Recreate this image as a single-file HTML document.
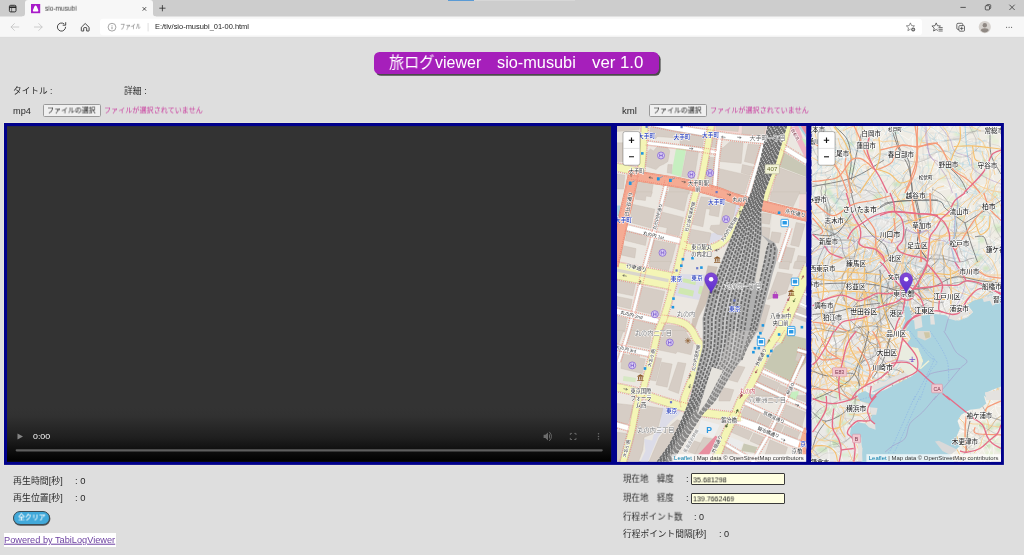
<!DOCTYPE html>
<html lang="ja"><head><meta charset="utf-8"><title>sio-musubi</title>
<style>
html,body{margin:0;padding:0;background:#dedede;}
#root{position:relative;width:1024px;height:555px;overflow:hidden;background:#dedede;font-family:"Liberation Sans","Noto Sans CJK JP",sans-serif;}
#bg{position:absolute;left:0;top:0;will-change:transform;}
.t{will-change:transform;position:absolute;white-space:nowrap;transform-origin:0 50%;line-height:1;margin:0;padding:0;font-weight:normal;text-decoration:none;}
.banner{position:absolute;left:374px;top:52.1px;width:285px;height:22.4px;margin:0;border-radius:5.5px;background:#a61fbb;box-shadow:1.6px 1.8px 0.6px #4a4a4a;}
.fbtn{position:absolute;box-sizing:border-box;background:#f0f0f0;border:0.6px solid #9a9a9a;border-radius:1.6px;}
.clr{position:absolute;box-sizing:border-box;background:#41a9da;border:0.9px solid #3c4a52;border-radius:7px;padding:0;margin:0;box-shadow:0.4px 0.8px 0.5px #555;}
.lnkbg{position:absolute;background:#fff;}
.inp{position:absolute;box-sizing:border-box;background:#ffffe0;border:1.05px solid #3a3a3a;border-radius:1px;}
</style></head>
<body><div id="root">
<svg id="bg" width="1024" height="555" viewBox="0 0 1024 555" font-family="Liberation Sans, Noto Sans CJK JP, sans-serif">
<rect x="0" y="0" width="1024" height="16.6" fill="#cdcdcd"/>
<rect x="448" y="0" width="26" height="1" fill="#5b9bd5"/>
<rect x="474" y="0" width="101" height="0.9" fill="#d9d9d9"/>
<rect x="0" y="16.6" width="1024" height="20.6" fill="#f7f7f7"/>
<rect x="0" y="36.9" width="1024" height="0.6" fill="#d4d4d4"/>
<path d="M22 16.6 Q25 16.6 25 13.6 L25 3 Q25 0 28 0 L150 0 Q153 0 153 3 L153 13.6 Q153 16.6 156 16.6 L156 18 L22 18 Z" fill="#f7f7f7"/>
<g fill="none" stroke="#1f1f1f" stroke-width="0.9"><rect x="9.4" y="5.3" width="6.6" height="6.6" rx="1.3"/><path d="M9.4 7.2 H16" stroke-width="1.5"/><path d="M11.6 7.4 V11.9" stroke-width="0.5"/></g>
<rect x="31" y="4" width="9.2" height="9.2" fill="#a81cc9"/><path d="M35.6 5.6 Q36.6 5.6 37.2 7.4 L38.3 10.3 Q38.6 11.6 37.5 11.6 L33.7 11.6 Q32.6 11.6 32.9 10.3 L34 7.4 Q34.6 5.6 35.6 5.6Z" fill="#fff"/>
<path d="M142.6 7.1 L146.2 10.7 M146.2 7.1 L142.6 10.7" stroke="#222" stroke-width="0.75" fill="none"/>
<path d="M159.3 8.2 H165.5 M162.4 5.1 V11.3" stroke="#222" stroke-width="0.75" fill="none"/>
<path d="M960.4 7.4 H965.8" stroke="#222" stroke-width="0.7"/>
<g fill="none" stroke="#222" stroke-width="0.65"><rect x="985.3" y="5.7" width="4.2" height="4.2" rx="0.8"/><path d="M986.6 5.7 V5.4 Q986.6 4.6 987.4 4.6 H989.8 Q990.7 4.6 990.7 5.5 V7.8 Q990.7 8.7 989.8 8.7 H989.5"/></g>
<path d="M1009.4 4.7 L1014.7 10 M1014.7 4.7 L1009.4 10" stroke="#222" stroke-width="0.7" fill="none"/>
<g fill="none" stroke="#c2c2c2" stroke-width="0.8" stroke-linecap="round" stroke-linejoin="round"><path d="M18.8 27 H11.2 M14.4 23.6 L11 27 L14.4 30.4"/><path d="M34.4 27 H42 M38.8 23.6 L42.2 27 L38.8 30.4"/></g>
<g fill="none" stroke="#2b2b2b" stroke-width="0.85" stroke-linecap="round" stroke-linejoin="round"><path d="M65.6 27.2 A4.1 4.1 0 1 1 63.9 23.7"/><path d="M65.7 22.6 V25.2 H63.1"/></g>
<path d="M81.3 27.3 L85.2 23.5 L89.1 27.3 V30.6 Q89.1 31 88.7 31 H86.7 V28.2 Q86.7 27.6 86.1 27.6 H84.3 Q83.7 27.6 83.7 28.2 V31 H81.7 Q81.3 31 81.3 30.6 Z" fill="none" stroke="#2b2b2b" stroke-width="0.85" stroke-linejoin="round"/>
<rect x="100" y="18.8" width="822" height="16.4" rx="3" fill="#fff"/>
<g><circle cx="112" cy="27.2" r="3.9" fill="none" stroke="#808080" stroke-width="0.7"/><path d="M112 26.6 V29.2" stroke="#6a6a6a" stroke-width="0.7"/><circle cx="112" cy="25.4" r="0.45" fill="#6a6a6a"/></g>
<path d="M148.1 23 V31.4" stroke="#c8c8c8" stroke-width="0.6"/>
<path d="M910.40 22.90 L911.58 25.58 L914.49 25.87 L912.30 27.82 L912.93 30.68 L910.40 29.20 L907.87 30.68 L908.50 27.82 L906.31 25.87 L909.22 25.58Z" fill="none" stroke="#5a5a5a" stroke-width="0.65" stroke-linejoin="round"/>
<circle cx="913.2" cy="29.5" r="2.6" fill="#fff"/><circle cx="913.2" cy="29.5" r="1.95" fill="#5a5a5a"/><path d="M912.1 29.5 H914.3 M913.2 28.4 V30.6" stroke="#fff" stroke-width="0.5"/>
<path d="M936.20 22.90 L937.43 25.70 L940.48 26.01 L938.20 28.05 L938.85 31.04 L936.20 29.50 L933.55 31.04 L934.20 28.05 L931.92 26.01 L934.97 25.70Z" fill="none" stroke="#333" stroke-width="0.7" stroke-linejoin="round"/>
<rect x="937.9" y="26.9" width="5" height="5" fill="#f7f7f7"/><path d="M938.9 27.6 H942.3 M938.9 29.3 H942.3 M938.9 31 H942.3" stroke="#333" stroke-width="0.7" stroke-linecap="round"/>
<g fill="none" stroke="#333" stroke-width="0.7" stroke-linejoin="round"><rect x="958.9" y="25.6" width="5.6" height="5.6" rx="1"/><path d="M958.9 29.4 H958 Q956.8 29.4 956.8 28.2 V24.6 Q956.8 23.3 958 23.3 H961.6 Q962.8 23.3 962.8 24.6 V25.6"/><path d="M960 28.4 H963.4 M961.7 26.7 V30.1"/></g>
<circle cx="984.8" cy="27.1" r="6.1" fill="#d6d2ce"/><circle cx="984.8" cy="25.3" r="2.2" fill="#8f8883"/><path d="M980.9 30.6 Q980.9 28.3 984.8 28.3 Q988.7 28.3 988.7 30.6 Q987 32.6 984.8 32.6 Q982.6 32.6 980.9 30.6Z" fill="#8f8883"/>
<g fill="#333"><circle cx="1006.6" cy="27.3" r="0.55"/><circle cx="1009.1" cy="27.3" r="0.55"/><circle cx="1011.6" cy="27.3" r="0.55"/></g>
<rect x="3.3" y="122.2" width="1001.2" height="343.4" fill="#e6e5dd"/>
<rect x="4" y="123" width="999.9" height="341.9" fill="#00008b"/>
<defs><linearGradient id="vg" x1="0" y1="0" x2="0" y2="1"><stop offset="0" stop-color="#333"/><stop offset="0.15" stop-color="#313131"/><stop offset="0.55" stop-color="#1f1f1f"/><stop offset="1" stop-color="#000"/></linearGradient></defs>
<rect x="7" y="126.1" width="604.1" height="335.7" fill="#333"/>
<rect x="7" y="408" width="604.1" height="53.8" fill="url(#vg)"/>
<path d="M17.5 433.4 L23 436.5 L17.5 439.6Z" fill="#858585"/>
<rect x="15.6" y="449.2" width="587.2" height="2.2" rx="1.1" fill="#5e5e5e"/>
<g fill="#6c6c6c"><path d="M543.6 434.7 H545.4 L548 432.4 V440.4 L545.4 438.1 H543.6Z"/><path d="M549 433.6 Q551.2 436.4 549 439.2 L549 433.6Z"/><path d="M549.2 431.8 Q553.8 436.4 549.2 441" fill="none" stroke="#6c6c6c" stroke-width="0.9"/></g>
<path d="M570.3 435 V433.4 H572 M574.3 433.4 H576 V435 M576 437.9 V439.5 H574.3 M572 439.5 H570.3 V437.9" fill="none" stroke="#6c6c6c" stroke-width="0.9"/>
<g fill="#6c6c6c"><circle cx="598.5" cy="433.7" r="0.75"/><circle cx="598.5" cy="436.4" r="0.75"/><circle cx="598.5" cy="439.1" r="0.75"/></g>
<svg x="617.0" y="126.1" width="189.2" height="335.7" viewBox="617.0 126.1 189.2 335.7" overflow="hidden">
<rect x="610" y="120" width="210" height="350" fill="#ebe7e1"/>
<path d="M713.8 125.2 L767.5 125.2 L766.2 136.5 L713.8 130.9Z" fill="#f1dad6"/>
<path d="M800.0 191.8 L807.5 191.8 L807.5 210.5 L798.8 208.0Z" fill="#f1dad6"/>
<path d="M676.0 148.4 L686.2 149.0 L681.0 177.1 L671.4 174.0Z" fill="#c6efc0"/>
<path d="M781.9 150.9 L806.2 165.9 L806.2 177.1 L777.5 165.9Z" fill="#c9c8b6"/>
<path d="M786.2 334.1 L806.2 338.5 L806.2 362.2 L790.0 381.6 L763.8 367.2 L775.0 347.2 L780.0 343.5Z" fill="#c7c8b2"/>
<path d="M616.6 205.5 L620.4 205.5 L620.4 216.8 L616.6 216.8Z" fill="#aad3df"/>
<path d="M735.0 203.6 L740.6 204.9 L731.2 230.5 L721.9 238.6 L710.0 243.6 L709.0 234.2 L717.5 231.8 L727.5 228.0Z" fill="#dcdce8"/>
<path d="M674.8 273.9 L705.4 274.5 L699.1 300.1 L671.0 294.8Z" fill="#dcdce8"/>
<path d="M683.5 278.2 L696.0 280.8 L695.4 285.1 L682.2 282.0Z" fill="#cfe8b0"/>
<path d="M679.8 287.6 L694.1 290.8 L692.9 296.4 L677.9 293.2Z" fill="#cfe8b0"/>
<path d="M699.8 285.8 L703.8 286.4 L701.2 294.8 L697.9 293.2Z" fill="#cfe8b0"/>
<path d="M661.6 407.5 L681.6 410.0 L678.5 414.8 L671.0 421.0 L664.1 428.8 L657.9 437.2 L647.9 461.6 L640.4 461.6 L645.4 451.0 L644.1 439.1 L652.2 440.4 L653.5 435.0 L659.8 427.2Z" fill="#dcdce8"/>
<path d="M623.5 376.0 L636.0 377.9 L635.4 382.2 L622.9 381.0Z" fill="#d6e8c4"/>
<path d="M788.8 392.2 L798.8 391.0 L797.5 399.1 L787.5 399.5Z" fill="#c6efc0"/>
<path d="M788.8 395.4 L797.5 395.4 L796.2 399.8 L788.1 399.8Z" fill="#c6efc0"/>
<path d="M701.0 419.8 L719.8 424.8 L713.5 437.9 L697.2 432.5Z" fill="#eeeeee"/>
<path d="M760.0 210.5 L772.5 211.8 L767.5 263.0 L757.5 263.0Z" fill="#e6e2dc"/>
<path d="M617.0 125.2 L639.8 125.2 L639.1 129.6 L617.0 131.5Z" fill="#d6cdc5" stroke="#c5b9ae" stroke-width="0.35"/>
<path d="M617.0 142.8 L622.9 142.8 L622.9 161.5 L617.0 161.5Z" fill="#d6cdc5" stroke="#c5b9ae" stroke-width="0.35"/>
<path d="M650.4 127.5 L657.2 126.8 L703.5 133.4 L702.2 144.0 L692.2 142.8 L691.0 139.0 L657.2 136.5 L656.0 138.4 L649.5 137.8Z" fill="#d6cdc5" stroke="#c5b9ae" stroke-width="0.35"/>
<path d="M644.1 155.2 L650.4 149.0 L653.5 150.9 L657.2 146.5 L667.2 147.1 L669.8 150.9 L667.9 161.5 L664.1 164.0 L659.8 165.9 L656.0 169.6 L642.9 165.2 L642.2 160.2Z" fill="#d6cdc5" stroke="#c5b9ae" stroke-width="0.35"/>
<path d="M667.9 164.6 L672.2 164.6 L671.6 173.4 L667.2 172.8Z" fill="#d6cdc5" stroke="#c5b9ae" stroke-width="0.35"/>
<path d="M686.6 150.2 L698.5 151.8 L694.1 179.0 L681.6 176.5Z" fill="#d6cdc5" stroke="#c5b9ae" stroke-width="0.35"/>
<path d="M707.9 157.1 L715.4 157.8 L712.2 185.2 L703.5 183.4Z" fill="#d6cdc5" stroke="#c5b9ae" stroke-width="0.35"/>
<path d="M712.9 138.4 L717.2 138.8 L716.6 147.8 L711.6 147.1Z" fill="#d6cdc5" stroke="#c5b9ae" stroke-width="0.35"/>
<path d="M716.2 125.2 L738.8 125.2 L738.1 131.5 L716.2 129.6Z" fill="#d6cdc5" stroke="#c5b9ae" stroke-width="0.35"/>
<path d="M742.5 125.2 L766.2 125.2 L763.8 135.9 L741.9 134.0Z" fill="#d6cdc5" stroke="#c5b9ae" stroke-width="0.35"/>
<path d="M723.1 147.8 L730.0 141.5 L743.1 142.8 L741.2 163.4 L720.0 161.5 L721.2 147.8Z" fill="#d6cdc5" stroke="#c5b9ae" stroke-width="0.35"/>
<path d="M748.1 144.0 L761.2 145.2 L755.0 164.0 L744.4 161.5Z" fill="#d6cdc5" stroke="#c5b9ae" stroke-width="0.35"/>
<path d="M742.5 164.6 L753.8 167.1 L750.0 175.2 L741.2 172.8Z" fill="#d6cdc5" stroke="#c5b9ae" stroke-width="0.35"/>
<path d="M718.1 168.4 L740.0 173.4 L750.0 175.9 L744.4 194.0 L715.6 194.0Z" fill="#d6cdc5" stroke="#c5b9ae" stroke-width="0.35"/>
<path d="M680.0 132.8 L703.8 136.5 L702.5 147.8 L680.0 144.6Z" fill="#d6cdc5" stroke="#c5b9ae" stroke-width="0.35"/>
<path d="M777.5 167.1 L806.2 177.8 L806.2 194.0 L771.9 194.0Z" fill="#d6cdc5" stroke="#c5b9ae" stroke-width="0.35"/>
<path d="M637.9 179.0 L653.5 182.8 L651.6 194.0 L634.8 194.0Z" fill="#d6cdc5" stroke="#c5b9ae" stroke-width="0.35"/>
<path d="M617.2 174.0 L624.8 175.2 L623.5 189.0 L617.2 189.0Z" fill="#d6cdc5" stroke="#c5b9ae" stroke-width="0.35"/>
<path d="M669.8 186.5 L689.8 190.2 L689.1 194.0 L668.5 194.0Z" fill="#d6cdc5" stroke="#c5b9ae" stroke-width="0.35"/>
<path d="M636.0 191.8 L652.2 191.8 L651.0 196.8 L646.0 196.1 L645.4 200.5 L635.4 199.2Z" fill="#d6cdc5" stroke="#c5b9ae" stroke-width="0.35"/>
<path d="M666.6 191.8 L688.5 191.8 L684.1 211.1 L664.1 205.5Z" fill="#d6cdc5" stroke="#c5b9ae" stroke-width="0.35"/>
<path d="M632.2 204.2 L654.8 209.2 L651.0 228.0 L630.4 222.4Z" fill="#d6cdc5" stroke="#c5b9ae" stroke-width="0.35"/>
<path d="M661.0 211.8 L683.5 217.4 L679.1 236.1 L666.0 233.0 L667.2 228.0 L657.9 226.1Z" fill="#d6cdc5" stroke="#c5b9ae" stroke-width="0.35"/>
<path d="M626.6 231.1 L647.2 236.1 L645.4 245.5 L625.4 240.5Z" fill="#d6cdc5" stroke="#c5b9ae" stroke-width="0.35"/>
<path d="M622.2 245.5 L636.0 248.6 L634.8 258.0 L621.0 254.9Z" fill="#d6cdc5" stroke="#c5b9ae" stroke-width="0.35"/>
<path d="M653.5 239.9 L676.0 244.2 L671.0 263.0 L649.1 263.0Z" fill="#d6cdc5" stroke="#c5b9ae" stroke-width="0.35"/>
<path d="M701.0 196.8 L712.2 198.0 L709.8 209.2 L706.0 208.6 L702.9 226.8 L692.2 224.2Z" fill="#d6cdc5" stroke="#c5b9ae" stroke-width="0.35"/>
<path d="M711.0 203.6 L720.4 204.9 L718.5 216.8 L709.1 214.9Z" fill="#d6cdc5" stroke="#c5b9ae" stroke-width="0.35"/>
<path d="M724.8 202.4 L736.0 204.2 L731.0 228.0 L723.5 235.5 L717.2 234.2 L709.8 229.2 L711.0 225.5 L719.8 224.9Z" fill="#d6cdc5" stroke="#c5b9ae" stroke-width="0.35"/>
<path d="M691.0 229.2 L711.0 233.0 L708.5 244.2 L689.8 243.0 L688.5 240.5Z" fill="#d6cdc5" stroke="#c5b9ae" stroke-width="0.35"/>
<path d="M771.2 191.8 L800.0 191.8 L793.1 206.8 L770.0 200.5Z" fill="#d6cdc5" stroke="#c5b9ae" stroke-width="0.35"/>
<path d="M762.5 213.0 L771.2 214.2 L769.4 224.2 L761.2 223.0Z" fill="#d6cdc5" stroke="#c5b9ae" stroke-width="0.35"/>
<path d="M761.2 226.8 L770.0 228.0 L767.5 253.0 L760.0 253.0Z" fill="#d6cdc5" stroke="#c5b9ae" stroke-width="0.35"/>
<path d="M771.9 231.8 L781.2 233.0 L778.8 243.0 L770.0 241.8Z" fill="#d6cdc5" stroke="#c5b9ae" stroke-width="0.35"/>
<path d="M796.2 222.4 L805.0 224.2 L798.8 246.8 L790.6 244.9Z" fill="#d6cdc5" stroke="#c5b9ae" stroke-width="0.35"/>
<path d="M783.8 246.8 L795.0 248.6 L791.2 263.0 L780.6 263.0Z" fill="#d6cdc5" stroke="#c5b9ae" stroke-width="0.35"/>
<path d="M798.1 255.5 L806.2 256.8 L806.2 263.0 L796.2 263.0Z" fill="#d6cdc5" stroke="#c5b9ae" stroke-width="0.35"/>
<path d="M649.8 261.4 L671.0 261.4 L668.5 270.8 L649.1 266.4Z" fill="#d6cdc5" stroke="#c5b9ae" stroke-width="0.35"/>
<path d="M617.0 280.1 L635.4 283.9 L632.9 295.8 L617.0 292.6Z" fill="#d6cdc5" stroke="#c5b9ae" stroke-width="0.35"/>
<path d="M617.0 296.4 L632.2 299.5 L630.4 308.9 L617.0 305.8Z" fill="#d6cdc5" stroke="#c5b9ae" stroke-width="0.35"/>
<path d="M642.2 286.4 L664.8 291.4 L659.1 315.8 L637.2 310.8Z" fill="#d6cdc5" stroke="#c5b9ae" stroke-width="0.35"/>
<path d="M617.0 315.8 L627.2 318.2 L624.8 332.0 L617.0 332.0Z" fill="#d6cdc5" stroke="#c5b9ae" stroke-width="0.35"/>
<path d="M632.2 319.5 L656.0 324.5 L654.8 332.0 L630.4 332.0Z" fill="#d6cdc5" stroke="#c5b9ae" stroke-width="0.35"/>
<path d="M663.5 324.5 L686.0 327.0 L691.6 332.0 L662.2 332.0Z" fill="#d6cdc5" stroke="#c5b9ae" stroke-width="0.35"/>
<path d="M707.9 265.8 L717.5 267.0 L706.2 303.2 L698.8 317.0 L694.1 332.0 L691.0 332.0 L692.5 319.5 L698.5 303.2 L703.5 287.0 L706.0 274.5Z" fill="#cfc3b8" stroke="#c5b9ae" stroke-width="0.35"/>
<path d="M777.5 272.0 L792.5 274.5 L786.2 293.2 L767.5 299.5Z" fill="#d6cdc5" stroke="#c5b9ae" stroke-width="0.35"/>
<path d="M780.0 261.4 L790.0 261.4 L788.8 269.5 L778.8 268.2Z" fill="#d6cdc5" stroke="#c5b9ae" stroke-width="0.35"/>
<path d="M795.0 261.4 L805.0 261.4 L803.1 269.5 L793.1 268.2Z" fill="#d6cdc5" stroke="#c5b9ae" stroke-width="0.35"/>
<path d="M760.0 303.2 L770.0 305.8 L762.5 332.0 L755.0 332.0Z" fill="#d6cdc5" stroke="#c5b9ae" stroke-width="0.35"/>
<path d="M797.5 305.8 L806.2 309.5 L806.2 322.0 L792.5 317.0Z" fill="#d6cdc5" stroke="#c5b9ae" stroke-width="0.35"/>
<path d="M628.5 330.4 L652.2 330.4 L649.1 348.5 L624.8 343.5Z" fill="#d6cdc5" stroke="#c5b9ae" stroke-width="0.35"/>
<path d="M660.4 330.4 L684.8 330.4 L693.5 343.5 L691.0 354.8 L677.2 351.6 L676.0 353.5 L657.9 349.8Z" fill="#d6cdc5" stroke="#c5b9ae" stroke-width="0.35"/>
<path d="M622.2 353.5 L629.8 355.4 L630.4 354.1 L639.8 356.0 L639.1 357.9 L645.4 359.1 L642.2 373.5 L621.0 368.5Z" fill="#d6cdc5" stroke="#c5b9ae" stroke-width="0.35"/>
<path d="M654.8 357.2 L661.6 358.5 L656.0 381.0 L649.1 379.8Z" fill="#d6cdc5" stroke="#c5b9ae" stroke-width="0.35"/>
<path d="M661.6 362.2 L672.2 364.1 L667.2 387.2 L656.0 384.8Z" fill="#d6cdc5" stroke="#c5b9ae" stroke-width="0.35"/>
<path d="M677.9 362.2 L686.0 363.5 L678.5 393.5 L668.5 389.8Z" fill="#d6cdc5" stroke="#c5b9ae" stroke-width="0.35"/>
<path d="M617.0 330.4 L623.5 330.4 L618.5 344.8 L617.0 344.8Z" fill="#d6cdc5" stroke="#c5b9ae" stroke-width="0.35"/>
<path d="M760.0 374.8 L780.0 383.5 L776.2 391.0 L756.2 382.2Z" fill="#d6cdc5" stroke="#c5b9ae" stroke-width="0.35"/>
<path d="M732.5 364.8 L745.0 367.2 L737.5 382.2 L728.8 379.8Z" fill="#d6cdc5" stroke="#c5b9ae" stroke-width="0.35"/>
<path d="M721.2 387.2 L733.8 389.8 L730.0 401.0 L718.8 401.0Z" fill="#d6cdc5" stroke="#c5b9ae" stroke-width="0.35"/>
<path d="M797.5 352.2 L805.0 354.1 L802.5 362.2 L795.0 360.4Z" fill="#d6cdc5" stroke="#c5b9ae" stroke-width="0.35"/>
<path d="M753.8 386.0 L775.0 394.8 L772.5 401.0 L750.0 393.5Z" fill="#d6cdc5" stroke="#c5b9ae" stroke-width="0.35"/>
<path d="M780.0 384.8 L792.5 389.8 L787.5 401.0 L776.2 396.0Z" fill="#d6cdc5" stroke="#c5b9ae" stroke-width="0.35"/>
<path d="M796.2 383.5 L806.2 387.2 L806.2 391.0 L795.0 389.8Z" fill="#d6cdc5" stroke="#c5b9ae" stroke-width="0.35"/>
<path d="M617.0 403.5 L634.8 405.4 L627.9 424.1 L617.0 422.9Z" fill="#d6cdc5" stroke="#c5b9ae" stroke-width="0.35"/>
<path d="M639.8 404.8 L662.9 408.5 L658.5 426.0 L653.5 433.5 L644.1 437.2 L642.9 449.8 L638.5 461.6 L624.8 461.6 L632.2 432.2Z" fill="#d6cdc5" stroke="#c5b9ae" stroke-width="0.35"/>
<path d="M617.0 432.2 L627.2 433.5 L621.0 461.6 L617.0 461.6Z" fill="#d6cdc5" stroke="#c5b9ae" stroke-width="0.35"/>
<path d="M665.4 429.8 L677.2 419.8 L681.0 421.0 L671.0 446.0 L657.2 461.6 L649.1 461.6 L659.1 437.9Z" fill="#d6cdc5" stroke="#c5b9ae" stroke-width="0.35"/>
<path d="M691.0 439.8 L702.2 443.5 L697.2 454.8 L686.0 451.0Z" fill="#d6cdc5" stroke="#c5b9ae" stroke-width="0.35"/>
<path d="M703.5 437.2 L713.5 439.1 L698.5 461.6 L691.0 461.6Z" fill="#d6cdc5" stroke="#c5b9ae" stroke-width="0.35"/>
<path d="M745.0 406.0 L760.0 412.2 L755.0 422.9 L740.0 416.0Z" fill="#d6cdc5" stroke="#c5b9ae" stroke-width="0.35"/>
<path d="M761.2 413.5 L772.5 418.5 L767.5 428.5 L756.2 423.5Z" fill="#d6cdc5" stroke="#c5b9ae" stroke-width="0.35"/>
<path d="M786.2 404.8 L805.6 412.2 L801.2 429.8 L780.0 419.8Z" fill="#d6cdc5" stroke="#c5b9ae" stroke-width="0.35"/>
<path d="M773.8 421.0 L783.8 425.4 L780.0 433.5 L770.0 429.8Z" fill="#d6cdc5" stroke="#c5b9ae" stroke-width="0.35"/>
<path d="M785.0 426.0 L800.0 432.2 L796.2 441.0 L781.2 434.8Z" fill="#d6cdc5" stroke="#c5b9ae" stroke-width="0.35"/>
<path d="M735.0 424.8 L752.5 432.2 L748.8 439.8 L731.2 432.2Z" fill="#d6cdc5" stroke="#c5b9ae" stroke-width="0.35"/>
<path d="M753.8 432.9 L763.8 437.2 L760.0 445.4 L750.0 441.0Z" fill="#d6cdc5" stroke="#c5b9ae" stroke-width="0.35"/>
<path d="M770.0 439.8 L787.5 447.2 L785.0 454.8 L765.0 454.8Z" fill="#d6cdc5" stroke="#c5b9ae" stroke-width="0.35"/>
<path d="M721.2 446.0 L740.0 452.2 L738.8 461.6 L717.5 461.6Z" fill="#d6cdc5" stroke="#c5b9ae" stroke-width="0.35"/>
<path d="M797.5 395.4 L806.2 395.4 L806.2 402.2 L796.2 398.5Z" fill="#d6cdc5" stroke="#c5b9ae" stroke-width="0.35"/>
<path d="M750.0 395.4 L782.5 395.4 L780.0 401.0 L761.2 403.5 L747.5 399.8Z" fill="#d6cdc5" stroke="#c5b9ae" stroke-width="0.35"/>
<path d="M727.5 436.0 L743.8 442.2 L740.0 449.8 L725.0 443.5Z" fill="#ebebeb"/>
<path d="M743.8 443.5 L757.5 447.2 L755.0 452.9 L741.2 451.0Z" fill="#c8c8b4"/>
<path d="M790.0 127.8 L798.1 125.2 L806.2 147.8 L806.2 160.2Z" fill="#efb6c3"/>
<path d="M797.5 125.2 L800.0 125.2 L806.2 134.6 L806.2 137.8Z" fill="#aad3df"/>
<path d="M800.2 125.2 L806.2 125.2 L806.2 135.0Z" fill="#e88ea0"/>
<path d="M801.2 137.8 L806.2 140.2 L806.2 147.1Z" fill="#c6efc0"/>
<path d="M652.0 123.0 C656.7 123.9 667.0 126.3 680.0 128.6 C693.0 130.9 715.5 134.8 730.0 136.8 C744.5 138.7 760.8 139.9 767.0 140.5" fill="none" stroke="#cfc9c2" stroke-width="6.3" stroke-linecap="butt" stroke-linejoin="round"/>
<path d="M646.0 142.8 C653.5 143.7 679.1 146.8 691.0 148.4 C702.9 150.0 712.9 151.8 717.2 152.5" fill="none" stroke="#cfc9c2" stroke-width="3.4000000000000004" stroke-linecap="butt" stroke-linejoin="round"/>
<path d="M719.8 137.8 C719.3 141.5 717.9 151.3 717.0 160.0 C716.1 168.7 714.9 185.0 714.5 190.0" fill="none" stroke="#cfc9c2" stroke-width="4.0" stroke-linecap="butt" stroke-linejoin="round"/>
<path d="M763.1 144.0 C760.7 152.2 751.6 183.5 748.8 193.0 C745.9 202.5 746.5 199.7 746.0 201.0" fill="none" stroke="#cfc9c2" stroke-width="3.45" stroke-linecap="butt" stroke-linejoin="round"/>
<path d="M783.0 147.0 L807.0 162.0" fill="none" stroke="#cfc9c2" stroke-width="5.1000000000000005" stroke-linecap="butt" stroke-linejoin="round"/>
<path d="M626.0 227.4 C630.6 228.5 644.3 232.0 653.5 234.2 C662.7 236.5 676.4 240.0 681.0 241.1" fill="none" stroke="#cfc9c2" stroke-width="5.7" stroke-linecap="butt" stroke-linejoin="round"/>
<path d="M667.0 181.0 C666.5 183.0 666.4 184.1 664.1 193.0 C661.9 201.9 656.5 222.8 653.5 234.2 C650.5 245.8 648.3 253.2 646.0 262.0 C643.7 270.8 642.7 275.5 639.8 287.0 C636.8 298.5 632.0 318.5 628.5 331.0 C625.0 343.5 620.2 357.0 618.5 362.2" fill="none" stroke="#cfc9c2" stroke-width="3.2" stroke-linecap="butt" stroke-linejoin="round"/>
<path d="M616.0 311.2 L658.5 321.4" fill="none" stroke="#cfc9c2" stroke-width="5.7" stroke-linecap="butt" stroke-linejoin="round"/>
<path d="M616.0 347.0 L649.8 354.1" fill="none" stroke="#cfc9c2" stroke-width="5.2" stroke-linecap="butt" stroke-linejoin="round"/>
<path d="M616.0 424.5 L629.8 428.5" fill="none" stroke="#cfc9c2" stroke-width="5.2" stroke-linecap="butt" stroke-linejoin="round"/>
<path d="M762.5 371.0 L807.0 391.5" fill="none" stroke="#cfc9c2" stroke-width="3.7" stroke-linecap="butt" stroke-linejoin="round"/>
<path d="M755.0 383.5 L807.0 408.0" fill="none" stroke="#cfc9c2" stroke-width="3.7" stroke-linecap="butt" stroke-linejoin="round"/>
<path d="M745.0 402.9 C748.8 404.7 757.2 408.6 767.5 413.5 C777.8 418.4 800.4 428.9 807.0 432.0" fill="none" stroke="#cfc9c2" stroke-width="3.5" stroke-linecap="butt" stroke-linejoin="round"/>
<path d="M736.2 419.8 C739.4 420.9 747.7 423.5 755.0 426.4 C762.3 429.3 771.3 433.5 780.0 437.0 C788.7 440.5 802.5 445.8 807.0 447.6" fill="none" stroke="#cfc9c2" stroke-width="7.7" stroke-linecap="butt" stroke-linejoin="round"/>
<path d="M723.8 443.5 L760.0 465.0" fill="none" stroke="#cfc9c2" stroke-width="3.3" stroke-linecap="butt" stroke-linejoin="round"/>
<path d="M803.8 356.0 C801.9 360.2 795.6 373.7 792.5 381.0 C789.4 388.3 788.3 392.3 785.0 400.0 C781.7 407.7 777.1 418.3 772.5 427.2 C767.9 436.2 760.9 447.5 757.5 453.5 C754.1 459.5 752.9 461.4 752.0 463.0" fill="none" stroke="#cfc9c2" stroke-width="3.2" stroke-linecap="butt" stroke-linejoin="round"/>
<path d="M797.5 349.8 L807.0 352.5" fill="none" stroke="#cfc9c2" stroke-width="3.2" stroke-linecap="butt" stroke-linejoin="round"/>
<path d="M790.0 228.0 L778.8 262.0" fill="none" stroke="#cfc9c2" stroke-width="3.2" stroke-linecap="butt" stroke-linejoin="round"/>
<path d="M797.5 292.0 L807.0 294.7" fill="none" stroke="#cfc9c2" stroke-width="2.7" stroke-linecap="butt" stroke-linejoin="round"/>
<path d="M796.9 302.0 L807.0 306.6" fill="none" stroke="#cfc9c2" stroke-width="2.7" stroke-linecap="butt" stroke-linejoin="round"/>
<path d="M795.0 313.2 L807.0 317.3" fill="none" stroke="#cfc9c2" stroke-width="2.7" stroke-linecap="butt" stroke-linejoin="round"/>
<path d="M652.0 123.0 C656.7 123.9 667.0 126.3 680.0 128.6 C693.0 130.9 715.5 134.8 730.0 136.8 C744.5 138.7 760.8 139.9 767.0 140.5" fill="none" stroke="#ffffff" stroke-width="5.6" stroke-linecap="butt" stroke-linejoin="round"/>
<path d="M646.0 142.8 C653.5 143.7 679.1 146.8 691.0 148.4 C702.9 150.0 712.9 151.8 717.2 152.5" fill="none" stroke="#ffffff" stroke-width="2.7" stroke-linecap="butt" stroke-linejoin="round"/>
<path d="M719.8 137.8 C719.3 141.5 717.9 151.3 717.0 160.0 C716.1 168.7 714.9 185.0 714.5 190.0" fill="none" stroke="#ffffff" stroke-width="3.3" stroke-linecap="butt" stroke-linejoin="round"/>
<path d="M763.1 144.0 C760.7 152.2 751.6 183.5 748.8 193.0 C745.9 202.5 746.5 199.7 746.0 201.0" fill="none" stroke="#ffffff" stroke-width="2.75" stroke-linecap="butt" stroke-linejoin="round"/>
<path d="M783.0 147.0 L807.0 162.0" fill="none" stroke="#ffffff" stroke-width="4.4" stroke-linecap="butt" stroke-linejoin="round"/>
<path d="M626.0 227.4 C630.6 228.5 644.3 232.0 653.5 234.2 C662.7 236.5 676.4 240.0 681.0 241.1" fill="none" stroke="#ffffff" stroke-width="5" stroke-linecap="butt" stroke-linejoin="round"/>
<path d="M667.0 181.0 C666.5 183.0 666.4 184.1 664.1 193.0 C661.9 201.9 656.5 222.8 653.5 234.2 C650.5 245.8 648.3 253.2 646.0 262.0 C643.7 270.8 642.7 275.5 639.8 287.0 C636.8 298.5 632.0 318.5 628.5 331.0 C625.0 343.5 620.2 357.0 618.5 362.2" fill="none" stroke="#ffffff" stroke-width="2.5" stroke-linecap="butt" stroke-linejoin="round"/>
<path d="M616.0 311.2 L658.5 321.4" fill="none" stroke="#ffffff" stroke-width="5" stroke-linecap="butt" stroke-linejoin="round"/>
<path d="M616.0 347.0 L649.8 354.1" fill="none" stroke="#ffffff" stroke-width="4.5" stroke-linecap="butt" stroke-linejoin="round"/>
<path d="M616.0 424.5 L629.8 428.5" fill="none" stroke="#ffffff" stroke-width="4.5" stroke-linecap="butt" stroke-linejoin="round"/>
<path d="M762.5 371.0 L807.0 391.5" fill="none" stroke="#ffffff" stroke-width="3" stroke-linecap="butt" stroke-linejoin="round"/>
<path d="M755.0 383.5 L807.0 408.0" fill="none" stroke="#ffffff" stroke-width="3" stroke-linecap="butt" stroke-linejoin="round"/>
<path d="M745.0 402.9 C748.8 404.7 757.2 408.6 767.5 413.5 C777.8 418.4 800.4 428.9 807.0 432.0" fill="none" stroke="#ffffff" stroke-width="2.8" stroke-linecap="butt" stroke-linejoin="round"/>
<path d="M736.2 419.8 C739.4 420.9 747.7 423.5 755.0 426.4 C762.3 429.3 771.3 433.5 780.0 437.0 C788.7 440.5 802.5 445.8 807.0 447.6" fill="none" stroke="#ffffff" stroke-width="7" stroke-linecap="butt" stroke-linejoin="round"/>
<path d="M723.8 443.5 L760.0 465.0" fill="none" stroke="#ffffff" stroke-width="2.6" stroke-linecap="butt" stroke-linejoin="round"/>
<path d="M803.8 356.0 C801.9 360.2 795.6 373.7 792.5 381.0 C789.4 388.3 788.3 392.3 785.0 400.0 C781.7 407.7 777.1 418.3 772.5 427.2 C767.9 436.2 760.9 447.5 757.5 453.5 C754.1 459.5 752.9 461.4 752.0 463.0" fill="none" stroke="#ffffff" stroke-width="2.5" stroke-linecap="butt" stroke-linejoin="round"/>
<path d="M797.5 349.8 L807.0 352.5" fill="none" stroke="#ffffff" stroke-width="2.5" stroke-linecap="butt" stroke-linejoin="round"/>
<path d="M790.0 228.0 L778.8 262.0" fill="none" stroke="#ffffff" stroke-width="2.5" stroke-linecap="butt" stroke-linejoin="round"/>
<path d="M797.5 292.0 L807.0 294.7" fill="none" stroke="#ffffff" stroke-width="2" stroke-linecap="butt" stroke-linejoin="round"/>
<path d="M796.9 302.0 L807.0 306.6" fill="none" stroke="#ffffff" stroke-width="2" stroke-linecap="butt" stroke-linejoin="round"/>
<path d="M795.0 313.2 L807.0 317.3" fill="none" stroke="#ffffff" stroke-width="2" stroke-linecap="butt" stroke-linejoin="round"/>
<path d="M645.0 124.0 C644.7 128.3 643.7 142.0 643.0 150.0 C642.3 158.0 641.3 168.3 641.0 172.0" fill="none" stroke="#c9cb8a" stroke-width="6.6" stroke-linecap="butt" stroke-linejoin="round"/>
<path d="M615.0 166.8 C617.2 167.3 624.3 168.7 628.5 169.6 C632.7 170.5 638.1 171.9 640.0 172.3" fill="none" stroke="#c9cb8a" stroke-width="7.6" stroke-linecap="butt" stroke-linejoin="round"/>
<path d="M711.5 124.0 C710.6 129.2 707.8 145.6 706.0 155.0 C704.2 164.4 702.7 173.9 701.0 180.2 C699.3 186.6 697.4 187.8 695.8 193.0 C694.1 198.2 692.7 204.9 691.0 211.8 C689.3 218.6 687.4 225.9 685.4 234.2 C683.4 242.6 681.2 252.2 678.8 262.0 C676.4 271.8 673.5 283.9 671.0 293.2 C668.5 302.6 665.6 312.0 663.5 318.2 C661.4 324.5 660.1 324.7 658.2 331.0 C656.3 337.3 654.3 348.1 652.2 356.0 C650.2 363.9 647.6 372.9 646.0 378.5 C644.4 384.1 644.4 385.6 642.9 389.8 C641.4 393.9 639.2 396.2 637.2 403.5 C635.3 410.8 633.4 423.6 631.0 433.5 C628.6 443.4 624.3 458.1 623.0 463.0" fill="none" stroke="#c9cb8a" stroke-width="6.1" stroke-linecap="butt" stroke-linejoin="round"/>
<path d="M745.0 204.2 C744.0 206.5 741.2 213.0 738.8 218.0 C736.2 223.0 733.5 229.7 730.0 234.2 C726.5 238.8 722.7 243.0 717.5 245.5 C712.3 248.0 704.5 249.3 698.8 249.2 C693.0 249.2 685.6 245.7 683.0 245.0" fill="none" stroke="#c9cb8a" stroke-width="6.3" stroke-linecap="butt" stroke-linejoin="round"/>
<path d="M662.0 319.0 C664.3 319.3 672.0 319.8 676.0 320.8 C680.0 321.7 683.3 322.8 686.0 324.5 C688.7 326.2 690.6 328.7 692.2 331.0 C693.9 333.3 694.5 336.0 696.0 338.5 C697.5 341.0 700.3 343.2 701.0 346.0 C701.7 348.8 700.8 351.2 700.0 355.0 C699.2 358.8 697.9 363.1 696.0 368.5 C694.1 373.9 690.5 382.0 688.5 387.2 C686.5 392.5 684.6 396.7 684.0 400.0 C683.4 403.3 684.8 405.8 685.0 407.0" fill="none" stroke="#c9cb8a" stroke-width="6.6" stroke-linecap="butt" stroke-linejoin="round"/>
<path d="M615.0 270.3 L672.9 281.4" fill="none" stroke="#c9cb8a" stroke-width="16.6" stroke-linecap="butt" stroke-linejoin="round"/>
<path d="M615.0 387.2 C616.7 387.5 621.2 388.1 625.4 389.1 C629.6 390.1 635.3 391.5 640.0 393.0 C644.7 394.5 649.2 396.5 653.5 398.0 C657.8 399.5 660.6 400.4 666.0 402.0 C671.4 403.6 679.8 406.1 686.0 407.9 C692.2 409.6 695.2 411.1 703.5 412.5 C711.8 413.9 729.8 415.9 736.0 416.6 C742.2 417.4 740.2 416.9 741.0 417.0" fill="none" stroke="#c9cb8a" stroke-width="7.6" stroke-linecap="butt" stroke-linejoin="round"/>
<path d="M809.0 268.0 C807.5 271.2 803.4 280.1 800.2 287.0 C797.1 293.9 793.5 302.2 790.2 309.5 C787.0 316.8 783.4 325.8 781.0 331.0 C778.6 336.2 776.8 339.3 776.0 341.0" fill="none" stroke="#c9cb8a" stroke-width="11.1" stroke-linecap="butt" stroke-linejoin="round"/>
<path d="M781.0 328.0 C778.8 331.6 771.4 342.6 767.5 349.8 C763.6 356.9 760.8 364.1 757.5 371.0 C754.2 377.9 750.2 386.2 747.5 391.0 C744.8 395.8 743.1 396.0 741.0 400.0 C738.9 404.0 737.2 409.2 734.8 414.8 C732.2 420.3 729.5 425.5 726.0 433.5 C722.5 441.5 716.0 458.1 714.0 463.0" fill="none" stroke="#c9cb8a" stroke-width="7.1" stroke-linecap="butt" stroke-linejoin="round"/>
<path d="M789.0 125.0 C788.1 128.4 785.4 138.8 783.5 145.2 C781.6 151.8 779.3 158.8 777.5 164.0 C775.7 169.2 774.2 171.7 772.5 176.5 C770.8 181.3 768.6 188.8 767.3 193.0 C766.0 197.2 765.0 200.5 764.5 202.0" fill="none" stroke="#c9cb8a" stroke-width="4.5" stroke-linecap="butt" stroke-linejoin="round"/>
<path d="M645.0 124.0 C644.7 128.3 643.7 142.0 643.0 150.0 C642.3 158.0 641.3 168.3 641.0 172.0" fill="none" stroke="#f4f5b6" stroke-width="6" stroke-linecap="butt" stroke-linejoin="round"/>
<path d="M615.0 166.8 C617.2 167.3 624.3 168.7 628.5 169.6 C632.7 170.5 638.1 171.9 640.0 172.3" fill="none" stroke="#f4f5b6" stroke-width="7" stroke-linecap="butt" stroke-linejoin="round"/>
<path d="M711.5 124.0 C710.6 129.2 707.8 145.6 706.0 155.0 C704.2 164.4 702.7 173.9 701.0 180.2 C699.3 186.6 697.4 187.8 695.8 193.0 C694.1 198.2 692.7 204.9 691.0 211.8 C689.3 218.6 687.4 225.9 685.4 234.2 C683.4 242.6 681.2 252.2 678.8 262.0 C676.4 271.8 673.5 283.9 671.0 293.2 C668.5 302.6 665.6 312.0 663.5 318.2 C661.4 324.5 660.1 324.7 658.2 331.0 C656.3 337.3 654.3 348.1 652.2 356.0 C650.2 363.9 647.6 372.9 646.0 378.5 C644.4 384.1 644.4 385.6 642.9 389.8 C641.4 393.9 639.2 396.2 637.2 403.5 C635.3 410.8 633.4 423.6 631.0 433.5 C628.6 443.4 624.3 458.1 623.0 463.0" fill="none" stroke="#f4f5b6" stroke-width="5.5" stroke-linecap="butt" stroke-linejoin="round"/>
<path d="M745.0 204.2 C744.0 206.5 741.2 213.0 738.8 218.0 C736.2 223.0 733.5 229.7 730.0 234.2 C726.5 238.8 722.7 243.0 717.5 245.5 C712.3 248.0 704.5 249.3 698.8 249.2 C693.0 249.2 685.6 245.7 683.0 245.0" fill="none" stroke="#f4f5b6" stroke-width="5.7" stroke-linecap="butt" stroke-linejoin="round"/>
<path d="M662.0 319.0 C664.3 319.3 672.0 319.8 676.0 320.8 C680.0 321.7 683.3 322.8 686.0 324.5 C688.7 326.2 690.6 328.7 692.2 331.0 C693.9 333.3 694.5 336.0 696.0 338.5 C697.5 341.0 700.3 343.2 701.0 346.0 C701.7 348.8 700.8 351.2 700.0 355.0 C699.2 358.8 697.9 363.1 696.0 368.5 C694.1 373.9 690.5 382.0 688.5 387.2 C686.5 392.5 684.6 396.7 684.0 400.0 C683.4 403.3 684.8 405.8 685.0 407.0" fill="none" stroke="#f4f5b6" stroke-width="6" stroke-linecap="butt" stroke-linejoin="round"/>
<path d="M615.0 270.3 L672.9 281.4" fill="none" stroke="#f4f5b6" stroke-width="16" stroke-linecap="butt" stroke-linejoin="round"/>
<path d="M615.0 387.2 C616.7 387.5 621.2 388.1 625.4 389.1 C629.6 390.1 635.3 391.5 640.0 393.0 C644.7 394.5 649.2 396.5 653.5 398.0 C657.8 399.5 660.6 400.4 666.0 402.0 C671.4 403.6 679.8 406.1 686.0 407.9 C692.2 409.6 695.2 411.1 703.5 412.5 C711.8 413.9 729.8 415.9 736.0 416.6 C742.2 417.4 740.2 416.9 741.0 417.0" fill="none" stroke="#f4f5b6" stroke-width="7" stroke-linecap="butt" stroke-linejoin="round"/>
<path d="M809.0 268.0 C807.5 271.2 803.4 280.1 800.2 287.0 C797.1 293.9 793.5 302.2 790.2 309.5 C787.0 316.8 783.4 325.8 781.0 331.0 C778.6 336.2 776.8 339.3 776.0 341.0" fill="none" stroke="#f4f5b6" stroke-width="10.5" stroke-linecap="butt" stroke-linejoin="round"/>
<path d="M781.0 328.0 C778.8 331.6 771.4 342.6 767.5 349.8 C763.6 356.9 760.8 364.1 757.5 371.0 C754.2 377.9 750.2 386.2 747.5 391.0 C744.8 395.8 743.1 396.0 741.0 400.0 C738.9 404.0 737.2 409.2 734.8 414.8 C732.2 420.3 729.5 425.5 726.0 433.5 C722.5 441.5 716.0 458.1 714.0 463.0" fill="none" stroke="#f4f5b6" stroke-width="6.5" stroke-linecap="butt" stroke-linejoin="round"/>
<path d="M789.0 125.0 C788.1 128.4 785.4 138.8 783.5 145.2 C781.6 151.8 779.3 158.8 777.5 164.0 C775.7 169.2 774.2 171.7 772.5 176.5 C770.8 181.3 768.6 188.8 767.3 193.0 C766.0 197.2 765.0 200.5 764.5 202.0" fill="none" stroke="#f4f5b6" stroke-width="3.9" stroke-linecap="butt" stroke-linejoin="round"/>
<path d="M615.0 269.6 L668.5 280.6" fill="none" stroke="#dad6cc" stroke-width="3.2" stroke-linecap="butt" stroke-linejoin="round"/>
<path d="M630.0 175.0 C635.0 175.8 650.7 178.3 660.0 179.8 C669.3 181.3 676.7 182.1 686.0 184.1 C695.3 186.1 707.5 189.1 716.0 191.6 C724.5 194.1 729.0 196.8 737.0 199.2 C745.0 201.7 752.2 203.1 764.0 206.0 C775.8 208.9 800.7 214.8 808.0 216.6" fill="none" stroke="#d98a70" stroke-width="10.6" stroke-linecap="butt" stroke-linejoin="round"/>
<path d="M634.0 172.0 C633.2 175.5 631.5 184.3 629.5 193.0 C627.5 201.7 625.0 212.1 622.2 224.2 C619.5 236.4 614.5 259.0 613.0 266.0" fill="none" stroke="#d98a70" stroke-width="11.2" stroke-linecap="butt" stroke-linejoin="round"/>
<path d="M630.0 175.0 C635.0 175.8 650.7 178.3 660.0 179.8 C669.3 181.3 676.7 182.1 686.0 184.1 C695.3 186.1 707.5 189.1 716.0 191.6 C724.5 194.1 729.0 196.8 737.0 199.2 C745.0 201.7 752.2 203.1 764.0 206.0 C775.8 208.9 800.7 214.8 808.0 216.6" fill="none" stroke="#f5ab93" stroke-width="10" stroke-linecap="butt" stroke-linejoin="round"/>
<path d="M634.0 172.0 C633.2 175.5 631.5 184.3 629.5 193.0 C627.5 201.7 625.0 212.1 622.2 224.2 C619.5 236.4 614.5 259.0 613.0 266.0" fill="none" stroke="#f5ab93" stroke-width="10.6" stroke-linecap="butt" stroke-linejoin="round"/>
<path d="M806.2 427.2 L806.2 454.8 L795.6 454.8 L803.8 428.5Z" fill="#f6b193"/>
<path d="M652.7 119.3 C657.4 120.2 667.7 122.6 680.7 124.9 C693.6 127.1 716.1 131.0 730.5 133.0 C745.0 135.0 761.2 136.1 767.4 136.7" fill="none" stroke="#ee7f70" stroke-width="0.8" stroke-linecap="butt" stroke-linejoin="round" stroke-dasharray="0.9 1.1"/>
<path d="M651.3 126.7 C655.9 127.7 666.3 130.0 679.3 132.3 C692.4 134.6 714.9 138.5 729.5 140.5 C744.0 142.5 760.4 143.7 766.6 144.3" fill="none" stroke="#ee7f70" stroke-width="0.8" stroke-linecap="butt" stroke-linejoin="round" stroke-dasharray="0.9 1.1"/>
<path d="M646.3 140.4 C653.8 141.4 679.4 144.4 691.3 146.1 C703.2 147.7 713.2 149.5 717.6 150.2" fill="none" stroke="#ee7f70" stroke-width="0.8" stroke-linecap="butt" stroke-linejoin="round" stroke-dasharray="0.9 1.1"/>
<path d="M645.7 145.1 C653.2 146.0 678.8 149.1 690.7 150.7 C702.5 152.4 712.5 154.1 716.9 154.8" fill="none" stroke="#ee7f70" stroke-width="0.8" stroke-linecap="butt" stroke-linejoin="round" stroke-dasharray="0.9 1.1"/>
<path d="M722.4 138.1 C721.9 141.8 720.5 151.6 719.6 160.3 C718.8 169.0 717.6 185.2 717.1 190.2" fill="none" stroke="#ee7f70" stroke-width="0.8" stroke-linecap="butt" stroke-linejoin="round" stroke-dasharray="0.9 1.1"/>
<path d="M717.1 137.4 C716.7 141.1 715.2 151.0 714.4 159.7 C713.5 168.5 712.3 184.8 711.9 189.8" fill="none" stroke="#ee7f70" stroke-width="0.8" stroke-linecap="butt" stroke-linejoin="round" stroke-dasharray="0.9 1.1"/>
<path d="M765.4 144.7 C763.0 152.8 753.9 184.2 751.0 193.7 C748.2 203.2 748.7 200.4 748.2 201.8" fill="none" stroke="#ee7f70" stroke-width="0.8" stroke-linecap="butt" stroke-linejoin="round" stroke-dasharray="0.9 1.1"/>
<path d="M760.8 143.3 C758.4 151.5 749.3 182.8 746.5 192.3 C743.6 201.8 744.2 198.9 743.8 200.2" fill="none" stroke="#ee7f70" stroke-width="0.8" stroke-linecap="butt" stroke-linejoin="round" stroke-dasharray="0.9 1.1"/>
<path d="M784.7 144.3 L808.7 159.3" fill="none" stroke="#ee7f70" stroke-width="0.8" stroke-linecap="butt" stroke-linejoin="round" stroke-dasharray="0.9 1.1"/>
<path d="M781.3 149.7 L805.3 164.7" fill="none" stroke="#ee7f70" stroke-width="0.8" stroke-linecap="butt" stroke-linejoin="round" stroke-dasharray="0.9 1.1"/>
<path d="M626.8 224.0 C631.4 225.1 645.2 228.6 654.3 230.9 C663.5 233.1 677.3 236.6 681.8 237.7" fill="none" stroke="#ee7f70" stroke-width="0.8" stroke-linecap="butt" stroke-linejoin="round" stroke-dasharray="0.9 1.1"/>
<path d="M625.2 230.8 C629.7 231.9 643.5 235.4 652.7 237.6 C661.8 239.9 675.6 243.4 680.2 244.5" fill="none" stroke="#ee7f70" stroke-width="0.8" stroke-linecap="butt" stroke-linejoin="round" stroke-dasharray="0.9 1.1"/>
<path d="M669.2 181.5 C668.7 183.5 668.5 184.7 666.3 193.6 C664.0 202.4 658.7 223.3 655.7 234.8 C652.7 246.3 650.5 253.8 648.2 262.6 C645.9 271.4 644.8 276.0 641.9 287.6 C639.0 299.1 634.2 319.0 630.7 331.6 C627.1 344.2 622.3 357.7 620.6 362.9" fill="none" stroke="#ee7f70" stroke-width="0.8" stroke-linecap="butt" stroke-linejoin="round" stroke-dasharray="0.9 1.1"/>
<path d="M664.8 180.5 C664.3 182.5 664.2 183.6 661.9 192.4 C659.7 201.3 654.3 222.2 651.3 233.7 C648.3 245.2 646.1 252.6 643.8 261.4 C641.5 270.2 640.5 275.0 637.6 286.4 C634.7 297.9 629.9 317.9 626.3 330.4 C622.8 342.9 618.0 356.4 616.4 361.6" fill="none" stroke="#ee7f70" stroke-width="0.8" stroke-linecap="butt" stroke-linejoin="round" stroke-dasharray="0.9 1.1"/>
<path d="M616.8 307.8 L659.3 318.0" fill="none" stroke="#ee7f70" stroke-width="0.8" stroke-linecap="butt" stroke-linejoin="round" stroke-dasharray="0.9 1.1"/>
<path d="M615.2 314.6 L657.7 324.8" fill="none" stroke="#ee7f70" stroke-width="0.8" stroke-linecap="butt" stroke-linejoin="round" stroke-dasharray="0.9 1.1"/>
<path d="M616.7 343.8 L650.4 350.9" fill="none" stroke="#ee7f70" stroke-width="0.8" stroke-linecap="butt" stroke-linejoin="round" stroke-dasharray="0.9 1.1"/>
<path d="M615.3 350.2 L649.1 357.3" fill="none" stroke="#ee7f70" stroke-width="0.8" stroke-linecap="butt" stroke-linejoin="round" stroke-dasharray="0.9 1.1"/>
<path d="M616.9 421.4 L630.7 425.4" fill="none" stroke="#ee7f70" stroke-width="0.8" stroke-linecap="butt" stroke-linejoin="round" stroke-dasharray="0.9 1.1"/>
<path d="M615.1 427.6 L628.8 431.6" fill="none" stroke="#ee7f70" stroke-width="0.8" stroke-linecap="butt" stroke-linejoin="round" stroke-dasharray="0.9 1.1"/>
<path d="M763.5 368.7 L808.0 389.2" fill="none" stroke="#ee7f70" stroke-width="0.8" stroke-linecap="butt" stroke-linejoin="round" stroke-dasharray="0.9 1.1"/>
<path d="M761.5 373.3 L806.0 393.8" fill="none" stroke="#ee7f70" stroke-width="0.8" stroke-linecap="butt" stroke-linejoin="round" stroke-dasharray="0.9 1.1"/>
<path d="M756.1 381.2 L808.1 405.7" fill="none" stroke="#ee7f70" stroke-width="0.8" stroke-linecap="butt" stroke-linejoin="round" stroke-dasharray="0.9 1.1"/>
<path d="M753.9 385.8 L805.9 410.3" fill="none" stroke="#ee7f70" stroke-width="0.8" stroke-linecap="butt" stroke-linejoin="round" stroke-dasharray="0.9 1.1"/>
<path d="M746.0 400.7 C749.8 402.5 758.2 406.5 768.5 411.3 C778.9 416.2 801.4 426.7 808.0 429.8" fill="none" stroke="#ee7f70" stroke-width="0.8" stroke-linecap="butt" stroke-linejoin="round" stroke-dasharray="0.9 1.1"/>
<path d="M744.0 405.1 C747.7 406.8 756.1 410.8 766.5 415.7 C776.8 420.5 799.4 431.1 806.0 434.2" fill="none" stroke="#ee7f70" stroke-width="0.8" stroke-linecap="butt" stroke-linejoin="round" stroke-dasharray="0.9 1.1"/>
<path d="M737.8 415.5 C740.9 416.6 749.3 419.3 756.7 422.2 C764.0 425.1 773.0 429.3 781.7 432.8 C790.4 436.4 804.2 441.6 808.6 443.4" fill="none" stroke="#ee7f70" stroke-width="0.8" stroke-linecap="butt" stroke-linejoin="round" stroke-dasharray="0.9 1.1"/>
<path d="M734.7 424.0 C737.8 425.1 746.1 427.7 753.3 430.6 C760.6 433.4 769.6 437.6 778.3 441.2 C787.0 444.7 800.8 450.0 805.4 451.8" fill="none" stroke="#ee7f70" stroke-width="0.8" stroke-linecap="butt" stroke-linejoin="round" stroke-dasharray="0.9 1.1"/>
<path d="M724.9 441.5 L761.2 463.0" fill="none" stroke="#ee7f70" stroke-width="0.8" stroke-linecap="butt" stroke-linejoin="round" stroke-dasharray="0.9 1.1"/>
<path d="M722.6 445.5 L758.8 467.0" fill="none" stroke="#ee7f70" stroke-width="0.8" stroke-linecap="butt" stroke-linejoin="round" stroke-dasharray="0.9 1.1"/>
<path d="M805.8 356.9 C803.9 361.1 797.7 374.6 794.6 381.9 C791.4 389.2 790.4 393.2 787.1 400.9 C783.7 408.6 779.1 419.3 774.5 428.3 C769.9 437.2 762.9 448.6 759.5 454.6 C756.0 460.6 754.9 462.5 753.9 464.1" fill="none" stroke="#ee7f70" stroke-width="0.8" stroke-linecap="butt" stroke-linejoin="round" stroke-dasharray="0.9 1.1"/>
<path d="M801.7 355.1 C799.8 359.3 793.6 372.8 790.4 380.1 C787.3 387.5 786.3 391.4 782.9 399.1 C779.6 406.8 775.1 417.3 770.5 426.2 C765.9 435.1 759.0 446.4 755.5 452.4 C752.1 458.3 751.0 460.3 750.1 461.9" fill="none" stroke="#ee7f70" stroke-width="0.8" stroke-linecap="butt" stroke-linejoin="round" stroke-dasharray="0.9 1.1"/>
<path d="M798.1 347.6 L807.6 350.3" fill="none" stroke="#ee7f70" stroke-width="0.8" stroke-linecap="butt" stroke-linejoin="round" stroke-dasharray="0.9 1.1"/>
<path d="M796.9 351.9 L806.4 354.7" fill="none" stroke="#ee7f70" stroke-width="0.8" stroke-linecap="butt" stroke-linejoin="round" stroke-dasharray="0.9 1.1"/>
<path d="M792.1 228.7 L780.9 262.7" fill="none" stroke="#ee7f70" stroke-width="0.8" stroke-linecap="butt" stroke-linejoin="round" stroke-dasharray="0.9 1.1"/>
<path d="M787.9 227.3 L776.6 261.3" fill="none" stroke="#ee7f70" stroke-width="0.8" stroke-linecap="butt" stroke-linejoin="round" stroke-dasharray="0.9 1.1"/>
<path d="M649.0 124.3 C648.7 128.6 647.7 142.3 647.0 150.3 C646.3 158.3 645.3 168.7 645.0 172.4" fill="none" stroke="#ee7f70" stroke-width="0.8" stroke-linecap="butt" stroke-linejoin="round" stroke-dasharray="0.9 1.1"/>
<path d="M641.0 123.7 C640.7 128.0 639.7 141.7 639.0 149.7 C638.3 157.7 637.3 168.0 637.0 171.6" fill="none" stroke="#ee7f70" stroke-width="0.8" stroke-linecap="butt" stroke-linejoin="round" stroke-dasharray="0.9 1.1"/>
<path d="M615.9 162.4 C618.2 162.9 625.3 164.3 629.5 165.2 C633.7 166.1 639.1 167.5 641.0 167.9" fill="none" stroke="#ee7f70" stroke-width="0.8" stroke-linecap="butt" stroke-linejoin="round" stroke-dasharray="0.9 1.1"/>
<path d="M614.1 171.2 C616.3 171.7 623.4 173.1 627.5 174.0 C631.7 174.9 637.1 176.2 639.0 176.7" fill="none" stroke="#ee7f70" stroke-width="0.8" stroke-linecap="butt" stroke-linejoin="round" stroke-dasharray="0.9 1.1"/>
<path d="M715.2 124.7 C714.3 129.8 711.4 146.3 709.7 155.7 C707.9 165.1 706.3 174.8 704.6 181.2 C702.9 187.6 701.0 188.9 699.3 194.1 C697.7 199.4 696.4 205.8 694.6 212.7 C692.9 219.5 691.1 226.8 689.0 235.1 C687.0 243.5 684.8 253.0 682.4 262.9 C680.0 272.7 677.2 284.8 674.6 294.2 C672.1 303.7 669.2 313.1 667.1 319.5 C664.9 325.8 663.7 325.8 661.8 332.1 C659.9 338.3 657.9 349.0 655.9 356.9 C653.9 364.8 651.2 373.8 649.6 379.5 C648.0 385.2 647.9 386.8 646.4 391.0 C645.0 395.2 642.8 397.3 640.9 404.5 C638.9 411.7 637.0 424.5 634.6 434.4 C632.3 444.3 628.0 459.0 626.6 464.0" fill="none" stroke="#ee7f70" stroke-width="0.8" stroke-linecap="butt" stroke-linejoin="round" stroke-dasharray="0.9 1.1"/>
<path d="M707.8 123.3 C706.9 128.5 704.1 145.0 702.3 154.3 C700.6 163.6 699.1 173.0 697.4 179.3 C695.7 185.5 693.8 186.6 692.2 191.9 C690.5 197.1 689.1 203.9 687.4 210.8 C685.6 217.8 683.8 225.0 681.8 233.4 C679.7 241.7 677.6 251.3 675.2 261.1 C672.8 270.9 669.9 282.9 667.4 292.3 C664.8 301.6 662.1 310.8 659.9 317.0 C657.8 323.3 656.5 323.6 654.6 329.9 C652.7 336.3 650.7 347.1 648.6 355.1 C646.6 363.0 643.9 371.9 642.4 377.5 C640.8 383.1 640.8 384.3 639.4 388.5 C637.9 392.7 635.6 395.2 633.6 402.5 C631.6 409.9 629.7 422.7 627.4 432.6 C625.0 442.5 620.7 457.1 619.4 462.0" fill="none" stroke="#ee7f70" stroke-width="0.8" stroke-linecap="butt" stroke-linejoin="round" stroke-dasharray="0.9 1.1"/>
<path d="M748.5 205.8 C747.5 208.2 744.8 214.6 742.2 219.7 C739.6 224.8 736.9 231.7 733.0 236.6 C729.2 241.5 724.9 246.2 719.2 249.0 C713.4 251.7 704.9 253.1 698.7 253.1 C692.5 253.1 684.8 249.4 682.0 248.7" fill="none" stroke="#ee7f70" stroke-width="0.8" stroke-linecap="butt" stroke-linejoin="round" stroke-dasharray="0.9 1.1"/>
<path d="M741.5 202.7 C740.5 204.9 737.7 211.4 735.3 216.3 C732.9 221.2 730.2 227.6 727.0 231.9 C723.7 236.2 720.5 239.8 715.8 242.0 C711.1 244.3 704.1 245.5 698.8 245.4 C693.5 245.3 686.5 242.0 684.0 241.3" fill="none" stroke="#ee7f70" stroke-width="0.8" stroke-linecap="butt" stroke-linejoin="round" stroke-dasharray="0.9 1.1"/>
<path d="M662.5 315.0 C664.9 315.3 672.6 315.8 676.9 316.9 C681.2 317.9 685.0 319.1 688.1 321.1 C691.2 323.1 693.6 326.1 695.5 328.7 C697.4 331.2 697.9 333.8 699.5 336.5 C701.0 339.2 704.1 341.8 704.9 345.1 C705.6 348.3 704.8 351.7 703.9 355.9 C703.1 360.0 701.7 364.4 699.8 369.8 C697.8 375.3 694.2 383.5 692.2 388.7 C690.3 393.8 688.5 397.7 687.9 400.7 C687.4 403.7 688.8 405.5 689.0 406.4" fill="none" stroke="#ee7f70" stroke-width="0.8" stroke-linecap="butt" stroke-linejoin="round" stroke-dasharray="0.9 1.1"/>
<path d="M661.5 323.0 C663.8 323.2 671.4 323.8 675.1 324.6 C678.8 325.5 681.6 326.4 683.9 327.9 C686.2 329.3 687.5 331.2 689.0 333.3 C690.4 335.4 691.2 338.2 692.5 340.5 C693.9 342.8 696.5 344.7 697.1 346.9 C697.7 349.2 696.9 350.8 696.1 354.1 C695.3 357.5 694.1 361.9 692.2 367.2 C690.3 372.4 686.8 380.5 684.8 385.8 C682.7 391.2 680.7 395.7 680.1 399.3 C679.4 402.9 680.9 406.2 681.0 407.6" fill="none" stroke="#ee7f70" stroke-width="0.8" stroke-linecap="butt" stroke-linejoin="round" stroke-dasharray="0.9 1.1"/>
<path d="M616.7 261.5 L674.6 272.6" fill="none" stroke="#ee7f70" stroke-width="0.8" stroke-linecap="butt" stroke-linejoin="round" stroke-dasharray="0.9 1.1"/>
<path d="M613.3 279.1 L671.2 290.2" fill="none" stroke="#ee7f70" stroke-width="0.8" stroke-linecap="butt" stroke-linejoin="round" stroke-dasharray="0.9 1.1"/>
<path d="M615.8 382.8 C617.6 383.1 622.2 383.7 626.4 384.7 C630.7 385.7 636.6 387.2 641.4 388.7 C646.1 390.2 650.6 392.3 655.0 393.7 C659.3 395.2 661.9 396.1 667.3 397.7 C672.7 399.3 681.1 401.8 687.2 403.6 C693.4 405.3 696.1 406.6 704.3 408.1 C712.5 409.5 730.4 411.4 736.5 412.1 C742.7 412.9 740.6 412.5 741.4 412.5" fill="none" stroke="#ee7f70" stroke-width="0.8" stroke-linecap="butt" stroke-linejoin="round" stroke-dasharray="0.9 1.1"/>
<path d="M614.2 391.6 C615.9 391.9 620.3 392.5 624.4 393.5 C628.5 394.4 634.0 395.8 638.6 397.3 C643.2 398.8 647.7 400.7 652.0 402.3 C656.4 403.8 659.2 404.6 664.7 406.3 C670.1 408.0 678.4 410.5 684.8 412.2 C691.1 414.0 694.3 415.5 702.7 416.9 C711.2 418.4 729.1 420.3 735.5 421.1 C741.8 421.8 739.8 421.4 740.6 421.5" fill="none" stroke="#ee7f70" stroke-width="0.8" stroke-linecap="butt" stroke-linejoin="round" stroke-dasharray="0.9 1.1"/>
<path d="M814.7 270.6 C813.2 273.8 809.1 282.7 805.9 289.6 C802.8 296.5 799.2 304.7 796.0 312.0 C792.8 319.3 789.1 328.3 786.7 333.6 C784.3 338.9 782.4 342.1 781.6 343.8" fill="none" stroke="#ee7f70" stroke-width="0.8" stroke-linecap="butt" stroke-linejoin="round" stroke-dasharray="0.9 1.1"/>
<path d="M803.3 265.4 C801.9 268.6 797.7 277.5 794.6 284.4 C791.4 291.4 787.7 299.7 784.5 307.0 C781.3 314.3 777.7 323.2 775.3 328.4 C773.0 333.6 771.2 336.6 770.4 338.2" fill="none" stroke="#ee7f70" stroke-width="0.8" stroke-linecap="butt" stroke-linejoin="round" stroke-dasharray="0.9 1.1"/>
<path d="M784.6 330.2 C782.4 333.8 775.1 344.7 771.2 351.8 C767.3 358.9 764.7 366.0 761.3 372.9 C758.0 379.7 754.0 388.2 751.2 393.1 C748.4 398.0 746.8 398.1 744.7 402.0 C742.7 405.9 741.1 411.0 738.6 416.5 C736.2 422.0 733.4 427.2 729.9 435.2 C726.5 443.2 719.9 459.7 717.9 464.6" fill="none" stroke="#ee7f70" stroke-width="0.8" stroke-linecap="butt" stroke-linejoin="round" stroke-dasharray="0.9 1.1"/>
<path d="M777.4 325.8 C775.1 329.4 767.7 340.5 763.8 347.7 C759.8 354.9 757.0 362.3 753.7 369.1 C750.3 376.0 746.5 384.1 743.8 388.9 C741.1 393.7 739.4 394.0 737.3 398.0 C735.1 402.0 733.4 407.4 730.9 413.0 C728.3 418.7 725.6 423.8 722.1 431.8 C718.6 439.9 712.1 456.5 710.1 461.4" fill="none" stroke="#ee7f70" stroke-width="0.8" stroke-linecap="butt" stroke-linejoin="round" stroke-dasharray="0.9 1.1"/>
<path d="M791.8 125.8 C790.9 129.2 788.3 139.5 786.3 146.1 C784.4 152.6 782.1 159.7 780.3 165.0 C778.4 170.2 777.0 172.7 775.3 177.5 C773.6 182.3 771.4 189.7 770.1 193.9 C768.8 198.1 767.8 201.4 767.3 202.9" fill="none" stroke="#ee7f70" stroke-width="0.8" stroke-linecap="butt" stroke-linejoin="round" stroke-dasharray="0.9 1.1"/>
<path d="M786.2 124.2 C785.2 127.6 782.6 138.0 780.7 144.4 C778.8 150.9 776.5 157.8 774.7 163.0 C772.9 168.2 771.4 170.7 769.7 175.5 C768.0 180.4 765.8 187.8 764.5 192.1 C763.1 196.4 762.2 199.6 761.7 201.1" fill="none" stroke="#ee7f70" stroke-width="0.8" stroke-linecap="butt" stroke-linejoin="round" stroke-dasharray="0.9 1.1"/>
<path d="M630.6 171.0 C635.6 171.8 651.3 174.2 660.7 175.8 C670.0 177.3 677.4 178.1 686.8 180.1 C696.3 182.1 708.6 185.1 717.2 187.7 C725.7 190.2 730.2 192.9 738.2 195.3 C746.1 197.7 753.2 199.1 765.0 202.0 C776.8 204.9 801.6 210.8 809.0 212.6" fill="none" stroke="#ee7f70" stroke-width="0.8" stroke-linecap="butt" stroke-linejoin="round" stroke-dasharray="0.9 1.1"/>
<path d="M629.4 179.0 C634.4 179.8 650.0 182.3 659.3 183.8 C668.6 185.4 675.9 186.2 685.2 188.1 C694.4 190.1 706.4 193.0 714.8 195.5 C723.3 198.0 727.8 200.8 735.8 203.2 C743.9 205.6 751.2 207.1 763.0 210.0 C774.9 212.9 799.7 218.8 807.0 220.6" fill="none" stroke="#ee7f70" stroke-width="0.8" stroke-linecap="butt" stroke-linejoin="round" stroke-dasharray="0.9 1.1"/>
<path d="M638.3 172.9 C637.6 176.4 635.8 185.2 633.8 194.0 C631.8 202.7 629.3 213.1 626.5 225.2 C623.8 237.4 618.8 260.0 617.3 267.0" fill="none" stroke="#ee7f70" stroke-width="0.8" stroke-linecap="butt" stroke-linejoin="round" stroke-dasharray="0.9 1.1"/>
<path d="M629.7 171.1 C628.9 174.6 627.2 183.3 625.2 192.0 C623.3 200.7 620.7 211.1 618.0 223.3 C615.2 235.4 610.2 258.1 608.7 265.0" fill="none" stroke="#ee7f70" stroke-width="0.8" stroke-linecap="butt" stroke-linejoin="round" stroke-dasharray="0.9 1.1"/>
<filter id="bl1" x="-5%" y="-5%" width="110%" height="110%"><feGaussianBlur stdDeviation="0.5"/></filter><g filter="url(#bl1)">
<path d="M767.5 126.0 L760.0 161.5 L751.2 193.0 L742.5 209.2 L733.8 230.5 L721.2 262.0 L708.8 293.2 L702.5 318.2 L702.8 331.0 L702.5 347.2 L696.2 372.2 L690.0 398.0 L681.0 421.0 L668.5 446.0 L656.0 463.0 L671.0 463.0 L686.0 439.8 L702.2 414.8 L716.2 400.0 L735.0 368.5 L740.0 362.2 L750.0 343.5 L757.5 331.0 L766.2 299.5 L772.5 274.5 L776.2 262.0 L778.0 250.0 L775.0 243.0 L762.0 235.0 L761.2 211.8 L764.5 193.0 L776.2 161.5 L787.0 126.0Z" fill="#b0b0b0"/>
<path d="M761.8 235.0 L768.5 242.5 L766.0 250.0 L763.5 262.0 L759.5 280.0 L757.8 288.0 L755.0 280.0 L758.5 262.0 L760.0 250.0 L761.5 237.0Z" fill="#ddd9d3"/>
<path d="M768.3 126.0 C768.1 127.0 767.5 130.0 767.0 132.0 C766.6 134.0 766.2 136.0 765.7 138.0 C765.3 140.0 764.9 142.0 764.4 144.0 C764.0 146.0 763.6 148.0 763.2 150.0 C762.7 152.0 762.3 154.0 761.9 156.0 C761.4 158.0 761.0 160.0 760.5 162.0 C760.0 164.0 759.4 166.0 758.8 168.0 C758.3 170.0 757.7 172.0 757.2 174.0 C756.6 176.0 756.0 178.0 755.5 180.0 C754.9 182.0 754.3 184.0 753.8 186.0 C753.2 188.0 752.8 190.0 752.1 192.0 C751.3 194.0 750.2 196.0 749.2 198.0 C748.2 200.0 747.1 202.0 746.0 204.0 C745.0 206.0 743.9 208.0 743.0 210.0 C742.1 212.0 741.4 214.0 740.6 216.0 C739.8 218.0 739.0 220.0 738.3 222.0 C737.5 224.0 736.7 226.0 735.9 228.0 C735.1 230.0 734.3 232.0 733.6 234.0 C732.8 236.0 732.0 238.0 731.3 240.0 C730.5 242.0 729.7 244.0 729.0 246.0 C728.2 248.0 727.4 250.0 726.7 252.0 C725.9 254.0 725.1 256.0 724.3 258.0 C723.6 260.0 722.8 262.0 722.0 264.0 C721.2 266.0 720.5 268.0 719.7 270.0 C718.9 272.0 718.1 274.0 717.3 276.0 C716.5 278.0 715.8 280.0 715.0 282.0 C714.2 284.0 713.4 286.0 712.6 288.0 C711.9 290.0 711.0 292.0 710.4 294.0 C709.8 296.0 709.4 298.0 708.9 300.0 C708.4 302.0 707.9 304.0 707.4 306.0 C706.9 308.0 706.4 310.0 705.9 312.0 C705.4 314.0 704.7 316.0 704.5 318.0 C704.2 320.0 704.5 322.0 704.5 324.0 C704.5 326.0 704.6 328.0 704.6 330.0 C704.6 332.0 704.5 334.0 704.5 336.0 C704.4 338.0 704.4 340.0 704.3 342.0 C704.2 344.0 704.3 346.0 704.0 348.0 C703.7 350.0 703.0 352.0 702.5 354.0 C702.0 356.0 701.5 358.0 701.0 360.0 C700.5 362.0 700.0 364.0 699.4 366.0 C698.9 368.0 698.4 370.0 697.8 372.0 C697.3 374.0 696.8 376.0 696.3 378.0 C695.8 380.0 695.3 382.0 694.7 384.0 C694.2 386.0 693.7 388.0 693.2 390.0 C692.7 392.0 692.3 394.0 691.7 396.0 C691.0 398.0 690.3 400.0 689.5 402.0 C688.7 404.0 687.9 406.0 687.0 408.0 C686.2 410.0 685.4 412.0 684.5 414.0 C683.7 416.0 683.0 418.0 682.1 420.0 C681.2 422.0 680.2 424.0 679.2 426.0 C678.2 428.0 677.2 430.0 676.1 432.0 C675.1 434.0 674.1 436.0 673.1 438.0 C672.1 440.0 671.2 442.0 670.1 444.0 C668.9 446.0 667.5 448.0 666.1 450.0 C664.7 452.0 663.2 454.0 661.7 456.0 C660.3 458.0 658.1 461.0 657.4 462.0" fill="none" stroke="#c6c6c6" stroke-width="1.1" stroke-linecap="butt" stroke-linejoin="round"/>
<path d="M768.3 126.0 C768.1 127.0 767.5 130.0 767.0 132.0 C766.6 134.0 766.2 136.0 765.7 138.0 C765.3 140.0 764.9 142.0 764.4 144.0 C764.0 146.0 763.6 148.0 763.2 150.0 C762.7 152.0 762.3 154.0 761.9 156.0 C761.4 158.0 761.0 160.0 760.5 162.0 C760.0 164.0 759.4 166.0 758.8 168.0 C758.3 170.0 757.7 172.0 757.2 174.0 C756.6 176.0 756.0 178.0 755.5 180.0 C754.9 182.0 754.3 184.0 753.8 186.0 C753.2 188.0 752.8 190.0 752.1 192.0 C751.3 194.0 750.2 196.0 749.2 198.0 C748.2 200.0 747.1 202.0 746.0 204.0 C745.0 206.0 743.9 208.0 743.0 210.0 C742.1 212.0 741.4 214.0 740.6 216.0 C739.8 218.0 739.0 220.0 738.3 222.0 C737.5 224.0 736.7 226.0 735.9 228.0 C735.1 230.0 734.3 232.0 733.6 234.0 C732.8 236.0 732.0 238.0 731.3 240.0 C730.5 242.0 729.7 244.0 729.0 246.0 C728.2 248.0 727.4 250.0 726.7 252.0 C725.9 254.0 725.1 256.0 724.3 258.0 C723.6 260.0 722.8 262.0 722.0 264.0 C721.2 266.0 720.5 268.0 719.7 270.0 C718.9 272.0 718.1 274.0 717.3 276.0 C716.5 278.0 715.8 280.0 715.0 282.0 C714.2 284.0 713.4 286.0 712.6 288.0 C711.9 290.0 711.0 292.0 710.4 294.0 C709.8 296.0 709.4 298.0 708.9 300.0 C708.4 302.0 707.9 304.0 707.4 306.0 C706.9 308.0 706.4 310.0 705.9 312.0 C705.4 314.0 704.7 316.0 704.5 318.0 C704.2 320.0 704.5 322.0 704.5 324.0 C704.5 326.0 704.6 328.0 704.6 330.0 C704.6 332.0 704.5 334.0 704.5 336.0 C704.4 338.0 704.4 340.0 704.3 342.0 C704.2 344.0 704.3 346.0 704.0 348.0 C703.7 350.0 703.0 352.0 702.5 354.0 C702.0 356.0 701.5 358.0 701.0 360.0 C700.5 362.0 700.0 364.0 699.4 366.0 C698.9 368.0 698.4 370.0 697.8 372.0 C697.3 374.0 696.8 376.0 696.3 378.0 C695.8 380.0 695.3 382.0 694.7 384.0 C694.2 386.0 693.7 388.0 693.2 390.0 C692.7 392.0 692.3 394.0 691.7 396.0 C691.0 398.0 690.3 400.0 689.5 402.0 C688.7 404.0 687.9 406.0 687.0 408.0 C686.2 410.0 685.4 412.0 684.5 414.0 C683.7 416.0 683.0 418.0 682.1 420.0 C681.2 422.0 680.2 424.0 679.2 426.0 C678.2 428.0 677.2 430.0 676.1 432.0 C675.1 434.0 674.1 436.0 673.1 438.0 C672.1 440.0 671.2 442.0 670.1 444.0 C668.9 446.0 667.5 448.0 666.1 450.0 C664.7 452.0 663.2 454.0 661.7 456.0 C660.3 458.0 658.1 461.0 657.4 462.0" fill="none" stroke="#686868" stroke-width="1.7" stroke-linecap="butt" stroke-linejoin="round" stroke-dasharray="3.3 1.3" stroke-dashoffset="0.0"/>
<path d="M769.9 126.0 C769.7 127.0 769.0 130.0 768.6 132.0 C768.2 134.0 767.7 136.0 767.3 138.0 C766.8 140.0 766.4 142.0 765.9 144.0 C765.5 146.0 765.0 148.0 764.6 150.0 C764.1 152.0 763.7 154.0 763.3 156.0 C762.8 158.0 762.4 160.0 761.9 162.0 C761.4 164.0 760.7 166.0 760.1 168.0 C759.6 170.0 759.0 172.0 758.4 174.0 C757.8 176.0 757.3 178.0 756.7 180.0 C756.1 182.0 755.5 184.0 754.9 186.0 C754.4 188.0 753.9 190.0 753.2 192.0 C752.4 194.0 751.4 196.0 750.4 198.0 C749.5 200.0 748.5 202.0 747.5 204.0 C746.5 206.0 745.5 208.0 744.6 210.0 C743.8 212.0 743.1 214.0 742.4 216.0 C741.7 218.0 741.0 220.0 740.3 222.0 C739.5 224.0 738.8 226.0 738.1 228.0 C737.4 230.0 736.7 232.0 736.0 234.0 C735.3 236.0 734.6 238.0 733.9 240.0 C733.1 242.0 732.4 244.0 731.7 246.0 C731.0 248.0 730.3 250.0 729.5 252.0 C728.8 254.0 728.1 256.0 727.4 258.0 C726.6 260.0 725.9 262.0 725.2 264.0 C724.4 266.0 723.7 268.0 722.9 270.0 C722.2 272.0 721.4 274.0 720.7 276.0 C719.9 278.0 719.2 280.0 718.4 282.0 C717.7 284.0 716.9 286.0 716.2 288.0 C715.4 290.0 714.6 292.0 714.0 294.0 C713.4 296.0 713.0 298.0 712.5 300.0 C712.1 302.0 711.6 304.0 711.1 306.0 C710.6 308.0 710.2 310.0 709.7 312.0 C709.2 314.0 708.5 316.0 708.3 318.0 C708.0 320.0 708.2 322.0 708.2 324.0 C708.2 326.0 708.2 328.0 708.2 330.0 C708.2 332.0 708.1 334.0 708.0 336.0 C707.9 338.0 707.9 340.0 707.7 342.0 C707.6 344.0 707.7 346.0 707.4 348.0 C707.0 350.0 706.4 352.0 705.9 354.0 C705.4 356.0 705.0 358.0 704.5 360.0 C703.9 362.0 703.3 364.0 702.7 366.0 C702.1 368.0 701.5 370.0 700.9 372.0 C700.3 374.0 699.7 376.0 699.2 378.0 C698.6 380.0 698.0 382.0 697.4 384.0 C696.9 386.0 696.3 388.0 695.7 390.0 C695.2 392.0 694.7 394.0 694.0 396.0 C693.3 398.0 692.5 400.0 691.7 402.0 C690.8 404.0 689.8 406.0 688.9 408.0 C688.0 410.0 687.0 412.0 686.1 414.0 C685.3 416.0 684.5 418.0 683.6 420.0 C682.6 422.0 681.6 424.0 680.6 426.0 C679.5 428.0 678.5 430.0 677.4 432.0 C676.4 434.0 675.4 436.0 674.3 438.0 C673.3 440.0 672.4 442.0 671.2 444.0 C670.0 446.0 668.7 448.0 667.3 450.0 C665.9 452.0 664.4 454.0 662.9 456.0 C661.5 458.0 659.3 461.0 658.6 462.0" fill="none" stroke="#c6c6c6" stroke-width="1.1" stroke-linecap="butt" stroke-linejoin="round"/>
<path d="M769.9 126.0 C769.7 127.0 769.0 130.0 768.6 132.0 C768.2 134.0 767.7 136.0 767.3 138.0 C766.8 140.0 766.4 142.0 765.9 144.0 C765.5 146.0 765.0 148.0 764.6 150.0 C764.1 152.0 763.7 154.0 763.3 156.0 C762.8 158.0 762.4 160.0 761.9 162.0 C761.4 164.0 760.7 166.0 760.1 168.0 C759.6 170.0 759.0 172.0 758.4 174.0 C757.8 176.0 757.3 178.0 756.7 180.0 C756.1 182.0 755.5 184.0 754.9 186.0 C754.4 188.0 753.9 190.0 753.2 192.0 C752.4 194.0 751.4 196.0 750.4 198.0 C749.5 200.0 748.5 202.0 747.5 204.0 C746.5 206.0 745.5 208.0 744.6 210.0 C743.8 212.0 743.1 214.0 742.4 216.0 C741.7 218.0 741.0 220.0 740.3 222.0 C739.5 224.0 738.8 226.0 738.1 228.0 C737.4 230.0 736.7 232.0 736.0 234.0 C735.3 236.0 734.6 238.0 733.9 240.0 C733.1 242.0 732.4 244.0 731.7 246.0 C731.0 248.0 730.3 250.0 729.5 252.0 C728.8 254.0 728.1 256.0 727.4 258.0 C726.6 260.0 725.9 262.0 725.2 264.0 C724.4 266.0 723.7 268.0 722.9 270.0 C722.2 272.0 721.4 274.0 720.7 276.0 C719.9 278.0 719.2 280.0 718.4 282.0 C717.7 284.0 716.9 286.0 716.2 288.0 C715.4 290.0 714.6 292.0 714.0 294.0 C713.4 296.0 713.0 298.0 712.5 300.0 C712.1 302.0 711.6 304.0 711.1 306.0 C710.6 308.0 710.2 310.0 709.7 312.0 C709.2 314.0 708.5 316.0 708.3 318.0 C708.0 320.0 708.2 322.0 708.2 324.0 C708.2 326.0 708.2 328.0 708.2 330.0 C708.2 332.0 708.1 334.0 708.0 336.0 C707.9 338.0 707.9 340.0 707.7 342.0 C707.6 344.0 707.7 346.0 707.4 348.0 C707.0 350.0 706.4 352.0 705.9 354.0 C705.4 356.0 705.0 358.0 704.5 360.0 C703.9 362.0 703.3 364.0 702.7 366.0 C702.1 368.0 701.5 370.0 700.9 372.0 C700.3 374.0 699.7 376.0 699.2 378.0 C698.6 380.0 698.0 382.0 697.4 384.0 C696.9 386.0 696.3 388.0 695.7 390.0 C695.2 392.0 694.7 394.0 694.0 396.0 C693.3 398.0 692.5 400.0 691.7 402.0 C690.8 404.0 689.8 406.0 688.9 408.0 C688.0 410.0 687.0 412.0 686.1 414.0 C685.3 416.0 684.5 418.0 683.6 420.0 C682.6 422.0 681.6 424.0 680.6 426.0 C679.5 428.0 678.5 430.0 677.4 432.0 C676.4 434.0 675.4 436.0 674.3 438.0 C673.3 440.0 672.4 442.0 671.2 444.0 C670.0 446.0 668.7 448.0 667.3 450.0 C665.9 452.0 664.4 454.0 662.9 456.0 C661.5 458.0 659.3 461.0 658.6 462.0" fill="none" stroke="#686868" stroke-width="1.7" stroke-linecap="butt" stroke-linejoin="round" stroke-dasharray="3.3 1.3" stroke-dashoffset="2.3"/>
<path d="M772.4 126.0 C772.1 127.0 771.4 130.0 771.0 132.0 C770.5 134.0 770.0 136.0 769.6 138.0 C769.1 140.0 768.6 142.0 768.2 144.0 C767.7 146.0 767.2 148.0 766.8 150.0 C766.3 152.0 765.8 154.0 765.4 156.0 C764.9 158.0 764.5 160.0 763.9 162.0 C763.4 164.0 762.7 166.0 762.1 168.0 C761.5 170.0 760.9 172.0 760.3 174.0 C759.7 176.0 759.1 178.0 758.5 180.0 C757.9 182.0 757.3 184.0 756.7 186.0 C756.1 188.0 755.6 190.0 754.9 192.0 C754.1 194.0 753.2 196.0 752.3 198.0 C751.5 200.0 750.5 202.0 749.6 204.0 C748.8 206.0 747.8 208.0 747.0 210.0 C746.3 212.0 745.7 214.0 745.1 216.0 C744.5 218.0 743.9 220.0 743.3 222.0 C742.7 224.0 742.0 226.0 741.4 228.0 C740.8 230.0 740.3 232.0 739.6 234.0 C739.0 236.0 738.4 238.0 737.7 240.0 C737.1 242.0 736.4 244.0 735.8 246.0 C735.2 248.0 734.5 250.0 733.9 252.0 C733.2 254.0 732.5 256.0 731.9 258.0 C731.2 260.0 730.5 262.0 729.9 264.0 C729.2 266.0 728.5 268.0 727.8 270.0 C727.1 272.0 726.4 274.0 725.7 276.0 C725.0 278.0 724.3 280.0 723.6 282.0 C722.9 284.0 722.2 286.0 721.5 288.0 C720.8 290.0 720.0 292.0 719.5 294.0 C718.9 296.0 718.5 298.0 718.0 300.0 C717.6 302.0 717.1 304.0 716.7 306.0 C716.2 308.0 715.8 310.0 715.3 312.0 C714.8 314.0 714.2 316.0 713.9 318.0 C713.7 320.0 713.8 322.0 713.8 324.0 C713.7 326.0 713.7 328.0 713.6 330.0 C713.5 332.0 713.4 334.0 713.3 336.0 C713.2 338.0 713.0 340.0 712.9 342.0 C712.8 344.0 712.7 346.0 712.4 348.0 C712.1 350.0 711.5 352.0 711.0 354.0 C710.5 356.0 710.2 358.0 709.6 360.0 C709.0 362.0 708.3 364.0 707.6 366.0 C706.9 368.0 706.2 370.0 705.5 372.0 C704.8 374.0 704.1 376.0 703.5 378.0 C702.8 380.0 702.2 382.0 701.5 384.0 C700.8 386.0 700.2 388.0 699.5 390.0 C698.8 392.0 698.3 394.0 697.5 396.0 C696.8 398.0 695.9 400.0 694.9 402.0 C693.9 404.0 692.8 406.0 691.7 408.0 C690.7 410.0 689.5 412.0 688.5 414.0 C687.5 416.0 686.7 418.0 685.8 420.0 C684.8 422.0 683.7 424.0 682.6 426.0 C681.5 428.0 680.5 430.0 679.4 432.0 C678.3 434.0 677.2 436.0 676.2 438.0 C675.1 440.0 674.1 442.0 672.9 444.0 C671.7 446.0 670.4 448.0 669.0 450.0 C667.6 452.0 666.2 454.0 664.7 456.0 C663.3 458.0 661.2 461.0 660.5 462.0" fill="none" stroke="#c9c9c9" stroke-width="1.7" stroke-linecap="butt" stroke-linejoin="round"/>
<path d="M771.6 126.0 C771.3 127.0 770.6 130.0 770.2 132.0 C769.7 134.0 769.3 136.0 768.8 138.0 C768.3 140.0 767.9 142.0 767.4 144.0 C767.0 146.0 766.5 148.0 766.0 150.0 C765.6 152.0 765.1 154.0 764.7 156.0 C764.2 158.0 763.8 160.0 763.2 162.0 C762.7 164.0 762.0 166.0 761.5 168.0 C760.9 170.0 760.3 172.0 759.7 174.0 C759.1 176.0 758.5 178.0 757.9 180.0 C757.3 182.0 756.7 184.0 756.1 186.0 C755.5 188.0 755.0 190.0 754.3 192.0 C753.6 194.0 752.6 196.0 751.7 198.0 C750.8 200.0 749.8 202.0 748.9 204.0 C748.0 206.0 747.0 208.0 746.2 210.0 C745.4 212.0 744.9 214.0 744.2 216.0 C743.6 218.0 742.9 220.0 742.3 222.0 C741.6 224.0 741.0 226.0 740.3 228.0 C739.7 230.0 739.1 232.0 738.4 234.0 C737.8 236.0 737.1 238.0 736.4 240.0 C735.8 242.0 735.1 244.0 734.4 246.0 C733.8 248.0 733.1 250.0 732.4 252.0 C731.7 254.0 731.1 256.0 730.4 258.0 C729.7 260.0 729.0 262.0 728.3 264.0 C727.6 266.0 726.9 268.0 726.2 270.0 C725.4 272.0 724.7 274.0 724.0 276.0 C723.3 278.0 722.6 280.0 721.9 282.0 C721.1 284.0 720.4 286.0 719.7 288.0 C719.0 290.0 718.2 292.0 717.6 294.0 C717.1 296.0 716.7 298.0 716.2 300.0 C715.7 302.0 715.3 304.0 714.8 306.0 C714.4 308.0 713.9 310.0 713.4 312.0 C713.0 314.0 712.3 316.0 712.0 318.0 C711.8 320.0 711.9 322.0 711.9 324.0 C711.9 326.0 711.9 328.0 711.8 330.0 C711.8 332.0 711.6 334.0 711.5 336.0 C711.4 338.0 711.3 340.0 711.2 342.0 C711.0 344.0 711.0 346.0 710.7 348.0 C710.4 350.0 709.8 352.0 709.3 354.0 C708.8 356.0 708.4 358.0 707.9 360.0 C707.3 362.0 706.6 364.0 706.0 366.0 C705.3 368.0 704.6 370.0 703.9 372.0 C703.3 374.0 702.7 376.0 702.0 378.0 C701.4 380.0 700.8 382.0 700.1 384.0 C699.5 386.0 698.9 388.0 698.2 390.0 C697.6 392.0 697.1 394.0 696.3 396.0 C695.6 398.0 694.8 400.0 693.8 402.0 C692.9 404.0 691.8 406.0 690.8 408.0 C689.8 410.0 688.7 412.0 687.7 414.0 C686.8 416.0 686.0 418.0 685.0 420.0 C684.1 422.0 683.0 424.0 681.9 426.0 C680.9 428.0 679.8 430.0 678.7 432.0 C677.7 434.0 676.6 436.0 675.5 438.0 C674.5 440.0 673.6 442.0 672.4 444.0 C671.2 446.0 669.8 448.0 668.4 450.0 C667.1 452.0 665.6 454.0 664.1 456.0 C662.7 458.0 660.6 461.0 659.8 462.0" fill="none" stroke="#c6c6c6" stroke-width="1.1" stroke-linecap="butt" stroke-linejoin="round"/>
<path d="M771.6 126.0 C771.3 127.0 770.6 130.0 770.2 132.0 C769.7 134.0 769.3 136.0 768.8 138.0 C768.3 140.0 767.9 142.0 767.4 144.0 C767.0 146.0 766.5 148.0 766.0 150.0 C765.6 152.0 765.1 154.0 764.7 156.0 C764.2 158.0 763.8 160.0 763.2 162.0 C762.7 164.0 762.0 166.0 761.5 168.0 C760.9 170.0 760.3 172.0 759.7 174.0 C759.1 176.0 758.5 178.0 757.9 180.0 C757.3 182.0 756.7 184.0 756.1 186.0 C755.5 188.0 755.0 190.0 754.3 192.0 C753.6 194.0 752.6 196.0 751.7 198.0 C750.8 200.0 749.8 202.0 748.9 204.0 C748.0 206.0 747.0 208.0 746.2 210.0 C745.4 212.0 744.9 214.0 744.2 216.0 C743.6 218.0 742.9 220.0 742.3 222.0 C741.6 224.0 741.0 226.0 740.3 228.0 C739.7 230.0 739.1 232.0 738.4 234.0 C737.8 236.0 737.1 238.0 736.4 240.0 C735.8 242.0 735.1 244.0 734.4 246.0 C733.8 248.0 733.1 250.0 732.4 252.0 C731.7 254.0 731.1 256.0 730.4 258.0 C729.7 260.0 729.0 262.0 728.3 264.0 C727.6 266.0 726.9 268.0 726.2 270.0 C725.4 272.0 724.7 274.0 724.0 276.0 C723.3 278.0 722.6 280.0 721.9 282.0 C721.1 284.0 720.4 286.0 719.7 288.0 C719.0 290.0 718.2 292.0 717.6 294.0 C717.1 296.0 716.7 298.0 716.2 300.0 C715.7 302.0 715.3 304.0 714.8 306.0 C714.4 308.0 713.9 310.0 713.4 312.0 C713.0 314.0 712.3 316.0 712.0 318.0 C711.8 320.0 711.9 322.0 711.9 324.0 C711.9 326.0 711.9 328.0 711.8 330.0 C711.8 332.0 711.6 334.0 711.5 336.0 C711.4 338.0 711.3 340.0 711.2 342.0 C711.0 344.0 711.0 346.0 710.7 348.0 C710.4 350.0 709.8 352.0 709.3 354.0 C708.8 356.0 708.4 358.0 707.9 360.0 C707.3 362.0 706.6 364.0 706.0 366.0 C705.3 368.0 704.6 370.0 703.9 372.0 C703.3 374.0 702.7 376.0 702.0 378.0 C701.4 380.0 700.8 382.0 700.1 384.0 C699.5 386.0 698.9 388.0 698.2 390.0 C697.6 392.0 697.1 394.0 696.3 396.0 C695.6 398.0 694.8 400.0 693.8 402.0 C692.9 404.0 691.8 406.0 690.8 408.0 C689.8 410.0 688.7 412.0 687.7 414.0 C686.8 416.0 686.0 418.0 685.0 420.0 C684.1 422.0 683.0 424.0 681.9 426.0 C680.9 428.0 679.8 430.0 678.7 432.0 C677.7 434.0 676.6 436.0 675.5 438.0 C674.5 440.0 673.6 442.0 672.4 444.0 C671.2 446.0 669.8 448.0 668.4 450.0 C667.1 452.0 665.6 454.0 664.1 456.0 C662.7 458.0 660.6 461.0 659.8 462.0" fill="none" stroke="#686868" stroke-width="1.7" stroke-linecap="butt" stroke-linejoin="round" stroke-dasharray="3.3 1.3" stroke-dashoffset="0.9"/>
<path d="M773.2 126.0 C772.9 127.0 772.2 130.0 771.8 132.0 C771.3 134.0 770.8 136.0 770.3 138.0 C769.9 140.0 769.4 142.0 768.9 144.0 C768.4 146.0 768.0 148.0 767.5 150.0 C767.0 152.0 766.5 154.0 766.0 156.0 C765.6 158.0 765.1 160.0 764.6 162.0 C764.0 164.0 763.4 166.0 762.8 168.0 C762.1 170.0 761.5 172.0 760.9 174.0 C760.3 176.0 759.7 178.0 759.1 180.0 C758.5 182.0 757.9 184.0 757.3 186.0 C756.6 188.0 756.1 190.0 755.4 192.0 C754.7 194.0 753.8 196.0 753.0 198.0 C752.1 200.0 751.2 202.0 750.4 204.0 C749.5 206.0 748.6 208.0 747.8 210.0 C747.1 212.0 746.6 214.0 746.0 216.0 C745.4 218.0 744.9 220.0 744.3 222.0 C743.7 224.0 743.1 226.0 742.6 228.0 C742.0 230.0 741.4 232.0 740.9 234.0 C740.3 236.0 739.6 238.0 739.0 240.0 C738.4 242.0 737.8 244.0 737.2 246.0 C736.5 248.0 735.9 250.0 735.3 252.0 C734.7 254.0 734.0 256.0 733.4 258.0 C732.7 260.0 732.1 262.0 731.4 264.0 C730.8 266.0 730.1 268.0 729.4 270.0 C728.7 272.0 728.0 274.0 727.4 276.0 C726.7 278.0 726.0 280.0 725.3 282.0 C724.6 284.0 723.9 286.0 723.2 288.0 C722.6 290.0 721.8 292.0 721.3 294.0 C720.7 296.0 720.3 298.0 719.9 300.0 C719.4 302.0 719.0 304.0 718.5 306.0 C718.1 308.0 717.6 310.0 717.2 312.0 C716.7 314.0 716.1 316.0 715.8 318.0 C715.6 320.0 715.7 322.0 715.6 324.0 C715.5 326.0 715.5 328.0 715.4 330.0 C715.3 332.0 715.2 334.0 715.0 336.0 C714.9 338.0 714.8 340.0 714.6 342.0 C714.5 344.0 714.4 346.0 714.1 348.0 C713.8 350.0 713.2 352.0 712.7 354.0 C712.2 356.0 711.9 358.0 711.3 360.0 C710.7 362.0 710.0 364.0 709.2 366.0 C708.5 368.0 707.7 370.0 707.0 372.0 C706.3 374.0 705.6 376.0 704.9 378.0 C704.2 380.0 703.5 382.0 702.8 384.0 C702.1 386.0 701.5 388.0 700.8 390.0 C700.1 392.0 699.5 394.0 698.7 396.0 C697.9 398.0 697.0 400.0 696.0 402.0 C695.0 404.0 693.8 406.0 692.7 408.0 C691.6 410.0 690.4 412.0 689.3 414.0 C688.3 416.0 687.5 418.0 686.5 420.0 C685.5 422.0 684.4 424.0 683.3 426.0 C682.2 428.0 681.1 430.0 680.0 432.0 C678.9 434.0 677.9 436.0 676.8 438.0 C675.7 440.0 674.7 442.0 673.5 444.0 C672.3 446.0 671.0 448.0 669.6 450.0 C668.2 452.0 666.8 454.0 665.3 456.0 C663.9 458.0 661.8 461.0 661.1 462.0" fill="none" stroke="#c6c6c6" stroke-width="1.1" stroke-linecap="butt" stroke-linejoin="round"/>
<path d="M773.2 126.0 C772.9 127.0 772.2 130.0 771.8 132.0 C771.3 134.0 770.8 136.0 770.3 138.0 C769.9 140.0 769.4 142.0 768.9 144.0 C768.4 146.0 768.0 148.0 767.5 150.0 C767.0 152.0 766.5 154.0 766.0 156.0 C765.6 158.0 765.1 160.0 764.6 162.0 C764.0 164.0 763.4 166.0 762.8 168.0 C762.1 170.0 761.5 172.0 760.9 174.0 C760.3 176.0 759.7 178.0 759.1 180.0 C758.5 182.0 757.9 184.0 757.3 186.0 C756.6 188.0 756.1 190.0 755.4 192.0 C754.7 194.0 753.8 196.0 753.0 198.0 C752.1 200.0 751.2 202.0 750.4 204.0 C749.5 206.0 748.6 208.0 747.8 210.0 C747.1 212.0 746.6 214.0 746.0 216.0 C745.4 218.0 744.9 220.0 744.3 222.0 C743.7 224.0 743.1 226.0 742.6 228.0 C742.0 230.0 741.4 232.0 740.9 234.0 C740.3 236.0 739.6 238.0 739.0 240.0 C738.4 242.0 737.8 244.0 737.2 246.0 C736.5 248.0 735.9 250.0 735.3 252.0 C734.7 254.0 734.0 256.0 733.4 258.0 C732.7 260.0 732.1 262.0 731.4 264.0 C730.8 266.0 730.1 268.0 729.4 270.0 C728.7 272.0 728.0 274.0 727.4 276.0 C726.7 278.0 726.0 280.0 725.3 282.0 C724.6 284.0 723.9 286.0 723.2 288.0 C722.6 290.0 721.8 292.0 721.3 294.0 C720.7 296.0 720.3 298.0 719.9 300.0 C719.4 302.0 719.0 304.0 718.5 306.0 C718.1 308.0 717.6 310.0 717.2 312.0 C716.7 314.0 716.1 316.0 715.8 318.0 C715.6 320.0 715.7 322.0 715.6 324.0 C715.5 326.0 715.5 328.0 715.4 330.0 C715.3 332.0 715.2 334.0 715.0 336.0 C714.9 338.0 714.8 340.0 714.6 342.0 C714.5 344.0 714.4 346.0 714.1 348.0 C713.8 350.0 713.2 352.0 712.7 354.0 C712.2 356.0 711.9 358.0 711.3 360.0 C710.7 362.0 710.0 364.0 709.2 366.0 C708.5 368.0 707.7 370.0 707.0 372.0 C706.3 374.0 705.6 376.0 704.9 378.0 C704.2 380.0 703.5 382.0 702.8 384.0 C702.1 386.0 701.5 388.0 700.8 390.0 C700.1 392.0 699.5 394.0 698.7 396.0 C697.9 398.0 697.0 400.0 696.0 402.0 C695.0 404.0 693.8 406.0 692.7 408.0 C691.6 410.0 690.4 412.0 689.3 414.0 C688.3 416.0 687.5 418.0 686.5 420.0 C685.5 422.0 684.4 424.0 683.3 426.0 C682.2 428.0 681.1 430.0 680.0 432.0 C678.9 434.0 677.9 436.0 676.8 438.0 C675.7 440.0 674.7 442.0 673.5 444.0 C672.3 446.0 671.0 448.0 669.6 450.0 C668.2 452.0 666.8 454.0 665.3 456.0 C663.9 458.0 661.8 461.0 661.1 462.0" fill="none" stroke="#686868" stroke-width="1.7" stroke-linecap="butt" stroke-linejoin="round" stroke-dasharray="3.3 1.3" stroke-dashoffset="3.4"/>
<path d="M774.8 126.0 C774.6 127.0 773.8 130.0 773.3 132.0 C772.8 134.0 772.4 136.0 771.9 138.0 C771.4 140.0 770.9 142.0 770.4 144.0 C769.9 146.0 769.4 148.0 768.9 150.0 C768.4 152.0 767.9 154.0 767.4 156.0 C766.9 158.0 766.5 160.0 765.9 162.0 C765.4 164.0 764.7 166.0 764.1 168.0 C763.4 170.0 762.8 172.0 762.2 174.0 C761.5 176.0 760.9 178.0 760.3 180.0 C759.7 182.0 759.0 184.0 758.4 186.0 C757.8 188.0 757.2 190.0 756.5 192.0 C755.8 194.0 755.0 196.0 754.2 198.0 C753.4 200.0 752.6 202.0 751.8 204.0 C751.0 206.0 750.1 208.0 749.5 210.0 C748.8 212.0 748.3 214.0 747.8 216.0 C747.3 218.0 746.8 220.0 746.3 222.0 C745.8 224.0 745.3 226.0 744.8 228.0 C744.3 230.0 743.8 232.0 743.3 234.0 C742.8 236.0 742.2 238.0 741.6 240.0 C741.0 242.0 740.5 244.0 739.9 246.0 C739.3 248.0 738.8 250.0 738.2 252.0 C737.6 254.0 737.0 256.0 736.4 258.0 C735.8 260.0 735.2 262.0 734.6 264.0 C733.9 266.0 733.3 268.0 732.6 270.0 C732.0 272.0 731.3 274.0 730.7 276.0 C730.1 278.0 729.4 280.0 728.8 282.0 C728.1 284.0 727.4 286.0 726.8 288.0 C726.1 290.0 725.4 292.0 724.9 294.0 C724.4 296.0 724.0 298.0 723.5 300.0 C723.1 302.0 722.6 304.0 722.2 306.0 C721.8 308.0 721.4 310.0 720.9 312.0 C720.5 314.0 719.9 316.0 719.6 318.0 C719.4 320.0 719.4 322.0 719.3 324.0 C719.2 326.0 719.2 328.0 719.0 330.0 C718.9 332.0 718.7 334.0 718.6 336.0 C718.4 338.0 718.2 340.0 718.0 342.0 C717.9 344.0 717.8 346.0 717.4 348.0 C717.1 350.0 716.5 352.0 716.1 354.0 C715.6 356.0 715.3 358.0 714.7 360.0 C714.1 362.0 713.3 364.0 712.5 366.0 C711.7 368.0 710.8 370.0 710.0 372.0 C709.3 374.0 708.5 376.0 707.8 378.0 C707.0 380.0 706.3 382.0 705.5 384.0 C704.8 386.0 704.0 388.0 703.3 390.0 C702.5 392.0 701.9 394.0 701.0 396.0 C700.2 398.0 699.2 400.0 698.2 402.0 C697.1 404.0 695.8 406.0 694.6 408.0 C693.3 410.0 692.1 412.0 690.9 414.0 C689.8 416.0 689.0 418.0 687.9 420.0 C686.9 422.0 685.8 424.0 684.7 426.0 C683.6 428.0 682.4 430.0 681.3 432.0 C680.2 434.0 679.1 436.0 678.0 438.0 C676.9 440.0 675.9 442.0 674.7 444.0 C673.5 446.0 672.1 448.0 670.7 450.0 C669.4 452.0 667.9 454.0 666.5 456.0 C665.1 458.0 663.0 461.0 662.3 462.0" fill="none" stroke="#c6c6c6" stroke-width="1.1" stroke-linecap="butt" stroke-linejoin="round"/>
<path d="M774.8 126.0 C774.6 127.0 773.8 130.0 773.3 132.0 C772.8 134.0 772.4 136.0 771.9 138.0 C771.4 140.0 770.9 142.0 770.4 144.0 C769.9 146.0 769.4 148.0 768.9 150.0 C768.4 152.0 767.9 154.0 767.4 156.0 C766.9 158.0 766.5 160.0 765.9 162.0 C765.4 164.0 764.7 166.0 764.1 168.0 C763.4 170.0 762.8 172.0 762.2 174.0 C761.5 176.0 760.9 178.0 760.3 180.0 C759.7 182.0 759.0 184.0 758.4 186.0 C757.8 188.0 757.2 190.0 756.5 192.0 C755.8 194.0 755.0 196.0 754.2 198.0 C753.4 200.0 752.6 202.0 751.8 204.0 C751.0 206.0 750.1 208.0 749.5 210.0 C748.8 212.0 748.3 214.0 747.8 216.0 C747.3 218.0 746.8 220.0 746.3 222.0 C745.8 224.0 745.3 226.0 744.8 228.0 C744.3 230.0 743.8 232.0 743.3 234.0 C742.8 236.0 742.2 238.0 741.6 240.0 C741.0 242.0 740.5 244.0 739.9 246.0 C739.3 248.0 738.8 250.0 738.2 252.0 C737.6 254.0 737.0 256.0 736.4 258.0 C735.8 260.0 735.2 262.0 734.6 264.0 C733.9 266.0 733.3 268.0 732.6 270.0 C732.0 272.0 731.3 274.0 730.7 276.0 C730.1 278.0 729.4 280.0 728.8 282.0 C728.1 284.0 727.4 286.0 726.8 288.0 C726.1 290.0 725.4 292.0 724.9 294.0 C724.4 296.0 724.0 298.0 723.5 300.0 C723.1 302.0 722.6 304.0 722.2 306.0 C721.8 308.0 721.4 310.0 720.9 312.0 C720.5 314.0 719.9 316.0 719.6 318.0 C719.4 320.0 719.4 322.0 719.3 324.0 C719.2 326.0 719.2 328.0 719.0 330.0 C718.9 332.0 718.7 334.0 718.6 336.0 C718.4 338.0 718.2 340.0 718.0 342.0 C717.9 344.0 717.8 346.0 717.4 348.0 C717.1 350.0 716.5 352.0 716.1 354.0 C715.6 356.0 715.3 358.0 714.7 360.0 C714.1 362.0 713.3 364.0 712.5 366.0 C711.7 368.0 710.8 370.0 710.0 372.0 C709.3 374.0 708.5 376.0 707.8 378.0 C707.0 380.0 706.3 382.0 705.5 384.0 C704.8 386.0 704.0 388.0 703.3 390.0 C702.5 392.0 701.9 394.0 701.0 396.0 C700.2 398.0 699.2 400.0 698.2 402.0 C697.1 404.0 695.8 406.0 694.6 408.0 C693.3 410.0 692.1 412.0 690.9 414.0 C689.8 416.0 689.0 418.0 687.9 420.0 C686.9 422.0 685.8 424.0 684.7 426.0 C683.6 428.0 682.4 430.0 681.3 432.0 C680.2 434.0 679.1 436.0 678.0 438.0 C676.9 440.0 675.9 442.0 674.7 444.0 C673.5 446.0 672.1 448.0 670.7 450.0 C669.4 452.0 667.9 454.0 666.5 456.0 C665.1 458.0 663.0 461.0 662.3 462.0" fill="none" stroke="#686868" stroke-width="1.7" stroke-linecap="butt" stroke-linejoin="round" stroke-dasharray="3.3 1.3" stroke-dashoffset="1.6"/>
<path d="M777.2 126.0 C777.0 127.0 776.2 130.0 775.7 132.0 C775.2 134.0 774.7 136.0 774.2 138.0 C773.7 140.0 773.1 142.0 772.6 144.0 C772.1 146.0 771.6 148.0 771.1 150.0 C770.6 152.0 770.1 154.0 769.5 156.0 C769.0 158.0 768.6 160.0 768.0 162.0 C767.4 164.0 766.7 166.0 766.0 168.0 C765.4 170.0 764.7 172.0 764.1 174.0 C763.4 176.0 762.8 178.0 762.1 180.0 C761.5 182.0 760.8 184.0 760.2 186.0 C759.5 188.0 758.9 190.0 758.2 192.0 C757.5 194.0 756.8 196.0 756.1 198.0 C755.4 200.0 754.7 202.0 754.0 204.0 C753.3 206.0 752.4 208.0 751.9 210.0 C751.3 212.0 750.9 214.0 750.5 216.0 C750.1 218.0 749.7 220.0 749.3 222.0 C748.9 224.0 748.5 226.0 748.1 228.0 C747.7 230.0 747.4 232.0 746.9 234.0 C746.5 236.0 746.0 238.0 745.5 240.0 C745.0 242.0 744.5 244.0 744.0 246.0 C743.5 248.0 743.0 250.0 742.5 252.0 C742.0 254.0 741.5 256.0 740.9 258.0 C740.4 260.0 739.9 262.0 739.3 264.0 C738.7 266.0 738.1 268.0 737.5 270.0 C736.9 272.0 736.3 274.0 735.7 276.0 C735.1 278.0 734.5 280.0 733.9 282.0 C733.3 284.0 732.7 286.0 732.1 288.0 C731.5 290.0 730.9 292.0 730.3 294.0 C729.8 296.0 729.4 298.0 729.0 300.0 C728.6 302.0 728.2 304.0 727.8 306.0 C727.4 308.0 726.9 310.0 726.5 312.0 C726.1 314.0 725.6 316.0 725.3 318.0 C725.0 320.0 725.0 322.0 724.9 324.0 C724.7 326.0 724.6 328.0 724.5 330.0 C724.3 332.0 724.1 334.0 723.9 336.0 C723.6 338.0 723.4 340.0 723.2 342.0 C723.0 344.0 722.8 346.0 722.5 348.0 C722.1 350.0 721.6 352.0 721.2 354.0 C720.7 356.0 720.5 358.0 719.9 360.0 C719.2 362.0 718.3 364.0 717.4 366.0 C716.5 368.0 715.5 370.0 714.6 372.0 C713.7 374.0 712.9 376.0 712.1 378.0 C711.3 380.0 710.4 382.0 709.6 384.0 C708.7 386.0 707.9 388.0 707.1 390.0 C706.2 392.0 705.5 394.0 704.6 396.0 C703.6 398.0 702.6 400.0 701.4 402.0 C700.2 404.0 698.7 406.0 697.4 408.0 C696.0 410.0 694.6 412.0 693.4 414.0 C692.1 416.0 691.2 418.0 690.1 420.0 C689.0 422.0 687.9 424.0 686.7 426.0 C685.6 428.0 684.4 430.0 683.3 432.0 C682.1 434.0 681.0 436.0 679.8 438.0 C678.7 440.0 677.6 442.0 676.4 444.0 C675.2 446.0 673.8 448.0 672.5 450.0 C671.1 452.0 669.7 454.0 668.3 456.0 C667.0 458.0 664.9 461.0 664.2 462.0" fill="none" stroke="#c9c9c9" stroke-width="1.7" stroke-linecap="butt" stroke-linejoin="round"/>
<path d="M776.4 126.0 C776.2 127.0 775.4 130.0 774.9 132.0 C774.4 134.0 773.9 136.0 773.4 138.0 C772.9 140.0 772.4 142.0 771.9 144.0 C771.4 146.0 770.9 148.0 770.4 150.0 C769.9 152.0 769.4 154.0 768.8 156.0 C768.3 158.0 767.9 160.0 767.3 162.0 C766.7 164.0 766.0 166.0 765.4 168.0 C764.7 170.0 764.1 172.0 763.4 174.0 C762.8 176.0 762.1 178.0 761.5 180.0 C760.9 182.0 760.2 184.0 759.6 186.0 C758.9 188.0 758.3 190.0 757.6 192.0 C757.0 194.0 756.2 196.0 755.5 198.0 C754.7 200.0 754.0 202.0 753.2 204.0 C752.5 206.0 751.7 208.0 751.1 210.0 C750.5 212.0 750.1 214.0 749.6 216.0 C749.1 218.0 748.7 220.0 748.3 222.0 C747.9 224.0 747.4 226.0 747.0 228.0 C746.6 230.0 746.2 232.0 745.7 234.0 C745.2 236.0 744.7 238.0 744.2 240.0 C743.7 242.0 743.2 244.0 742.6 246.0 C742.1 248.0 741.6 250.0 741.0 252.0 C740.5 254.0 740.0 256.0 739.4 258.0 C738.9 260.0 738.3 262.0 737.7 264.0 C737.1 266.0 736.5 268.0 735.9 270.0 C735.3 272.0 734.7 274.0 734.0 276.0 C733.4 278.0 732.8 280.0 732.2 282.0 C731.6 284.0 730.9 286.0 730.3 288.0 C729.7 290.0 729.1 292.0 728.5 294.0 C728.0 296.0 727.6 298.0 727.2 300.0 C726.7 302.0 726.3 304.0 725.9 306.0 C725.5 308.0 725.1 310.0 724.7 312.0 C724.2 314.0 723.7 316.0 723.4 318.0 C723.1 320.0 723.1 322.0 723.0 324.0 C722.9 326.0 722.8 328.0 722.7 330.0 C722.5 332.0 722.3 334.0 722.1 336.0 C721.9 338.0 721.7 340.0 721.5 342.0 C721.3 344.0 721.1 346.0 720.8 348.0 C720.5 350.0 719.9 352.0 719.5 354.0 C719.0 356.0 718.8 358.0 718.2 360.0 C717.5 362.0 716.6 364.0 715.8 366.0 C714.9 368.0 713.9 370.0 713.1 372.0 C712.2 374.0 711.5 376.0 710.7 378.0 C709.9 380.0 709.0 382.0 708.2 384.0 C707.4 386.0 706.6 388.0 705.8 390.0 C705.0 392.0 704.3 394.0 703.4 396.0 C702.5 398.0 701.5 400.0 700.3 402.0 C699.2 404.0 697.7 406.0 696.4 408.0 C695.1 410.0 693.7 412.0 692.5 414.0 C691.4 416.0 690.5 418.0 689.4 420.0 C688.3 422.0 687.2 424.0 686.0 426.0 C684.9 428.0 683.8 430.0 682.6 432.0 C681.5 434.0 680.3 436.0 679.2 438.0 C678.1 440.0 677.0 442.0 675.8 444.0 C674.6 446.0 673.2 448.0 671.9 450.0 C670.6 452.0 669.1 454.0 667.7 456.0 C666.3 458.0 664.3 461.0 663.6 462.0" fill="none" stroke="#c6c6c6" stroke-width="1.1" stroke-linecap="butt" stroke-linejoin="round"/>
<path d="M776.4 126.0 C776.2 127.0 775.4 130.0 774.9 132.0 C774.4 134.0 773.9 136.0 773.4 138.0 C772.9 140.0 772.4 142.0 771.9 144.0 C771.4 146.0 770.9 148.0 770.4 150.0 C769.9 152.0 769.4 154.0 768.8 156.0 C768.3 158.0 767.9 160.0 767.3 162.0 C766.7 164.0 766.0 166.0 765.4 168.0 C764.7 170.0 764.1 172.0 763.4 174.0 C762.8 176.0 762.1 178.0 761.5 180.0 C760.9 182.0 760.2 184.0 759.6 186.0 C758.9 188.0 758.3 190.0 757.6 192.0 C757.0 194.0 756.2 196.0 755.5 198.0 C754.7 200.0 754.0 202.0 753.2 204.0 C752.5 206.0 751.7 208.0 751.1 210.0 C750.5 212.0 750.1 214.0 749.6 216.0 C749.1 218.0 748.7 220.0 748.3 222.0 C747.9 224.0 747.4 226.0 747.0 228.0 C746.6 230.0 746.2 232.0 745.7 234.0 C745.2 236.0 744.7 238.0 744.2 240.0 C743.7 242.0 743.2 244.0 742.6 246.0 C742.1 248.0 741.6 250.0 741.0 252.0 C740.5 254.0 740.0 256.0 739.4 258.0 C738.9 260.0 738.3 262.0 737.7 264.0 C737.1 266.0 736.5 268.0 735.9 270.0 C735.3 272.0 734.7 274.0 734.0 276.0 C733.4 278.0 732.8 280.0 732.2 282.0 C731.6 284.0 730.9 286.0 730.3 288.0 C729.7 290.0 729.1 292.0 728.5 294.0 C728.0 296.0 727.6 298.0 727.2 300.0 C726.7 302.0 726.3 304.0 725.9 306.0 C725.5 308.0 725.1 310.0 724.7 312.0 C724.2 314.0 723.7 316.0 723.4 318.0 C723.1 320.0 723.1 322.0 723.0 324.0 C722.9 326.0 722.8 328.0 722.7 330.0 C722.5 332.0 722.3 334.0 722.1 336.0 C721.9 338.0 721.7 340.0 721.5 342.0 C721.3 344.0 721.1 346.0 720.8 348.0 C720.5 350.0 719.9 352.0 719.5 354.0 C719.0 356.0 718.8 358.0 718.2 360.0 C717.5 362.0 716.6 364.0 715.8 366.0 C714.9 368.0 713.9 370.0 713.1 372.0 C712.2 374.0 711.5 376.0 710.7 378.0 C709.9 380.0 709.0 382.0 708.2 384.0 C707.4 386.0 706.6 388.0 705.8 390.0 C705.0 392.0 704.3 394.0 703.4 396.0 C702.5 398.0 701.5 400.0 700.3 402.0 C699.2 404.0 697.7 406.0 696.4 408.0 C695.1 410.0 693.7 412.0 692.5 414.0 C691.4 416.0 690.5 418.0 689.4 420.0 C688.3 422.0 687.2 424.0 686.0 426.0 C684.9 428.0 683.8 430.0 682.6 432.0 C681.5 434.0 680.3 436.0 679.2 438.0 C678.1 440.0 677.0 442.0 675.8 444.0 C674.6 446.0 673.2 448.0 671.9 450.0 C670.6 452.0 669.1 454.0 667.7 456.0 C666.3 458.0 664.3 461.0 663.6 462.0" fill="none" stroke="#686868" stroke-width="1.7" stroke-linecap="butt" stroke-linejoin="round" stroke-dasharray="3.3 1.3" stroke-dashoffset="4.0"/>
<path d="M778.1 126.0 C777.8 127.0 777.0 130.0 776.5 132.0 C776.0 134.0 775.5 136.0 774.9 138.0 C774.4 140.0 773.9 142.0 773.4 144.0 C772.8 146.0 772.3 148.0 771.8 150.0 C771.3 152.0 770.8 154.0 770.2 156.0 C769.7 158.0 769.2 160.0 768.6 162.0 C768.0 164.0 767.3 166.0 766.7 168.0 C766.0 170.0 765.3 172.0 764.7 174.0 C764.0 176.0 763.4 178.0 762.7 180.0 C762.1 182.0 761.4 184.0 760.7 186.0 C760.1 188.0 759.4 190.0 758.8 192.0 C758.1 194.0 757.4 196.0 756.7 198.0 C756.0 200.0 755.4 202.0 754.7 204.0 C754.0 206.0 753.2 208.0 752.7 210.0 C752.1 212.0 751.8 214.0 751.4 216.0 C751.0 218.0 750.7 220.0 750.3 222.0 C749.9 224.0 749.6 226.0 749.2 228.0 C748.9 230.0 748.5 232.0 748.1 234.0 C747.7 236.0 747.2 238.0 746.8 240.0 C746.3 242.0 745.8 244.0 745.4 246.0 C744.9 248.0 744.4 250.0 743.9 252.0 C743.4 254.0 742.9 256.0 742.4 258.0 C741.9 260.0 741.4 262.0 740.8 264.0 C740.3 266.0 739.7 268.0 739.1 270.0 C738.5 272.0 738.0 274.0 737.4 276.0 C736.8 278.0 736.2 280.0 735.6 282.0 C735.1 284.0 734.5 286.0 733.9 288.0 C733.3 290.0 732.7 292.0 732.2 294.0 C731.7 296.0 731.2 298.0 730.8 300.0 C730.4 302.0 730.0 304.0 729.6 306.0 C729.2 308.0 728.8 310.0 728.4 312.0 C728.0 314.0 727.5 316.0 727.2 318.0 C726.9 320.0 726.9 322.0 726.7 324.0 C726.6 326.0 726.5 328.0 726.3 330.0 C726.1 332.0 725.8 334.0 725.6 336.0 C725.4 338.0 725.2 340.0 724.9 342.0 C724.7 344.0 724.5 346.0 724.2 348.0 C723.8 350.0 723.3 352.0 722.9 354.0 C722.4 356.0 722.2 358.0 721.6 360.0 C720.9 362.0 719.9 364.0 719.0 366.0 C718.1 368.0 717.1 370.0 716.1 372.0 C715.2 374.0 714.4 376.0 713.5 378.0 C712.7 380.0 711.8 382.0 710.9 384.0 C710.1 386.0 709.2 388.0 708.3 390.0 C707.5 392.0 706.7 394.0 705.7 396.0 C704.8 398.0 703.7 400.0 702.5 402.0 C701.2 404.0 699.7 406.0 698.3 408.0 C696.9 410.0 695.4 412.0 694.2 414.0 C692.9 416.0 692.0 418.0 690.8 420.0 C689.7 422.0 688.6 424.0 687.4 426.0 C686.2 428.0 685.1 430.0 683.9 432.0 C682.8 434.0 681.6 436.0 680.4 438.0 C679.3 440.0 678.2 442.0 677.0 444.0 C675.7 446.0 674.4 448.0 673.0 450.0 C671.7 452.0 670.3 454.0 668.9 456.0 C667.6 458.0 665.5 461.0 664.8 462.0" fill="none" stroke="#c6c6c6" stroke-width="1.1" stroke-linecap="butt" stroke-linejoin="round"/>
<path d="M778.1 126.0 C777.8 127.0 777.0 130.0 776.5 132.0 C776.0 134.0 775.5 136.0 774.9 138.0 C774.4 140.0 773.9 142.0 773.4 144.0 C772.8 146.0 772.3 148.0 771.8 150.0 C771.3 152.0 770.8 154.0 770.2 156.0 C769.7 158.0 769.2 160.0 768.6 162.0 C768.0 164.0 767.3 166.0 766.7 168.0 C766.0 170.0 765.3 172.0 764.7 174.0 C764.0 176.0 763.4 178.0 762.7 180.0 C762.1 182.0 761.4 184.0 760.7 186.0 C760.1 188.0 759.4 190.0 758.8 192.0 C758.1 194.0 757.4 196.0 756.7 198.0 C756.0 200.0 755.4 202.0 754.7 204.0 C754.0 206.0 753.2 208.0 752.7 210.0 C752.1 212.0 751.8 214.0 751.4 216.0 C751.0 218.0 750.7 220.0 750.3 222.0 C749.9 224.0 749.6 226.0 749.2 228.0 C748.9 230.0 748.5 232.0 748.1 234.0 C747.7 236.0 747.2 238.0 746.8 240.0 C746.3 242.0 745.8 244.0 745.4 246.0 C744.9 248.0 744.4 250.0 743.9 252.0 C743.4 254.0 742.9 256.0 742.4 258.0 C741.9 260.0 741.4 262.0 740.8 264.0 C740.3 266.0 739.7 268.0 739.1 270.0 C738.5 272.0 738.0 274.0 737.4 276.0 C736.8 278.0 736.2 280.0 735.6 282.0 C735.1 284.0 734.5 286.0 733.9 288.0 C733.3 290.0 732.7 292.0 732.2 294.0 C731.7 296.0 731.2 298.0 730.8 300.0 C730.4 302.0 730.0 304.0 729.6 306.0 C729.2 308.0 728.8 310.0 728.4 312.0 C728.0 314.0 727.5 316.0 727.2 318.0 C726.9 320.0 726.9 322.0 726.7 324.0 C726.6 326.0 726.5 328.0 726.3 330.0 C726.1 332.0 725.8 334.0 725.6 336.0 C725.4 338.0 725.2 340.0 724.9 342.0 C724.7 344.0 724.5 346.0 724.2 348.0 C723.8 350.0 723.3 352.0 722.9 354.0 C722.4 356.0 722.2 358.0 721.6 360.0 C720.9 362.0 719.9 364.0 719.0 366.0 C718.1 368.0 717.1 370.0 716.1 372.0 C715.2 374.0 714.4 376.0 713.5 378.0 C712.7 380.0 711.8 382.0 710.9 384.0 C710.1 386.0 709.2 388.0 708.3 390.0 C707.5 392.0 706.7 394.0 705.7 396.0 C704.8 398.0 703.7 400.0 702.5 402.0 C701.2 404.0 699.7 406.0 698.3 408.0 C696.9 410.0 695.4 412.0 694.2 414.0 C692.9 416.0 692.0 418.0 690.8 420.0 C689.7 422.0 688.6 424.0 687.4 426.0 C686.2 428.0 685.1 430.0 683.9 432.0 C682.8 434.0 681.6 436.0 680.4 438.0 C679.3 440.0 678.2 442.0 677.0 444.0 C675.7 446.0 674.4 448.0 673.0 450.0 C671.7 452.0 670.3 454.0 668.9 456.0 C667.6 458.0 665.5 461.0 664.8 462.0" fill="none" stroke="#686868" stroke-width="1.7" stroke-linecap="butt" stroke-linejoin="round" stroke-dasharray="3.3 1.3" stroke-dashoffset="0.4"/>
<path d="M779.7 126.0 C779.4 127.0 778.6 130.0 778.1 132.0 C777.5 134.0 777.0 136.0 776.5 138.0 C775.9 140.0 775.4 142.0 774.9 144.0 C774.3 146.0 773.8 148.0 773.2 150.0 C772.7 152.0 772.2 154.0 771.6 156.0 C771.1 158.0 770.6 160.0 770.0 162.0 C769.4 164.0 768.6 166.0 768.0 168.0 C767.3 170.0 766.6 172.0 765.9 174.0 C765.3 176.0 764.6 178.0 763.9 180.0 C763.2 182.0 762.6 184.0 761.9 186.0 C761.2 188.0 760.5 190.0 759.9 192.0 C759.2 194.0 758.6 196.0 758.0 198.0 C757.4 200.0 756.7 202.0 756.1 204.0 C755.5 206.0 754.8 208.0 754.3 210.0 C753.8 212.0 753.5 214.0 753.2 216.0 C752.9 218.0 752.6 220.0 752.3 222.0 C752.0 224.0 751.7 226.0 751.4 228.0 C751.1 230.0 750.9 232.0 750.6 234.0 C750.2 236.0 749.8 238.0 749.4 240.0 C749.0 242.0 748.5 244.0 748.1 246.0 C747.7 248.0 747.2 250.0 746.8 252.0 C746.4 254.0 745.9 256.0 745.4 258.0 C745.0 260.0 744.5 262.0 744.0 264.0 C743.5 266.0 742.9 268.0 742.4 270.0 C741.8 272.0 741.3 274.0 740.7 276.0 C740.2 278.0 739.6 280.0 739.1 282.0 C738.5 284.0 738.0 286.0 737.4 288.0 C736.9 290.0 736.3 292.0 735.8 294.0 C735.3 296.0 734.9 298.0 734.5 300.0 C734.1 302.0 733.7 304.0 733.3 306.0 C732.9 308.0 732.5 310.0 732.2 312.0 C731.8 314.0 731.3 316.0 731.0 318.0 C730.7 320.0 730.6 322.0 730.4 324.0 C730.2 326.0 730.1 328.0 729.9 330.0 C729.7 332.0 729.4 334.0 729.1 336.0 C728.9 338.0 728.6 340.0 728.3 342.0 C728.1 344.0 727.9 346.0 727.5 348.0 C727.2 350.0 726.7 352.0 726.3 354.0 C725.8 356.0 725.7 358.0 725.0 360.0 C724.3 362.0 723.3 364.0 722.3 366.0 C721.3 368.0 720.2 370.0 719.2 372.0 C718.2 374.0 717.3 376.0 716.4 378.0 C715.5 380.0 714.6 382.0 713.6 384.0 C712.7 386.0 711.8 388.0 710.9 390.0 C709.9 392.0 709.1 394.0 708.1 396.0 C707.0 398.0 705.9 400.0 704.6 402.0 C703.3 404.0 701.7 406.0 700.2 408.0 C698.7 410.0 697.1 412.0 695.8 414.0 C694.4 416.0 693.5 418.0 692.3 420.0 C691.1 422.0 690.0 424.0 688.8 426.0 C687.6 428.0 686.4 430.0 685.2 432.0 C684.0 434.0 682.8 436.0 681.6 438.0 C680.5 440.0 679.3 442.0 678.1 444.0 C676.9 446.0 675.5 448.0 674.2 450.0 C672.9 452.0 671.5 454.0 670.1 456.0 C668.8 458.0 666.7 461.0 666.1 462.0" fill="none" stroke="#c6c6c6" stroke-width="1.1" stroke-linecap="butt" stroke-linejoin="round"/>
<path d="M779.7 126.0 C779.4 127.0 778.6 130.0 778.1 132.0 C777.5 134.0 777.0 136.0 776.5 138.0 C775.9 140.0 775.4 142.0 774.9 144.0 C774.3 146.0 773.8 148.0 773.2 150.0 C772.7 152.0 772.2 154.0 771.6 156.0 C771.1 158.0 770.6 160.0 770.0 162.0 C769.4 164.0 768.6 166.0 768.0 168.0 C767.3 170.0 766.6 172.0 765.9 174.0 C765.3 176.0 764.6 178.0 763.9 180.0 C763.2 182.0 762.6 184.0 761.9 186.0 C761.2 188.0 760.5 190.0 759.9 192.0 C759.2 194.0 758.6 196.0 758.0 198.0 C757.4 200.0 756.7 202.0 756.1 204.0 C755.5 206.0 754.8 208.0 754.3 210.0 C753.8 212.0 753.5 214.0 753.2 216.0 C752.9 218.0 752.6 220.0 752.3 222.0 C752.0 224.0 751.7 226.0 751.4 228.0 C751.1 230.0 750.9 232.0 750.6 234.0 C750.2 236.0 749.8 238.0 749.4 240.0 C749.0 242.0 748.5 244.0 748.1 246.0 C747.7 248.0 747.2 250.0 746.8 252.0 C746.4 254.0 745.9 256.0 745.4 258.0 C745.0 260.0 744.5 262.0 744.0 264.0 C743.5 266.0 742.9 268.0 742.4 270.0 C741.8 272.0 741.3 274.0 740.7 276.0 C740.2 278.0 739.6 280.0 739.1 282.0 C738.5 284.0 738.0 286.0 737.4 288.0 C736.9 290.0 736.3 292.0 735.8 294.0 C735.3 296.0 734.9 298.0 734.5 300.0 C734.1 302.0 733.7 304.0 733.3 306.0 C732.9 308.0 732.5 310.0 732.2 312.0 C731.8 314.0 731.3 316.0 731.0 318.0 C730.7 320.0 730.6 322.0 730.4 324.0 C730.2 326.0 730.1 328.0 729.9 330.0 C729.7 332.0 729.4 334.0 729.1 336.0 C728.9 338.0 728.6 340.0 728.3 342.0 C728.1 344.0 727.9 346.0 727.5 348.0 C727.2 350.0 726.7 352.0 726.3 354.0 C725.8 356.0 725.7 358.0 725.0 360.0 C724.3 362.0 723.3 364.0 722.3 366.0 C721.3 368.0 720.2 370.0 719.2 372.0 C718.2 374.0 717.3 376.0 716.4 378.0 C715.5 380.0 714.6 382.0 713.6 384.0 C712.7 386.0 711.8 388.0 710.9 390.0 C709.9 392.0 709.1 394.0 708.1 396.0 C707.0 398.0 705.9 400.0 704.6 402.0 C703.3 404.0 701.7 406.0 700.2 408.0 C698.7 410.0 697.1 412.0 695.8 414.0 C694.4 416.0 693.5 418.0 692.3 420.0 C691.1 422.0 690.0 424.0 688.8 426.0 C687.6 428.0 686.4 430.0 685.2 432.0 C684.0 434.0 682.8 436.0 681.6 438.0 C680.5 440.0 679.3 442.0 678.1 444.0 C676.9 446.0 675.5 448.0 674.2 450.0 C672.9 452.0 671.5 454.0 670.1 456.0 C668.8 458.0 666.7 461.0 666.1 462.0" fill="none" stroke="#686868" stroke-width="1.7" stroke-linecap="butt" stroke-linejoin="round" stroke-dasharray="3.3 1.3" stroke-dashoffset="2.9"/>
<path d="M782.1 126.0 C781.8 127.0 781.0 130.0 780.4 132.0 C779.9 134.0 779.3 136.0 778.8 138.0 C778.2 140.0 777.6 142.0 777.1 144.0 C776.5 146.0 776.0 148.0 775.4 150.0 C774.8 152.0 774.3 154.0 773.7 156.0 C773.2 158.0 772.6 160.0 772.0 162.0 C771.4 164.0 770.6 166.0 769.9 168.0 C769.2 170.0 768.5 172.0 767.8 174.0 C767.1 176.0 766.4 178.0 765.7 180.0 C765.0 182.0 764.3 184.0 763.6 186.0 C762.9 188.0 762.2 190.0 761.5 192.0 C760.9 194.0 760.4 196.0 759.9 198.0 C759.3 200.0 758.8 202.0 758.3 204.0 C757.8 206.0 757.1 208.0 756.7 210.0 C756.3 212.0 756.1 214.0 755.9 216.0 C755.7 218.0 755.5 220.0 755.3 222.0 C755.1 224.0 755.0 226.0 754.8 228.0 C754.6 230.0 754.5 232.0 754.2 234.0 C754.0 236.0 753.6 238.0 753.2 240.0 C752.9 242.0 752.6 244.0 752.2 246.0 C751.8 248.0 751.5 250.0 751.1 252.0 C750.7 254.0 750.4 256.0 750.0 258.0 C749.6 260.0 749.2 262.0 748.7 264.0 C748.2 266.0 747.7 268.0 747.2 270.0 C746.7 272.0 746.2 274.0 745.7 276.0 C745.3 278.0 744.8 280.0 744.3 282.0 C743.8 284.0 743.2 286.0 742.7 288.0 C742.2 290.0 741.7 292.0 741.2 294.0 C740.8 296.0 740.4 298.0 740.0 300.0 C739.6 302.0 739.2 304.0 738.9 306.0 C738.5 308.0 738.1 310.0 737.8 312.0 C737.4 314.0 737.0 316.0 736.7 318.0 C736.4 320.0 736.2 322.0 736.0 324.0 C735.8 326.0 735.6 328.0 735.3 330.0 C735.1 332.0 734.7 334.0 734.4 336.0 C734.1 338.0 733.8 340.0 733.5 342.0 C733.2 344.0 732.9 346.0 732.6 348.0 C732.2 350.0 731.8 352.0 731.4 354.0 C731.0 356.0 730.8 358.0 730.1 360.0 C729.5 362.0 728.3 364.0 727.2 366.0 C726.1 368.0 724.8 370.0 723.8 372.0 C722.7 374.0 721.7 376.0 720.7 378.0 C719.7 380.0 718.7 382.0 717.7 384.0 C716.7 386.0 715.7 388.0 714.6 390.0 C713.6 392.0 712.7 394.0 711.6 396.0 C710.5 398.0 709.3 400.0 707.9 402.0 C706.4 404.0 704.6 406.0 703.0 408.0 C701.4 410.0 699.6 412.0 698.2 414.0 C696.7 416.0 695.7 418.0 694.5 420.0 C693.3 422.0 692.0 424.0 690.8 426.0 C689.6 428.0 688.4 430.0 687.2 432.0 C685.9 434.0 684.7 436.0 683.5 438.0 C682.3 440.0 681.1 442.0 679.8 444.0 C678.6 446.0 677.2 448.0 675.9 450.0 C674.6 452.0 673.3 454.0 671.9 456.0 C670.6 458.0 668.6 461.0 667.9 462.0" fill="none" stroke="#c9c9c9" stroke-width="1.7" stroke-linecap="butt" stroke-linejoin="round"/>
<path d="M781.3 126.0 C781.0 127.0 780.2 130.0 779.7 132.0 C779.1 134.0 778.6 136.0 778.0 138.0 C777.4 140.0 776.9 142.0 776.3 144.0 C775.8 146.0 775.2 148.0 774.7 150.0 C774.1 152.0 773.6 154.0 773.0 156.0 C772.5 158.0 772.0 160.0 771.3 162.0 C770.7 164.0 770.0 166.0 769.3 168.0 C768.6 170.0 767.9 172.0 767.2 174.0 C766.5 176.0 765.8 178.0 765.1 180.0 C764.4 182.0 763.7 184.0 763.1 186.0 C762.4 188.0 761.6 190.0 761.0 192.0 C760.3 194.0 759.8 196.0 759.2 198.0 C758.7 200.0 758.1 202.0 757.6 204.0 C757.0 206.0 756.3 208.0 755.9 210.0 C755.5 212.0 755.3 214.0 755.0 216.0 C754.7 218.0 754.6 220.0 754.3 222.0 C754.1 224.0 753.9 226.0 753.7 228.0 C753.4 230.0 753.3 232.0 753.0 234.0 C752.7 236.0 752.3 238.0 752.0 240.0 C751.6 242.0 751.2 244.0 750.8 246.0 C750.5 248.0 750.1 250.0 749.7 252.0 C749.3 254.0 748.9 256.0 748.5 258.0 C748.0 260.0 747.6 262.0 747.1 264.0 C746.7 266.0 746.1 268.0 745.6 270.0 C745.1 272.0 744.6 274.0 744.1 276.0 C743.6 278.0 743.1 280.0 742.5 282.0 C742.0 284.0 741.5 286.0 741.0 288.0 C740.4 290.0 739.9 292.0 739.4 294.0 C738.9 296.0 738.5 298.0 738.1 300.0 C737.7 302.0 737.4 304.0 737.0 306.0 C736.6 308.0 736.3 310.0 735.9 312.0 C735.5 314.0 735.1 316.0 734.8 318.0 C734.5 320.0 734.4 322.0 734.1 324.0 C733.9 326.0 733.8 328.0 733.5 330.0 C733.3 332.0 733.0 334.0 732.7 336.0 C732.4 338.0 732.1 340.0 731.8 342.0 C731.5 344.0 731.2 346.0 730.9 348.0 C730.5 350.0 730.1 352.0 729.7 354.0 C729.3 356.0 729.1 358.0 728.4 360.0 C727.7 362.0 726.6 364.0 725.6 366.0 C724.5 368.0 723.3 370.0 722.2 372.0 C721.2 374.0 720.3 376.0 719.3 378.0 C718.3 380.0 717.3 382.0 716.3 384.0 C715.3 386.0 714.4 388.0 713.4 390.0 C712.4 392.0 711.5 394.0 710.4 396.0 C709.3 398.0 708.2 400.0 706.8 402.0 C705.4 404.0 703.6 406.0 702.1 408.0 C700.5 410.0 698.7 412.0 697.4 414.0 C696.0 416.0 695.0 418.0 693.7 420.0 C692.5 422.0 691.4 424.0 690.1 426.0 C688.9 428.0 687.7 430.0 686.5 432.0 C685.3 434.0 684.1 436.0 682.9 438.0 C681.7 440.0 680.5 442.0 679.2 444.0 C678.0 446.0 676.7 448.0 675.4 450.0 C674.0 452.0 672.7 454.0 671.3 456.0 C670.0 458.0 668.0 461.0 667.3 462.0" fill="none" stroke="#c6c6c6" stroke-width="1.1" stroke-linecap="butt" stroke-linejoin="round"/>
<path d="M781.3 126.0 C781.0 127.0 780.2 130.0 779.7 132.0 C779.1 134.0 778.6 136.0 778.0 138.0 C777.4 140.0 776.9 142.0 776.3 144.0 C775.8 146.0 775.2 148.0 774.7 150.0 C774.1 152.0 773.6 154.0 773.0 156.0 C772.5 158.0 772.0 160.0 771.3 162.0 C770.7 164.0 770.0 166.0 769.3 168.0 C768.6 170.0 767.9 172.0 767.2 174.0 C766.5 176.0 765.8 178.0 765.1 180.0 C764.4 182.0 763.7 184.0 763.1 186.0 C762.4 188.0 761.6 190.0 761.0 192.0 C760.3 194.0 759.8 196.0 759.2 198.0 C758.7 200.0 758.1 202.0 757.6 204.0 C757.0 206.0 756.3 208.0 755.9 210.0 C755.5 212.0 755.3 214.0 755.0 216.0 C754.7 218.0 754.6 220.0 754.3 222.0 C754.1 224.0 753.9 226.0 753.7 228.0 C753.4 230.0 753.3 232.0 753.0 234.0 C752.7 236.0 752.3 238.0 752.0 240.0 C751.6 242.0 751.2 244.0 750.8 246.0 C750.5 248.0 750.1 250.0 749.7 252.0 C749.3 254.0 748.9 256.0 748.5 258.0 C748.0 260.0 747.6 262.0 747.1 264.0 C746.7 266.0 746.1 268.0 745.6 270.0 C745.1 272.0 744.6 274.0 744.1 276.0 C743.6 278.0 743.1 280.0 742.5 282.0 C742.0 284.0 741.5 286.0 741.0 288.0 C740.4 290.0 739.9 292.0 739.4 294.0 C738.9 296.0 738.5 298.0 738.1 300.0 C737.7 302.0 737.4 304.0 737.0 306.0 C736.6 308.0 736.3 310.0 735.9 312.0 C735.5 314.0 735.1 316.0 734.8 318.0 C734.5 320.0 734.4 322.0 734.1 324.0 C733.9 326.0 733.8 328.0 733.5 330.0 C733.3 332.0 733.0 334.0 732.7 336.0 C732.4 338.0 732.1 340.0 731.8 342.0 C731.5 344.0 731.2 346.0 730.9 348.0 C730.5 350.0 730.1 352.0 729.7 354.0 C729.3 356.0 729.1 358.0 728.4 360.0 C727.7 362.0 726.6 364.0 725.6 366.0 C724.5 368.0 723.3 370.0 722.2 372.0 C721.2 374.0 720.3 376.0 719.3 378.0 C718.3 380.0 717.3 382.0 716.3 384.0 C715.3 386.0 714.4 388.0 713.4 390.0 C712.4 392.0 711.5 394.0 710.4 396.0 C709.3 398.0 708.2 400.0 706.8 402.0 C705.4 404.0 703.6 406.0 702.1 408.0 C700.5 410.0 698.7 412.0 697.4 414.0 C696.0 416.0 695.0 418.0 693.7 420.0 C692.5 422.0 691.4 424.0 690.1 426.0 C688.9 428.0 687.7 430.0 686.5 432.0 C685.3 434.0 684.1 436.0 682.9 438.0 C681.7 440.0 680.5 442.0 679.2 444.0 C678.0 446.0 676.7 448.0 675.4 450.0 C674.0 452.0 672.7 454.0 671.3 456.0 C670.0 458.0 668.0 461.0 667.3 462.0" fill="none" stroke="#686868" stroke-width="1.7" stroke-linecap="butt" stroke-linejoin="round" stroke-dasharray="3.3 1.3" stroke-dashoffset="1.2"/>
<path d="M782.9 126.0 C782.7 127.0 781.8 130.0 781.2 132.0 C780.7 134.0 780.1 136.0 779.5 138.0 C779.0 140.0 778.4 142.0 777.8 144.0 C777.3 146.0 776.7 148.0 776.1 150.0 C775.6 152.0 775.0 154.0 774.4 156.0 C773.9 158.0 773.3 160.0 772.7 162.0 C772.0 164.0 771.3 166.0 770.6 168.0 C769.9 170.0 769.2 172.0 768.4 174.0 C767.7 176.0 767.0 178.0 766.3 180.0 C765.6 182.0 764.9 184.0 764.2 186.0 C763.5 188.0 762.7 190.0 762.1 192.0 C761.5 194.0 761.0 196.0 760.5 198.0 C760.0 200.0 759.5 202.0 759.0 204.0 C758.5 206.0 757.9 208.0 757.5 210.0 C757.2 212.0 757.0 214.0 756.8 216.0 C756.6 218.0 756.5 220.0 756.3 222.0 C756.2 224.0 756.0 226.0 755.9 228.0 C755.7 230.0 755.6 232.0 755.4 234.0 C755.2 236.0 754.8 238.0 754.5 240.0 C754.2 242.0 753.9 244.0 753.6 246.0 C753.2 248.0 752.9 250.0 752.6 252.0 C752.2 254.0 751.8 256.0 751.5 258.0 C751.1 260.0 750.7 262.0 750.3 264.0 C749.8 266.0 749.3 268.0 748.8 270.0 C748.4 272.0 747.9 274.0 747.4 276.0 C746.9 278.0 746.5 280.0 746.0 282.0 C745.5 284.0 745.0 286.0 744.5 288.0 C744.0 290.0 743.5 292.0 743.1 294.0 C742.6 296.0 742.2 298.0 741.8 300.0 C741.4 302.0 741.1 304.0 740.7 306.0 C740.4 308.0 740.0 310.0 739.7 312.0 C739.3 314.0 738.9 316.0 738.6 318.0 C738.3 320.0 738.1 322.0 737.8 324.0 C737.6 326.0 737.4 328.0 737.1 330.0 C736.8 332.0 736.5 334.0 736.2 336.0 C735.9 338.0 735.5 340.0 735.2 342.0 C734.9 344.0 734.6 346.0 734.3 348.0 C733.9 350.0 733.5 352.0 733.1 354.0 C732.7 356.0 732.6 358.0 731.9 360.0 C731.2 362.0 729.9 364.0 728.8 366.0 C727.7 368.0 726.4 370.0 725.3 372.0 C724.2 374.0 723.2 376.0 722.2 378.0 C721.1 380.0 720.1 382.0 719.0 384.0 C718.0 386.0 716.9 388.0 715.9 390.0 C714.9 392.0 713.9 394.0 712.8 396.0 C711.6 398.0 710.4 400.0 709.0 402.0 C707.5 404.0 705.6 406.0 704.0 408.0 C702.3 410.0 700.4 412.0 699.0 414.0 C697.5 416.0 696.4 418.0 695.2 420.0 C694.0 422.0 692.7 424.0 691.5 426.0 C690.3 428.0 689.0 430.0 687.8 432.0 C686.6 434.0 685.3 436.0 684.1 438.0 C682.9 440.0 681.7 442.0 680.4 444.0 C679.1 446.0 677.8 448.0 676.5 450.0 C675.2 452.0 673.9 454.0 672.5 456.0 C671.2 458.0 669.2 461.0 668.5 462.0" fill="none" stroke="#c6c6c6" stroke-width="1.1" stroke-linecap="butt" stroke-linejoin="round"/>
<path d="M782.9 126.0 C782.7 127.0 781.8 130.0 781.2 132.0 C780.7 134.0 780.1 136.0 779.5 138.0 C779.0 140.0 778.4 142.0 777.8 144.0 C777.3 146.0 776.7 148.0 776.1 150.0 C775.6 152.0 775.0 154.0 774.4 156.0 C773.9 158.0 773.3 160.0 772.7 162.0 C772.0 164.0 771.3 166.0 770.6 168.0 C769.9 170.0 769.2 172.0 768.4 174.0 C767.7 176.0 767.0 178.0 766.3 180.0 C765.6 182.0 764.9 184.0 764.2 186.0 C763.5 188.0 762.7 190.0 762.1 192.0 C761.5 194.0 761.0 196.0 760.5 198.0 C760.0 200.0 759.5 202.0 759.0 204.0 C758.5 206.0 757.9 208.0 757.5 210.0 C757.2 212.0 757.0 214.0 756.8 216.0 C756.6 218.0 756.5 220.0 756.3 222.0 C756.2 224.0 756.0 226.0 755.9 228.0 C755.7 230.0 755.6 232.0 755.4 234.0 C755.2 236.0 754.8 238.0 754.5 240.0 C754.2 242.0 753.9 244.0 753.6 246.0 C753.2 248.0 752.9 250.0 752.6 252.0 C752.2 254.0 751.8 256.0 751.5 258.0 C751.1 260.0 750.7 262.0 750.3 264.0 C749.8 266.0 749.3 268.0 748.8 270.0 C748.4 272.0 747.9 274.0 747.4 276.0 C746.9 278.0 746.5 280.0 746.0 282.0 C745.5 284.0 745.0 286.0 744.5 288.0 C744.0 290.0 743.5 292.0 743.1 294.0 C742.6 296.0 742.2 298.0 741.8 300.0 C741.4 302.0 741.1 304.0 740.7 306.0 C740.4 308.0 740.0 310.0 739.7 312.0 C739.3 314.0 738.9 316.0 738.6 318.0 C738.3 320.0 738.1 322.0 737.8 324.0 C737.6 326.0 737.4 328.0 737.1 330.0 C736.8 332.0 736.5 334.0 736.2 336.0 C735.9 338.0 735.5 340.0 735.2 342.0 C734.9 344.0 734.6 346.0 734.3 348.0 C733.9 350.0 733.5 352.0 733.1 354.0 C732.7 356.0 732.6 358.0 731.9 360.0 C731.2 362.0 729.9 364.0 728.8 366.0 C727.7 368.0 726.4 370.0 725.3 372.0 C724.2 374.0 723.2 376.0 722.2 378.0 C721.1 380.0 720.1 382.0 719.0 384.0 C718.0 386.0 716.9 388.0 715.9 390.0 C714.9 392.0 713.9 394.0 712.8 396.0 C711.6 398.0 710.4 400.0 709.0 402.0 C707.5 404.0 705.6 406.0 704.0 408.0 C702.3 410.0 700.4 412.0 699.0 414.0 C697.5 416.0 696.4 418.0 695.2 420.0 C694.0 422.0 692.7 424.0 691.5 426.0 C690.3 428.0 689.0 430.0 687.8 432.0 C686.6 434.0 685.3 436.0 684.1 438.0 C682.9 440.0 681.7 442.0 680.4 444.0 C679.1 446.0 677.8 448.0 676.5 450.0 C675.2 452.0 673.9 454.0 672.5 456.0 C671.2 458.0 669.2 461.0 668.5 462.0" fill="none" stroke="#686868" stroke-width="1.7" stroke-linecap="butt" stroke-linejoin="round" stroke-dasharray="3.3 1.3" stroke-dashoffset="3.7"/>
<path d="M784.6 126.0 C784.3 127.0 783.4 130.0 782.8 132.0 C782.2 134.0 781.6 136.0 781.1 138.0 C780.5 140.0 779.9 142.0 779.3 144.0 C778.7 146.0 778.2 148.0 777.6 150.0 C777.0 152.0 776.4 154.0 775.8 156.0 C775.2 158.0 774.7 160.0 774.0 162.0 C773.4 164.0 772.6 166.0 771.9 168.0 C771.1 170.0 770.4 172.0 769.7 174.0 C769.0 176.0 768.3 178.0 767.5 180.0 C766.8 182.0 766.1 184.0 765.4 186.0 C764.6 188.0 763.8 190.0 763.2 192.0 C762.6 194.0 762.2 196.0 761.7 198.0 C761.3 200.0 760.9 202.0 760.4 204.0 C760.0 206.0 759.4 208.0 759.1 210.0 C758.8 212.0 758.7 214.0 758.6 216.0 C758.5 218.0 758.4 220.0 758.3 222.0 C758.3 224.0 758.2 226.0 758.1 228.0 C758.0 230.0 758.0 232.0 757.8 234.0 C757.7 236.0 757.4 238.0 757.1 240.0 C756.9 242.0 756.6 244.0 756.3 246.0 C756.0 248.0 755.7 250.0 755.4 252.0 C755.1 254.0 754.8 256.0 754.5 258.0 C754.1 260.0 753.8 262.0 753.4 264.0 C753.0 266.0 752.5 268.0 752.1 270.0 C751.6 272.0 751.2 274.0 750.8 276.0 C750.3 278.0 749.9 280.0 749.4 282.0 C749.0 284.0 748.5 286.0 748.0 288.0 C747.6 290.0 747.1 292.0 746.7 294.0 C746.2 296.0 745.8 298.0 745.4 300.0 C745.1 302.0 744.8 304.0 744.4 306.0 C744.1 308.0 743.7 310.0 743.4 312.0 C743.1 314.0 742.7 316.0 742.4 318.0 C742.1 320.0 741.8 322.0 741.6 324.0 C741.3 326.0 741.0 328.0 740.7 330.0 C740.4 332.0 740.1 334.0 739.7 336.0 C739.4 338.0 739.0 340.0 738.6 342.0 C738.3 344.0 738.0 346.0 737.6 348.0 C737.2 350.0 736.8 352.0 736.4 354.0 C736.1 356.0 736.0 358.0 735.3 360.0 C734.6 362.0 733.3 364.0 732.1 366.0 C730.9 368.0 729.5 370.0 728.3 372.0 C727.2 374.0 726.1 376.0 725.0 378.0 C723.9 380.0 722.8 382.0 721.7 384.0 C720.6 386.0 719.5 388.0 718.4 390.0 C717.3 392.0 716.3 394.0 715.1 396.0 C713.9 398.0 712.7 400.0 711.1 402.0 C709.6 404.0 707.6 406.0 705.8 408.0 C704.1 410.0 702.1 412.0 700.6 414.0 C699.0 416.0 697.9 418.0 696.7 420.0 C695.4 422.0 694.1 424.0 692.9 426.0 C691.6 428.0 690.4 430.0 689.1 432.0 C687.8 434.0 686.6 436.0 685.3 438.0 C684.0 440.0 682.8 442.0 681.5 444.0 C680.3 446.0 679.0 448.0 677.7 450.0 C676.4 452.0 675.0 454.0 673.7 456.0 C672.4 458.0 670.4 461.0 669.8 462.0" fill="none" stroke="#c6c6c6" stroke-width="1.1" stroke-linecap="butt" stroke-linejoin="round"/>
<path d="M784.6 126.0 C784.3 127.0 783.4 130.0 782.8 132.0 C782.2 134.0 781.6 136.0 781.1 138.0 C780.5 140.0 779.9 142.0 779.3 144.0 C778.7 146.0 778.2 148.0 777.6 150.0 C777.0 152.0 776.4 154.0 775.8 156.0 C775.2 158.0 774.7 160.0 774.0 162.0 C773.4 164.0 772.6 166.0 771.9 168.0 C771.1 170.0 770.4 172.0 769.7 174.0 C769.0 176.0 768.3 178.0 767.5 180.0 C766.8 182.0 766.1 184.0 765.4 186.0 C764.6 188.0 763.8 190.0 763.2 192.0 C762.6 194.0 762.2 196.0 761.7 198.0 C761.3 200.0 760.9 202.0 760.4 204.0 C760.0 206.0 759.4 208.0 759.1 210.0 C758.8 212.0 758.7 214.0 758.6 216.0 C758.5 218.0 758.4 220.0 758.3 222.0 C758.3 224.0 758.2 226.0 758.1 228.0 C758.0 230.0 758.0 232.0 757.8 234.0 C757.7 236.0 757.4 238.0 757.1 240.0 C756.9 242.0 756.6 244.0 756.3 246.0 C756.0 248.0 755.7 250.0 755.4 252.0 C755.1 254.0 754.8 256.0 754.5 258.0 C754.1 260.0 753.8 262.0 753.4 264.0 C753.0 266.0 752.5 268.0 752.1 270.0 C751.6 272.0 751.2 274.0 750.8 276.0 C750.3 278.0 749.9 280.0 749.4 282.0 C749.0 284.0 748.5 286.0 748.0 288.0 C747.6 290.0 747.1 292.0 746.7 294.0 C746.2 296.0 745.8 298.0 745.4 300.0 C745.1 302.0 744.8 304.0 744.4 306.0 C744.1 308.0 743.7 310.0 743.4 312.0 C743.1 314.0 742.7 316.0 742.4 318.0 C742.1 320.0 741.8 322.0 741.6 324.0 C741.3 326.0 741.0 328.0 740.7 330.0 C740.4 332.0 740.1 334.0 739.7 336.0 C739.4 338.0 739.0 340.0 738.6 342.0 C738.3 344.0 738.0 346.0 737.6 348.0 C737.2 350.0 736.8 352.0 736.4 354.0 C736.1 356.0 736.0 358.0 735.3 360.0 C734.6 362.0 733.3 364.0 732.1 366.0 C730.9 368.0 729.5 370.0 728.3 372.0 C727.2 374.0 726.1 376.0 725.0 378.0 C723.9 380.0 722.8 382.0 721.7 384.0 C720.6 386.0 719.5 388.0 718.4 390.0 C717.3 392.0 716.3 394.0 715.1 396.0 C713.9 398.0 712.7 400.0 711.1 402.0 C709.6 404.0 707.6 406.0 705.8 408.0 C704.1 410.0 702.1 412.0 700.6 414.0 C699.0 416.0 697.9 418.0 696.7 420.0 C695.4 422.0 694.1 424.0 692.9 426.0 C691.6 428.0 690.4 430.0 689.1 432.0 C687.8 434.0 686.6 436.0 685.3 438.0 C684.0 440.0 682.8 442.0 681.5 444.0 C680.3 446.0 679.0 448.0 677.7 450.0 C676.4 452.0 675.0 454.0 673.7 456.0 C672.4 458.0 670.4 461.0 669.8 462.0" fill="none" stroke="#686868" stroke-width="1.7" stroke-linecap="butt" stroke-linejoin="round" stroke-dasharray="3.3 1.3" stroke-dashoffset="2.0"/>
<path d="M786.2 126.0 C785.9 127.0 785.0 130.0 784.4 132.0 C783.8 134.0 783.2 136.0 782.6 138.0 C782.0 140.0 781.4 142.0 780.8 144.0 C780.2 146.0 779.6 148.0 779.0 150.0 C778.4 152.0 777.8 154.0 777.2 156.0 C776.6 158.0 776.1 160.0 775.4 162.0 C774.7 164.0 773.9 166.0 773.2 168.0 C772.4 170.0 771.7 172.0 771.0 174.0 C770.2 176.0 769.5 178.0 768.7 180.0 C768.0 182.0 767.3 184.0 766.5 186.0 C765.8 188.0 764.9 190.0 764.3 192.0 C763.7 194.0 763.4 196.0 763.0 198.0 C762.6 200.0 762.3 202.0 761.9 204.0 C761.5 206.0 761.0 208.0 760.7 210.0 C760.5 212.0 760.5 214.0 760.4 216.0 C760.3 218.0 760.4 220.0 760.4 222.0 C760.3 224.0 760.3 226.0 760.3 228.0 C760.3 230.0 760.4 232.0 760.3 234.0 C760.2 236.0 759.9 238.0 759.7 240.0 C759.5 242.0 759.3 244.0 759.0 246.0 C758.8 248.0 758.6 250.0 758.3 252.0 C758.1 254.0 757.8 256.0 757.5 258.0 C757.2 260.0 756.9 262.0 756.5 264.0 C756.2 266.0 755.7 268.0 755.3 270.0 C754.9 272.0 754.5 274.0 754.1 276.0 C753.7 278.0 753.3 280.0 752.9 282.0 C752.4 284.0 752.0 286.0 751.6 288.0 C751.2 290.0 750.7 292.0 750.3 294.0 C749.9 296.0 749.5 298.0 749.1 300.0 C748.7 302.0 748.4 304.0 748.1 306.0 C747.8 308.0 747.5 310.0 747.1 312.0 C746.8 314.0 746.5 316.0 746.2 318.0 C745.9 320.0 745.6 322.0 745.3 324.0 C745.0 326.0 744.7 328.0 744.4 330.0 C744.0 332.0 743.6 334.0 743.2 336.0 C742.9 338.0 742.5 340.0 742.1 342.0 C741.7 344.0 741.4 346.0 741.0 348.0 C740.6 350.0 740.2 352.0 739.8 354.0 C739.5 356.0 739.5 358.0 738.7 360.0 C738.0 362.0 736.6 364.0 735.4 366.0 C734.1 368.0 732.6 370.0 731.4 372.0 C730.1 374.0 729.1 376.0 727.9 378.0 C726.7 380.0 725.6 382.0 724.4 384.0 C723.3 386.0 722.1 388.0 720.9 390.0 C719.8 392.0 718.7 394.0 717.5 396.0 C716.2 398.0 714.9 400.0 713.3 402.0 C711.6 404.0 709.6 406.0 707.7 408.0 C705.9 410.0 703.8 412.0 702.2 414.0 C700.6 416.0 699.4 418.0 698.1 420.0 C696.8 422.0 695.5 424.0 694.3 426.0 C693.0 428.0 691.7 430.0 690.4 432.0 C689.1 434.0 687.8 436.0 686.5 438.0 C685.2 440.0 684.0 442.0 682.7 444.0 C681.4 446.0 680.1 448.0 678.8 450.0 C677.5 452.0 676.2 454.0 674.9 456.0 C673.6 458.0 671.7 461.0 671.0 462.0" fill="none" stroke="#c6c6c6" stroke-width="1.1" stroke-linecap="butt" stroke-linejoin="round"/>
<path d="M786.2 126.0 C785.9 127.0 785.0 130.0 784.4 132.0 C783.8 134.0 783.2 136.0 782.6 138.0 C782.0 140.0 781.4 142.0 780.8 144.0 C780.2 146.0 779.6 148.0 779.0 150.0 C778.4 152.0 777.8 154.0 777.2 156.0 C776.6 158.0 776.1 160.0 775.4 162.0 C774.7 164.0 773.9 166.0 773.2 168.0 C772.4 170.0 771.7 172.0 771.0 174.0 C770.2 176.0 769.5 178.0 768.7 180.0 C768.0 182.0 767.3 184.0 766.5 186.0 C765.8 188.0 764.9 190.0 764.3 192.0 C763.7 194.0 763.4 196.0 763.0 198.0 C762.6 200.0 762.3 202.0 761.9 204.0 C761.5 206.0 761.0 208.0 760.7 210.0 C760.5 212.0 760.5 214.0 760.4 216.0 C760.3 218.0 760.4 220.0 760.4 222.0 C760.3 224.0 760.3 226.0 760.3 228.0 C760.3 230.0 760.4 232.0 760.3 234.0 C760.2 236.0 759.9 238.0 759.7 240.0 C759.5 242.0 759.3 244.0 759.0 246.0 C758.8 248.0 758.6 250.0 758.3 252.0 C758.1 254.0 757.8 256.0 757.5 258.0 C757.2 260.0 756.9 262.0 756.5 264.0 C756.2 266.0 755.7 268.0 755.3 270.0 C754.9 272.0 754.5 274.0 754.1 276.0 C753.7 278.0 753.3 280.0 752.9 282.0 C752.4 284.0 752.0 286.0 751.6 288.0 C751.2 290.0 750.7 292.0 750.3 294.0 C749.9 296.0 749.5 298.0 749.1 300.0 C748.7 302.0 748.4 304.0 748.1 306.0 C747.8 308.0 747.5 310.0 747.1 312.0 C746.8 314.0 746.5 316.0 746.2 318.0 C745.9 320.0 745.6 322.0 745.3 324.0 C745.0 326.0 744.7 328.0 744.4 330.0 C744.0 332.0 743.6 334.0 743.2 336.0 C742.9 338.0 742.5 340.0 742.1 342.0 C741.7 344.0 741.4 346.0 741.0 348.0 C740.6 350.0 740.2 352.0 739.8 354.0 C739.5 356.0 739.5 358.0 738.7 360.0 C738.0 362.0 736.6 364.0 735.4 366.0 C734.1 368.0 732.6 370.0 731.4 372.0 C730.1 374.0 729.1 376.0 727.9 378.0 C726.7 380.0 725.6 382.0 724.4 384.0 C723.3 386.0 722.1 388.0 720.9 390.0 C719.8 392.0 718.7 394.0 717.5 396.0 C716.2 398.0 714.9 400.0 713.3 402.0 C711.6 404.0 709.6 406.0 707.7 408.0 C705.9 410.0 703.8 412.0 702.2 414.0 C700.6 416.0 699.4 418.0 698.1 420.0 C696.8 422.0 695.5 424.0 694.3 426.0 C693.0 428.0 691.7 430.0 690.4 432.0 C689.1 434.0 687.8 436.0 686.5 438.0 C685.2 440.0 684.0 442.0 682.7 444.0 C681.4 446.0 680.1 448.0 678.8 450.0 C677.5 452.0 676.2 454.0 674.9 456.0 C673.6 458.0 671.7 461.0 671.0 462.0" fill="none" stroke="#686868" stroke-width="1.7" stroke-linecap="butt" stroke-linejoin="round" stroke-dasharray="3.3 1.3" stroke-dashoffset="0.7"/>
<path d="M769.0 243.0 C768.7 244.1 767.7 247.3 767.1 249.5 C766.6 251.7 766.3 253.8 765.8 256.0 C765.4 258.2 765.0 260.3 764.5 262.5 C764.0 264.7 763.5 266.8 763.0 269.0 C762.5 271.2 762.0 273.3 761.5 275.5 C761.0 277.7 760.5 279.8 760.0 282.0 C759.5 284.2 759.1 286.3 758.6 288.5 C758.2 290.7 757.7 292.8 757.2 295.0 C756.8 297.2 756.3 299.3 755.9 301.5 C755.5 303.7 755.1 305.8 754.7 308.0 C754.2 310.2 753.8 312.3 753.4 314.5 C753.0 316.7 752.6 318.8 752.2 321.0 C751.8 323.2 751.4 325.3 750.9 327.5 C750.4 329.7 749.9 331.8 749.2 334.0 C748.6 336.2 747.8 338.3 747.1 340.5 C746.4 342.7 745.7 344.8 745.0 347.0 C744.4 349.2 743.7 351.3 743.1 353.5 C742.4 355.7 741.4 358.9 741.1 360.0" fill="none" stroke="#c6c6c6" stroke-width="1.1" stroke-linecap="butt" stroke-linejoin="round"/>
<path d="M769.0 243.0 C768.7 244.1 767.7 247.3 767.1 249.5 C766.6 251.7 766.3 253.8 765.8 256.0 C765.4 258.2 765.0 260.3 764.5 262.5 C764.0 264.7 763.5 266.8 763.0 269.0 C762.5 271.2 762.0 273.3 761.5 275.5 C761.0 277.7 760.5 279.8 760.0 282.0 C759.5 284.2 759.1 286.3 758.6 288.5 C758.2 290.7 757.7 292.8 757.2 295.0 C756.8 297.2 756.3 299.3 755.9 301.5 C755.5 303.7 755.1 305.8 754.7 308.0 C754.2 310.2 753.8 312.3 753.4 314.5 C753.0 316.7 752.6 318.8 752.2 321.0 C751.8 323.2 751.4 325.3 750.9 327.5 C750.4 329.7 749.9 331.8 749.2 334.0 C748.6 336.2 747.8 338.3 747.1 340.5 C746.4 342.7 745.7 344.8 745.0 347.0 C744.4 349.2 743.7 351.3 743.1 353.5 C742.4 355.7 741.4 358.9 741.1 360.0" fill="none" stroke="#686868" stroke-width="1.7" stroke-linecap="butt" stroke-linejoin="round" stroke-dasharray="3.3 1.3" stroke-dashoffset="1.1"/>
<path d="M771.0 243.0 C771.0 244.1 771.2 247.3 771.0 249.5 C770.8 251.7 770.3 253.8 769.9 256.0 C769.6 258.2 769.2 260.3 768.7 262.5 C768.3 264.7 767.6 266.8 767.0 269.0 C766.5 271.2 765.9 273.3 765.4 275.5 C764.8 277.7 764.4 279.8 763.9 282.0 C763.4 284.2 762.9 286.3 762.4 288.5 C761.9 290.7 761.4 292.8 760.9 295.0 C760.4 297.2 759.9 299.3 759.4 301.5 C758.9 303.7 758.4 305.8 758.0 308.0 C757.5 310.2 757.0 312.3 756.5 314.5 C756.0 316.7 755.5 318.8 755.0 321.0 C754.5 323.2 754.1 325.3 753.5 327.5 C752.9 329.7 752.3 331.8 751.4 334.0 C750.6 336.2 749.5 338.3 748.6 340.5 C747.7 342.7 746.8 344.8 746.0 347.0 C745.2 349.2 744.4 351.3 743.6 353.5 C742.8 355.7 741.6 358.9 741.2 360.0" fill="none" stroke="#c6c6c6" stroke-width="1.1" stroke-linecap="butt" stroke-linejoin="round"/>
<path d="M771.0 243.0 C771.0 244.1 771.2 247.3 771.0 249.5 C770.8 251.7 770.3 253.8 769.9 256.0 C769.6 258.2 769.2 260.3 768.7 262.5 C768.3 264.7 767.6 266.8 767.0 269.0 C766.5 271.2 765.9 273.3 765.4 275.5 C764.8 277.7 764.4 279.8 763.9 282.0 C763.4 284.2 762.9 286.3 762.4 288.5 C761.9 290.7 761.4 292.8 760.9 295.0 C760.4 297.2 759.9 299.3 759.4 301.5 C758.9 303.7 758.4 305.8 758.0 308.0 C757.5 310.2 757.0 312.3 756.5 314.5 C756.0 316.7 755.5 318.8 755.0 321.0 C754.5 323.2 754.1 325.3 753.5 327.5 C752.9 329.7 752.3 331.8 751.4 334.0 C750.6 336.2 749.5 338.3 748.6 340.5 C747.7 342.7 746.8 344.8 746.0 347.0 C745.2 349.2 744.4 351.3 743.6 353.5 C742.8 355.7 741.6 358.9 741.2 360.0" fill="none" stroke="#686868" stroke-width="1.7" stroke-linecap="butt" stroke-linejoin="round" stroke-dasharray="3.3 1.3" stroke-dashoffset="3.0"/>
<path d="M773.0 243.0 C773.3 244.1 774.7 247.3 774.9 249.5 C775.0 251.7 774.4 253.8 774.1 256.0 C773.7 258.2 773.5 260.3 773.0 262.5 C772.5 264.7 771.7 266.8 771.1 269.0 C770.5 271.2 769.9 273.3 769.3 275.5 C768.7 277.7 768.2 279.8 767.7 282.0 C767.2 284.2 766.7 286.3 766.1 288.5 C765.6 290.7 765.1 292.8 764.5 295.0 C764.0 297.2 763.5 299.3 762.9 301.5 C762.4 303.7 761.8 305.8 761.2 308.0 C760.7 310.2 760.1 312.3 759.5 314.5 C759.0 316.7 758.4 318.8 757.9 321.0 C757.3 323.2 756.9 325.3 756.2 327.5 C755.5 329.7 754.6 331.8 753.6 334.0 C752.6 336.2 751.2 338.3 750.1 340.5 C748.9 342.7 747.9 344.8 746.9 347.0 C746.0 349.2 745.1 351.3 744.2 353.5 C743.3 355.7 741.9 358.9 741.4 360.0" fill="none" stroke="#c6c6c6" stroke-width="1.1" stroke-linecap="butt" stroke-linejoin="round"/>
<path d="M773.0 243.0 C773.3 244.1 774.7 247.3 774.9 249.5 C775.0 251.7 774.4 253.8 774.1 256.0 C773.7 258.2 773.5 260.3 773.0 262.5 C772.5 264.7 771.7 266.8 771.1 269.0 C770.5 271.2 769.9 273.3 769.3 275.5 C768.7 277.7 768.2 279.8 767.7 282.0 C767.2 284.2 766.7 286.3 766.1 288.5 C765.6 290.7 765.1 292.8 764.5 295.0 C764.0 297.2 763.5 299.3 762.9 301.5 C762.4 303.7 761.8 305.8 761.2 308.0 C760.7 310.2 760.1 312.3 759.5 314.5 C759.0 316.7 758.4 318.8 757.9 321.0 C757.3 323.2 756.9 325.3 756.2 327.5 C755.5 329.7 754.6 331.8 753.6 334.0 C752.6 336.2 751.2 338.3 750.1 340.5 C748.9 342.7 747.9 344.8 746.9 347.0 C746.0 349.2 745.1 351.3 744.2 353.5 C743.3 355.7 741.9 358.9 741.4 360.0" fill="none" stroke="#686868" stroke-width="1.7" stroke-linecap="butt" stroke-linejoin="round" stroke-dasharray="3.3 1.3" stroke-dashoffset="0.2"/>
<path d="M731.0 331.0 L758.0 331.0 L752.0 343.5 L740.0 362.2 L716.2 400.0 L702.2 414.8 L686.0 439.8 L671.0 463.0 L664.0 463.0 L688.0 420.0 L704.0 395.0 L717.0 368.0Z" fill="#e4e1dc" opacity="0.25"/>
<path d="M712.0 367.0 L723.0 370.5 L706.0 403.0 L697.0 415.0Z" fill="#e6e3dd"/>
</g>
<path d="M715.4 435.8 L717.6 436.8 L709.1 454.8 L697.9 454.8Z" fill="#e88fa0"/>
<circle cx="661.0" cy="155.5" r="3.5" fill="#d9cdf3" stroke="#8666d6" stroke-width="0.8"/><path d="M659.7 153.6 v3.8 M662.3 153.6 v3.8 M659.7 155.5 h2.6" stroke="#7a58cf" stroke-width="0.75" fill="none"/>
<circle cx="691.4" cy="174.6" r="3.5" fill="#d9cdf3" stroke="#8666d6" stroke-width="0.8"/><path d="M690.1 172.7 v3.8 M692.7 172.7 v3.8 M690.1 174.6 h2.6" stroke="#7a58cf" stroke-width="0.75" fill="none"/>
<circle cx="710.0" cy="173.0" r="3.5" fill="#d9cdf3" stroke="#8666d6" stroke-width="0.8"/><path d="M708.7 171.1 v3.8 M711.3 171.1 v3.8 M708.7 173.0 h2.6" stroke="#7a58cf" stroke-width="0.75" fill="none"/>
<circle cx="662.5" cy="252.8" r="3.5" fill="#d9cdf3" stroke="#8666d6" stroke-width="0.8"/><path d="M661.2 250.8 v3.8 M663.8 250.8 v3.8 M661.2 252.8 h2.6" stroke="#7a58cf" stroke-width="0.75" fill="none"/>
<circle cx="726.0" cy="219.2" r="3.5" fill="#d9cdf3" stroke="#8666d6" stroke-width="0.8"/><path d="M724.7 217.3 v3.8 M727.3 217.3 v3.8 M724.7 219.2 h2.6" stroke="#7a58cf" stroke-width="0.75" fill="none"/>
<circle cx="654.8" cy="314.2" r="3.5" fill="#d9cdf3" stroke="#8666d6" stroke-width="0.8"/><path d="M653.5 312.4 v3.8 M656.0 312.4 v3.8 M653.5 314.2 h2.6" stroke="#7a58cf" stroke-width="0.75" fill="none"/>
<circle cx="669.8" cy="342.5" r="3.5" fill="#d9cdf3" stroke="#8666d6" stroke-width="0.8"/><path d="M668.5 340.6 v3.8 M671.0 340.6 v3.8 M668.5 342.5 h2.6" stroke="#7a58cf" stroke-width="0.75" fill="none"/>
<circle cx="632.2" cy="365.4" r="3.5" fill="#d9cdf3" stroke="#8666d6" stroke-width="0.8"/><path d="M631.0 363.5 v3.8 M633.5 363.5 v3.8 M631.0 365.4 h2.6" stroke="#7a58cf" stroke-width="0.75" fill="none"/>
<rect x="641.0" y="152.1" width="2.6" height="2.6" fill="#1e96e0"/>
<rect x="681.6" y="257.9" width="2.6" height="2.6" fill="#1e96e0"/>
<rect x="691.2" y="256.9" width="2.6" height="2.6" fill="#1e96e0"/>
<rect x="680.0" y="264.4" width="2.6" height="2.6" fill="#1e96e0"/>
<rect x="700.1" y="266.3" width="2.6" height="2.6" fill="#1e96e0"/>
<rect x="672.2" y="297.3" width="2.6" height="2.6" fill="#1e96e0"/>
<rect x="671.6" y="305.9" width="2.6" height="2.6" fill="#1e96e0"/>
<rect x="643.7" y="367.2" width="2.6" height="2.6" fill="#1e96e0"/>
<rect x="777.8" y="211.4" width="2.6" height="2.6" fill="#1e96e0"/>
<rect x="761.6" y="324.1" width="2.6" height="2.6" fill="#1e96e0"/>
<rect x="800.6" y="325.9" width="2.6" height="2.6" fill="#1e96e0"/>
<rect x="759.1" y="331.9" width="2.6" height="2.6" fill="#1e96e0"/>
<rect x="757.2" y="335.7" width="2.6" height="2.6" fill="#1e96e0"/>
<rect x="777.8" y="333.2" width="2.6" height="2.6" fill="#1e96e0"/>
<rect x="753.7" y="346.9" width="2.6" height="2.6" fill="#1e96e0"/>
<rect x="757.5" y="346.9" width="2.6" height="2.6" fill="#1e96e0"/>
<rect x="752.1" y="350.9" width="2.6" height="2.6" fill="#1e96e0"/>
<rect x="770.0" y="349.7" width="2.6" height="2.6" fill="#1e96e0"/>
<rect x="766.6" y="354.7" width="2.6" height="2.6" fill="#1e96e0"/>
<rect x="675.5" y="269.4" width="2.2" height="2.2" fill="#6a78c8"/>
<rect x="696.1" y="267.1" width="2.2" height="2.2" fill="#6a78c8"/>
<rect x="680.5" y="126.0" width="2.2" height="2.2" fill="#6a78c8"/>
<rect x="715.5" y="191.0" width="2.2" height="2.2" fill="#6a78c8"/>
<rect x="669.9" y="401.1" width="2.2" height="2.2" fill="#6a78c8"/>
<rect x="733.3" y="299.4" width="2.2" height="2.2" fill="#6a78c8"/>
<rect x="645.5" y="125.7" width="2.2" height="2.2" fill="#6a78c8"/>
<rect x="781.0" y="219.3" width="7.4" height="7.4" rx="0.8" fill="#fff" stroke="#2a9ae6" stroke-width="0.9"/><rect x="782.5" y="221.0" width="4.4" height="3.6" rx="0.6" fill="#2a9ae6"/>
<rect x="791.3" y="278.1" width="7.4" height="7.4" rx="0.8" fill="#fff" stroke="#2a9ae6" stroke-width="0.9"/><rect x="792.8" y="279.8" width="4.4" height="3.6" rx="0.6" fill="#2a9ae6"/>
<rect x="787.5" y="326.4" width="7.4" height="7.4" rx="0.8" fill="#fff" stroke="#2a9ae6" stroke-width="0.9"/><rect x="789.0" y="328.1" width="4.4" height="3.6" rx="0.6" fill="#2a9ae6"/>
<rect x="757.3" y="338.3" width="7.4" height="7.4" rx="0.8" fill="#fff" stroke="#2a9ae6" stroke-width="0.9"/><rect x="758.8" y="340.0" width="4.4" height="3.6" rx="0.6" fill="#2a9ae6"/>
<rect x="787.5" y="328.3" width="7.4" height="7.4" rx="0.8" fill="#fff" stroke="#2a9ae6" stroke-width="0.9"/><rect x="789.0" y="330.0" width="4.4" height="3.6" rx="0.6" fill="#2a9ae6"/>
<rect x="656.9" y="177.2" width="2.8" height="3.4" rx="0.4" fill="#1e96e0"/><path d="M659.7 178.0 l3 -1.6" stroke="#1e96e0" stroke-width="0.5"/>
<rect x="669.0" y="178.7" width="2.8" height="3.4" rx="0.4" fill="#1e96e0"/><path d="M671.8 179.5 l3 -1.6" stroke="#1e96e0" stroke-width="0.5"/>
<rect x="628.8" y="181.6" width="2.8" height="3.4" rx="0.4" fill="#1e96e0"/><path d="M631.6 182.4 l3 -1.6" stroke="#1e96e0" stroke-width="0.5"/>
<path d="M-2 0 H2 M0.6 -1.1 L2 0 L0.6 1.1" transform="translate(651.0 177.8) rotate(193)" stroke="#444" stroke-width="0.5" fill="none"/>
<path d="M-2 0 H2 M0.6 -1.1 L2 0 L0.6 1.1" transform="translate(683.5 181.8) rotate(13)" stroke="#444" stroke-width="0.5" fill="none"/>
<path d="M-2 0 H2 M0.6 -1.1 L2 0 L0.6 1.1" transform="translate(691.0 148.5) rotate(8)" stroke="#444" stroke-width="0.5" fill="none"/>
<path d="M-2 0 H2 M0.6 -1.1 L2 0 L0.6 1.1" transform="translate(723.5 137.1) rotate(188)" stroke="#444" stroke-width="0.5" fill="none"/>
<path d="M-2 0 H2 M0.6 -1.1 L2 0 L0.6 1.1" transform="translate(739.1 137.4) rotate(8)" stroke="#444" stroke-width="0.5" fill="none"/>
<path d="M-2 0 H2 M0.6 -1.1 L2 0 L0.6 1.1" transform="translate(631.0 175.2) rotate(-95)" stroke="#444" stroke-width="0.5" fill="none"/>
<path d="M-2 0 H2 M0.6 -1.1 L2 0 L0.6 1.1" transform="translate(728.8 194.5) rotate(15)" stroke="#444" stroke-width="0.5" fill="none"/>
<path d="M-2 0 H2 M0.6 -1.1 L2 0 L0.6 1.1" transform="translate(717.5 249.9) rotate(160)" stroke="#444" stroke-width="0.5" fill="none"/>
<path d="M-2 0 H2 M0.6 -1.1 L2 0 L0.6 1.1" transform="translate(739.8 212.8) rotate(-75)" stroke="#444" stroke-width="0.5" fill="none"/>
<path d="M-2 0 H2 M0.6 -1.1 L2 0 L0.6 1.1" transform="translate(624.8 275.8) rotate(193)" stroke="#444" stroke-width="0.5" fill="none"/>
<path d="M-2 0 H2 M0.6 -1.1 L2 0 L0.6 1.1" transform="translate(640.0 282.6) rotate(-80)" stroke="#444" stroke-width="0.5" fill="none"/>
<path d="M-2 0 H2 M0.6 -1.1 L2 0 L0.6 1.1" transform="translate(689.8 376.6) rotate(-75)" stroke="#444" stroke-width="0.5" fill="none"/>
<path d="M-2 0 H2 M0.6 -1.1 L2 0 L0.6 1.1" transform="translate(689.8 386.0) rotate(105)" stroke="#444" stroke-width="0.5" fill="none"/>
<path d="M-2 0 H2 M0.6 -1.1 L2 0 L0.6 1.1" transform="translate(625.4 389.1) rotate(12)" stroke="#444" stroke-width="0.5" fill="none"/>
<path d="M-2 0 H2 M0.6 -1.1 L2 0 L0.6 1.1" transform="translate(783.1 439.8) rotate(22)" stroke="#444" stroke-width="0.5" fill="none"/>
<path d="M-2 0 H2 M0.6 -1.1 L2 0 L0.6 1.1" transform="translate(796.9 404.8) rotate(25)" stroke="#444" stroke-width="0.5" fill="none"/>
<path d="M-2 0 H2 M0.6 -1.1 L2 0 L0.6 1.1" transform="translate(736.9 411.6) rotate(-65)" stroke="#444" stroke-width="0.5" fill="none"/>
<path d="M-2 0 H2 M0.6 -1.1 L2 0 L0.6 1.1" transform="translate(726.9 425.4) rotate(115)" stroke="#444" stroke-width="0.5" fill="none"/>
<path d="M-2 0 H2 M0.6 -1.1 L2 0 L0.6 1.1" transform="translate(802.5 277.6) rotate(-62)" stroke="#8a2040" stroke-width="0.5" fill="none"/>
<path d="M-2 0 H2 M0.6 -1.1 L2 0 L0.6 1.1" transform="translate(788.8 298.9) rotate(118)" stroke="#8a2040" stroke-width="0.5" fill="none"/>
<path d="M-2 0 H2 M0.6 -1.1 L2 0 L0.6 1.1" transform="translate(788.8 308.9) rotate(118)" stroke="#8a2040" stroke-width="0.5" fill="none"/>
<path d="M-2 0 H2 M0.6 -1.1 L2 0 L0.6 1.1" transform="translate(756.5 371.2) rotate(118)" stroke="#8a2040" stroke-width="0.5" fill="none"/>
<path d="M-2 0 H2 M0.6 -1.1 L2 0 L0.6 1.1" transform="translate(741.2 396.0) rotate(-62)" stroke="#8a2040" stroke-width="0.5" fill="none"/>
<path d="M-2 0 H2 M0.6 -1.1 L2 0 L0.6 1.1" transform="translate(740.6 397.0) rotate(-62)" stroke="#8a2040" stroke-width="0.5" fill="none"/>
<path d="M-2 0 H2 M0.6 -1.1 L2 0 L0.6 1.1" transform="translate(794.4 300.1) rotate(118)" stroke="#3a5a20" stroke-width="0.5" fill="none"/>
<path d="M-2 0 H2 M0.6 -1.1 L2 0 L0.6 1.1" transform="translate(768.5 341.6) rotate(-62)" stroke="#3a5a20" stroke-width="0.5" fill="none"/>
<path d="M-2 0 H2 M0.6 -1.1 L2 0 L0.6 1.1" transform="translate(736.9 411.6) rotate(-62)" stroke="#3a5a20" stroke-width="0.5" fill="none"/>
<path d="M-2 0 H2 M0.6 -1.1 L2 0 L0.6 1.1" transform="translate(726.9 425.0) rotate(118)" stroke="#3a5a20" stroke-width="0.5" fill="none"/>
<path d="M714.2 258.1 l3 -1.8 l3 1.8 v0.7 h-6z M714.9 259.1 h1 v2.6 h-1z m1.8 0 h1 v2.6 h-1z m1.8 0 h1 v2.6 h-1z M714.0 261.9 h6.4 v0.9 h-6.4z" fill="#8b5a2b"/>
<path d="M637.4 376.1 l3 -1.8 l3 1.8 v0.7 h-6z M638.0 377.1 h1 v2.6 h-1z m1.8 0 h1 v2.6 h-1z m1.8 0 h1 v2.6 h-1z M637.2 379.9 h6.4 v0.9 h-6.4z" fill="#8b5a2b"/>
<path d="M788.2 291.4 l3 -1.8 l3 1.8 v0.7 h-6z M788.9 292.4 h1 v2.6 h-1z m1.8 0 h1 v2.6 h-1z m1.8 0 h1 v2.6 h-1z M788.0 295.2 h6.4 v0.9 h-6.4z" fill="#8b5a2b"/>
<g stroke="#8b5a2b" stroke-width="0.7"><path d="M687.9 337.8 v6 M684.9 340.8 h6 M685.8 338.6 l4.2 4.2 M690.0 338.6 l-4.2 4.2"/></g>
<rect x="772.7" y="293.9" width="5.4" height="4.6" rx="0.6" fill="#b040c0"/><path d="M774.3 293.9 v-1 a1.1 1.1 0 0 1 2.2 0 v1" fill="none" stroke="#b040c0" stroke-width="0.6"/>
<rect x="765" y="164.6" width="14.4" height="9.2" rx="1" fill="#f2f3d8" stroke="#a9a98f" stroke-width="0.5"/>
<text x="772.2" y="169.4" font-size="6.0" fill="#666d2c" text-anchor="middle" dominant-baseline="central" textLength="10.2" lengthAdjust="spacingAndGlyphs">407</text>
<text x="709.2" y="430.2" font-size="8.6" fill="#2a98e0" text-anchor="middle" dominant-baseline="central" font-weight="bold">P</text>
<text x="646.6" y="136.1" font-size="5.7" fill="#2a40bd" text-anchor="middle" dominant-baseline="central" stroke="#fff" stroke-width="1.0" paint-order="stroke" stroke-linejoin="round" font-weight="500">大手町</text>
<text x="682.0" y="136.5" font-size="5.7" fill="#2a40bd" text-anchor="middle" dominant-baseline="central" stroke="#fff" stroke-width="1.0" paint-order="stroke" stroke-linejoin="round" font-weight="500">大手町</text>
<text x="710.6" y="134.9" font-size="5.7" fill="#2a40bd" text-anchor="middle" dominant-baseline="central" stroke="#fff" stroke-width="1.0" paint-order="stroke" stroke-linejoin="round" font-weight="500">大手町</text>
<text x="636.6" y="170.9" font-size="5.2" fill="#333" text-anchor="middle" dominant-baseline="central" stroke="#fff" stroke-width="1.0" paint-order="stroke" stroke-linejoin="round">大手町</text>
<text x="698.5" y="182.8" font-size="5.2" fill="#333" text-anchor="middle" dominant-baseline="central" stroke="#fff" stroke-width="1.0" paint-order="stroke" stroke-linejoin="round">大手町駅</text>
<text x="697.9" y="189.2" font-size="5.2" fill="#333" text-anchor="middle" dominant-baseline="central" stroke="#fff" stroke-width="1.0" paint-order="stroke" stroke-linejoin="round">前</text>
<text x="767.5" y="138.4" font-size="6.0" fill="#6a6a6a" text-anchor="middle" dominant-baseline="central" stroke="#fff" stroke-width="1.0" paint-order="stroke" stroke-linejoin="round">大手町一丁目</text>
<text x="623.5" y="219.9" font-size="5.7" fill="#2a40bd" text-anchor="middle" dominant-baseline="central" stroke="#fff" stroke-width="1.0" paint-order="stroke" stroke-linejoin="round" font-weight="500">大手町</text>
<text x="716.6" y="201.8" font-size="5.7" fill="#2a40bd" text-anchor="middle" dominant-baseline="central" stroke="#fff" stroke-width="1.0" paint-order="stroke" stroke-linejoin="round" font-weight="500">大手町</text>
<text x="653.5" y="235.5" font-size="4.6" fill="#333" text-anchor="middle" dominant-baseline="central" transform="rotate(14.0 653.5 235.5)" stroke="#fff" stroke-width="1.0" paint-order="stroke" stroke-linejoin="round">丸の内 1st</text>
<text x="701.6" y="247.0" font-size="5.2" fill="#333" text-anchor="middle" dominant-baseline="central" stroke="#fff" stroke-width="1.0" paint-order="stroke" stroke-linejoin="round">東京駅丸</text>
<text x="701.6" y="254.2" font-size="5.2" fill="#333" text-anchor="middle" dominant-baseline="central" stroke="#fff" stroke-width="1.0" paint-order="stroke" stroke-linejoin="round">の内北口</text>
<text x="628.5" y="204.2" font-size="5.0" fill="#333" text-anchor="middle" dominant-baseline="central" transform="rotate(-80.0 628.5 204.2)" stroke="#fff" stroke-width="1.0" paint-order="stroke" stroke-linejoin="round">日比谷通り</text>
<text x="657.9" y="216.8" font-size="4.5" fill="#444" text-anchor="middle" dominant-baseline="central" transform="rotate(-76.0 657.9 216.8)" stroke="#fff" stroke-width="1.0" paint-order="stroke" stroke-linejoin="round">丸の内仲通り</text>
<text x="690.1" y="216.8" font-size="4.4" fill="#444" text-anchor="middle" dominant-baseline="central" transform="rotate(-76.0 690.1 216.8)" stroke="#fff" stroke-width="1.0" paint-order="stroke" stroke-linejoin="round">日比谷有楽町線</text>
<text x="729.4" y="229.2" font-size="4.6" fill="#444" text-anchor="middle" dominant-baseline="central" transform="rotate(-58.0 729.4 229.2)" stroke="#fff" stroke-width="1.0" paint-order="stroke" stroke-linejoin="round">丸の内室町線</text>
<text x="740.0" y="199.2" font-size="5.0" fill="#333" text-anchor="middle" dominant-baseline="central" stroke="#fff" stroke-width="1.0" paint-order="stroke" stroke-linejoin="round">丸の内</text>
<text x="795.6" y="213.0" font-size="5.2" fill="#333" text-anchor="middle" dominant-baseline="central" transform="rotate(14.0 795.6 213.0)" stroke="#fff" stroke-width="1.0" paint-order="stroke" stroke-linejoin="round">永代通り</text>
<text x="636.6" y="267.6" font-size="5.2" fill="#333" text-anchor="middle" dominant-baseline="central" transform="rotate(13.0 636.6 267.6)" stroke="#fff" stroke-width="1.0" paint-order="stroke" stroke-linejoin="round">行幸通り</text>
<text x="676.4" y="279.2" font-size="5.7" fill="#2a40bd" text-anchor="middle" dominant-baseline="central" stroke="#fff" stroke-width="1.0" paint-order="stroke" stroke-linejoin="round" font-weight="500">東京</text>
<text x="697.0" y="278.0" font-size="5.7" fill="#2a40bd" text-anchor="middle" dominant-baseline="central" stroke="#fff" stroke-width="1.0" paint-order="stroke" stroke-linejoin="round" font-weight="500">東京</text>
<text x="734.8" y="309.2" font-size="5.7" fill="#2a40bd" text-anchor="middle" dominant-baseline="central" stroke="#fff" stroke-width="1.0" paint-order="stroke" stroke-linejoin="round" font-weight="500">東京</text>
<text x="686.0" y="313.9" font-size="6.2" fill="#777" text-anchor="middle" dominant-baseline="central" stroke="#fff" stroke-width="1.0" paint-order="stroke" stroke-linejoin="round">丸の内</text>
<text x="743.1" y="285.1" font-size="6.2" fill="#777" text-anchor="middle" dominant-baseline="central" stroke="#fff" stroke-width="1.0" paint-order="stroke" stroke-linejoin="round">丸の内一丁目</text>
<text x="631.6" y="315.1" font-size="4.6" fill="#333" text-anchor="middle" dominant-baseline="central" transform="rotate(14.0 631.6 315.1)" stroke="#fff" stroke-width="1.0" paint-order="stroke" stroke-linejoin="round">丸の内 2nd</text>
<text x="780.6" y="316.0" font-size="5.2" fill="#333" text-anchor="middle" dominant-baseline="central" stroke="#fff" stroke-width="1.0" paint-order="stroke" stroke-linejoin="round">八重洲中</text>
<text x="780.6" y="322.9" font-size="5.2" fill="#333" text-anchor="middle" dominant-baseline="central" stroke="#fff" stroke-width="1.0" paint-order="stroke" stroke-linejoin="round">央口前</text>
<text x="653.5" y="332.2" font-size="6.2" fill="#777" text-anchor="middle" dominant-baseline="central" stroke="#fff" stroke-width="1.0" paint-order="stroke" stroke-linejoin="round">丸の内二丁目</text>
<text x="626.0" y="349.1" font-size="4.4" fill="#333" text-anchor="middle" dominant-baseline="central" transform="rotate(12.0 626.0 349.1)" stroke="#fff" stroke-width="1.0" paint-order="stroke" stroke-linejoin="round">丸の内 3rd</text>
<text x="651.6" y="357.9" font-size="4.6" fill="#444" text-anchor="middle" dominant-baseline="central" transform="rotate(-76.0 651.6 357.9)" stroke="#fff" stroke-width="1.0" paint-order="stroke" stroke-linejoin="round">大名小路</text>
<text x="696.0" y="357.9" font-size="4.5" fill="#444" text-anchor="middle" dominant-baseline="central" transform="rotate(-78.0 696.0 357.9)" stroke="#fff" stroke-width="1.0" paint-order="stroke" stroke-linejoin="round">丸の内室町線</text>
<text x="641.0" y="390.8" font-size="5.2" fill="#333" text-anchor="middle" dominant-baseline="central" stroke="#fff" stroke-width="1.0" paint-order="stroke" stroke-linejoin="round">東京国際</text>
<text x="641.0" y="397.9" font-size="5.2" fill="#333" text-anchor="middle" dominant-baseline="central" stroke="#fff" stroke-width="1.0" paint-order="stroke" stroke-linejoin="round">フォーラ</text>
<text x="641.0" y="404.5" font-size="5.2" fill="#333" text-anchor="middle" dominant-baseline="central" stroke="#fff" stroke-width="1.0" paint-order="stroke" stroke-linejoin="round">ム西</text>
<text x="671.6" y="411.2" font-size="5.7" fill="#2a40bd" text-anchor="middle" dominant-baseline="central" stroke="#fff" stroke-width="1.0" paint-order="stroke" stroke-linejoin="round" font-weight="500">東京</text>
<text x="656.0" y="429.8" font-size="6.2" fill="#777" text-anchor="middle" dominant-baseline="central" stroke="#fff" stroke-width="1.0" paint-order="stroke" stroke-linejoin="round">丸の内三丁目</text>
<text x="626.6" y="448.5" font-size="4.6" fill="#444" text-anchor="middle" dominant-baseline="central" transform="rotate(-76.0 626.6 448.5)" stroke="#fff" stroke-width="1.0" paint-order="stroke" stroke-linejoin="round">大名小路</text>
<text x="729.1" y="420.4" font-size="5.2" fill="#333" text-anchor="middle" dominant-baseline="central" stroke="#fff" stroke-width="1.0" paint-order="stroke" stroke-linejoin="round">鍛冶橋</text>
<text x="717.2" y="444.1" font-size="4.8" fill="#333" text-anchor="middle" dominant-baseline="central" transform="rotate(-66.0 717.2 444.1)" stroke="#fff" stroke-width="1.0" paint-order="stroke" stroke-linejoin="round">外堀通り</text>
<text x="691.0" y="441.0" font-size="4.4" fill="#888" text-anchor="middle" dominant-baseline="central" transform="rotate(-60.0 691.0 441.0)" stroke="#fff" stroke-width="1.0" paint-order="stroke" stroke-linejoin="round">東海道新幹線</text>
<text x="761.2" y="357.2" font-size="4.8" fill="#333" text-anchor="middle" dominant-baseline="central" transform="rotate(-64.0 761.2 357.2)" stroke="#fff" stroke-width="1.0" paint-order="stroke" stroke-linejoin="round">外堀通り</text>
<text x="747.5" y="390.8" font-size="5.2" fill="#c0394b" text-anchor="middle" dominant-baseline="central" stroke="#fff" stroke-width="1.0" paint-order="stroke" stroke-linejoin="round">丸の内</text>
<text x="790.6" y="388.5" font-size="4.4" fill="#444" text-anchor="middle" dominant-baseline="central" transform="rotate(-62.0 790.6 388.5)" stroke="#fff" stroke-width="1.0" paint-order="stroke" stroke-linejoin="round">柳通り</text>
<text x="767.5" y="399.5" font-size="6.2" fill="#777" text-anchor="middle" dominant-baseline="central" stroke="#fff" stroke-width="1.0" paint-order="stroke" stroke-linejoin="round">八重洲二丁目</text>
<text x="773.8" y="417.5" font-size="4.6" fill="#333" text-anchor="middle" dominant-baseline="central" transform="rotate(25.0 773.8 417.5)" stroke="#fff" stroke-width="1.0" paint-order="stroke" stroke-linejoin="round">京橋宝通り</text>
<text x="771.2" y="433.5" font-size="4.6" fill="#333" text-anchor="middle" dominant-baseline="central" transform="rotate(22.0 771.2 433.5)" stroke="#fff" stroke-width="1.0" paint-order="stroke" stroke-linejoin="round">鍛冶橋通り →</text>
<text x="796.9" y="451.0" font-size="5.2" fill="#333" text-anchor="middle" dominant-baseline="central" stroke="#fff" stroke-width="1.0" paint-order="stroke" stroke-linejoin="round">京橋</text>
<text x="803.1" y="444.1" font-size="5.7" fill="#2a40bd" text-anchor="middle" dominant-baseline="central" stroke="#fff" stroke-width="1.0" paint-order="stroke" stroke-linejoin="round" font-weight="500">京</text>
<text x="795.0" y="134.6" font-size="4.2" fill="#7a3040" text-anchor="middle" dominant-baseline="central" transform="rotate(62.0 795.0 134.6)" stroke="#fff" stroke-width="1.0" paint-order="stroke" stroke-linejoin="round">首都高</text>
<defs><linearGradient id="mk1" x1="0" y1="0" x2="0" y2="1"><stop offset="0" stop-color="#8349d6"/><stop offset="1" stop-color="#5a2dcf"/></linearGradient></defs><g transform="translate(711.1 293.2)"><ellipse cx="3.5" cy="-1.2" rx="5.5" ry="1.8" fill="#000" opacity="0.18"/><path d="M0 0 C-1.2 -4.5 -6.4 -8.6 -6.4 -14 A6.4 6.4 0 1 1 6.4 -14 C6.4 -8.6 1.2 -4.5 0 0Z" fill="url(#mk1)" stroke="#5631b6" stroke-width="0.5"/><circle cx="0" cy="-14" r="2.3" fill="#fff"/></g>
<g><rect x="623.0" y="131.6" width="17" height="33.6" rx="2.2" fill="#fff" stroke="rgba(0,0,0,0.28)" stroke-width="1"/><path d="M623.0 148.4 h17" stroke="#ccc" stroke-width="0.55"/><path d="M628.8 140.2 h5.4 M631.5 137.5 v5.4" stroke="#111" stroke-width="1.15"/><path d="M629.0 156.8 h5" stroke="#111" stroke-width="1.1"/></g>
<rect x="671.7" y="454.2" width="134.6" height="7.6" fill="#fff" opacity="0.72"/><text x="674.1" y="458.2" font-size="5.9" dominant-baseline="central" textLength="129.6" lengthAdjust="spacingAndGlyphs"><tspan fill="#0078a8">Leaflet</tspan><tspan fill="#333"> | Map data © OpenStreetMap contributors</tspan></text>
</svg>
<svg x="811.6" y="126.1" width="189.4" height="335.7" viewBox="811.6 126.1 189.4 335.7" overflow="hidden">
<rect x="805" y="120" width="205" height="350" fill="#f0ede5"/>
<filter id="bl2" x="-10%" y="-10%" width="120%" height="120%"><feGaussianBlur stdDeviation="3"/></filter>
<filter id="bl3" x="-10%" y="-10%" width="120%" height="120%"><feGaussianBlur stdDeviation="0.8"/></filter>
<g filter="url(#bl2)" fill="#dcdad7">
<path d="M811.0 235.0 L850.0 215.0 L905.0 205.0 L960.0 225.0 L985.0 262.0 L1001.0 280.0 L1001.0 300.0 L940.0 310.0 L900.0 330.0 L880.0 370.0 L860.0 420.0 L852.0 462.0 L811.0 462.0Z" fill="#eae9e6"/>
<path d="M850.0 250.0 L930.0 240.0 L950.0 290.0 L900.0 320.0 L860.0 330.0 L840.0 300.0Z" fill="#e5e4e1"/>
<path d="M835.0 190.0 L870.0 170.0 L890.0 200.0 L870.0 230.0 L840.0 225.0Z" fill="#ebeae7"/>
</g>
<g filter="url(#bl3)">
<ellipse cx="897.0" cy="184.2" rx="4.7" ry="2.2" fill="#c5e2b4" opacity="0.75"/>
<ellipse cx="907.5" cy="187.1" rx="2.1" ry="2.3" fill="#e3efd0" opacity="0.75"/>
<ellipse cx="930.4" cy="208.5" rx="1.8" ry="1.8" fill="#e3efd0" opacity="0.75"/>
<ellipse cx="829.0" cy="210.2" rx="3.9" ry="1.1" fill="#cfe8bf" opacity="0.75"/>
<ellipse cx="996.7" cy="226.3" rx="3.8" ry="2.5" fill="#d4ecc8" opacity="0.75"/>
<ellipse cx="841.6" cy="127.6" rx="3.3" ry="1.1" fill="#e3efd0" opacity="0.75"/>
<ellipse cx="847.8" cy="151.2" rx="1.6" ry="2.2" fill="#cfe8bf" opacity="0.75"/>
<ellipse cx="894.8" cy="213.6" rx="3.3" ry="2.6" fill="#cfe8bf" opacity="0.75"/>
<ellipse cx="906.0" cy="194.9" rx="3.1" ry="1.7" fill="#c5e2b4" opacity="0.75"/>
<ellipse cx="999.6" cy="229.6" rx="4.4" ry="2.8" fill="#c5e2b4" opacity="0.75"/>
<ellipse cx="871.3" cy="149.9" rx="2.5" ry="1.2" fill="#c5e2b4" opacity="0.75"/>
<ellipse cx="956.1" cy="167.6" rx="4.5" ry="2.0" fill="#c5e2b4" opacity="0.75"/>
<ellipse cx="992.1" cy="214.1" rx="1.5" ry="1.5" fill="#e3efd0" opacity="0.75"/>
<ellipse cx="983.1" cy="174.9" rx="4.9" ry="2.0" fill="#cfe8bf" opacity="0.75"/>
<ellipse cx="825.7" cy="191.5" rx="4.2" ry="1.7" fill="#e3efd0" opacity="0.75"/>
<ellipse cx="828.4" cy="160.6" rx="4.9" ry="2.9" fill="#cfe8bf" opacity="0.75"/>
<ellipse cx="834.2" cy="151.6" rx="1.9" ry="1.1" fill="#cfe8bf" opacity="0.75"/>
<ellipse cx="961.8" cy="144.5" rx="3.5" ry="2.1" fill="#e3efd0" opacity="0.75"/>
<ellipse cx="847.8" cy="202.1" rx="2.0" ry="2.6" fill="#d4ecc8" opacity="0.75"/>
<ellipse cx="833.9" cy="169.8" rx="2.2" ry="1.7" fill="#e3efd0" opacity="0.75"/>
<ellipse cx="994.5" cy="209.6" rx="2.6" ry="3.2" fill="#e3efd0" opacity="0.75"/>
<ellipse cx="851.6" cy="167.0" rx="4.5" ry="2.6" fill="#d4ecc8" opacity="0.75"/>
<ellipse cx="830.9" cy="228.9" rx="2.2" ry="1.6" fill="#e3efd0" opacity="0.75"/>
<ellipse cx="957.3" cy="160.2" rx="2.5" ry="1.2" fill="#cfe8bf" opacity="0.75"/>
<ellipse cx="828.9" cy="186.6" rx="2.4" ry="2.5" fill="#e3efd0" opacity="0.75"/>
<ellipse cx="881.9" cy="173.1" rx="4.9" ry="2.2" fill="#e3efd0" opacity="0.75"/>
<ellipse cx="920.0" cy="216.1" rx="2.1" ry="1.4" fill="#e3efd0" opacity="0.75"/>
<ellipse cx="982.8" cy="211.1" rx="2.4" ry="1.5" fill="#c5e2b4" opacity="0.75"/>
<ellipse cx="951.0" cy="223.8" rx="2.2" ry="3.4" fill="#e3efd0" opacity="0.75"/>
<ellipse cx="977.9" cy="188.8" rx="3.0" ry="1.3" fill="#c5e2b4" opacity="0.75"/>
<ellipse cx="819.3" cy="226.1" rx="2.3" ry="2.8" fill="#c5e2b4" opacity="0.75"/>
<ellipse cx="860.3" cy="211.7" rx="3.6" ry="1.7" fill="#c5e2b4" opacity="0.75"/>
<ellipse cx="845.0" cy="200.9" rx="1.7" ry="1.6" fill="#e3efd0" opacity="0.75"/>
<ellipse cx="917.2" cy="214.6" rx="3.7" ry="1.7" fill="#c5e2b4" opacity="0.75"/>
<ellipse cx="984.5" cy="147.2" rx="1.6" ry="1.7" fill="#c5e2b4" opacity="0.75"/>
<ellipse cx="895.8" cy="132.3" rx="2.1" ry="1.9" fill="#c5e2b4" opacity="0.75"/>
<ellipse cx="919.6" cy="139.7" rx="2.8" ry="3.2" fill="#cfe8bf" opacity="0.75"/>
<ellipse cx="996.3" cy="194.3" rx="3.9" ry="2.5" fill="#cfe8bf" opacity="0.75"/>
<ellipse cx="838.4" cy="129.6" rx="1.6" ry="3.3" fill="#d4ecc8" opacity="0.75"/>
<ellipse cx="943.8" cy="226.1" rx="1.6" ry="2.6" fill="#cfe8bf" opacity="0.75"/>
<ellipse cx="902.7" cy="202.0" rx="2.6" ry="3.5" fill="#d4ecc8" opacity="0.75"/>
<ellipse cx="826.1" cy="182.8" rx="4.1" ry="3.3" fill="#e3efd0" opacity="0.75"/>
<ellipse cx="950.6" cy="199.2" rx="4.3" ry="3.3" fill="#e3efd0" opacity="0.75"/>
<ellipse cx="878.1" cy="197.3" rx="4.7" ry="3.2" fill="#cfe8bf" opacity="0.75"/>
<ellipse cx="890.4" cy="208.2" rx="4.5" ry="2.4" fill="#c5e2b4" opacity="0.75"/>
<ellipse cx="929.5" cy="165.8" rx="3.5" ry="2.5" fill="#e3efd0" opacity="0.75"/>
<ellipse cx="827.1" cy="192.5" rx="5.0" ry="3.2" fill="#cfe8bf" opacity="0.75"/>
<ellipse cx="948.9" cy="166.4" rx="4.1" ry="2.5" fill="#c5e2b4" opacity="0.75"/>
<ellipse cx="894.8" cy="213.2" rx="1.8" ry="2.9" fill="#cfe8bf" opacity="0.75"/>
<ellipse cx="817.6" cy="188.5" rx="3.2" ry="1.6" fill="#d4ecc8" opacity="0.75"/>
<ellipse cx="943.3" cy="177.7" rx="3.7" ry="3.3" fill="#e3efd0" opacity="0.75"/>
<ellipse cx="860.1" cy="127.2" rx="2.6" ry="2.7" fill="#e3efd0" opacity="0.75"/>
<ellipse cx="850.1" cy="143.6" rx="4.7" ry="2.6" fill="#c5e2b4" opacity="0.75"/>
<ellipse cx="895.1" cy="218.7" rx="2.6" ry="2.7" fill="#d4ecc8" opacity="0.75"/>
<ellipse cx="849.3" cy="170.8" rx="4.3" ry="3.3" fill="#cfe8bf" opacity="0.75"/>
<ellipse cx="977.5" cy="166.0" rx="3.5" ry="1.8" fill="#cfe8bf" opacity="0.75"/>
<ellipse cx="837.6" cy="177.6" rx="4.4" ry="3.1" fill="#e3efd0" opacity="0.75"/>
<ellipse cx="945.7" cy="224.8" rx="2.5" ry="1.4" fill="#d4ecc8" opacity="0.75"/>
<ellipse cx="896.7" cy="154.6" rx="2.2" ry="2.0" fill="#d4ecc8" opacity="0.75"/>
<ellipse cx="929.6" cy="177.4" rx="2.6" ry="3.1" fill="#cfe8bf" opacity="0.75"/>
<ellipse cx="999.1" cy="204.7" rx="1.7" ry="1.1" fill="#cfe8bf" opacity="0.75"/>
<ellipse cx="993.6" cy="133.2" rx="3.3" ry="2.1" fill="#e3efd0" opacity="0.75"/>
<ellipse cx="965.5" cy="263.7" rx="1.5" ry="1.3" fill="#e3efd0" opacity="0.75"/>
<ellipse cx="972.7" cy="130.3" rx="3.6" ry="1.5" fill="#cfe8bf" opacity="0.75"/>
<ellipse cx="957.0" cy="134.2" rx="3.1" ry="1.9" fill="#d4ecc8" opacity="0.75"/>
<ellipse cx="981.5" cy="240.0" rx="3.5" ry="2.9" fill="#cfe8bf" opacity="0.75"/>
<ellipse cx="984.2" cy="160.7" rx="2.7" ry="1.4" fill="#c5e2b4" opacity="0.75"/>
<ellipse cx="950.5" cy="208.2" rx="3.3" ry="1.4" fill="#d4ecc8" opacity="0.75"/>
<ellipse cx="963.6" cy="186.2" rx="3.2" ry="2.0" fill="#cfe8bf" opacity="0.75"/>
<ellipse cx="980.7" cy="257.6" rx="2.5" ry="2.6" fill="#c5e2b4" opacity="0.75"/>
<ellipse cx="995.3" cy="141.2" rx="3.8" ry="2.4" fill="#e3efd0" opacity="0.75"/>
<ellipse cx="956.5" cy="204.9" rx="3.1" ry="2.8" fill="#d4ecc8" opacity="0.75"/>
<ellipse cx="968.8" cy="225.0" rx="3.7" ry="2.6" fill="#e3efd0" opacity="0.75"/>
<ellipse cx="997.2" cy="206.7" rx="3.1" ry="1.4" fill="#e3efd0" opacity="0.75"/>
<ellipse cx="986.1" cy="268.4" rx="3.1" ry="2.4" fill="#c5e2b4" opacity="0.75"/>
<ellipse cx="960.7" cy="282.6" rx="4.0" ry="3.0" fill="#e3efd0" opacity="0.75"/>
<ellipse cx="976.8" cy="263.6" rx="2.3" ry="2.8" fill="#c5e2b4" opacity="0.75"/>
<ellipse cx="992.8" cy="186.6" rx="1.7" ry="1.9" fill="#d4ecc8" opacity="0.75"/>
<ellipse cx="977.5" cy="259.7" rx="2.7" ry="1.1" fill="#c5e2b4" opacity="0.75"/>
<ellipse cx="990.5" cy="137.1" rx="3.5" ry="1.3" fill="#d4ecc8" opacity="0.75"/>
<ellipse cx="966.8" cy="263.1" rx="1.9" ry="1.3" fill="#d4ecc8" opacity="0.75"/>
<ellipse cx="975.8" cy="251.9" rx="3.6" ry="2.4" fill="#e3efd0" opacity="0.75"/>
<ellipse cx="997.3" cy="211.7" rx="3.9" ry="1.2" fill="#cfe8bf" opacity="0.75"/>
<ellipse cx="961.1" cy="217.6" rx="2.2" ry="2.5" fill="#c5e2b4" opacity="0.75"/>
<ellipse cx="981.9" cy="217.0" rx="3.6" ry="2.1" fill="#c5e2b4" opacity="0.75"/>
<ellipse cx="827.0" cy="411.3" rx="5.4" ry="3.8" fill="#c5e2b4" opacity="0.75"/>
<ellipse cx="822.0" cy="449.8" rx="5.9" ry="2.8" fill="#c5e2b4" opacity="0.75"/>
<ellipse cx="839.5" cy="396.5" rx="4.1" ry="2.8" fill="#d4ecc8" opacity="0.75"/>
<ellipse cx="841.1" cy="382.3" rx="5.9" ry="2.8" fill="#c5e2b4" opacity="0.75"/>
<ellipse cx="831.2" cy="445.7" rx="4.3" ry="2.7" fill="#d4ecc8" opacity="0.75"/>
<ellipse cx="845.2" cy="385.4" rx="4.2" ry="2.5" fill="#d4ecc8" opacity="0.75"/>
<ellipse cx="857.9" cy="455.7" rx="3.1" ry="2.7" fill="#d4ecc8" opacity="0.75"/>
<ellipse cx="818.1" cy="415.6" rx="5.3" ry="3.8" fill="#d4ecc8" opacity="0.75"/>
<ellipse cx="834.9" cy="406.0" rx="2.8" ry="3.0" fill="#cfe8bf" opacity="0.75"/>
<ellipse cx="856.4" cy="390.6" rx="5.1" ry="1.6" fill="#cfe8bf" opacity="0.75"/>
<ellipse cx="821.3" cy="398.6" rx="4.7" ry="2.3" fill="#cfe8bf" opacity="0.75"/>
<ellipse cx="829.1" cy="430.8" rx="2.4" ry="3.3" fill="#c5e2b4" opacity="0.75"/>
<ellipse cx="817.9" cy="421.9" rx="3.0" ry="2.0" fill="#c5e2b4" opacity="0.75"/>
<ellipse cx="837.5" cy="415.8" rx="3.5" ry="2.5" fill="#e3efd0" opacity="0.75"/>
<ellipse cx="837.4" cy="393.1" rx="2.8" ry="3.1" fill="#cfe8bf" opacity="0.75"/>
<ellipse cx="842.6" cy="423.4" rx="5.4" ry="3.0" fill="#cfe8bf" opacity="0.75"/>
<ellipse cx="853.1" cy="399.1" rx="5.0" ry="3.5" fill="#cfe8bf" opacity="0.75"/>
<ellipse cx="855.3" cy="405.9" rx="3.3" ry="3.8" fill="#d4ecc8" opacity="0.75"/>
<ellipse cx="822.5" cy="461.9" rx="5.6" ry="1.8" fill="#c5e2b4" opacity="0.75"/>
<ellipse cx="823.5" cy="439.6" rx="3.0" ry="1.7" fill="#cfe8bf" opacity="0.75"/>
<ellipse cx="851.9" cy="414.6" rx="5.2" ry="1.8" fill="#cfe8bf" opacity="0.75"/>
<ellipse cx="831.3" cy="436.2" rx="2.1" ry="2.0" fill="#d4ecc8" opacity="0.75"/>
<ellipse cx="844.8" cy="454.7" rx="5.9" ry="1.8" fill="#d4ecc8" opacity="0.75"/>
<ellipse cx="836.3" cy="442.2" rx="4.0" ry="3.2" fill="#c5e2b4" opacity="0.75"/>
<ellipse cx="821.1" cy="385.8" rx="2.4" ry="1.6" fill="#e3efd0" opacity="0.75"/>
<ellipse cx="838.5" cy="422.2" rx="4.3" ry="1.9" fill="#e3efd0" opacity="0.75"/>
<ellipse cx="820.9" cy="396.7" rx="5.4" ry="4.0" fill="#c5e2b4" opacity="0.75"/>
<ellipse cx="856.5" cy="387.8" rx="2.2" ry="3.9" fill="#d4ecc8" opacity="0.75"/>
<ellipse cx="834.2" cy="442.7" rx="3.3" ry="2.7" fill="#c5e2b4" opacity="0.75"/>
<ellipse cx="836.7" cy="415.3" rx="4.4" ry="1.5" fill="#c5e2b4" opacity="0.75"/>
<ellipse cx="989.5" cy="456.2" rx="2.7" ry="2.6" fill="#e3efd0" opacity="0.75"/>
<ellipse cx="990.9" cy="440.0" rx="2.8" ry="1.9" fill="#d4ecc8" opacity="0.75"/>
<ellipse cx="982.9" cy="425.6" rx="5.6" ry="3.5" fill="#cfe8bf" opacity="0.75"/>
<ellipse cx="989.7" cy="456.8" rx="4.5" ry="2.5" fill="#cfe8bf" opacity="0.75"/>
<ellipse cx="986.0" cy="443.7" rx="5.9" ry="3.5" fill="#e3efd0" opacity="0.75"/>
<ellipse cx="974.0" cy="458.7" rx="5.0" ry="3.4" fill="#d4ecc8" opacity="0.75"/>
<ellipse cx="993.5" cy="440.0" rx="5.6" ry="3.7" fill="#e3efd0" opacity="0.75"/>
<ellipse cx="989.3" cy="453.4" rx="5.1" ry="2.5" fill="#e3efd0" opacity="0.75"/>
<ellipse cx="990.3" cy="427.6" rx="3.4" ry="2.7" fill="#c5e2b4" opacity="0.75"/>
<ellipse cx="965.4" cy="438.2" rx="4.6" ry="3.1" fill="#e3efd0" opacity="0.75"/>
<ellipse cx="973.1" cy="460.0" rx="4.7" ry="2.3" fill="#d4ecc8" opacity="0.75"/>
<ellipse cx="988.1" cy="446.1" rx="4.1" ry="2.5" fill="#c5e2b4" opacity="0.75"/>
<ellipse cx="1000.0" cy="448.8" rx="4.8" ry="3.4" fill="#d4ecc8" opacity="0.75"/>
<ellipse cx="999.3" cy="425.8" rx="4.5" ry="3.3" fill="#c5e2b4" opacity="0.75"/>
<path d="M828.8 191.8 C829.8 193.2 832.3 196.8 835.0 200.5 C837.7 204.2 842.3 210.1 845.0 214.2 C847.7 218.4 849.4 222.0 851.2 225.5 C853.1 229.0 855.4 233.8 856.2 235.5" fill="none" stroke="#cfe9c6" stroke-width="3.2" stroke-linecap="butt" stroke-linejoin="round"/>
<path d="M830.0 193.0 C831.0 194.5 833.6 198.1 836.2 201.8 C838.9 205.4 843.0 210.8 845.6 214.9 C848.2 218.9 850.8 224.2 851.9 226.1" fill="none" stroke="#b9dfe6" stroke-width="1.0" stroke-linecap="butt" stroke-linejoin="round"/>
<ellipse cx="866.7" cy="258.1" rx="2.2" ry="0.6" fill="#b8dde8" opacity="0.7"/>
<ellipse cx="934.9" cy="227.0" rx="1.6" ry="0.7" fill="#b8dde8" opacity="0.7"/>
<ellipse cx="914.2" cy="201.2" rx="1.8" ry="1.1" fill="#b8dde8" opacity="0.7"/>
<ellipse cx="899.1" cy="269.3" rx="0.8" ry="0.7" fill="#b8dde8" opacity="0.7"/>
<ellipse cx="983.2" cy="231.0" rx="2.0" ry="0.8" fill="#b8dde8" opacity="0.7"/>
<ellipse cx="955.7" cy="183.1" rx="2.3" ry="0.7" fill="#b8dde8" opacity="0.7"/>
<ellipse cx="935.6" cy="182.9" rx="2.3" ry="0.7" fill="#b8dde8" opacity="0.7"/>
<ellipse cx="894.9" cy="229.5" rx="2.3" ry="1.0" fill="#b8dde8" opacity="0.7"/>
<ellipse cx="864.5" cy="218.3" rx="2.5" ry="0.8" fill="#b8dde8" opacity="0.7"/>
<ellipse cx="853.6" cy="294.4" rx="2.0" ry="0.9" fill="#b8dde8" opacity="0.7"/>
<ellipse cx="827.8" cy="270.2" rx="0.8" ry="1.0" fill="#b8dde8" opacity="0.7"/>
<ellipse cx="921.9" cy="264.5" rx="2.1" ry="0.8" fill="#b8dde8" opacity="0.7"/>
<ellipse cx="885.4" cy="152.9" rx="1.8" ry="0.6" fill="#b8dde8" opacity="0.7"/>
<ellipse cx="828.9" cy="205.1" rx="2.3" ry="1.1" fill="#b8dde8" opacity="0.7"/>
<ellipse cx="853.6" cy="136.0" rx="1.1" ry="0.7" fill="#b8dde8" opacity="0.7"/>
<ellipse cx="816.2" cy="272.5" rx="1.5" ry="0.9" fill="#b8dde8" opacity="0.7"/>
<ellipse cx="869.4" cy="220.9" rx="1.4" ry="0.7" fill="#b8dde8" opacity="0.7"/>
<ellipse cx="831.8" cy="180.6" rx="0.8" ry="1.0" fill="#b8dde8" opacity="0.7"/>
<ellipse cx="830.3" cy="268.0" rx="1.5" ry="1.0" fill="#b8dde8" opacity="0.7"/>
<ellipse cx="903.9" cy="283.9" rx="1.4" ry="0.8" fill="#b8dde8" opacity="0.7"/>
<ellipse cx="877.9" cy="266.5" rx="1.4" ry="0.6" fill="#b8dde8" opacity="0.7"/>
<ellipse cx="903.8" cy="266.0" rx="0.9" ry="0.9" fill="#b8dde8" opacity="0.7"/>
<ellipse cx="820.7" cy="257.7" rx="2.5" ry="0.7" fill="#b8dde8" opacity="0.7"/>
<ellipse cx="812.7" cy="191.8" rx="1.0" ry="0.8" fill="#b8dde8" opacity="0.7"/>
<ellipse cx="913.8" cy="130.2" rx="1.4" ry="0.5" fill="#b8dde8" opacity="0.7"/>
<ellipse cx="832.7" cy="286.7" rx="2.4" ry="0.7" fill="#b8dde8" opacity="0.7"/>
<ellipse cx="842.5" cy="236.5" rx="2.0" ry="0.7" fill="#b8dde8" opacity="0.7"/>
<ellipse cx="885.2" cy="218.1" rx="1.3" ry="1.1" fill="#b8dde8" opacity="0.7"/>
<ellipse cx="900.6" cy="253.2" rx="1.3" ry="0.6" fill="#b8dde8" opacity="0.7"/>
<ellipse cx="984.9" cy="284.7" rx="2.1" ry="0.5" fill="#b8dde8" opacity="0.7"/>
<ellipse cx="902.4" cy="265.3" rx="1.3" ry="0.6" fill="#b8dde8" opacity="0.7"/>
<ellipse cx="879.6" cy="228.4" rx="1.8" ry="0.8" fill="#b8dde8" opacity="0.7"/>
<ellipse cx="907.6" cy="202.9" rx="2.3" ry="0.8" fill="#b8dde8" opacity="0.7"/>
<ellipse cx="983.2" cy="289.1" rx="1.9" ry="1.2" fill="#b8dde8" opacity="0.7"/>
<ellipse cx="915.5" cy="274.5" rx="1.6" ry="0.8" fill="#b8dde8" opacity="0.7"/>
<ellipse cx="991.7" cy="240.9" rx="2.1" ry="0.6" fill="#b8dde8" opacity="0.7"/>
<ellipse cx="974.2" cy="195.5" rx="1.2" ry="0.6" fill="#b8dde8" opacity="0.7"/>
<ellipse cx="962.1" cy="295.8" rx="2.2" ry="1.0" fill="#b8dde8" opacity="0.7"/>
<ellipse cx="960.1" cy="136.1" rx="2.4" ry="1.1" fill="#b8dde8" opacity="0.7"/>
<ellipse cx="976.3" cy="283.5" rx="1.6" ry="0.7" fill="#b8dde8" opacity="0.7"/>
<ellipse cx="891.2" cy="278.2" rx="1.5" ry="1.0" fill="#b8dde8" opacity="0.7"/>
<ellipse cx="839.2" cy="284.0" rx="2.2" ry="0.6" fill="#b8dde8" opacity="0.7"/>
<ellipse cx="951.4" cy="233.8" rx="1.7" ry="0.5" fill="#b8dde8" opacity="0.7"/>
<ellipse cx="919.5" cy="157.0" rx="1.1" ry="1.1" fill="#b8dde8" opacity="0.7"/>
<ellipse cx="840.0" cy="148.3" rx="1.4" ry="0.9" fill="#b8dde8" opacity="0.7"/>
<ellipse cx="911.3" cy="280.8" rx="2.0" ry="0.6" fill="#b8dde8" opacity="0.7"/>
<ellipse cx="952.7" cy="220.6" rx="1.7" ry="0.5" fill="#b8dde8" opacity="0.7"/>
<ellipse cx="847.3" cy="159.6" rx="2.0" ry="1.0" fill="#b8dde8" opacity="0.7"/>
<ellipse cx="894.8" cy="132.5" rx="1.5" ry="0.8" fill="#b8dde8" opacity="0.7"/>
<ellipse cx="990.0" cy="293.7" rx="1.3" ry="0.8" fill="#b8dde8" opacity="0.7"/>
<ellipse cx="916.6" cy="299.5" rx="1.9" ry="0.5" fill="#b8dde8" opacity="0.7"/>
<ellipse cx="826.0" cy="150.5" rx="1.9" ry="1.0" fill="#b8dde8" opacity="0.7"/>
<ellipse cx="952.4" cy="262.5" rx="1.0" ry="0.8" fill="#b8dde8" opacity="0.7"/>
<ellipse cx="974.4" cy="249.8" rx="1.6" ry="0.7" fill="#b8dde8" opacity="0.7"/>
<ellipse cx="833.3" cy="260.3" rx="2.3" ry="1.1" fill="#b8dde8" opacity="0.7"/>
<ellipse cx="947.2" cy="282.9" rx="1.1" ry="0.9" fill="#b8dde8" opacity="0.7"/>
<ellipse cx="988.2" cy="256.5" rx="2.4" ry="1.0" fill="#b8dde8" opacity="0.7"/>
<ellipse cx="916.4" cy="141.1" rx="1.1" ry="0.8" fill="#b8dde8" opacity="0.7"/>
<ellipse cx="832.6" cy="179.9" rx="1.3" ry="0.8" fill="#b8dde8" opacity="0.7"/>
<ellipse cx="932.4" cy="203.8" rx="1.5" ry="0.6" fill="#b8dde8" opacity="0.7"/>
<ellipse cx="928.9" cy="148.9" rx="1.9" ry="0.6" fill="#b8dde8" opacity="0.7"/>
<ellipse cx="848.3" cy="132.3" rx="1.6" ry="1.0" fill="#b8dde8" opacity="0.7"/>
<ellipse cx="830.9" cy="131.6" rx="2.5" ry="0.8" fill="#b8dde8" opacity="0.7"/>
<ellipse cx="957.0" cy="185.4" rx="2.2" ry="1.1" fill="#b8dde8" opacity="0.7"/>
<ellipse cx="838.1" cy="161.7" rx="1.1" ry="1.0" fill="#b8dde8" opacity="0.7"/>
<ellipse cx="902.8" cy="286.3" rx="1.9" ry="1.0" fill="#b8dde8" opacity="0.7"/>
<ellipse cx="927.3" cy="181.3" rx="2.1" ry="0.7" fill="#b8dde8" opacity="0.7"/>
<ellipse cx="997.3" cy="218.2" rx="1.2" ry="0.6" fill="#b8dde8" opacity="0.7"/>
<ellipse cx="869.7" cy="202.8" rx="1.7" ry="0.6" fill="#b8dde8" opacity="0.7"/>
<ellipse cx="874.6" cy="177.1" rx="1.0" ry="1.0" fill="#b8dde8" opacity="0.7"/>
</g>
<path d="M856 306l-1 5l1 6l-1 4l-3 6l-2 7M930 188l5 3l3 1l3 2l2 5l1 3M919 308l6 1l4 2l6 1l6 -3l5 -3l3 -2M925 400l-6 4l-6 1l-5 2l-5 0l-6 1l-3 1l-3 2M882 316l3 3l2 3l0 6l0 4l-1 4l0 6l-2 5l-1 4M983 280l4 -3l5 -4l4 -3l5 -4l2 -2l6 -4l5 -2l4 -1l3 0M830 274l-4 -2l-7 -1l-6 -1l-5 -3l-3 -5l0 -5l-1 -5M838 344l-4 0l-3 0l-7 -2l-3 1M865 232l3 3l5 3l3 0l4 2l6 4l2 4l3 2M990 429l-1 7l3 5l1 5l1 4l-1 7l-2 4l-4 5l-2 4l-3 3l-6 2M888 178l3 -2l2 -3l4 -5l4 -4M982 324l-1 3l0 4l-1 4l2 7l4 5l5 2M912 266l-5 -1l-5 0l-3 0l-7 -3l-5 0M955 253l2 -3l6 -4l3 -3l1 -4l4 -4l5 -3l5 -2M959 159l-5 2l-6 1l-5 3l-4 3l-2 2l-5 4l-5 3l-3 3l-1 5M892 272l1 4l4 4l3 5l2 2l3 5l2 6l-1 6l0 6l0 4l1 5M937 326l-4 1l-6 4l-2 5l-5 5l-1 5l-2 2M853 427l3 4l1 7l0 6l-2 5l-1 3l-3 4l-1 4M867 447l2 -4l3 -3l3 -4l5 -3l4 -1M884 411l-2 4l-1 6l-2 5l-2 5l-2 4l-3 5l-2 4l-1 5l1 4l-2 5M909 376l-5 -3l-5 -1l-6 0l-6 2l-7 0l-4 2l-3 1l-4 1M959 299l5 2l5 1l3 -1l5 -1l5 -1l4 0l5 -1M981 408l-4 -1l-4 -1l-4 -2l-3 0l-5 3l-6 2l-4 0M939 437l1 3l1 5l-1 4l-2 3l-2 4l-3 3l-4 1l-4 0l-4 -1M947 300l2 -5l0 -7l-1 -6l0 -4l4 -5l2 -4l3 -3M949 426l6 2l4 1l3 2l5 3M996 245l-4 -4l-3 -3l-3 -3l-3 -6l-3 -6M813 167l-5 0l-5 2l-3 2l-3 5l-6 3l-3 4M975 384l5 3l2 4l5 5l4 4l4 4l1 6l3 5l3 4l3 4l2 4M852 206l-4 4l-7 2l-6 0l-7 1l-5 1M813 334l-2 4l-4 5l-2 5l-2 6l0 4l-2 6l-3 5M889 364l-3 -2l-5 -1l-6 -1l-4 -2l-5 -4l-2 -4l-2 -3l-2 -4l-1 -3l-5 -6M979 187l-3 1l-3 2l-4 2l-3 3l-6 2l-4 3l-5 2l-5 0M944 308l1 -6l2 -6l3 -4l3 -6l0 -5M860 258l-2 4l-1 3l2 7l1 3M841 287l5 2l4 0l5 0l6 -1l4 1M843 220l0 7l-1 3l2 4l2 2l4 4l4 3l4 0l3 2l5 3l4 4M885 397l4 -4l5 -2l4 0l6 2l3 0l6 -2l4 -1l5 1l4 1l6 -1M924 211l3 5l2 6l3 2l4 2l3 1M906 259l-5 4l-1 4l1 5l0 5l0 6l1 6l-2 6l0 5M989 424l2 -3l4 -3l3 -2l5 -3l6 -1l5 -1l6 -3l4 -2M938 265l-3 4l-2 6l-1 5l-1 3l2 4M912 233l1 6l-1 4l-3 3l-4 2l-5 4l-6 3l-6 1l-7 1M818 420l-1 -4l-2 -3l-2 -4l-1 -4l-2 -4l-2 -6M819 291l7 3l2 2l3 2l5 1l5 2l4 1l6 -1l7 1l6 -2l5 -4M980 371l0 4l-3 6l-5 4l-3 2l-4 5l-2 5l0 4l2 4l1 4M807 144l1 4l2 3l2 4l0 5l1 5l-2 4l-2 3l-2 4l-4 2M976 353l-6 3l-4 1l-4 3l-2 4l-4 2l-6 2l-4 2M831 429l1 3l-1 6l1 6l1 3l0 3l3 5l1 7M968 421l-2 -4l-3 -3l-2 -5l1 -7l2 -4M971 344l-4 -3l-4 -4l-6 -3l-4 -1M834 256l-4 -6l-2 -5l0 -6l3 -4M982 269l1 7l0 3l0 5l0 4l-2 4l-1 3M919 165l4 1l5 1l7 0l4 1l3 -1l6 1l4 1l3 1M929 452l-1 -3l-4 -4l-3 -6l-3 -3M811 158l-3 6l0 4l1 4l5 5l4 3l5 4l2 5l2 6M884 223l-1 -3l0 -4l0 -5l-1 -4l-1 -3l-2 -4M969 353l-2 -5l-4 -4l-2 -3l-5 -4M806 325l6 1l3 2l3 2l3 2l3 3l1 4M923 399l5 0l5 -1l6 -5l4 -1l5 -3l6 -1l5 -3l2 -5l4 -6M933 128l4 -4l4 -1l5 -3l6 -1l3 -2l4 -1l5 0l5 2l5 4l3 5M876 407l-2 -4l-1 -5l1 -3l1 -5l1 -4l4 -3l2 -4l2 -5l3 -4M943 254l1 -6l2 -4l1 -6l0 -5M966 356l-5 0l-5 -1l-3 -2l-3 -3l-5 -3l-3 -3l-6 -1l-6 -1M892 333l-4 -3l-3 -3l-1 -3l-5 -5l-5 -2l-5 -2l-3 -1M995 384l1 -4l3 -5l3 -3l2 -3M839 464l-4 5l-3 3l-6 2l-3 3l-2 4l-1 4M856 165l-6 4l-3 0l-6 2l-4 0l-5 4l-3 5M946 323l-7 -2l-5 -2l-5 0l-6 0l-5 -1l-4 -2M851 448l3 3l6 3l2 3l4 3l6 3l3 2l3 1l4 6l2 6M913 271l-1 -4l-2 -4l-1 -4l-1 -4M902 312l6 -3l3 -3l1 -3l4 -6l1 -4l2 -5l5 -5l5 -4M868 178l2 -2l1 -6l2 -3l1 -6l2 -5M921 381l2 -6l-1 -5l-1 -4l-3 -4M985 203l4 2l4 2l6 2l4 -1l5 -1l4 0M853 346l-1 5l1 4l4 4l2 3l3 2l6 1l5 1l5 -2M833 351l2 4l6 3l2 3l2 4M862 325l3 -6l0 -4l2 -4l0 -3l-1 -5l-2 -4l-3 -2M966 230l5 0l6 1l4 4l2 2l7 2M819 184l-1 4l-1 4l-2 6l-2 6M857 152l-3 -2l-5 -5l-2 -3l-5 -3M864 394l7 -3l2 -1l4 -3l4 -2l5 -2l3 -2l4 -4M997 128l-3 2l-3 3l-2 6l-2 6l-2 6l0 6l1 3M921 331l-4 2l-4 1l-6 -3l-3 -2l-5 -5l-3 -2l-3 -3l-2 -2M994 218l5 1l6 -2l6 0l5 1l5 1l5 2l4 0l3 1l3 -1M913 137l0 7l-1 4l-3 4l-2 4M994 289l-5 2l-7 2l-5 0l-4 1l-4 0l-6 2M860 223l4 -2l5 -4l2 -5l1 -6M927 434l7 0l4 -2l3 -2l4 -4l3 -3l6 -2l5 0l5 -1l6 -2M806 211l-6 2l-5 5l-5 4l-2 5l-1 4l0 5l-1 3M858 386l4 6l4 5l4 6l1 4l3 4l1 3M978 305l-5 0l-4 -1l-4 -1l-7 0l-7 1l-5 -2l-6 1l-7 -2l-4 1M900 263l-4 -5l-1 -4l-1 -7l0 -4l0 -3l-1 -5l-3 -5l-1 -4l1 -6l1 -5M891 157l-3 -1l-4 1l-4 0l-5 2l-5 1l-6 3M941 332l4 2l4 2l6 2l5 2l3 1l7 4l4 5l2 3l6 3M949 319l1 -4l4 -5l2 -3l2 -5l2 -5l1 -4l2 -4l3 -6l2 -4l5 -5M962 258l-3 -2l-3 -5l-1 -4l-2 -4l-1 -3l-1 -6l-1 -4l0 -5l1 -3M881 418l-3 4l-1 3l-2 5l1 7l0 4M878 285l-1 5l-2 3l-3 3l-6 3l-4 3l-4 3l-3 5l-4 3l-5 5M889 170l-4 -3l-3 -2l-4 -1l-3 0l-4 0l-4 1l-3 0M921 297l-4 -1l-6 -2l-3 -2l-3 -1l-7 0l-4 0l-5 -1M811 403l3 -4l4 -5l5 -3l3 -1l6 1M861 294l-2 5l0 7l0 5l1 6l-1 6l0 4l0 4l-3 6M850 246l0 6l-2 6l-3 6l0 4l0 6l0 5l0 7l1 6l0 5M814 173l-2 -4l-2 -4l-2 -3l-3 -3M808 227l-3 -1l-6 1l-5 2l-6 1l-5 -1l-3 -2M968 245l0 5l-3 6l0 3l0 3l-1 6l-1 3l-2 6M942 359l-2 -5l-4 -4l-3 -5l-3 -3l-3 -3l-4 -3l-4 -1M876 450l-3 1l-5 2l-4 3l-4 2M957 324l-5 0l-5 1l-6 -2l-6 -4l-3 -4M807 369l4 -5l4 -6l1 -3l3 -3l5 -3l3 -1l4 -4l2 -4M811 176l-7 -1l-4 -1l-3 0l-6 -1l-6 0l-5 -1M935 263l-4 -2l-2 -6l-3 -2l-4 -2M974 362l6 0l4 2l4 0l4 0l3 -1l5 -2l5 -1l5 1l4 1M807 347l-3 -2l-2 -3l-1 -3l-3 -4l-1 -5l-1 -6l1 -3l1 -3l1 -3M811 423l-3 1l-6 5l-5 2l-3 2M895 271l4 0l4 1l5 -1l5 -1l3 0l4 -1l3 0l5 0M883 307l5 -4l6 -2l5 -4l2 -4l2 -6M825 373l-5 -4l-1 -3l-1 -6l2 -5l3 -6l4 -3l6 -3l6 0l3 2M886 315l2 4l2 3l0 4l2 6l0 3l1 5l1 5l1 4l2 6l3 5M930 341l-3 0l-4 0l-6 -1l-5 -3l-4 -2l-4 -1l-5 -3l-2 -2M962 454l1 5l1 6l1 4l1 4l-1 5l-2 3l-2 3l-2 4M972 445l4 -1l3 -2l3 -4l1 -6l2 -3l1 -6l2 -6l2 -5l4 -4M1000 219l0 -4l0 -6l0 -7l-1 -4l-1 -4l-2 -3l0 -6l-2 -5l-2 -4M997 356l4 -1l3 0l4 -1l3 1l5 -1l6 -1l4 -1l6 -2l3 -2M982 287l6 2l4 4l4 1l7 0l3 0M946 267l6 0l6 -1l4 1l5 -1l4 0l4 0l3 1l5 5M929 231l2 -6l0 -7l0 -5l0 -4l-1 -6l0 -4l-2 -6l0 -6l0 -3l-1 -4M854 265l2 -4l1 -7l1 -3l2 -5l3 -5l4 -5l5 -2M935 249l-3 3l-3 5l-2 5l0 4l0 3l-1 6M999 180l3 -2l2 -5l3 -2l4 -5l2 -6l2 -4l0 -5l-1 -4M951 130l-2 -4l-4 -3l-6 -1l-4 -2l-4 -1l-5 0l-4 0l-6 1l-5 1l-4 2M931 181l-4 -3l-7 -1l-6 -2l-4 -4l-3 -4l-3 -6l-3 -3l-4 -4M948 358l-4 -3l-3 -5l-1 -7l0 -4l-1 -3l-1 -6l0 -3l-2 -5l-1 -4l1 -4M875 344l-2 -5l-1 -3l-2 -4l0 -4l-2 -3l-3 -4l-6 -4l-3 -3l-5 -4l-2 -3M956 402l5 -1l6 -2l2 -2l6 -3l3 -2M974 305l0 7l-3 4l-5 4l-5 1l-5 3l-6 3l-6 3M939 197l-2 4l-1 4l-2 6l-1 3M826 125l-1 -6l1 -4l0 -4l-2 -7l-3 -3M823 155l3 -3l4 -4l2 -5l2 -7l-1 -5l1 -3l2 -4l0 -5l1 -3l1 -6M966 258l3 2l5 3l3 1l3 0l6 0l5 -2l2 -1l5 -1l4 -1l3 -2M864 223l3 4l1 3l4 4l4 2M885 408l-4 -5l-4 -4l-3 -6l-1 -6M897 304l-6 -3l-4 -5l-1 -5l-2 -7l0 -3l-3 -4l-1 -4l0 -6M827 339l0 -4l1 -7l2 -3l0 -6l1 -3l4 -4l1 -5M873 156l2 -4l1 -6l0 -4l-2 -5l-1 -5l1 -7l3 -5M851 204l-6 2l-4 0l-4 0l-6 -3l-4 -5l-1 -3l-3 -2l-3 -5l-2 -4M986 320l3 5l3 4l2 3l2 3l0 4l1 7M995 439l3 -3l5 -4l6 -1l3 -3l5 -4l3 -5l3 -5l2 -4l1 -3l4 -4M881 367l-3 4l-5 3l-4 6l-5 3l-4 6M969 324l6 2l5 3l4 2l3 2l3 1l4 5l4 4l2 7l0 7l0 3M928 340l2 -2l2 -4l4 -3l1 -3l2 -4l4 -3l5 -2l3 0M919 229l5 3l3 2l3 3l5 2M942 319l0 4l-1 4l-1 5l0 5l2 4l4 5M959 362l-4 -2l-4 -1l-6 1l-6 1l-3 -1l-5 -1l-4 0l-3 -2l-6 -2l-2 -2M824 179l-5 2l-7 1l-6 -2l-7 -1l-5 2l-2 2l-3 1M948 302l6 -2l6 -1l5 1l4 1l3 1l7 3l3 0l6 1l3 1l6 3M978 357l-3 4l0 3l-4 5l-5 2M817 176l5 1l3 2l3 1l3 2l4 3l5 4l3 2l5 2M876 334l-4 -1l-5 -3l-3 -3l-7 -2l-4 -5M913 138l-1 4l1 6l1 3l1 4l3 5M937 153l-4 1l-5 -1l-5 2l-4 0M914 250l-2 5l-1 4l0 4l-1 3l-1 5l0 3l-2 6M981 254l4 -2l7 -3l3 -3l4 -5l4 -3M996 125l-1 5l-4 5l-1 5l1 5M811 419l-2 -6l-3 -4l-2 -6l-2 -3l-3 -4l-2 -3l-4 -4l-2 -4l-4 -5l-1 -4M915 461l3 -3l3 -1l2 -2l5 -5l6 -3l4 -2l3 -6l3 -3M834 278l5 2l4 0l3 -1l5 -2M969 436l-3 -4l-4 -1l-6 1l-3 1l-3 3l-4 5l-3 4l-1 4l0 7M885 343l-2 5l-4 4l-3 5l-2 6l-1 6l-2 6M874 449l-2 -2l-3 -5l-2 -4l-3 -2l-4 -5l-2 -3M982 120l-2 -5l1 -5l1 -4l1 -6l-1 -5l1 -6l0 -3l-1 -5l1 -5M909 329l-7 0l-4 0l-4 -1l-6 1l-4 3l-5 1l-5 -1l-5 -2l-3 -2M937 182l0 -6l0 -5l1 -4l1 -5l-1 -6l-1 -7l1 -5l1 -4M880 269l-1 -4l-2 -5l-1 -4l-3 -3l-4 -2l-5 -5l-6 -2l-2 -4l-2 -6M877 412l-1 6l-2 6l-1 4l-1 4l1 7l3 5l3 4l1 3l0 3l-4 6M895 340l-5 0l-6 0l-7 0l-3 -1l-4 -2M843 461l-3 -6l-4 -4l-3 -3l-4 -1l-4 -2l-4 -2M929 283l0 -5l1 -6l0 -5l2 -4l5 -3l4 -2l4 0l4 0l4 2l4 0M844 243l6 2l3 0l5 -1l3 1l3 -1l3 -3l6 -4l5 -3M923 434l-2 -4l-1 -4l-2 -4l-4 -5l-2 -2M817 332l5 2l6 0l6 1l3 3l2 4l2 4M822 343l3 0l6 -1l6 1l5 -1M978 311l0 6l-2 6l0 6l2 3l1 4l1 4l0 4l-3 7l-3 5M903 258l3 4l1 2l2 6l2 4l2 4l-1 5l-1 6l2 4l2 6M913 299l-1 5l-1 4l-2 5l-3 2l-3 2l-2 3l-1 7l-3 3l0 6M938 136l0 -3l0 -7l0 -3l1 -3M909 197l1 -5l1 -6l1 -5l0 -7l1 -6l4 -5M959 358l-3 -1l-5 -1l-5 0l-6 2l-5 4M806 168l-4 1l-6 1l-6 -1l-7 -3l-4 -1l-4 -2l-3 -3l-4 -4M878 124l-1 6l1 6l3 5l2 5l4 6l5 3l4 4M995 431l4 -3l4 -2l3 -1l3 -1l5 -2l5 -1l5 1l7 2l4 0l5 0M996 354l4 1l5 3l3 4l4 3l3 2l3 3M856 161l5 1l4 1l4 1l6 4l4 4l4 2l4 1l4 0M879 205l0 5l2 5l3 5l4 6l2 5M973 435l4 -3l1 -5l1 -4l4 -4l2 -2l3 -1l5 -5M869 357l1 5l1 4l0 4l1 5l-1 7l2 4l1 5l0 6M823 137l4 4l2 4l2 5l0 6l-3 4l-3 5M837 271l-5 -1l-5 2l-6 3l-3 4l-3 2l-2 7l-5 5l-4 4l-4 3M839 341l-3 1l-5 2l-5 2l-3 2l-4 2l-4 1l-5 1l-4 0l-2 -2M966 423l-4 -3l-3 -3l-3 -3l-3 -3l-2 -3l-4 -4l-5 -1l-4 -4l-2 -5l-1 -5M884 380l7 -1l3 0l5 -2l6 -2l4 -5l4 -3l3 -5M868 435l-5 -2l-7 -2l-3 0l-3 -2M847 278l-3 1l-5 1l-6 3l-4 3l-6 1l-6 1l-4 -1l-6 2l-5 1l-5 2M840 395l-4 -6l-1 -5l-1 -4l-3 -5l-2 -4l0 -6l-2 -6l-1 -5l0 -7M1001 410l1 -6l-1 -3l2 -7l4 -4l1 -5l3 -6l3 -4M1000 279l-4 0l-4 -1l-4 0l-6 -2l-5 -1l-5 -3l-2 -4l-5 -5l-4 -6M975 455l4 -2l4 -5l5 -4l3 -1l4 -3l4 -4M846 125l-5 3l-4 3l-5 -1l-4 1M831 312l-5 -2l-4 -2l-3 -2l-3 -3l-3 -5l-2 -4M987 460l-1 -4l-3 -6l-1 -5l1 -6l2 -6l2 -5M1003 204l-2 2l-4 2l-4 1l-4 -1l-5 -1l-7 1M873 354l3 3l5 2l4 3l3 2M819 194l-3 2l-3 3l-3 7l0 6l1 3l0 4l-1 5l0 4l2 6l2 5M969 146l-3 4l-3 4l-1 6l-1 4l0 6l0 5M960 255l5 -1l3 -2l4 -1l3 0l4 -1l6 -1l4 -1M914 341l4 1l4 3l5 0l6 3l5 3M917 295l0 5l1 4l2 5l2 3l3 4M923 266l-3 2l-2 2l-3 5l-2 6l-3 4M965 242l-1 -3l-4 -5l-2 -4l-2 -3l-4 -5l-4 -2l-5 0l-3 0l-6 -1l-7 -2M896 246l-5 1l-5 2l-3 1l-5 2l-5 3M899 158l-4 -3l-3 -5l-3 -4l-2 -6l-1 -6l-1 -6M1005 145l1 5l1 5l-1 3l0 7l-2 5M818 140l2 3l5 5l2 7l4 4M953 450l-2 -6l-4 -5l-1 -4l-4 -3l-3 -2l-2 -3M860 148l-6 -3l-4 -4l-4 -3l-1 -3M821 341l7 -2l3 -3l3 -4l3 -2l3 -5M981 141l1 5l3 2l3 5l0 5l-1 4l-3 6M974 174l-2 -3l-2 -4l-1 -4l-4 -5l-4 -2M909 140l4 -6l2 -3l2 -3l4 -2l5 -4l4 -5l3 -2l3 -2l2 -3M901 341l-4 -3l-4 -2l-2 -2l-4 -3l-4 -2M845 319l4 3l3 3l0 3l3 2l2 4M841 426l4 0l3 0l3 -1l4 1M869 180l1 -4l3 -2l1 -4l2 -3M997 320l-2 -4l-2 -6l0 -6l-1 -7l0 -3l-3 -7l0 -6l0 -3M992 223l1 -4l3 -5l0 -5l-1 -7l0 -5l2 -6l2 -4l3 -2M1000 384l4 -5l3 -4l4 -2l5 -1M979 358l-4 -3l-6 -1l-3 -2l-4 -6l-3 -5l-3 -5l-2 -4l-1 -5l0 -4l2 -5M849 127l3 -5l5 -5l3 -1l4 -3l4 -1l3 -4l2 -3l3 -4l3 -5l3 -6M869 258l5 -2l5 -4l3 -3l1 -5l2 -7l1 -4l0 -3l0 -6l1 -5M887 433l6 2l3 1l3 4l2 4l5 5M940 205l-2 -4l-3 -5l-1 -2l-4 -6l-2 -3l-2 -3l-3 -2l-5 -4M959 323l5 -3l2 -3l3 -4l6 -3l3 -1l7 0l4 0l3 0l3 0l6 -2M935 356l4 -1l6 0l3 1l7 0l4 0M1005 324l-1 -5l-4 -5l-1 -7l-1 -4l0 -5l3 -5l1 -4M958 134l0 -3l-3 -4l-2 -3l-3 -2l-3 -6l-1 -4l-2 -6l-3 -2l-5 -5l-2 -6M869 373l6 1l5 2l5 1l4 3M810 274l3 -4l3 -6l4 -5l5 -2l2 -2l1 -4l1 -3l2 -3l3 -2M943 395l5 -4l6 0l6 0l5 1l6 3l3 2l5 2l3 2M975 381l0 5l-2 4l-3 3l-3 2l-4 3M891 151l-5 -3l-6 -3l-7 0l-5 2l-4 1l-5 -1l-6 3l-6 2l-2 3l-3 5M810 128l-3 2l-4 4l-3 4l-3 4l-1 6l-2 3l-2 4M1000 284l4 0l6 -1l7 -2l5 1l6 0l7 1l6 0M942 337l3 4l4 5l2 3l2 7l2 3l1 4l2 4l2 4M903 130l3 -5l1 -3l2 -5l2 -4l1 -6l1 -3l2 -4M922 280l1 -5l1 -4l2 -3l2 -5l2 -6l1 -7l-1 -5l-2 -4l-1 -6M993 272l-4 4l-6 3l-4 3l-3 1l-4 2l-6 0l-3 -2l-4 -1l-7 0M989 228l-4 -4l-6 -4l-3 -3l-3 -3l-2 -5l-2 -6M983 286l-3 1l-5 2l-3 2l-6 3l-3 3l-4 2l-3 5l-1 4l-2 3M807 333l6 -1l4 -2l4 -1l4 -4l4 -3l5 -3l5 -1l7 -1l5 -1M828 148l-5 4l-4 3l-5 1l-4 2l-6 0l-4 2l-6 1l-3 1l-4 1M947 317l7 1l6 1l4 -2l5 1l3 -1M878 302l-3 6l1 4l3 6l3 3l5 2l3 3M971 434l0 4l0 6l2 4l4 4l4 5l0 4l1 5l2 7l2 6M818 254l-4 -4l-3 -2l-6 -1l-4 -2l-3 -1l-3 -2l-2 -3l-3 -7l1 -4l-2 -6M847 375l-2 5l0 4l-3 7l-1 4l-1 3l-1 3l-2 5M882 462l-2 3l-2 6l0 5l1 4M977 374l0 6l-2 6l-1 3l-2 7l0 4l1 4l0 5l2 6l1 3M809 328l3 -5l2 -6l2 -6l4 -5l3 -6l1 -3l4 -4l3 -2M997 121l-5 0l-4 -1l-3 -3l-4 -4M993 314l-3 -1l-5 -3l-3 -3l-3 -5l-3 -5l-5 -4M934 383l-1 7l2 3l0 6l1 5M877 295l0 4l2 5l3 2l6 2l3 3l6 2l6 2l5 3M890 384l3 1l5 3l5 5l2 3M869 438l3 5l1 6l2 6l3 5l3 4l2 6l1 6l1 3l2 5l2 2M831 447l0 -3l0 -7l-1 -4l0 -4l1 -4l3 -6l2 -5l0 -3l3 -4M927 141l4 -1l5 1l4 0l6 -3l5 -1l5 0l4 0l5 1l4 2l3 2M813 194l2 2l5 4l5 4l4 1l4 -1l6 1l4 2M939 155l-4 2l-4 3l-4 0l-6 2l-6 3l-4 1l-6 0M881 464l5 5l5 2l3 5l5 2l3 3l3 2l4 1l5 -2l6 -1l5 -3M870 320l3 -4l2 -3l3 -6l4 -3l6 -3l3 0l6 -2l3 -4M886 437l-3 -3l-3 -4l-4 -3l-4 -1l-4 -2M814 246l-3 3l-3 6l-6 3l-6 1l-5 4M838 375l-4 3l-2 3l-4 5l-1 7M953 127l2 -2l2 -4l2 -4l2 -2l2 -3l1 -4M897 444l1 -6l-1 -4l0 -4l0 -6l3 -5l4 -4l4 -4M828 314l-4 1l-5 2l-6 1l-4 -1l-5 -2l-3 -1l-5 -4l-4 -4l-3 -2l-3 -1M880 246l-2 3l-3 3l-4 4l-2 2M965 198l-2 6l-3 4l-2 4l-1 5l-3 5l-1 6l2 5l2 3M851 332l-1 -3l-2 -2l-3 -2l-3 -1l-4 -3l-5 -4M841 293l5 4l5 2l5 2l3 2l4 3l3 5l4 5M845 178l-2 2l-2 3l-4 5l-1 7M858 394l-3 4l-2 3l-2 3l-4 3l-5 4l-5 4l-3 1l-5 1M927 329l-3 1l-3 3l-5 2l-3 2l-4 4l-2 3l-2 5M861 350l3 4l2 2l3 3l1 3M841 417l-1 -7l0 -3l1 -3l2 -6M933 128l3 2l5 3l3 1l4 4l6 3l3 3l2 2l4 3l3 2l6 3M823 363l-1 -5l-2 -7l-1 -6l-2 -3l-2 -4l0 -7M934 368l-3 5l-2 3l-2 2l-3 6l1 6l-3 6l0 4l-4 5l-2 3l-2 2M847 420l6 4l3 4l4 3l4 2l6 -1l4 1l7 -2l6 0M854 445l-2 -4l-3 -4l-1 -4l-2 -3l0 -5l2 -4l4 -3l5 -1M851 373l4 1l4 1l5 1l6 1l5 0l4 -1M820 376l-2 6l1 4l-1 5l1 7l2 3l2 7l0 3l2 3l2 7M828 351l-1 -6l0 -5l1 -6l1 -7M946 231l5 1l6 4l3 3l6 2l4 0l7 0l3 -1M809 176l-2 6l-5 5l-5 2l-3 2l-1 3l0 4M898 356l1 -4l4 -5l2 -5l4 -6l1 -3l-1 -6l-2 -6M838 340l-2 6l-1 5l-2 5l-2 4l-3 3l-3 4l-4 4M952 429l3 7l2 4l0 6l3 5l0 4l-1 6l-1 4l-1 4M930 234l-1 -6l-3 -6l0 -5l-3 -6M883 123l-4 3l-5 3l-6 1l-5 4l-4 3l-2 3l-1 4l-2 4l0 4l2 6M893 276l5 2l5 0l4 -1l6 0l3 1l4 0l5 1l3 -2l2 -2M934 453l-3 -4l-4 -3l-5 -3l-5 -3l-5 -3M833 144l1 5l2 4l3 3l5 2l6 2M980 428l-6 0l-3 2l-6 1l-3 1l-3 2l-3 2M826 445l2 4l1 5l0 6l0 4l1 6l0 5l0 6l3 4l1 6l0 4M990 454l-1 -3l-2 -4l-5 -5l-3 -2l-4 -3l-5 -3l-3 -3l-4 -3l-4 -5l0 -3M818 293l-2 -5l-1 -4l-3 -6l-1 -5M849 171l0 5l0 6l2 3l1 4l4 5l1 4M814 121l-5 -1l-6 -1l-5 -5l-6 -2l-3 1M856 165l3 3l4 1l3 1l6 2l4 1M887 363l-2 5l0 5l0 7l2 6l2 6l3 5l3 2l3 4l4 5M917 351l-2 -3l-4 -3l-1 -4l1 -5l-1 -5l1 -5M813 447l-3 0l-5 1l-6 -1l-5 -3l-4 -2l-4 -2l-6 -2M886 420l-1 4l-1 5l1 5l-1 3l-3 6l-5 4l-4 3l-4 3l-4 2l-5 1M892 298l-3 -4l-4 -5l-5 -3l-4 -1l-4 -2l-3 -2l-6 -1l-5 -1l-6 -2l-3 -2M996 160l0 6l-1 7l-4 4l-2 7l-2 2l-6 1M851 284l-2 3l-3 5l-2 3l-4 4l-3 2l-2 2l-4 2l-4 3l-4 5l-2 3M909 418l-6 3l-5 2l-5 4l-2 3l-3 2l-3 4M852 253l4 -1l6 -2l4 -4l3 -1l4 -2l5 -3l1 -4l0 -4l1 -4M849 180l3 -3l3 -5l2 -5l3 -5M991 314l1 -6l2 -5l0 -3l0 -5l1 -6l2 -6l5 -5l2 -6M1003 201l4 1l4 0l3 2l4 1l4 3l4 1l5 3l4 4l2 2l4 6M838 252l7 1l6 0l4 0l5 4l3 6l3 2M966 180l-1 7l0 6l-3 6l0 4l1 4l3 6l3 6l0 7l0 5l1 7M900 422l5 -4l5 -4l4 -1l2 -2l4 -3l4 -1l3 -1l5 -4M851 159l-2 -6l1 -3l-2 -5l-2 -6l-4 -4l-5 -2M823 288l2 -6l3 -4l4 -5l5 -3l3 -1l4 -2l4 -5l5 -3l6 -1l4 -3M988 184l-4 1l-6 1l-6 0l-5 1l-7 1l-7 2l-3 -1l-2 -2l-5 -3l-6 0M943 240l-6 -1l-7 -1l-7 -2l-5 -2l-5 -2l-3 -2l-3 -5M929 352l-3 -1l-5 1l-6 -1l-5 -3l-7 -1l-5 1l-3 1l-5 5M999 239l4 2l4 0l4 2l4 1l5 4l4 2l2 4l0 3l3 6M885 388l6 4l2 4l2 3l0 6l2 6l3 4l4 4l5 2l3 0l6 -1M894 297l-2 -3l-3 -5l-3 -1l-3 -6l-3 -3l-4 -2M951 463l2 -6l1 -5l-1 -5l1 -3l-1 -5l0 -6M942 368l-2 -2l-2 -5l-4 -5l-3 -2l-3 -2M921 345l5 1l5 4l4 4l3 3l1 3l0 4l0 6l1 5l4 5M826 421l4 -4l2 -5l5 -4l1 -5l2 -6l3 -5l6 -4l5 -1l6 1l5 0M810 368l-5 3l-5 1l-5 2l-6 0M932 339l5 1l4 4l3 3l4 3l3 6M851 339l-2 4l-5 3l-6 2l-3 1l-3 1l-6 0M872 209l3 -3l6 -2l3 -1l6 2l5 2l5 1l5 1l4 2l5 1M984 462l3 -4l2 -5l2 -4l0 -5l-1 -5l0 -3M828 407l-1 -5l-2 -5l-3 -5l-2 -7l-1 -5l-2 -4l1 -5l0 -3l1 -4l1 -3M883 196l1 4l-1 5l1 5l-1 4l-2 6l-2 4l-3 4M832 123l0 7l0 4l-2 4l-3 5M975 217l4 1l3 0l5 -1l4 -1l6 -2M831 406l-2 5l-4 2l-6 2l-4 1l-4 3M974 252l0 4l-2 4l-4 5l-1 7l-1 4l0 4l2 3l0 4l-1 5l-1 4M937 310l-3 2l-4 4l-4 2l-4 1l-5 -1l-6 -3l-6 1M923 454l-4 -2l-3 0l-3 -1l-6 -1l-6 -1l-5 -3M964 246l0 6l-1 4l2 6l4 7l2 4M819 174l0 -4l0 -4l1 -7l-2 -5l1 -4M920 121l2 2l6 4l6 3l4 5l2 3l1 6l3 5M823 174l3 -3l3 -5l5 -3l2 -3M831 361l2 2l3 3l3 5l4 3l2 3M817 186l-1 5l-1 7l-3 5l-1 3M958 301l-2 -4l1 -5l1 -3l1 -6l0 -6l-1 -6l0 -4l2 -6M960 230l-2 6l-1 4l-1 5l-3 3l-1 4l-4 5l-2 4l-3 6M1001 136l-1 4l0 4l1 4l1 6l3 6l0 5l2 3l3 4l4 5l3 1M987 244l-2 -3l0 -4l-1 -3l0 -5l-1 -4l1 -6l0 -4l-1 -5M882 451l5 2l4 4l2 5l1 5l4 5l3 1M887 222l3 -4l5 -1l5 0l5 1l5 2l5 4l5 1M964 377l5 5l3 3l5 4l4 3l3 3l4 2l6 2l5 1M918 453l-4 0l-6 1l-3 -1l-5 -3l-3 -3l-4 -3l-4 -1l-3 -1l-4 -1M847 155l-3 3l-2 4l-3 4l-4 5l-2 3l-4 3M909 278l-2 -5l-1 -6l0 -3l3 -6l4 -4M954 412l4 -1l4 -1l3 0l5 0l3 0l3 1l5 0l6 -3l5 -4M942 441l-4 -2l-4 0l-4 0l-3 -1l-3 -2l-4 -5l-2 -5l-1 -4M981 158l1 5l4 5l4 2l3 2M872 275l3 -4l2 -5l2 -2l5 -3l4 -3l2 -2l6 -4l5 -1M823 334l5 1l7 2l4 -1l5 -4M966 173l-4 3l-4 2l-4 4l-4 6l-3 1l-5 1l-5 1l-7 1l-6 1M1002 247l-5 2l-4 3l-3 2l-5 4M875 164l-3 -2l-4 -2l-6 -3l-7 -1l-5 1l-6 1l-6 0l-5 -2M873 310l-3 6l-1 6l-1 2l-1 3l1 7l-1 4l1 3l0 4M919 244l-5 5l-3 4l-4 3l-3 2l-5 4l-6 5l-4 3l-5 3l-2 2M907 399l-3 -4l-1 -5l-1 -4l-3 -5M941 334l5 -4l3 0l3 -1l4 1l3 1l6 2M847 389l-4 -4l-4 -4l-2 -4l-5 -5l-3 -4M917 191l3 4l4 3l6 2l6 0M862 416l0 -3l0 -3l0 -6l-2 -4l0 -3l1 -6M936 230l0 -6l0 -6l3 -5l2 -3l3 -4l3 -4l2 -3l3 -4l3 -2l3 -2M840 240l1 5l4 6l5 3l4 1l6 0l5 -3l4 -1l5 -2l5 -5l6 -2M990 238l3 3l6 2l4 2l5 0l5 0l5 -1l3 -2M884 171l-3 1l-6 4l-2 3l-4 4l-1 3l-1 5l-2 3M818 435l-1 -4l0 -5l-2 -6l-2 -5l-2 -3l-2 -3l-2 -5l0 -4l0 -5M877 458l-6 0l-5 0l-6 2l-5 1M901 259l5 3l3 4l4 4l6 3l2 2l3 4l2 4M921 158l-3 1l-3 1l-6 0l-6 0l-6 -1l-4 -2M933 162l2 -3l2 -5l1 -4l0 -4l0 -5l-1 -5l-3 -4M869 368l-3 -4l-1 -5l-3 -4l-3 -3M985 204l-6 -1l-5 -2l-4 -3l-3 -3l-5 -1l-4 -3l-2 -4l-2 -3l-3 -3l-4 -2M996 389l-6 1l-7 2l-5 -1l-3 1l-3 2M821 210l2 6l1 4l1 3l1 6l0 3l1 3l0 6l2 6M815 170l5 -1l5 1l7 1l5 0l6 -2M850 390l-5 -3l-4 -2l-3 -4l-2 -3l-4 -2M907 265l-5 0l-7 -2l-6 -2l-5 1l-3 1l-5 2l-7 -2l-6 -1l-3 -1l-4 0M916 230l1 4l2 3l2 4l5 4l5 4l3 5l2 4M932 261l-5 4l-4 1l-5 -1l-6 -1l-7 1M880 145l0 -4l1 -3l3 -4l3 -3l3 -6M909 308l4 -2l4 -1l5 -1l3 -1l5 -3l4 -5l5 -3l4 -3l4 -3M909 140l-6 -4l-6 -2l-6 -1l-7 0l-4 -2M808 334l-4 -1l-5 -1l-6 -1l-3 -2l-3 0l-4 0M910 361l-3 6l-1 3l0 4l-3 4l-1 3l0 4l0 4M861 370l2 3l1 3l1 3l1 6l1 6l2 3l1 3l1 7M947 145l-5 3l-5 5l-4 5l0 7M825 219l-3 4l-4 3l-7 2l-4 0l-5 1l-7 0l-5 -3l-5 -2M979 396l3 4l7 3l5 1l3 2l7 1M808 162l5 -4l4 -3l4 -5l5 -5" fill="none" stroke="#ffffff" stroke-width="0.55" stroke-linejoin="round" opacity="0.95"/>
<path d="M883 286l-6 -2l-4 1l-5 -1l-6 -2M857 190l2 2l2 4l5 4l2 3l5 3l1 3l2 5l0 3l1 3l-2 7M947 325l-1 -5l0 -6l2 -3l3 -4l4 -5M950 394l-4 0l-6 -2l-3 -1l-4 0l-5 -2l-6 -1M864 454l-1 -4l-4 -5l-2 -5l-2 -4l-2 -4l-1 -5l-3 -5M850 249l0 -7l1 -5l-1 -5l0 -3l1 -4l-1 -4l0 -4l2 -4l3 -3l3 -2M1002 206l1 -5l2 -4l2 -4l2 -4l3 -3l4 -1M918 177l2 3l1 4l2 4l0 3l2 6l1 4l1 3l1 6l1 3l2 3M975 449l-6 -1l-5 -4l-3 -4l-5 -3l-5 -3l-3 -5l-1 -4l-1 -5M866 366l-4 -4l-5 -4l-5 -4l-6 -2l-3 -2l-3 -3M975 408l2 -3l2 -2l2 -5l2 -3M893 144l4 1l6 1l3 1l6 3l4 5l2 7l2 5l0 7M924 410l3 -6l1 -5l0 -3l0 -6l2 -5M908 159l-5 -1l-5 -1l-5 -2l-5 0l-3 1l-5 3l-5 2l-3 3l-4 4M976 245l-4 2l-3 2l-2 5l-1 4l1 6l0 4l0 5l-2 4l0 3l-2 7M827 132l6 1l5 -1l5 -2l3 -4l2 -7M928 237l2 3l0 4l2 5l3 3l4 5l2 3l5 3l6 2l5 3l3 3M885 244l-4 0l-7 0l-4 -1l-6 1l-4 1M889 383l-2 3l-3 3l-3 2l-6 3l-7 1l-5 -1l-7 2l-6 -1l-4 -3l-5 -1M1001 249l0 4l-1 3l-2 4l-4 4l-3 5l-5 4l-2 4l-1 5M861 303l3 -4l6 -4l4 -3l4 -3l5 -3l2 -3l3 -4l1 -5l2 -6M811 212l4 -2l4 -1l5 1l6 1l5 -1l5 -3l5 -1l3 -3l2 -3M931 370l5 -2l3 -1l3 -3l3 -2l3 -5M813 325l-3 4l-2 5l-1 5l-5 5l-3 3l-1 3M882 397l-3 0l-5 0l-6 1l-5 2l-6 0l-4 2l-4 5l-1 2M903 375l2 6l1 5l2 5l5 4l4 3l4 2l7 0M820 242l3 5l7 3l4 4l6 2l5 0M976 311l-2 2l-5 3l-5 2l-6 3l-3 2l-4 3l-6 1l-5 1M904 378l4 -1l6 2l6 0l5 2l3 2l2 3l4 4l3 6l0 7M895 423l5 -1l5 -2l3 -2l3 -4l3 -5M848 345l4 -4l5 -4l3 -1l4 -1M972 461l-1 -4l-1 -7l-1 -4l0 -7l-1 -3l-2 -4l-2 -7l0 -4M880 193l-3 2l-7 0l-4 2l-4 2l-5 4l-2 6l-4 3l-4 3l-3 4l-1 3M848 428l4 3l3 3l3 3l1 5M899 177l-4 3l-2 3l-3 3l-2 4l-2 4l-1 7M925 309l-4 -2l-5 -4l-5 -1l-6 0l-5 2l-4 4l-4 6M1002 404l-2 -5l-2 -4l-3 -4l-3 -3l-3 -3l-3 -3l-2 -3M908 214l0 -5l1 -5l1 -6l2 -4l3 -3l2 -5l3 -6l2 -3l1 -6M852 347l2 4l2 3l5 2l6 1l4 0l4 -2l5 -1l4 -1l5 -2M1003 303l-2 -4l-2 -6l-1 -6l-2 -3l-1 -4l-1 -4l1 -5l-1 -3l-3 -4l-3 -6M843 187l-6 -1l-3 -2l-4 -4l-4 -4l-1 -4M914 179l3 2l5 3l3 2l4 4l3 2l3 6l4 6l3 2M906 208l-1 3l-3 2l-3 2l-6 0M952 308l-1 -4l-2 -4l-2 -5l-2 -5l-4 -5l-2 -5M847 465l4 -6l2 -4l1 -6l0 -4l0 -3M969 120l2 4l2 6l3 5l2 4l4 2l3 0l6 3l5 1l3 1l4 4M935 263l1 -3l0 -3l-2 -4l-1 -4l-3 -6l-3 -2M814 409l-6 0l-3 2l-4 0l-6 -1l-6 -3l-6 0l-6 0l-7 3M826 366l-2 7l-2 5l-2 4l-5 4l-2 3l-2 3M978 288l-3 0l-4 1l-6 4l-1 2l-1 4l-2 5M920 224l-4 0l-6 -2l-4 0l-4 0l-6 1l-6 -1l-6 -2l-3 -1l-4 0l-4 1M939 376l-5 5l-2 5l0 4l1 4l0 4l-1 4l-4 4l-4 4M909 385l-3 7l-1 3l0 4l1 3M895 214l-2 3l-5 4l-3 5l-5 4l-4 1M932 389l2 -5l2 -3l2 -4l1 -3l-1 -5l2 -5l2 -5l2 -6M982 258l4 5l3 5l1 3l0 6l0 3l2 3l2 3l3 1M825 195l4 1l7 -1l3 0l4 0l6 -2l3 1M969 262l-3 -2l-4 -1l-4 -1l-6 0l-7 1M945 425l-4 2l-3 2l-4 1l-3 0l-4 2l-3 2M907 297l3 4l3 5l3 6l2 6l1 7l3 4M835 225l4 5l3 2l5 3l3 3l3 2l6 2l4 3l3 1l3 2l1 3M909 277l0 -5l0 -6l-1 -4l-3 -4l0 -5l-1 -3l-2 -3l-4 -5l-4 -5M811 433l-2 -1l-5 -2l-3 0l-3 1l-5 1l-6 2l-4 3l-5 1l-4 2M836 426l0 3l2 7l2 3l2 2M879 395l2 6l3 3l4 6l2 3M822 380l-2 5l-1 5l0 4l-3 6l-4 4l-5 4M849 385l3 7l1 5l3 3l4 2M1001 210l4 -5l3 -2l4 -4l3 -2l6 -2l4 -3l3 -3l2 -3l2 -1l7 0M983 326l3 -2l5 -1l6 1l4 0M937 152l-5 4l-3 1l-4 2l-5 0l-4 -2M874 303l4 3l3 4l5 4l3 2l3 3l5 3l6 2M864 311l3 -2l4 0l5 -1l6 0l4 2l6 3l4 2l4 1M927 211l-3 3l-3 4l-3 2l-3 3l-2 4l-4 4l-3 6l-1 4l1 4M968 368l-4 -1l-5 2l-4 2l-5 3M961 194l6 -1l5 2l4 3l7 1l3 0l3 0l5 1l4 -2l5 -3l4 -2M917 256l-3 -5l-3 -2l-3 -4l-2 -3l-2 -5M985 238l5 -2l4 -5l3 -3l3 -1l6 -4M981 270l-5 1l-4 2l-4 1l-7 -1l-6 -4l-3 -5l-5 -3l-3 -3l-5 -3l-4 -1M876 241l-2 2l-1 5l-4 5l-3 3l-3 3M892 411l1 3l2 4l6 4l5 4l5 1l7 -1M984 160l-3 3l-3 4l-3 1l-7 2l-3 3l-3 4l-5 2l-4 6l-2 6l0 3M938 258l2 -3l1 -3l-1 -6l-1 -4M810 314l-1 -4l0 -4l-2 -5l-5 -4M973 270l5 2l5 4l2 6l2 6l4 5l1 6l3 6M892 194l3 -4l0 -7l-1 -4l-1 -6l-3 -2l-3 -2l-2 -2l-2 -4l0 -4l0 -4M947 150l-5 1l-6 -1l-6 -1l-4 -1M988 243l0 4l-1 4l-1 3l-5 4l-4 5l-4 4l-3 2l-2 3l-4 5M845 144l5 -1l2 -1l5 0l3 1M900 312l0 -3l-2 -6l-1 -5l0 -4M841 262l6 -1l4 -2l4 -4l5 -2M977 203l3 -6l2 -3l6 -4l2 -6l0 -5l2 -6l1 -4l3 -4l2 -3M805 160l1 -4l1 -3l3 -2l3 -3l1 -3l0 -3l-1 -4l-1 -7M907 418l-4 3l-3 5l-5 3l-3 1l-4 2l-3 0l-5 2l-2 2l-3 2l-4 1M834 371l-6 4l-2 3l-1 3l-4 5l-4 5l-1 4l0 6l-1 4l-2 4l-4 4M957 314l-6 4l-3 6l-3 4l-3 2l-4 4M808 437l-2 -4l-1 -5l-1 -6l-1 -4l-2 -2M851 288l5 1l4 3l5 4l4 5l4 5M809 160l-4 -2l-3 -1l-6 -4l-4 -1M855 368l-3 -1l-3 0l-4 -1l-5 0M810 326l-4 6l-4 2l-5 4l-3 3l-3 2l-6 1l-7 1l-3 -1l-4 0l-4 -1M935 285l5 2l3 1l4 -1l5 1l3 -1l6 1M962 375l5 -1l4 0l4 2l4 4l3 6l4 4M878 452l1 4l4 4l4 2l5 3M973 157l-4 3l-4 1l-6 3l-4 3l-3 1M874 240l-1 4l-1 5l-1 4l-1 4M930 270l5 3l4 5l2 2l2 6l1 3M971 429l5 3l3 3l4 5l5 2l6 1l6 1l6 -1l7 1M962 360l-1 -2l-1 -3l2 -4l1 -7M900 282l4 -4l1 -6l1 -6l2 -5l3 -4l1 -2l3 -6l-1 -4l2 -4M997 366l4 6l3 5l3 3l2 3l1 5l0 5M978 266l4 -5l3 -3l2 -3l2 -5l1 -3l1 -4l-1 -5l1 -7l1 -4M987 323l2 -3l2 -6l2 -3l2 -3l0 -6M848 398l6 1l3 1l3 0l5 0l6 -1M973 127l-4 1l-5 -1l-6 -3l-6 -2l-4 -3M911 213l-1 3l-3 4l-3 4l-4 3l-3 3l-3 2l-6 3l-3 1M921 404l2 4l0 4l1 4l2 3l3 3M926 244l-5 -2l-3 -6l-2 -4l-4 -4l-5 -3M808 237l6 2l5 1l3 1l5 0l5 -1l4 -3l4 -5M944 393l-5 -4l-3 -2l-5 -3l-5 -2l-3 -1l-4 -1l-5 -2l-4 -1M842 259l-5 2l-6 -1l-3 -1l-7 0l-4 0l-5 0l-5 -2M892 379l3 -3l4 -6l4 -3l2 -2l2 -2l5 -5M821 320l-3 -3l-1 -3l-4 -5l-3 -5l-6 -4l-5 -4l-3 -1l-6 0M816 442l3 -2l3 -3l5 -2l5 -1l6 0l6 -1M988 151l-1 3l0 4l-3 4l-2 2l-4 5l-5 5l-4 5l-2 5l-1 5M988 446l-4 -2l-3 -3l-1 -3l-2 -5l0 -3l-1 -3M841 299l1 5l1 3l2 3l3 4M928 421l-1 -5l0 -6l0 -6l3 -5M1001 377l0 5l-2 6l-1 3l1 6l0 4M872 265l-6 2l-3 1l-5 2l-5 0l-7 1l-4 0M946 293l-3 -2l-4 -1l-3 1l-7 2l-4 -1l-4 1l-6 2l-5 2l-3 2l-2 3M883 287l4 3l2 4l2 5l4 3l6 3l4 2l5 4M814 245l-4 5l-4 5l-2 5l-2 6l-3 4l-2 3M995 156l1 5l2 3l3 2l1 3l5 6l3 4l6 3l3 3M922 193l1 -6l0 -3l-1 -4l1 -3l0 -4l0 -5l-1 -5l0 -4M857 189l-4 1l-6 0l-4 1l-4 2l-4 4l-5 1l-6 -2M856 226l1 -5l2 -4l4 -6l3 -5l2 -4M833 288l-2 -4l-1 -5l-3 -6l-3 -2l-2 -3l-2 -5l0 -3M900 374l-7 3l-5 1l-6 3l-5 2M848 435l5 2l4 3l3 1l4 1l6 0l4 -3l4 -2M882 403l-2 -3l-1 -5l-2 -3l-4 -4l-2 -2l-2 -3M995 415l2 4l3 2l3 1l3 0l4 0l6 -2l6 2l4 0l3 1M830 451l0 -5l1 -6l2 -5l0 -7l0 -6l-1 -4l-3 -7l0 -6M867 264l0 6l-1 5l-2 4l-3 3l-4 3l-5 2l-5 0l-4 1l-4 2l-2 5M861 424l-5 -3l-6 -2l-6 -1l-5 -4l-3 -3l-2 -4l-3 -3l-1 -4l0 -5l2 -6M974 133l-5 1l-3 1l-5 1l-6 1l-6 0l-4 -1l-5 -3l-6 0l-4 0M982 442l-5 2l-4 5l-5 2l-2 2l-6 4l-3 3l-3 5l-5 5l-5 2M918 303l-5 1l-3 0l-3 0l-7 0l-5 2l-4 0l-7 -1l-5 -3l-3 0l-7 -2M865 236l-5 3l-4 1l-6 0l-3 1l-4 -1l-3 1l-5 0l-5 0l-6 -3M805 215l-2 5l-3 2l-3 2l-4 2l-4 6l-3 2l-6 1M854 417l-4 2l-2 3l-3 3l-3 2l-3 3l-5 4l-4 1l-6 4l-5 0M953 344l5 -2l2 -3l3 -4l1 -6l-1 -4l0 -7l-2 -5l-2 -5l-4 -5M855 382l6 2l3 2l7 1l5 0l6 0l6 -1l6 -1l5 -2l3 -1M860 260l1 4l-3 6l-1 6l-1 4l1 3l0 6l0 6M920 194l-1 3l-3 3l-3 3l-4 3l-5 2l-6 5M968 185l-4 -3l-6 -2l-4 -4l-3 -3l-5 -2M848 446l-4 4l-6 2l-5 1l-6 0l-3 1l-6 4l-4 4l-2 4l-1 3l-3 4M852 260l-3 -4l-4 -3l-4 -5l-3 -2M846 440l-1 -4l-1 -5l-1 -7l-1 -4l0 -5M890 373l0 7l3 5l3 3l2 3l0 3l0 7l2 4l2 4l1 5l0 4M965 143l3 -3l3 -1l5 0l5 1M986 458l3 5l3 6l3 2l3 3l5 4l3 3l3 3l2 6l2 2l6 3M817 230l-4 -3l-6 -2l-6 -4l-3 -1M967 352l2 6l2 6l0 5l-1 6l-1 4l-3 5l-2 6l-2 7l-3 4M870 293l4 -1l3 -2l3 -2l4 -1l5 0l4 0l4 -1l4 -2l7 1M952 351l5 4l5 4l3 4l3 4l3 4l4 3l4 4l4 2M897 443l1 -4l1 -5l0 -7l0 -4l1 -6l-2 -6l-4 -6l-1 -4M875 176l1 -4l1 -4l1 -3l1 -5l0 -3l2 -7l3 -5l2 -3l1 -3l4 -5M988 318l0 -4l1 -3l4 -2l4 -5l2 -2M886 231l-2 5l0 7l3 4l3 5l3 4l2 4M863 455l3 4l3 5l1 3l0 7l-1 6M847 442l-4 -5l-4 -5l-3 -2l-2 -6l-2 -4l-2 -3l-5 -5l-6 -3M989 244l-5 4l-6 2l-6 1l-7 0l-6 1M960 184l1 4l1 5l-1 5l-3 5l0 6l-1 3l0 7l0 3l1 4M827 209l4 2l6 0l4 0l5 2l5 2l3 5l2 4M950 243l2 -3l3 -2l5 -4l4 -4M910 326l4 4l2 4l3 3l3 2l4 3l2 3l3 3l5 4l5 3l6 1M899 459l0 -5l0 -4l2 -6l3 -3l4 -3l3 -2l3 -6l1 -2l0 -4M826 326l0 4l0 6l-1 6l1 6l-1 4l1 5l1 7M925 231l-5 3l-4 2l-6 1l-5 1M959 238l-1 -5l-4 -5l-1 -4l-1 -6l0 -3l1 -4l3 -3l2 -3l2 -2l5 -2M902 322l-2 -5l-3 -5l0 -3l1 -7l2 -3l5 -4l1 -4l4 -4l5 -2l5 -2M994 237l5 3l6 2l3 2l4 3l7 1l4 0l4 0l6 2l3 3l1 2M875 382l-1 -3l-2 -3l-2 -6l-1 -4l-1 -3M952 310l3 4l3 5l3 4l5 5l4 2l4 5l5 1l2 2l3 3l3 6M910 337l-3 -6l0 -4l0 -4l2 -4l2 -2l4 -4l3 -2l6 -1l5 -2M893 282l2 -6l5 -3l1 -3l1 -5l3 -5l1 -5l-1 -4l-1 -3l-2 -4M948 127l-4 2l-5 4l-4 5l-3 2l-7 1l-4 -1M1001 349l6 -2l3 -1l3 -2l6 -2l3 0l6 0l5 1l4 0l4 1l3 1M973 239l-2 -6l-3 -4l-4 -5l-1 -7M945 176l-3 -6l0 -3l-1 -6l1 -4l3 -6M996 387l5 3l4 1l6 -1l5 -1M897 368l-3 -1l-3 -2l-4 -4l-5 -2l-5 -2l-6 -1l-3 1M893 401l2 -5l1 -3l1 -4l-1 -5l1 -4l1 -5l2 -4M880 271l4 0l6 -1l5 0l4 0l4 1M875 431l7 0l5 -2l3 0l4 1M960 264l-6 2l-7 0l-6 1l-5 1l-4 3l-4 6l0 7l-1 5l0 3M953 138l6 1l5 3l5 0l4 -1M932 138l5 4l4 0l6 -1l3 -2l6 -1l6 -1l5 2M980 180l-3 -6l-3 -4l-5 -5l-2 -3M971 415l2 -5l0 -5l-3 -5l-2 -2l-3 -3l-3 -2l-1 -3l-3 -4l-2 -6M825 303l2 -4l1 -3l2 -6l3 -4l2 -4l0 -3l2 -4l0 -4M939 333l-5 2l-6 3l-4 2l-5 -1l-4 -2M868 271l-3 -2l-3 -3l-4 -3l-6 -1l-6 1l-6 0M987 364l-3 -6l-5 -3l-4 -1l-6 -1l-4 -2M834 207l-6 1l-6 4l-4 1l-6 0M896 429l-5 -1l-6 -1l-3 0l-5 -1l-6 0l-5 2l-3 3l-4 3M960 134l-2 -2l-3 -6l-3 -3l-2 -5l-3 -5l-2 -3l-1 -4l0 -5M925 191l0 5l1 6l0 6l-3 5l-3 4M940 332l0 4l-2 6l-1 4l-2 4l-2 5l-4 6M1005 420l0 -6l-1 -6l0 -3l-3 -5l-1 -6l-1 -3l-3 -4l-1 -4l0 -4l-2 -4M887 225l0 -3l0 -5l0 -3l-2 -6l-5 -4M996 393l1 -4l2 -4l2 -5l0 -5l1 -6l2 -3l3 -2M897 274l-4 2l-2 2l-4 4l-4 2l-4 5l-3 3l-3 2l-6 1M845 312l5 -3l3 -1l5 0l4 -2l4 -1l4 0l5 1l4 -1M822 414l-2 -1l-4 -3l-3 -2l-5 -3l-7 -2l-4 -2l-3 -3l-3 -3l-4 -1M978 210l-4 1l-2 3l-3 2l-3 3l-4 5l-5 3l-4 0M932 399l6 0l6 2l4 1l4 0l5 -2l3 -2l6 -4l3 -3l3 -2M830 423l4 -4l4 -5l5 -3l6 -1l6 -2l6 0l3 2l4 4M842 378l3 -7l0 -5l0 -4l2 -4l1 -4l2 -5l3 -2l4 -3M890 292l5 -4l4 -5l5 -1l4 -1M995 134l-4 -4l-2 -4l0 -3l-2 -5l-3 -5l-2 -5l0 -4l0 -4l-1 -5l-2 -3M933 248l5 -4l6 0l3 0l6 2l5 1l4 -1l7 1M901 441l-4 -6l-3 -5l-4 -4l-2 -5l-2 -4M835 300l-4 1l-4 4l-6 3l-4 1l-7 1l-5 3M911 292l-4 -2l-6 -1l-6 -1l-6 -3l-6 0l-4 1l-5 0M913 408l3 4l5 4l3 1l4 0l4 -1M990 185l-2 4l0 7l-1 4l-2 4l-1 4l0 6l-1 5M947 387l-5 -4l-5 -1l-5 0l-3 0l-5 0M1002 302l4 -2l3 -3l2 -3l2 -5l3 -5l1 -4M811 293l-1 4l-3 6l-1 3l-3 3l-3 4l-2 5l-2 3l-3 4l-2 5M879 401l-1 4l-1 3l-1 3l-4 5l-2 3l-1 4l0 4l1 5l2 5M882 127l4 6l1 5l1 5l2 2M948 157l-4 5l-4 5l-3 6l-5 4l-1 4l-3 3l-4 3M1000 283l-3 -2l-4 -2l-4 -1l-5 1l-3 2l-6 1M880 352l3 1l3 3l4 1l5 0l5 1l6 4l2 3M886 244l6 3l3 1l4 3l2 5l1 4M818 162l-3 2l-3 3l-3 5l-1 5l-5 6M845 149l6 1l7 0l3 -1l3 -2l5 -3l2 -2l6 -4M979 210l-4 5l-1 7l-3 5l-3 3l-6 3l-4 1l-4 -1M820 389l4 -3l6 -1l4 -2l3 -2l3 -3M813 316l-5 3l-4 3l-3 2l-4 1l-6 3l-5 2l-6 1l-4 3M933 237l-5 -4l-4 0l-6 0l-6 1l-3 0l-4 1l-3 -1l-4 -1l-2 -2l-6 -1M837 165l2 -5l-1 -5l1 -6l1 -3l3 -4l5 -4l5 -4l4 -3l3 -4l0 -5M958 206l3 -2l3 -2l6 -3l6 -4l2 -2l4 0l6 -3l5 -3l5 0l6 0M946 354l-3 4l-1 2l-5 4l-3 3l-4 5M989 293l-4 4l-3 5l-1 5l-2 5l-1 4l-3 5l-3 7l-1 2l0 6l0 6M861 434l-6 -3l-3 -4l-5 -5l-2 -5l0 -6l1 -5l2 -6l3 -6l3 -2l3 -2M986 271l-3 -1l-5 -2l-3 -4l-4 -4M991 385l-7 -2l-7 -1l-3 0l-5 -2l-3 -3M891 447l-3 4l-5 3l-4 4l-5 1l-3 -1M888 133l5 3l3 3l4 5l3 2l5 2M953 330l3 3l7 1l5 -2l7 0l5 -2l5 -5M956 424l2 3l3 2l4 1l4 1l4 3l5 1l5 1l4 1l5 2l4 3M923 147l0 3l0 3l1 7l2 4M833 319l6 -4l5 -1l4 -2l4 -6l2 -4l3 -5l6 -3l6 0M963 289l2 3l5 2l4 3l2 4l3 3l5 1l6 0l6 2l5 4l2 5M822 225l3 2l4 1l4 1l7 0l5 2l6 3l4 4l2 3M853 426l-5 -4l-3 -3l-4 -5l-2 -4l-2 -4l-2 -4M845 355l6 3l6 0l5 3l3 0l3 1l4 2l4 1l5 -2l4 0M861 121l-6 2l-3 4l-3 5l0 3l3 7l1 3l2 4l1 3l2 6l2 4M882 332l5 0l4 1l3 -1l5 -2l3 -2l4 -4l1 -4l1 -4l0 -3M952 230l4 1l3 1l4 -1l6 -3l4 -3l3 -5l2 -5l0 -6l0 -4M978 397l-5 -1l-6 -2l-6 -2l-2 -2l-5 -5l-4 -4l-2 -4l-3 -4l-2 -3l-1 -7M866 148l-2 3l0 4l0 6l2 5l1 4l1 5l2 6M874 233l0 5l2 6l1 5l-3 5l-2 5l-5 4l-3 4l-5 4l-3 4M887 422l4 6l3 5l3 3l2 3M809 178l-6 -1l-5 0l-5 -2l-6 -1l-4 0l-6 0l-4 -1l-3 -2M844 196l7 0l6 -2l3 1l5 0l5 -4l5 -5l4 -1l5 -3l4 -3M978 297l7 -1l4 -1l5 -1l5 -2l4 -3M939 255l-3 4l-5 2l-5 0l-4 1l-6 1l-6 -1l-6 1l-4 1l-4 5M954 390l-3 -2l-5 0l-6 2l-5 3l-6 3l-4 5l-4 2l-3 1l-3 0l-3 0M836 152l0 -7l-1 -4l0 -5l-3 -5l-3 -5l-5 -3l-5 -4M835 256l5 -1l4 -4l5 -4l1 -3l1 -7l4 -6M848 456l3 1l4 2l2 3l5 5l4 2l3 5l4 4l6 4l2 3M843 294l7 -1l7 1l4 0l6 0l5 -1l6 2l3 -1l6 1l4 2M977 428l-5 3l-4 4l-3 5l-2 6l0 3M937 339l3 -6l4 -3l2 -5l2 -4l2 -5l0 -4l1 -6l1 -4l0 -5M839 253l-3 -7l0 -4l2 -5l2 -3M869 465l6 -1l4 0l7 -1l3 -2M891 437l5 -1l5 1l5 0l5 0l6 0l3 2l3 1l3 2M939 341l-6 0l-4 2l-3 0l-6 0l-4 0M1001 275l2 -5l2 -4l4 -4l3 -3M996 188l0 7l-2 5l-1 3l-1 4l1 6l3 6l3 5M966 315l5 -2l4 -4l5 -2l3 -3l4 -5l2 -4M805 210l6 2l4 1l3 0l3 -1l5 0M861 369l-3 -2l-5 -3l-4 -1l-6 -3l-4 0l-5 0l-5 -1l-4 0l-3 2l-5 4M948 360l1 -6l-1 -5l0 -6l-1 -6M895 411l-2 -3l-5 -3l-2 -3l-6 -3l-5 0l-6 0l-3 -1l-3 0l-3 1l-5 2M809 374l2 -4l4 -6l5 -2l5 -4M884 342l3 5l1 3l4 6l1 4l0 5l-2 2l0 4l-1 4M908 307l3 6l3 3l3 4l4 3M887 410l-6 0l-3 -1l-6 -2l-3 -2l-5 -3l-6 -2M813 450l3 4l4 6l0 5l2 3l2 3l0 6M881 268l-2 2l-4 3l-5 5l-6 3M934 383l-2 3l-6 4l-3 2l-3 3l-3 3l-4 6l-1 5M811 405l0 -4l0 -4l0 -6l1 -7l1 -5l1 -4M952 445l5 -3l6 -2l5 0l4 -2l4 -3M829 213l1 -3l3 -6l4 -2l3 -5l4 -4M853 247l-5 -1l-4 -2l-4 -3l-5 -4l-4 -4l-3 -2l-7 1M817 270l6 2l5 4l5 0l6 1l5 3l7 0l6 -1l4 0l5 -1l4 -1M835 350l5 -3l3 -3l3 -3l3 -2l3 -1l4 -2l1 -4l2 -5l3 -4M866 190l3 -5l3 -5l2 -4l3 -6l3 -3M955 177l-6 2l-6 -1l-4 1l-4 0l-4 -1l-6 2M838 196l0 -6l2 -7l1 -6l-2 -6l1 -4l1 -3l1 -4l1 -6l0 -5l-4 -5M987 302l5 3l5 4l6 1l6 3l6 2l3 4M947 454l-3 1l-3 1l-5 1l-4 4l-3 6l-4 5l-2 4l0 6l-1 3l-3 6M917 233l4 -4l4 -6l1 -5l2 -5l0 -4l3 -5l1 -5l1 -4M949 134l3 -6l2 -2l3 -2l3 -3l3 -5l3 -3l3 -3l3 -6l2 -5M860 309l-3 4l-2 3l-5 2l-6 1l-5 2l-7 -1M991 191l5 0l4 2l3 0l4 2l5 2l4 1l5 0l4 0l3 -1l6 -1M976 203l4 2l4 5l4 3l6 1l4 2l4 3l2 5M820 245l4 2l4 2l6 3l5 2l5 2l6 0l3 1M927 414l5 3l2 4l3 5l3 5M947 355l5 5l4 1l3 1l4 3l4 2l4 1M953 225l5 -2l6 -1l6 0l3 -1M818 465l1 5l-1 5l-2 5l-1 5M814 273l4 1l5 3l4 1l4 2l2 2l1 4l3 5M870 419l2 -5l-1 -4l0 -6l1 -5l1 -3M810 389l-6 -1l-3 0l-3 1l-4 2l-3 2M918 180l4 3l3 2l4 -1l4 -1M983 325l1 5l1 4l-1 4l-1 5l1 4l-1 5l0 6l0 3l-3 6l-5 4M947 336l2 4l0 6l-1 7l-1 4l-1 5M851 294l-3 -1l-6 -4l-3 -3l-4 -5l-2 -2l-4 -4M993 247l7 -2l3 -1l5 -3l3 -1l6 -1l3 -3l7 -1l5 -4l4 -4l5 -3M971 365l5 -3l4 -4l2 -6l4 -5l2 -2l2 -3l3 -5l5 -2l3 0M859 143l4 -2l4 -4l3 -3l3 -1l3 -3l3 -6l2 -5l3 -2l2 -6M987 246l6 -4l3 -3l3 -2l3 -1l5 -2l4 -5l3 -5l3 -5M952 229l-2 2l-1 5l-2 3l-6 4l-4 3M975 342l-3 -3l-4 -5l-4 -5l-1 -6l-2 -3l-1 -4M874 235l-6 1l-7 3l-4 4l-4 3l-2 4l-6 3l-6 3" fill="none" stroke="#c4c2bf" stroke-width="0.45" stroke-linejoin="round" opacity="0.8"/>
<path d="M852 130l0 3l-1 7l1 4l4 6l3 2l5 3M977 208l3 4l2 2l6 1l3 2M868 276l3 -5l4 -3l4 -2l4 -3l3 -5l0 -6l3 -6l0 -6l2 -6M857 274l1 -5l0 -4l0 -6l0 -3l0 -5l-2 -4M979 182l-3 1l-4 3l-2 3l-4 5M834 274l-5 0l-5 -3l-6 -1l-4 -2l-3 -1M881 298l-6 3l-6 1l-4 -1l-6 -4l-2 -3l-4 -1l-7 -1l-6 0M987 140l-5 2l-3 1l-3 1l-4 1l-6 0l-6 2M962 285l-1 -6l-1 -5l1 -4l1 -6l3 -4l3 -6M953 264l0 -5l0 -6l-1 -4l-3 -4l-3 -6M927 291l3 2l3 2l3 0l4 -2l5 0M838 161l-5 -4l-1 -3l-2 -6l0 -3M949 162l7 0l4 2l7 1l4 0l4 -2l7 0l5 -2l5 -4l4 -5M838 158l3 1l5 0l6 3l5 4l2 5l4 3M985 140l-6 2l-6 1l-6 2l-5 4l-3 1l-5 2M994 197l-3 2l-5 3l-4 2l-4 2l-2 2l-1 4l1 5M837 196l0 4l0 5l-1 5l-3 3l-5 3M941 201l-3 5l-1 3l-1 4l-2 6M865 227l4 -5l4 -4l3 -2l5 0l6 2l4 0l6 -3M874 165l4 3l5 3l2 3l3 2l3 2M849 131l-3 5l0 5l0 7l0 4l-4 6l-1 2l-6 3l-4 3l-4 0l-2 2M955 154l6 -1l3 0l5 -2l7 -1l4 1l5 1M888 152l-4 3l-5 2l-5 2l-5 2M847 125l-1 5l1 3l0 3l1 7l3 4l3 6l2 3l3 6l0 4M994 271l-2 -2l-4 -5l-3 -2l-2 -3l-5 -4l-4 -2l-4 -3l-5 -5l-3 -3l-4 -4M832 299l5 5l5 3l6 3l4 4l5 3M867 174l-5 1l-6 1l-3 1l-5 3l-2 2l-4 4l-7 2l-3 0l-4 1l-4 3M884 285l4 -2l5 -3l1 -3l2 -4l0 -6l2 -3l-1 -6l0 -6l-1 -4M936 133l-2 6l0 7l2 4l2 3l2 6l0 6l-1 6l1 4M940 257l-2 6l-3 3l-5 3l-5 1M880 150l1 -5l3 -5l5 -3l5 -2l4 -2l5 -4l3 -1l4 -2l3 0l6 3M1005 250l2 -3l3 -3l1 -5l2 -6M901 128l3 3l4 1l4 1l4 2l4 5l4 2l3 1l4 2l4 1l6 2M892 124l2 4l3 4l3 3l2 3l3 5l3 2l4 4l5 5l2 3l1 4M942 149l-2 -3l-2 -2l-4 -6l-2 -2l-4 -4l-4 -4l-4 -2l-6 -3M879 130l0 -5l2 -6l2 -3l3 -5M837 148l-4 -1l-3 0l-4 0l-5 0l-5 2l-4 2l-3 1l-5 2l-5 2M862 183l-3 -3l-4 -4l-5 -3l-5 -1l-4 -1l-4 1l-3 2l-4 1l-6 0l-4 1M998 159l5 -2l7 -1l6 -2l6 -1l5 -3l5 -3l3 -2l4 -5l4 -6l2 -5M943 166l2 3l3 3l3 2l4 3l2 3l1 6M904 215l-4 1l-5 5l-2 3l-6 4l-2 1l-5 5l-3 3M902 288l-1 4l-1 4l-1 5l-1 4l-2 3l-5 4l-4 1l-3 0M973 162l2 6l1 4l0 5l0 3M833 146l-3 -5l-1 -3l-1 -4l-2 -2l-1 -3l-3 -3M889 219l-4 -6l-3 -5l-1 -3l-1 -4l0 -5l-2 -6l0 -3l-1 -6l-3 -4l-2 -4M821 175l1 -6l-1 -3l-1 -7l-1 -4l1 -4l2 -4l4 -5M875 223l2 4l2 5l2 6l0 5M985 163l-1 -4l-4 -6l0 -3l0 -5l-1 -7l-2 -7l1 -4M922 190l1 -5l0 -4l1 -4l4 -5l1 -3l-1 -4l0 -6l-1 -5M967 284l1 3l5 3l2 2l6 3l3 1l5 0l6 -1M860 152l3 -6l5 -5l4 -2l3 -3l4 -3l4 -4M958 298l1 -6l-2 -6l-4 -5l-2 -4l-3 -3l-2 -3l-4 -5l-2 -2M889 199l4 -1l4 -1l3 -2l7 -1M898 287l4 -5l3 -4l1 -5l3 -5l3 -6l2 -3M963 164l-3 -1l-3 -3l-4 -5l-2 -6l-2 -5l-4 -4l-3 -5l-4 -3l-5 -4l-2 -1M892 293l-2 3l-3 5l-3 3l-5 3l-5 3M852 213l0 -5l-1 -5l-1 -3l-3 -3M841 153l-6 -3l-3 -1l-7 -2l-5 -4l-4 -2l-4 -2l-6 -2l-6 -1M868 122l4 -2l1 -3l2 -4l2 -3l3 -3M990 228l-5 2l-6 2l-6 0l-6 3l-3 2l-4 4M948 214l3 3l4 5l5 3l4 3l4 3l2 2M875 267l-2 -5l0 -4l-1 -6l-2 -7M958 263l-2 4l0 4l-1 6l0 5l0 7M822 166l-3 3l-2 2l-3 3l-3 5M981 124l7 -3l5 0l3 0l7 -3l6 -1l5 -1l6 -1l5 1l6 2M912 228l5 -2l6 -4l4 0l5 -2l3 -2l2 -2l4 -6l3 -3l5 -2M970 218l3 -4l3 -4l0 -6l1 -3M987 297l3 -2l3 -1l5 -5l3 -2l5 -1l3 -4l2 -3l2 -3l3 -4M820 286l-1 -3l-4 -4l-2 -3l-5 -3l-3 -4M889 250l3 3l5 4l4 2l6 0l3 2l4 2M836 145l-2 -2l-5 -2l-7 -1l-4 0M919 192l-3 -6l-1 -5l-2 -3l-2 -2l-4 -2l-4 -4M845 165l2 4l4 4l4 3l4 4l5 1l3 2l3 2l5 5l4 2l4 1M868 238l-1 5l0 4l-3 4l-4 3l-2 4M917 242l-4 3l-5 3l-4 5l-4 2l-2 2l-5 3M945 132l1 3l0 7l1 3l3 4l1 7l-1 4l-2 3l0 6M884 298l-3 6l0 6l-3 6l-3 5l-1 6l-1 4M933 231l-7 0l-4 2l-6 0l-5 3l-2 3M963 162l0 3l-4 5l-4 4l-1 7l-2 3M994 191l-4 0l-6 0l-4 1l-5 0l-6 -3l-3 -4M854 145l-5 -3l-3 -1l-6 -2l-4 0l-5 -1l-4 -1l-3 -2M946 168l3 0l7 2l6 -1l4 -2l6 -2l5 -1l5 -2M885 135l3 -6l2 -6l1 -5l1 -4l-1 -4l0 -4l2 -4l3 -6M966 217l1 -3l1 -4l2 -7l1 -3l2 -5l2 -4l2 -5M955 149l-3 5l-2 7l-2 2l-1 6M944 160l4 3l6 4l3 6l0 3l2 5l3 5l3 5l4 6l2 2l4 4M856 191l2 -2l5 -3l4 -1l3 -1l4 -5l4 -3l5 -1l7 1l6 -1l6 -3M967 271l5 3l2 4l1 4l0 4l-4 5l-2 6l0 3l2 5M812 218l-7 1l-3 0l-3 -1l-6 1l-5 -1M839 249l4 3l4 2l6 0l5 0l3 2l4 1l5 -2l2 -3M957 247l4 2l3 2l3 1l4 2l5 1l6 -1M851 148l6 3l5 0l5 3l4 2l3 2l5 2l4 -1l6 3l6 1l6 2M900 132l-2 -5l-5 -5l-3 -5l-3 -6l-2 -3l-2 -6l0 -3M818 156l-1 5l1 6l0 3l-3 7l1 6l0 4l-3 7l1 6l2 4l2 2M929 137l5 3l4 0l6 1l3 -1l6 0l4 0l5 0M1000 264l-1 -4l1 -4l2 -6l1 -5l0 -6l1 -6l0 -6M933 286l-2 -4l-3 -4l-3 -3l-4 -5M924 279l-4 2l-7 2l-4 2l-6 1M886 198l3 -3l2 -3l5 -5l1 -5l3 -3l4 -5M824 229l3 2l5 4l4 2l3 1l6 -2l3 0l4 1l4 -1l5 0M825 148l-4 5l-2 5l1 6l0 6M891 197l5 -3l4 -4l4 -2l5 -2l3 -2l4 -5l4 -3l1 -3l3 -6l3 -2M925 187l1 5l1 3l0 3l0 5l0 3l1 4l2 7l0 3M828 230l6 3l4 0l4 1l6 1l4 2l4 6l2 4M911 179l-2 4l-3 6l-1 4l-3 7l-1 4l-1 3l0 4l2 6M974 188l6 2l5 3l5 2l4 2l7 2l4 -1l5 -1l5 -1l5 -1l3 -1M990 278l1 4l2 4l5 3l2 3M882 281l0 4l1 5l-1 3l-2 5M905 212l0 6l-1 4l-2 4l-2 4M953 234l-2 7l0 3l-1 3l-3 3M906 158l-6 1l-4 5l-4 2l-4 0l-4 -1M933 204l-5 5l-3 5l-4 3l-4 3l-5 1l-4 3l-4 3l-4 4M922 130l5 3l3 5l1 4l2 3l5 3l6 3l3 0l4 0l3 -1l3 0M955 225l1 3l0 5l-1 4l-5 5l-5 2l-3 0l-5 0M844 196l-3 -4l-3 -4l-3 -7l-2 -4l-1 -4l1 -6l2 -5l0 -6l0 -6l-1 -5M840 150l-5 0l-4 -1l-4 0l-5 2l-4 2M929 209l3 6l2 4l0 5l1 6M962 135l-7 -3l-4 0l-5 -2l-5 -3l-3 -3l-3 -6l-3 -5l-3 -3l-4 -4M977 280l1 -3l0 -3l1 -5l4 -5l2 -2l4 -5l3 -6l2 -5l0 -4M847 155l1 3l2 5l2 3l4 3l2 5M865 175l-3 -3l-2 -6l-3 -3l-3 -5l-4 -5l-1 -5l-1 -3M927 269l-1 4l-3 3l-4 3l-2 3M982 217l1 3l1 4l-1 4l-3 4l-1 5l0 7l0 6l-3 6l-1 3M910 180l-5 5l-4 5l-3 2l-4 6l-2 5l-3 5l-3 2l-3 5l-1 4M918 264l-6 3l-3 1l-5 2l-4 4l-1 3l-3 3l-6 3l-6 2l-5 -1l-6 1M932 292l-1 -2l-1 -6l0 -4l-1 -4l-4 -5l-4 -3l-7 -2l-3 -4l-6 -3M805 230l4 -3l5 -3l6 -2l4 -2M968 147l5 1l4 3l4 1l4 2l5 4l3 2l5 1M969 225l-4 -1l-7 1l-4 2l-3 0M928 149l-2 -2l-2 -3l-2 -3l-1 -5l0 -6l2 -5l1 -4M894 155l-2 -6l0 -6l0 -6l3 -5l1 -7l2 -3l4 -4l4 -4l6 -3l5 -2M942 255l1 5l4 4l3 4l1 3l2 4l5 5M854 240l-3 1l-4 1l-6 2l-7 -1l-6 0l-5 -1M873 142l-2 -2l-7 -1l-3 -1l-6 -4l-1 -4M820 262l-5 3l-4 1l-5 0l-3 1l-4 2l-4 3M891 217l-6 1l-5 0l-5 1l-4 3l-5 3l-5 4l-3 3l-4 5M908 263l3 -6l2 -3l1 -2l3 -5l3 -6l2 -6l2 -5M888 249l-2 3l-2 4l-4 4l-6 1M983 287l4 2l4 0l5 -1l4 -3M1001 250l2 6l1 4l1 5l4 5l2 3l3 4l3 3l4 4l5 3l6 1M963 162l0 4l-2 3l-1 5l0 5l2 5l3 4l2 3l5 2l5 1M813 258l5 -2l4 -2l4 -5l1 -4l2 -6l1 -5l-2 -4l0 -4l0 -4l0 -4M998 174l3 -6l3 -2l5 -3l7 -1l2 -1l4 -5l3 -4l3 -3M999 246l-2 4l-1 7l-1 6l-3 6l-4 2l-4 1l-5 0l-5 2M922 154l4 1l5 -1l3 -2l6 0M957 294l3 3l3 2l4 3l2 3M837 193l-3 1l-3 4l-4 3l-4 2l-5 3l-2 4l-1 4M873 275l-2 2l-5 4l-5 3l-6 0l-6 2l-6 0l-4 1l-4 2M928 227l5 4l3 4l6 3l3 3l3 2l5 1M894 258l-4 -1l-2 -3l-4 -4l-6 -3M979 294l-5 0l-7 -1l-3 -2l-4 -5M968 208l-4 -1l-7 2l-6 -1l-5 -2l-3 -3l-3 -2l-5 -1l-5 1l-4 0l-4 0M838 166l-2 5l-2 5l0 5l1 6l4 4l1 4l2 5l5 4l6 1M806 215l0 -5l0 -3l-1 -7l-1 -3l-2 -6l-2 -3l-2 -6M851 218l7 -1l7 0l6 0l7 -1l5 0M870 231l4 4l2 4l0 4l-1 5l0 6l-2 7l-2 6l0 3l-1 5l-2 3M817 230l-5 2l-3 1l-5 -1l-3 0l-6 2l-3 2M966 276l0 -5l0 -7l-1 -5l-1 -6l0 -5l-1 -6l2 -5l2 -4l1 -3l3 -3M895 159l-1 5l-3 5l-1 4l-3 6M907 184l-3 -6l-4 -4l-5 -4l-4 -4l-2 -3l-1 -6l1 -6l3 -6l1 -7l-2 -6M977 195l-2 -5l0 -4l1 -3l2 -6l5 -5l2 -1l5 -4l2 -3M899 274l4 4l2 5l3 3l1 4l0 4l-2 6M928 262l-4 -2l-4 -4l-3 -2l-4 -3l-3 -3l-4 -2M862 185l-4 -1l-3 1l-3 2l-3 1l-2 3l-5 4l-4 4l-3 5M890 150l4 1l4 2l5 2l4 4l3 4l5 2l6 3M917 181l2 3l2 2l1 3l3 5M993 194l3 6l-1 5l0 3l2 6l1 3l2 6M989 236l1 -4l-1 -5l-1 -6l1 -6l2 -3l4 -3M896 292l-3 4l-6 3l-2 2l-4 3M855 246l6 3l4 3l1 3l2 5l2 5" fill="none" stroke="#a9d3e4" stroke-width="0.5" stroke-linejoin="round" opacity="0.8"/>
<path d="M905 254l-1 5l-1 5l0 7l0 4l-2 7l-4 5l-3 4l-5 2l-5 2l-5 1M962 322l-1 -8l2 -5l2 -4l6 -3l6 -2l7 -3M849 396l-3 -3l-4 -3l-3 -7l-3 -4l-4 -3l-5 -3M829 222l-2 7l-3 5l-2 5l-1 5l-4 6l-5 4l-5 3l-4 6l-3 3l-5 4M806 389l-3 4l-2 4l-2 7l-3 4l-4 4l-6 4M842 165l-5 -3l-5 -4l-3 -6l-1 -7l0 -5l-2 -7l-3 -3M972 151l0 6l1 8l0 4l-2 6l1 6l2 5M861 198l-2 -4l-4 -3l-4 -7l-3 -6l-1 -6l1 -5l0 -5M963 321l-7 2l-5 1l-6 2l-7 1l-5 -1l-4 -1l-7 -4l-3 -5l-5 -5M861 249l-7 1l-4 3l-6 5l-5 3l-5 2l-5 3l-4 5l-4 5M888 348l-7 0l-6 -1l-7 3l-3 1l-6 2l-5 0l-7 3l-7 1l-7 -2l-7 1l-7 -2l-6 0M918 194l4 -7l4 -4l2 -5l3 -6l2 -6l2 -6M840 279l5 -6l4 -4l3 -3l3 -5l2 -7l2 -5l0 -7l-1 -7l-1 -5l-2 -5l-6 -4l-3 -4M857 141l0 -5l-1 -4l1 -6l3 -5l4 -4l5 -4l3 -3l3 -7l3 -6l0 -5l1 -4M904 244l1 7l-1 5l-1 4l-1 4l-1 4l1 5l1 6l2 7l5 6l5 2l4 7l4 2M840 405l3 4l1 6l-1 4l-3 6l-3 5l-2 4l-3 4M886 289l0 4l-3 7l-2 4l-3 3l-4 5l-5 5l-6 2l-4 2l-7 4M969 314l4 -4l2 -7l5 -6l5 -5l2 -6l5 -6l3 -3M807 389l5 0l5 -1l5 -3l7 -2l5 -4M988 308l0 5l0 5l1 7l4 7l3 3l4 2M997 195l-5 5l-5 2l-5 4l-3 4l-5 1l-5 3l-6 2l-7 2l-6 3l-7 0l-5 1l-7 0M913 346l-1 5l-1 7l-5 5l-3 3l-3 4l-2 4l-2 4M987 221l-4 5l-6 5l-5 2l-4 0l-7 1l-5 3l-3 3l-5 5M982 151l1 5l2 5l2 5l3 4l0 7l-2 7l-1 6l-3 4l-4 4l-4 3l-3 4M881 252l-4 -4l-3 -4l-5 -4l-6 -2l-7 0l-6 -4l-4 -5M867 241l2 4l5 3l7 3l6 5l5 3l4 4l5 2l4 5l3 4l5 5M853 159l-2 -4l-4 -3l-5 -3l-2 -4l-2 -7M972 456l-5 2l-7 -1l-5 1l-6 0l-5 0l-6 1l-4 4l-3 2l-7 4l-5 4M810 166l-4 4l-1 6l-2 7l-2 3l-5 5M912 251l6 -5l6 -5l5 -3l3 -2l4 -1l8 1l4 -1l6 1l6 0l6 -1l4 1l4 3M923 122l6 -2l5 -1l6 -2l4 0l6 0l6 0l6 3M900 142l-7 -1l-4 0l-6 1l-5 -2l-5 0M989 161l0 -4l-1 -5l-3 -5l-2 -5l-5 -4M877 321l1 5l2 6l4 6l2 3l3 4l2 6M946 168l3 4l2 7l4 4l5 5l6 3M870 281l-2 6l1 4l1 7l0 5l-1 4M964 335l-4 5l-4 5l-4 4l-4 3l-5 1l-5 3l-6 0M965 443l0 -6l1 -7l-2 -7l-4 -4l-5 -6l-1 -4l2 -6M979 325l3 4l6 4l2 4l1 6l2 5l1 5l3 6l4 3l2 4l2 8M853 345l-3 2l-7 4l-5 0l-5 1l-6 4l-3 4l-1 7l2 7l0 5l2 6l1 7M820 458l-6 -4l-3 -4l-2 -4l-3 -5l0 -6l-1 -7l-2 -4l-2 -5l-1 -6l2 -4l3 -5M820 396l5 -3l4 -5l3 -3l5 -5l6 -3l7 -1l7 -1l7 0l4 2l3 3l3 4l3 4M1002 152l1 -5l3 -5l6 -5l3 -3l6 -3l3 -7l6 -4l4 -5l2 -6l4 -5l4 -3l6 -2M808 456l5 -5l3 -7l2 -3l5 -2l4 -3l5 -6l6 -2l4 -2l4 -3l5 -4M870 159l-2 -8l1 -6l0 -6l-3 -6l-3 -4l-3 -4l-4 -2l-4 -5l-4 -4l-4 -4l-4 -4l-4 -1M994 206l-2 -5l0 -6l2 -4l1 -5l5 -6l5 -6l5 -5l4 -2l5 -3l6 -5l5 -2M921 236l3 -4l3 -3l4 -6l3 -5l4 -3l7 -4l3 -2l4 -3l6 -3M945 358l-1 5l-3 4l0 6l-4 6l-1 5l-3 4l-1 7M994 390l-2 5l-3 8l-2 4l-1 5l0 5l2 5l1 6l0 6M945 154l4 4l3 3l3 3l5 2l5 5M808 157l5 1l7 4l6 3l6 0l6 3l4 4l4 3l3 2l4 4l2 5l2 6M851 342l-3 6l-2 5l-4 4l-4 6l-3 5l-3 3l-3 5l-3 7M893 275l5 -6l3 -7l2 -5l4 -7l2 -4l1 -6l2 -6M872 435l6 -1l7 1l4 -1l7 2l4 1l7 2l7 0l4 2M837 463l2 3l3 8l0 8l1 7l2 7l2 7l0 4l0 7l-2 4M921 142l5 1l7 2l5 5l5 3l5 4l3 4l2 5l5 5l6 3l3 4M815 446l-4 6l0 6l-1 4l2 6l1 4l-1 6l-1 4M903 174l4 -4l5 -3l2 -4l1 -5l2 -7l3 -5l2 -7l3 -4l2 -4l3 -3l0 -5M918 332l-5 6l-4 3l-5 0l-4 2l-5 2M974 302l7 -3l3 -3l5 -3l4 -4l3 -3l2 -8l-1 -7l-3 -7l-2 -4l-5 -5l-4 -6M908 221l6 3l4 2l4 2l3 2l7 4l4 2l6 1l5 -1l4 0l6 -1M979 365l1 -4l-2 -7l1 -5l-1 -6l-3 -4l-6 -5M889 450l7 4l4 4l3 5l5 5l4 3l2 4l1 7l3 5l2 6l6 5l3 6M910 185l-6 3l-3 2l-3 6l-1 7l-2 4l-3 3l-1 6M879 206l-6 4l-5 1l-5 1l-7 3l-5 5l-7 3l-3 3l-7 3l-8 0M859 376l6 0l5 0l6 4l6 0l8 1l5 1l5 -1l6 1l7 2l8 -1l4 2M935 417l-6 1l-5 -1l-5 2l-7 1l-6 -2l-4 -3l-1 -5l-4 -5M939 124l-6 -4l-4 -3l-5 -3l-4 -4l-3 -3l-7 -4l-6 -3l-7 -3l-4 -5l-5 -5l-2 -4l-4 -4M833 369l-5 3l-4 3l-3 4l-5 6l-4 4l-6 3l-4 2l-5 5l-3 5l-3 7l-5 6M960 352l7 1l5 4l3 4l4 3l7 0l5 2l3 5l1 4l2 4l1 6l-1 5l-2 6M843 131l5 -3l6 -2l4 -2l6 0l4 0l6 -2l7 -4l6 0l4 -2l6 -2l7 -1l4 -3M969 423l4 1l7 0l6 0l6 2l7 1l4 -1l5 -4l6 -4l6 -3l3 -3l3 -5M849 360l0 -5l1 -5l5 -5l5 -4l4 -1l6 -3l7 -3l6 -2l5 1M924 236l5 -5l3 -5l3 -2l3 -4l5 -3l8 -1l6 -5l4 -5l5 -5l4 -3l3 -4M865 218l-5 4l-5 3l-5 1l-4 0l-6 -4l-4 -7l-1 -3l-5 -6M813 296l-6 3l-5 6l-5 3l-5 4l-7 1l-7 3l-5 3M913 223l-3 -3l-2 -5l-4 -4l-3 -3l-2 -6l-2 -6l-3 -7M841 212l5 -5l3 -7l0 -6l1 -8l3 -5l2 -5l3 -6l5 -5l7 -2l5 -6l4 -4M986 177l1 5l-3 7l-4 5l-6 4l-5 6l-2 5l-2 6l-1 5l-3 5l-3 4M1002 131l2 8l-1 6l-2 7l-5 5l-2 4l-1 6l2 8M861 351l-5 2l-5 4l-6 1l-5 1l-5 4l-6 2l-5 4l-2 4l-4 3l-3 7l-2 6l-3 4M857 389l-4 -4l-3 -6l-1 -6l-5 -6l-2 -7l-3 -4l-4 -2l-4 -3M939 291l-3 -6l-3 -5l1 -8l1 -6l-1 -7l0 -5l1 -6l1 -5l0 -5M849 372l-4 -5l-3 -3l-7 -2l-4 -2l-6 -3l-3 -5l-3 -4l-3 -4l-1 -6M935 278l-5 3l-4 7l-4 3l-7 3l-5 3l-3 3l-6 2l-4 3l-6 2l-8 1l-6 4M892 446l-6 -2l-3 -6l-4 -2l-3 -2l-4 -3l-3 -5l-4 -6l-4 -4l-5 -1l-4 -3l-7 -4l-6 -1M887 235l2 4l6 5l2 5l6 5l7 1l4 0l7 -2l4 -2l3 -4M941 332l2 -6l3 -5l4 -5l5 -4l2 -4l6 -5l4 -4l4 -5l4 -4l2 -5l2 -5l3 -4M974 334l5 4l5 5l4 4l2 6l2 5l0 7l-3 5l-1 4l-2 6l-3 2l-5 1M980 270l4 4l4 1l6 0l5 0l5 0l5 -2l4 -4l4 -4l2 -4M820 347l7 -1l6 2l6 1l8 2l8 0l4 1l8 1l6 0M835 157l-4 -2l-5 -6l-7 -4l-2 -4l-2 -7l-1 -4l-1 -4l-1 -5l1 -5l3 -3l2 -6M868 399l-3 -5l-3 -4l-1 -7l-5 -6l-1 -7l1 -5l4 -6l2 -7l1 -5l3 -4M883 197l-4 -4l-2 -4l-3 -3l-2 -5l-2 -4l-2 -3l0 -8M844 288l2 -7l2 -4l3 -5l4 -6l5 -5l6 -2l4 0l5 -1l6 -3M973 350l-7 3l-7 3l-4 0l-4 -1l-4 -2l-4 -1l-7 -5l-6 -2l-7 -1M820 388l0 -7l-2 -6l-3 -4l-5 -4l-5 -5l-4 -4l-5 -5l-2 -5l0 -7M947 175l-3 2l-6 3l-3 3l-6 5l-4 3l-3 3l-5 5l-3 4l-1 7M856 463l-4 -3l-2 -6l-2 -4l-4 -5l-5 -3l-8 -2l-6 1l-5 -1l-6 -4M914 250l-2 7l-2 7l1 5l3 4l3 4l4 5l4 5l4 3l3 4l3 3l4 5M916 249l-6 -1l-7 1l-6 2l-7 3l-6 4l-5 4l-3 5l-4 4l-4 1l-4 3l-4 4l-1 6M874 380l-6 1l-6 0l-5 2l-7 1l-4 0l-6 2l-5 3l-5 6M970 173l1 4l3 5l6 4l4 2l4 1l5 2l7 1l6 1l6 3l6 0M922 348l2 6l0 5l1 7l-1 4l-2 7l-4 5l-1 7M902 199l7 2l7 -1l5 -2l7 -1l4 -3l5 -6l7 -2M860 266l0 -6l0 -5l-5 -6l-2 -4l-4 -6l-3 -3l-5 -2l-3 -3l-3 -2l-3 -6l-3 -5M918 191l-2 5l-1 5l-4 4l-1 4l0 6l4 6l0 7M864 425l-1 5l0 5l-2 8l0 7l-3 4l-4 7l-5 5l-4 7l-1 5l2 4l1 7l0 7M896 456l-4 5l-1 6l0 4l-3 6l0 8l1 5l0 4l0 5l2 6l2 6M997 207l-4 -3l-5 -2l-5 -4l-4 -7l-4 -3l-7 -3l-5 -6l-3 -3M1003 359l-2 6l-1 5l0 7l-3 5l1 7l3 6M1001 214l0 -7l-2 -6l-4 -4l-5 -4l-3 -4M922 435l5 -3l6 -4l5 -1l6 -2l2 -3l3 -5l3 -4l3 -4l4 -4l4 -4l3 -4M844 363l-6 1l-6 0l-5 1l-6 1l-4 1l-5 1l-7 3l-5 3l-6 3l-6 5l-3 4l-5 3M995 326l-1 -4l-3 -8l-2 -5l-3 -4l-4 -4l-7 -3l-7 -3l-7 -2l-5 -3l-4 -2M906 285l1 -5l0 -5l-1 -4l-1 -6l2 -7l3 -4l6 -5l3 -5l2 -4M974 453l5 -5l2 -4l1 -5l2 -3l2 -5l4 -3l3 -5l4 -4l5 -4l5 -2l4 -4l3 -2M816 302l6 -2l6 -2l4 -2l6 -2l7 0l5 -1l5 -3M911 196l-6 2l-6 5l-2 5l-1 5l-1 8l-2 5l-6 5l-3 3l-3 4l-4 4l-3 5l-1 5M974 308l-2 -7l0 -4l-3 -6l-4 -7l-2 -5l-6 -4l-7 -4l-4 -5l-6 -4M841 366l-6 4l-6 2l-5 0l-8 0l-7 1M875 239l3 7l3 5l2 6l4 6l4 3l3 3l4 5l2 5l5 7l2 3l6 6M980 261l-4 2l-5 4l-5 5l-7 1l-6 4l-4 1l-7 -2l-6 1l-7 -3l-5 1M856 444l2 4l2 4l4 6l4 3l5 1l6 1M905 421l-5 0l-5 -3l-4 -1l-4 -2l-7 0l-7 -1l-7 -1l-5 1l-7 1l-5 -1M949 151l-1 -7l0 -4l0 -6l-3 -5l-4 -5l-2 -4l-3 -6l-3 -6l-1 -6l1 -4l4 -7M835 461l-2 6l-3 5l-2 5l0 5l-3 5l-5 4M838 198l-1 -7l0 -8l0 -5l1 -6l-1 -5l-2 -6M981 131l-7 -3l-6 -4l-4 -2l-6 -4l-6 -3l-4 0l-4 1l-5 3l-5 3l-3 4M827 411l-2 -4l-5 -4l-4 -3l-2 -4l-5 -6l-6 -3l-6 -2" fill="none" stroke="#f7cf95" stroke-width="0.9" stroke-linejoin="round" opacity="1"/>
<path d="M820 301l2 6l2 6l2 4l0 4l-2 8l-2 6M901 377l-2 7l-4 7l-2 5l-2 7l2 6l3 5l2 5l5 6l6 4M875 365l7 0l6 -2l6 -3l7 -2l6 -2l4 -3l4 -1l4 0l6 -1l4 -1l8 -1M862 280l1 5l2 7l1 4l2 7l-2 8l-2 7l-1 7l-1 4l0 5l-3 6M870 265l0 -6l2 -4l2 -8l3 -4l3 -3l2 -4l5 -4l5 -5l4 -4l4 -3l4 0M844 334l-6 2l-5 0l-7 3l-4 4l-2 6l-1 5l-2 4l-2 6l-2 6l-2 8l1 7l3 5M875 249l3 6l5 5l3 4l3 6l5 4M915 366l2 -3l3 -4l6 -5l5 -6l2 -6l3 -7l3 -4l3 -6l3 -4l2 -4M857 320l7 1l6 2l6 0l6 4l8 2l4 3l3 3l5 3l6 1M900 320l-3 -6l-5 -5l-4 -5l-5 -2l-4 -1l-7 -2l-5 -3l-4 -2l-4 -3l-3 -3l-4 -6l-1 -6M848 333l-2 5l-2 7l-1 8l1 7l0 5l1 6l-1 6l0 5M902 362l7 1l6 1l8 0l6 -3l4 1l4 -1l7 1l6 1l6 2l7 1l6 -2M912 308l3 4l5 3l4 4l1 7l1 6l3 4l1 7l2 6M931 388l3 2l5 3l8 -1l7 -1l5 -2l6 0l7 1M930 243l4 -3l7 -2l5 -4l2 -4l2 -8M943 242l0 4l-1 7l2 6l2 6l5 5l6 3l6 4l7 1l6 1l7 0l5 2l7 -2M941 240l-4 1l-5 1l-5 1l-6 2l-4 3l-8 2M910 392l-4 6l-1 8l1 6l0 6l2 5l5 6l4 5l3 5l4 7l3 6M832 347l-4 -5l-6 -4l-3 -3l-3 -7l-3 -6l-4 -4l-2 -5M851 365l5 -4l5 -4l3 -7l4 -4l2 -4l1 -5l5 -6l6 -5l8 -2M910 298l0 7l2 5l5 6l2 5l5 6M895 376l-5 -1l-6 -2l-5 -1l-6 -1l-7 -1M874 340l-4 -3l-2 -4l-1 -7l-3 -7l0 -4l-3 -4l-2 -7l0 -6l1 -5M847 309l4 -6l5 -4l5 -1l4 -3l3 -3l3 -3l5 -5l5 -3l4 -2l6 -2M834 316l0 -5l2 -8l1 -4l4 -5l2 -5M868 247l-8 1l-4 2l-5 4l-5 3l-6 3l-6 0l-4 3M899 324l3 6l6 5l5 7l2 5l3 7l3 5l5 4l4 6l2 7l2 7l0 6l0 6M833 282l3 -2l4 -2l5 -6l3 -3l8 -2l6 -1l6 -3l7 -3l7 -3l6 -2M893 241l-6 -3l-7 -1l-4 -1l-5 -3l-5 -5l-7 -3l-7 0l-6 -3l-4 -4l-1 -5M865 355l-3 5l-5 6l-4 3l-7 3l-8 0l-5 1l-4 -1M929 240l-3 -2l-7 -3l-5 -5l-2 -4l-3 -4l-2 -7l-3 -3l-1 -6l-3 -6l-4 -4l-4 -6M832 264l0 -6l0 -5l0 -6l-1 -6l-3 -5l-2 -7l-4 -5l-5 -6l-3 -3l-3 -5M906 265l4 4l2 4l1 6l2 6l5 5l5 6l4 4l3 2M941 371l1 -4l-2 -6l-2 -5l0 -5l-2 -7l2 -7M862 344l4 -3l4 -2l6 -1l6 -2l6 -4M902 362l5 0l7 1l7 1l4 -2l5 0l5 3l3 4l2 5M829 293l-3 -4l-6 -4l-4 -4l-2 -6l-3 -2l-5 -2l-4 -3l-5 -2l-7 -2l-5 2l-4 1M949 398l0 6l0 6l-1 7l0 7l0 7l1 7l4 5l3 5l3 5l2 5l-1 5M887 312l2 -4l0 -4l2 -5l2 -4l1 -6l-1 -8l-2 -6l-1 -7l-1 -5l-4 -7M842 343l3 -5l3 -6l4 -2l3 -5l2 -7l4 -6M917 343l6 5l7 3l5 1l6 1l4 -1l6 0M865 335l1 -4l0 -5l-2 -7l-1 -7l1 -7l1 -4l1 -5M817 328l-4 2l-4 1l-5 1l-5 -1l-4 -3l-4 -1l-5 -1l-5 -3l-7 0M819 298l-1 -7l-1 -7l-1 -5l1 -4l1 -4l2 -6l3 -5l5 -5l6 -2l4 -5l3 -3M858 328l6 -1l6 -1l7 -3l4 -3l2 -4l4 -5l3 -3l3 -4l3 -7l3 -7l3 -6M866 351l4 -5l7 -2l5 -2l7 0l6 -3l5 -3l3 -3l3 -4l1 -7l-2 -7M949 342l5 -5l5 -2l7 -1l6 -2l5 0l6 3l6 1M896 358l5 0l4 -3l6 -5l5 -4l2 -6l0 -7l3 -7l0 -5l1 -7l-1 -4M933 332l4 -2l5 -1l4 -1l6 -3l4 0M904 356l-3 7l1 8l2 5l2 7l0 5l2 4l0 6l-2 4l-3 4l0 4l-1 8l0 5M820 322l1 5l2 5l0 6l3 6l1 7l-1 6l-1 4M865 244l0 6l-1 4l-1 5l-2 5l-3 5l-6 4l-2 5l-3 4l-1 6l-1 8l-1 5M831 321l-4 7l-6 3l-6 1l-4 3l-3 3l-4 7l-3 3l-3 5l0 7l0 5l2 5M850 386l-7 1l-8 -2l-5 -4l-3 -4l-4 -3l-4 -5l-2 -6l-2 -7l-3 -6l-1 -5l2 -7M846 392l6 4l5 4l6 1l5 2l7 2l5 0l4 -2l4 -2l8 -2l4 -4M885 339l-4 -2l-5 0l-5 0l-5 -1l-6 -3l-7 -1l-6 1l-6 -1l-4 0l-7 -2l-6 1l-5 -1M902 357l-1 -4l-3 -6l-4 -6l0 -5l1 -5l2 -5M852 284l3 5l2 5l0 4l0 6l0 7l-2 6M855 387l4 -5l3 -7l1 -4l-1 -5l-3 -3l-3 -3l-4 -3l-6 -1M879 329l4 5l5 5l5 5l3 5l2 7l1 5l4 7l1 5M939 394l2 4l0 7l1 4l2 4l3 6l3 4l2 6l4 5l2 6l5 6l6 5M909 308l-2 6l-3 5l-3 6l-5 4l-3 4l-2 4l-2 4l-3 6M871 369l4 -6l3 -5l2 -7l1 -7l-2 -4l-1 -6l-1 -5M862 393l1 -6l1 -6l-3 -6l-5 -4l-6 -3l-6 0l-7 -1l-5 -4l-2 -4l-4 -6M854 272l0 -4l-3 -4l-2 -8l0 -5l0 -7l3 -7M868 384l-5 1l-6 -3l-7 0l-6 -1l-6 -3l-5 -4l-2 -5l-4 -4l-3 -7l-3 -6M919 262l3 -5l2 -4l4 -4l3 -6l3 -3M919 245l4 5l3 5l2 5l-1 6l-1 6l-2 4l-3 4l-1 4M931 255l1 -5l1 -4l4 -6l3 -3l7 -4l7 0l8 0l5 0l5 -3l5 -5l6 -5l2 -4M856 269l3 7l0 4l-2 7l0 6l-1 5" fill="none" stroke="#f6c884" stroke-width="1.0" stroke-linejoin="round" opacity="1"/>
<path d="M979 206l5 2l5 5l4 6l1 5l2 5l2 4l4 6l1 7l0 5l0 4M1002 394l5 -2l4 -3l7 -3l5 -2l5 -3l6 -5l6 -4l5 -1l6 -3l4 -1l8 0l5 4l4 6M991 346l5 5l5 3l7 3l4 2l6 2l4 3l5 6l2 4l5 5l6 5l3 5l2 5M970 360l3 5l5 4l6 2l4 0l7 -2l6 -5l3 -3l3 -7l4 -7l4 -4M821 285l1 -5l0 -6l0 -5l2 -7l0 -5l3 -7l0 -4l0 -7l0 -6l0 -4l-2 -7l1 -5l-2 -6l1 -7M950 238l-4 6l-4 4l-2 6l-1 5l-3 4l-4 2l-5 2l-7 5l-3 4l-3 3l-6 4M979 425l6 3l4 2l5 3l7 2l7 1l8 2l7 0l6 -1l7 -2l4 -3M942 362l6 -4l6 -1l6 -2l7 -2l6 -1l5 -4l7 -3l7 0l6 0l8 -1M954 462l6 -2l4 -6l3 -5l5 -4l3 -4l5 -3l5 -4l3 -4l4 -4l4 -7l5 -3l7 -2M980 146l-4 4l-6 5l-6 2l-5 0l-6 -2l-4 -3l-5 -1l-7 1l-4 2l-5 2M905 368l-4 -3l-4 -4l-3 -5l-3 -3l-1 -8l-3 -3l-4 -3l-3 -6l-2 -6l-2 -5l-5 -6l-3 -4M814 370l4 -3l5 -5l4 -5l3 -4l3 -7l6 -4l6 -4l5 -4l4 -2l4 -3l4 -4l1 -5M931 310l-5 -1l-7 -1l-5 0l-5 0l-6 -1l-8 -1l-6 -1M814 431l5 2l5 5l6 3l6 2l3 3l3 5M863 345l-3 -4l-3 -4l-2 -5l-1 -4l1 -7l-1 -5l-2 -5l-4 -7l-5 -5l-2 -4l-3 -6l-3 -6l-1 -8l-2 -4M931 173l-1 7l-3 5l-2 5l1 5l0 5l3 7M875 361l-6 -3l-4 -2l-3 -3l-3 -4l-6 -5l-3 -8l-4 -3l-4 -1l-5 -2l-4 -1l-6 -1l-6 -3l-5 0l-4 0M856 339l6 -4l4 -1l4 -2l7 -5l2 -4l6 -5l8 -3l4 -6l2 -6l1 -4l3 -7M918 391l2 6l0 5l1 4l0 8l3 7l3 5l4 3l5 3l7 1M947 314l-3 -6l-2 -6l-4 -6l-4 -3l-4 -5l-4 -4l-2 -4l-3 -3l-3 -3l-2 -4l-1 -5l2 -7M865 189l5 4l4 2l4 4l6 3l4 1l6 2l4 2l4 4l4 5l6 4M918 393l3 -6l5 -6l2 -4l0 -7l-1 -4l-1 -8l1 -7l2 -7M825 448l6 -3l6 -1l4 -1l6 -3l3 -3l6 -3l4 -6l5 -4l4 -7l7 -4l8 0l4 1l5 1l5 0M855 280l3 4l5 3l2 4l3 6l3 7l2 7l5 4l3 8l5 4M913 372l-2 -3l-1 -5l-2 -4l-2 -5l-5 -5l-5 -3l-5 -5l-6 -4l-5 -1l-5 -1l-4 -2l-3 -3l-6 -4M844 391l1 -4l4 -5l2 -6l2 -5l5 -5l4 -1l5 0l8 -1l5 -4l3 -5l5 -2l4 -2l6 0M852 315l-2 7l0 7l-3 5l-3 7l-2 3l-5 7l-4 3l-4 6l-3 3M819 198l-7 1l-8 1l-7 1l-6 -1l-6 -1l-6 2l-4 1l-5 4M852 217l-3 4l-5 5l-5 6l-2 5l-2 5l-1 6l-1 6l-4 6l-1 4l-2 7l-2 6l-3 4l-4 4M828 315l-5 -6l-3 -6l-1 -5l-3 -7l0 -8l-3 -7l-3 -6l0 -5l-1 -8l-1 -5l-2 -8M836 198l7 2l5 -1l5 -3l4 -2l4 -4l3 -4l5 -4M928 403l-5 0l-6 -1l-8 0l-4 -2l-7 0l-6 0l-6 3l-8 2l-6 4l-3 6l-4 4l-6 3l-3 3l-5 3M983 362l-3 -7l-2 -5l-1 -4l-3 -4l-3 -3l-4 -2l-7 -2l-4 -3l-5 -2l-4 -4l-5 -6l-2 -3l0 -5M929 306l-4 0l-7 1l-7 4l-5 1l-7 2l-5 0l-8 2l-6 -3l-5 -1l-7 -2l-6 -2l-5 -3l-3 -4M885 270l-3 5l-4 4l-2 5l-3 7l-2 8l1 4l3 7l0 8l-3 6M861 188l-5 -2l-4 -1l-8 0l-6 1l-8 -1l-7 0l-5 0l-4 -1l-7 -1l-5 1M855 252l-1 -7l0 -4l-1 -7l-3 -5l-3 -7l-2 -3l-4 -3M935 430l-5 1l-8 0l-7 0l-5 3l-5 0l-5 -3l-4 0l-6 -2l-5 -1l-7 1l-7 0l-8 -2M813 417l3 -4l3 -3l4 -3l4 -2l5 -1l6 -3l7 -2l7 0l6 0l6 1l6 0l7 1M933 187l-1 7l0 7l0 6l2 7l3 3l5 5l4 4l6 5l4 5l2 7l2 6l2 6l5 4l3 8M866 365l3 -3l3 -3l2 -7l3 -7l4 -3l5 -3M956 259l-4 -1l-4 -1l-8 -2l-6 0l-6 0l-7 2l-6 -1l-4 1l-7 0M834 260l4 -1l8 -2l7 0l6 -2l4 -3l5 -1M976 152l0 -6l0 -7l-3 -6l-3 -6l-2 -7l-3 -5l-2 -3l-5 -5l-5 -2l-7 -1l-5 -1l-6 2l-6 2M982 368l-7 -2l-6 0l-5 1l-7 -2l-7 2l-7 0l-8 0l-8 -1l-6 -3l-8 1l-7 2l-5 1l-6 4M819 159l-4 -6l-2 -5l-3 -3l-1 -4l0 -4l2 -7l3 -4l4 -6l4 -3l4 -6l4 -7l1 -5M917 291l2 -5l3 -4l6 -5l4 -1l6 -4l3 -1l4 -4l4 -7l0 -4l0 -7l2 -4l4 -5l5 -6l6 -3M871 159l4 -2l4 -3l5 0l4 1l6 3l6 2l4 1l5 0l5 1l5 0l6 -2l6 -3M873 404l3 -4l2 -5l1 -5l-1 -5l0 -5l0 -6l-3 -7l-4 -7l-1 -6l-1 -4l-1 -6M944 141l7 -1l7 -1l5 -1l6 -5l7 -2l3 -4l5 -3l5 -6M821 408l-3 3l-2 5l-6 5l-2 5l-1 5l-1 8l0 4l1 5l0 6l-2 5l-4 5M910 216l-4 -3l-6 -4l-7 -2l-4 -3l-3 -5l-1 -6l-4 -6M856 177l-4 6l-5 4l-4 4l-2 4l-2 4l-3 4l-2 3l-4 4l-1 6l-4 6l-4 6l-5 3l-5 2l-6 1M974 271l-6 2l-7 1l-6 4l-7 1l-8 0l-6 -3l-5 -4l-7 -4l-5 -2l-5 -2l-6 -1l-7 0l-7 -1l-6 -1M1001 132l-8 -2l-5 1l-5 0l-7 0l-5 1l-8 1M851 227l-4 1l-8 0l-6 2l-6 0l-5 -2l-6 -2l-6 -2l-5 1l-6 3M902 178l3 6l2 4l6 5l7 2l7 -1l6 1l6 3l6 3l5 1l4 3l5 1l7 4l5 2M1004 223l2 -7l3 -3l4 -6l4 -6l3 -3l1 -4l2 -4l1 -7l0 -8l-1 -7l-1 -4l-3 -5l-3 -4l-4 -5M840 159l-4 5l-2 3l-3 3l-7 3l-7 0l-4 2l-6 2M983 367l0 -5l-1 -6l3 -6l0 -6l4 -6l2 -5l4 -3l7 -3l6 -3M819 414l-5 4l-7 1l-6 -1l-4 -3l-6 -1l-6 2M910 166l-2 5l-3 4l-2 5l-3 6l-5 4l-4 6M847 181l6 3l5 3l5 3l7 1l6 2l6 -1M829 309l-3 -5l-5 -5l-6 -3l-6 0l-4 -2l-5 -1l-7 -1l-4 -2l-6 -5l-2 -5l-3 -5M1000 306l6 -2l6 -3l4 0l5 -3l6 -2l4 -2l8 -1l6 -1l5 -4l3 -4l1 -7l3 -4l2 -4l0 -5M885 377l4 0l6 0l4 -2l8 -2l4 -2l7 -4l7 0l4 -3l6 -4l5 -2M818 456l-2 -4l-5 -4l-6 -1l-6 -2l-4 1l-6 1l-5 0l-4 -2M919 281l1 -5l1 -5l4 -6l2 -4l6 -4l4 -6l2 -6l0 -8l1 -6l4 -5M858 150l2 -6l2 -6l0 -8l1 -6l-1 -7l3 -8l3 -4l5 -5l5 -4l2 -4M853 436l-7 5l-6 5l-5 1l-6 0l-4 2l-5 4l-6 3l-6 -1" fill="none" stroke="#9a9a9a" stroke-width="0.5" stroke-linejoin="round" opacity="0.8"/>
<path d="M944 302l-5 1l-7 -1l-6 -2l-4 -3l-3 -4l-1 -6l1 -5l1 -5l2 -4l3 -6l3 -6l4 -5M945 380l0 -7l-2 -6l1 -6l-3 -4l-4 -4l-1 -5l-3 -4l-2 -5l1 -5M876 325l3 -4l4 -3l3 -7l6 -5l7 -3l7 0M906 229l-1 8l1 5l-1 8l-3 6l-3 3l-2 4l-3 8l1 4l1 7l0 7l-4 7l-5 3l-4 5M943 368l4 3l7 3l5 4l4 5l3 5l4 5l5 5l6 5l3 6l4 6l5 3l7 2l7 3M832 368l3 5l2 6l2 4l2 5l4 6l5 7M823 378l-1 -5l-4 -7l-2 -4l-1 -5l3 -7l3 -4l4 -4l2 -6l2 -7l5 -6l2 -8M877 326l1 4l-2 7l2 8l-1 6l-1 4l-6 4l-7 2l-6 3M818 341l-2 -5l-3 -3l-6 -3l-6 -4l-5 -2l-7 -1l-7 -3l-4 -2l-5 -6l-2 -4l0 -4l1 -7l-2 -5M881 379l2 -4l6 -5l5 -1l6 2l6 5l5 6l1 6l4 4l5 5l3 5M833 233l-5 5l-3 7l-3 6l-3 7l-2 7l-1 4M812 237l-6 3l-6 4l-5 6l-2 4l-2 3l1 6l2 5l3 3l4 5l4 2l4 2l8 -2l5 -3M944 324l6 2l7 3l5 4l7 4l4 5l3 6M833 243l-2 -7l0 -8l-3 -6l-1 -7l0 -8l-1 -4l-1 -7l1 -7l-1 -5l1 -4l5 -4M921 259l4 -1l8 1l6 0l6 0l6 2l5 1l4 0l5 -1l4 -2l5 -1M858 286l4 2l4 4l5 1l6 4l4 5l6 4l6 3l6 1l7 1l6 1M846 304l-3 -8l-1 -3l0 -8l0 -6l1 -4l3 -6l1 -5l-1 -5l-3 -7l-1 -8l-2 -6l-5 -4l-5 -2l-5 -3M825 227l2 -6l3 -6l0 -8l-2 -6l-1 -4l-3 -3M866 358l-3 4l-3 3l-2 7l1 7l0 5l0 5l-3 4l-1 8l0 5l0 5l-2 7l-4 6M924 301l-3 -4l-2 -7l0 -5l-3 -6l-4 -4l-3 -4l-4 -5M881 332l0 -5l0 -4l-1 -7l-1 -5l0 -7l-2 -4l0 -7l-2 -7l0 -6l1 -6M925 335l-5 5l-5 5l-4 5l-3 6l-3 3l-1 4l-1 4l1 7l-1 7l-3 6l-1 4l-4 3M928 227l-7 -3l-4 -3l-7 -1l-7 2l-5 4l-5 4l-4 4l-3 3l-3 3l-3 4l-3 4l-1 7M881 349l-6 -5l-6 -2l-4 -5l-4 -3l-6 -3l-7 0l-4 -2l-4 -5l-5 -6l-6 -3l-7 0l-6 4l-3 2M943 255l1 7l0 7l0 6l3 5l1 5l4 7M929 290l-4 0l-5 -3l-6 -1l-7 -2l-5 1l-7 2l-5 2l-6 4l-4 3l-5 1l-6 3l-4 0l-4 -2M846 258l7 1l6 2l4 4l3 6l1 7l-1 4l-2 6l-2 7l-2 3l-3 5l-4 4M879 270l4 6l3 4l3 7l2 3l5 4l4 1l6 1l7 3l5 4l4 3l3 7M891 398l2 -6l0 -4l-1 -5l-3 -7l-1 -8l-3 -6l-5 -4l-4 -6l-2 -5l-4 -4l-2 -4l-2 -5l-5 -6l-3 -3M903 331l2 -7l2 -5l5 -5l7 -4l3 -4l5 -3M837 398l-4 -1l-6 -3l-4 -3l-4 -3l-6 -2l-7 1M835 239l-2 -7l-2 -7l-3 -7l0 -7l-2 -5l-2 -3l-2 -4l-1 -8l1 -5M922 247l-4 6l-4 5l-6 5l-4 7l-3 6l0 5l3 7M958 256l-1 -5l-2 -8l-1 -4l2 -7l1 -4l-1 -7l-2 -7l-1 -4l-3 -4l-2 -4l-3 -4l-4 -4l-5 -3l-4 -2M941 333l-2 8l-4 4l-4 3l-4 5l-3 5l-2 6M880 327l-7 -1l-6 0l-7 1l-5 1l-7 3l-5 1l-7 0l-7 -1l-7 -2l-8 -1M949 285l5 -2l7 -1l7 -1l8 2l5 2l6 5l6 3M865 273l6 -1l6 -3l4 -3l5 -5l5 -4l3 -4l3 -6l4 -4l3 -6l1 -4l2 -6M836 358l0 -7l0 -7l-2 -7l0 -4l0 -6l-3 -7l-1 -4l0 -6M850 320l5 5l5 4l2 4l2 5l2 8l-1 6l-1 4l-2 5l-2 4l0 4l-2 7M892 289l5 0l5 -2l4 -3l6 -4l7 -2l5 -4l5 -3l2 -4l5 -5l2 -3M887 344l3 -6l0 -8l-2 -7l-2 -4l0 -5l0 -7l1 -6l0 -8l0 -4l2 -8l2 -7M887 291l3 3l5 3l6 5l4 5l4 6l2 5l2 6l1 6l1 7M855 242l-4 -2l-7 0l-7 0l-6 0l-5 2l-5 2l-4 3l-3 2l-3 5l-3 3l-6 4l-4 4l-2 4l-5 3M858 241l-1 7l-2 6l-1 4l1 7l-1 4l-2 4l-4 5l-3 5l-2 7l-4 6l-2 5l-3 6l-2 7l-3 6" fill="none" stroke="#7a7a7a" stroke-width="0.7" stroke-linejoin="round" opacity="0.75"/>
<path d="M878.1 295.1 L881.9 295.1 L881.9 302.0 L878.1 302.0Z" fill="#cde6bd"/>
<path d="M897.5 288.9 L901.2 288.9 L901.2 292.6 L897.5 292.6Z" fill="#d5e8c8"/>
<path d="M835.0 126.5 C837.1 128.8 844.8 134.4 847.5 140.2 C850.2 146.1 851.0 154.8 851.2 161.5 C851.5 168.2 848.5 175.0 848.8 180.2 C849.0 185.5 851.9 190.9 852.5 193.0" fill="none" stroke="#6e6e6e" stroke-width="0.9" stroke-linecap="butt" stroke-linejoin="round" opacity="0.9"/>
<path d="M861.2 134.0 C860.4 137.5 857.9 147.5 856.2 155.2 C854.6 163.0 852.1 176.1 851.2 180.2" fill="none" stroke="#6e6e6e" stroke-width="0.9" stroke-linecap="butt" stroke-linejoin="round" opacity="0.9"/>
<path d="M895.0 131.5 C895.8 134.4 897.7 144.0 900.0 149.0 C902.3 154.0 906.7 154.2 908.8 161.5 C910.8 168.8 911.9 187.8 912.5 193.0" fill="none" stroke="#6e6e6e" stroke-width="0.9" stroke-linecap="butt" stroke-linejoin="round" opacity="0.9"/>
<path d="M883.8 160.2 C878.5 163.2 864.4 173.4 852.5 177.8 C840.6 182.1 819.2 185.0 812.5 186.5" fill="none" stroke="#6e6e6e" stroke-width="0.9" stroke-linecap="butt" stroke-linejoin="round" opacity="0.9"/>
<path d="M892.5 131.5 C893.5 134.4 896.0 143.0 898.8 149.0 C901.5 155.0 906.5 160.4 908.8 167.8 C911.0 175.1 911.9 188.8 912.5 193.0" fill="none" stroke="#6e6e6e" stroke-width="0.9" stroke-linecap="butt" stroke-linejoin="round" opacity="0.9"/>
<path d="M990.0 134.0 C990.2 137.5 989.4 148.6 991.2 155.2 C993.1 161.9 999.4 170.9 1001.0 174.0" fill="none" stroke="#6e6e6e" stroke-width="0.9" stroke-linecap="butt" stroke-linejoin="round" opacity="0.9"/>
<path d="M950.0 167.8 C951.9 169.8 958.3 176.0 961.2 180.2 C964.2 184.5 966.5 190.9 967.5 193.0" fill="none" stroke="#6e6e6e" stroke-width="0.9" stroke-linecap="butt" stroke-linejoin="round" opacity="0.9"/>
<path d="M851.2 193.0 C852.3 196.5 854.2 207.4 857.5 214.2 C860.8 221.1 866.7 229.0 871.2 234.2 C875.8 239.5 881.9 240.9 885.0 245.5 C888.1 250.1 889.2 259.2 890.0 262.0" fill="none" stroke="#6e6e6e" stroke-width="0.9" stroke-linecap="butt" stroke-linejoin="round" opacity="0.9"/>
<path d="M812.5 234.2 C816.2 234.2 828.5 237.6 835.0 234.2 C841.5 230.9 848.5 217.6 851.2 214.2" fill="none" stroke="#6e6e6e" stroke-width="0.9" stroke-linecap="butt" stroke-linejoin="round" opacity="0.9"/>
<path d="M877.5 209.2 C880.4 208.0 884.9 203.3 895.0 201.8 C905.1 200.2 930.8 200.2 938.0 199.9" fill="none" stroke="#6e6e6e" stroke-width="0.9" stroke-linecap="butt" stroke-linejoin="round" opacity="0.9"/>
<path d="M915.0 199.2 C915.8 203.4 919.6 217.0 920.0 224.2 C920.4 231.5 916.5 237.4 917.5 243.0 C918.5 248.6 924.8 255.5 926.2 258.0" fill="none" stroke="#6e6e6e" stroke-width="0.9" stroke-linecap="butt" stroke-linejoin="round" opacity="0.9"/>
<path d="M880.0 206.8 C882.1 205.9 883.1 202.8 892.5 201.8 C901.9 200.7 927.3 199.2 936.2 200.5 C945.2 201.8 941.5 205.5 946.2 209.2 C951.0 213.0 961.9 220.7 965.0 223.0" fill="none" stroke="#6e6e6e" stroke-width="0.9" stroke-linecap="butt" stroke-linejoin="round" opacity="0.9"/>
<path d="M965.0 223.0 C965.8 225.9 967.9 234.0 970.0 240.5 C972.1 247.0 976.2 258.4 977.5 262.0" fill="none" stroke="#6e6e6e" stroke-width="0.9" stroke-linecap="butt" stroke-linejoin="round" opacity="0.9"/>
<path d="M965.0 223.0 C968.3 220.9 979.0 214.2 985.0 210.5 C991.0 206.8 998.3 202.2 1001.0 200.5" fill="none" stroke="#6e6e6e" stroke-width="0.9" stroke-linecap="butt" stroke-linejoin="round" opacity="0.9"/>
<path d="M915.0 193.0 C916.0 198.2 920.8 215.9 921.2 224.2 C921.7 232.6 916.7 237.4 917.5 243.0 C918.3 248.6 924.8 255.5 926.2 258.0" fill="none" stroke="#6e6e6e" stroke-width="0.9" stroke-linecap="butt" stroke-linejoin="round" opacity="0.9"/>
<path d="M975.0 236.8 C976.5 236.8 981.5 235.1 983.8 236.8 C986.0 238.4 985.9 244.9 988.8 246.8 C991.6 248.6 999.0 247.8 1001.0 248.0" fill="none" stroke="#6e6e6e" stroke-width="0.9" stroke-linecap="butt" stroke-linejoin="round" opacity="0.9"/>
<path d="M812.5 284.5 C817.3 284.3 831.2 283.2 841.2 283.2 C851.2 283.2 863.1 283.2 872.5 284.5 C881.9 285.8 893.3 289.7 897.5 290.8" fill="none" stroke="#6e6e6e" stroke-width="0.9" stroke-linecap="butt" stroke-linejoin="round" opacity="0.9"/>
<path d="M880.0 269.5 C880.2 273.5 880.4 286.2 881.2 293.2 C882.1 300.3 882.7 305.7 885.0 312.0 C887.3 318.3 893.3 327.8 895.0 331.0" fill="none" stroke="#6e6e6e" stroke-width="0.9" stroke-linecap="butt" stroke-linejoin="round" opacity="0.9"/>
<path d="M812.5 314.5 C816.2 314.1 827.1 313.5 835.0 312.0 C842.9 310.5 852.5 307.2 860.0 305.8 C867.5 304.3 876.7 303.7 880.0 303.2" fill="none" stroke="#6e6e6e" stroke-width="0.9" stroke-linecap="butt" stroke-linejoin="round" opacity="0.9"/>
<path d="M912.5 289.5 C915.8 289.1 925.4 289.1 932.5 287.0 C939.6 284.9 947.1 278.0 955.0 277.0 C962.9 276.0 972.3 279.7 980.0 280.8 C987.7 281.8 997.5 282.8 1001.0 283.2" fill="none" stroke="#6e6e6e" stroke-width="0.9" stroke-linecap="butt" stroke-linejoin="round" opacity="0.9"/>
<path d="M868.8 331.0 C868.1 333.5 866.9 340.2 865.0 346.0 C863.1 351.8 859.8 360.6 857.5 366.0 C855.2 371.4 855.0 374.5 851.2 378.5 C847.5 382.5 841.5 386.2 835.0 389.8 C828.5 393.3 816.2 398.3 812.5 400.0" fill="none" stroke="#6e6e6e" stroke-width="0.9" stroke-linecap="butt" stroke-linejoin="round" opacity="0.9"/>
<path d="M890.0 338.5 C888.8 342.5 885.4 355.6 882.5 362.2 C879.6 368.9 874.2 375.8 872.5 378.5" fill="none" stroke="#6e6e6e" stroke-width="0.9" stroke-linecap="butt" stroke-linejoin="round" opacity="0.9"/>
<path d="M812.5 371.0 C815.2 371.8 822.1 375.6 828.8 376.0 C835.4 376.4 847.3 371.8 852.5 373.5 C857.7 375.2 858.8 383.9 860.0 386.0" fill="none" stroke="#6e6e6e" stroke-width="0.9" stroke-linecap="butt" stroke-linejoin="round" opacity="0.9"/>
<path d="M812.5 412.2 C814.6 413.7 820.2 420.6 825.0 421.0 C829.8 421.4 837.5 416.8 841.2 414.8 C845.0 412.7 846.5 409.5 847.5 408.5" fill="none" stroke="#6e6e6e" stroke-width="0.9" stroke-linecap="butt" stroke-linejoin="round" opacity="0.9"/>
<path d="M812.5 448.5 C813.3 446.0 815.2 438.1 817.5 433.5 C819.8 428.9 824.8 423.1 826.2 421.0" fill="none" stroke="#6e6e6e" stroke-width="0.9" stroke-linecap="butt" stroke-linejoin="round" opacity="0.9"/>
<path d="M970.0 421.0 C969.6 423.1 968.1 428.3 967.5 433.5 C966.9 438.7 966.5 449.1 966.2 452.2" fill="none" stroke="#6e6e6e" stroke-width="0.9" stroke-linecap="butt" stroke-linejoin="round" opacity="0.9"/>
<path d="M1002.5 294.8 L992.5 297.6 L982.5 298.2 L973.1 300.8 L967.5 305.1 L973.1 312.0 L968.1 317.0 L958.8 320.8 L951.2 318.2 L945.0 315.1 L935.0 313.9 L921.2 315.8 L911.2 321.4 L905.0 331.0 L908.8 331.0 L910.6 338.5 L906.9 343.5 L911.2 347.2 L918.1 347.9 L923.1 361.0 L920.6 367.2 L916.2 371.0 L910.0 377.2 L897.5 383.5 L885.0 389.8 L872.5 394.8 L865.0 391.0 L858.8 393.5 L852.5 400.0 L857.5 396.0 L860.0 401.0 L868.8 403.5 L870.0 408.5 L872.5 414.8 L870.0 421.0 L875.0 424.8 L872.5 428.5 L865.0 423.5 L857.5 422.2 L851.2 427.2 L850.0 433.5 L852.5 439.8 L860.0 442.2 L862.5 448.5 L861.2 463.5 L955.0 463.5 L950.0 454.8 L960.0 446.0 L956.2 437.2 L960.0 428.5 L957.5 421.0 L961.2 414.8 L970.0 409.8 L980.0 408.5 L986.2 403.5 L983.8 395.4 L988.8 400.0 L985.0 393.5 L992.5 389.8 L1002.5 386.0Z" fill="#aad3df"/>
<path d="M904.4 306.4 L909.0 306.4 L912.8 320.8 L906.9 327.0 L903.1 331.0 L900.6 331.0 L905.0 320.8Z" fill="#aad3df"/>
<path d="M871.2 386.0 L913.8 368.5 L916.2 372.2 L875.0 393.5Z" fill="#e4e2df"/>
<path d="M872.5 392.2 L915.0 372.9" fill="none" stroke="#aad3df" stroke-width="1.3" stroke-linecap="butt" stroke-linejoin="round"/>
<path d="M913.8 317.0 L921.2 315.8 L922.5 327.0 L915.0 329.5Z" fill="#e4e2df"/>
<path d="M930.0 315.8 L933.8 315.1 L935.0 324.5 L930.6 324.5Z" fill="#e4e2df"/>
<path d="M947.5 318.2 L956.2 320.8 L960.0 317.0 L972.5 312.0 L967.5 307.0 L960.0 309.5 L950.0 314.5Z" fill="#e4e2df"/>
<path d="M982.5 298.2 L992.5 297.6 L995.0 304.5 L992.5 305.8 L990.0 300.8 L983.8 302.0Z" fill="#e4e2df"/>
<path d="M917.5 331.0 L930.0 331.0 L931.2 337.2 L925.0 340.4 L917.5 337.2Z" fill="#dcdad2"/>
<path d="M923.8 332.2 L929.4 332.2 L930.0 337.2 L925.6 338.5Z" fill="#cfc7a6"/>
<path d="M898.8 343.5 L910.0 346.6 L917.5 348.5 L923.1 361.6 L920.0 368.5 L916.2 367.2 L917.5 372.2 L910.0 377.2 L901.2 368.5 L897.5 362.2Z" fill="#e9ece0"/>
<path d="M910.0 347.2 L917.5 348.5 L923.1 361.6 L921.2 362.2Z" fill="#eef2d6"/>
<path d="M920.2 368.8 L929.0 360.8" fill="none" stroke="#eef2d6" stroke-width="1.5" stroke-linecap="butt" stroke-linejoin="round"/>
<path d="M935.0 441.6 L938.8 440.8 L957.5 449.8 L950.0 454.8 L942.5 451.0Z" fill="#d9d9d9"/>
<path d="M985.0 392.2 L1001.0 389.8 L1001.0 400.0 L986.2 400.0Z" fill="#e4e2df"/>
<path d="M870.0 407.2 L877.5 407.9 L876.2 414.8 L871.2 414.8Z" fill="#e4e2df"/>
<path d="M865.0 422.9 L875.0 424.1 L875.6 429.8 L868.8 427.2Z" fill="#e4e2df"/>
<path d="M858.1 437.2 L861.2 437.2 L862.5 461.0 L858.1 461.0Z" fill="#e4e2df"/>
<path d="M965.0 125.2 C965.2 128.2 965.8 137.8 966.2 142.8 C966.7 147.8 966.9 151.5 967.5 155.2 C968.1 159.0 969.6 163.6 970.0 165.2" fill="none" stroke="#9fcfe6" stroke-width="1.0" stroke-linecap="butt" stroke-linejoin="round"/>
<path d="M956.2 193.0 C956.6 195.1 958.2 201.3 958.1 205.5 C958.0 209.7 956.2 212.8 955.6 218.0 C955.0 223.2 955.1 232.6 954.4 236.8 C953.6 240.9 951.5 240.3 951.2 243.0 C951.0 245.7 952.4 249.8 953.1 253.0 C953.9 256.2 955.2 260.5 955.6 262.0" fill="none" stroke="#a8d4e6" stroke-width="1.0" stroke-linecap="butt" stroke-linejoin="round"/>
<path d="M905.0 262.0 C905.3 263.7 906.2 268.2 906.9 272.0 C907.5 275.8 908.5 279.9 908.8 284.5 C909.0 289.1 908.5 295.8 908.1 299.5 C907.7 303.2 906.6 305.8 906.2 307.0" fill="none" stroke="#a8d4e6" stroke-width="1.0" stroke-linecap="butt" stroke-linejoin="round"/>
<path d="M812.5 348.5 C815.2 350.0 822.9 355.0 828.8 357.2 C834.6 359.5 841.2 359.8 847.5 362.2 C853.8 364.8 860.0 369.1 866.2 372.2 C872.5 375.4 879.4 382.7 885.0 381.0 C890.6 379.3 897.5 365.4 900.0 362.2" fill="none" stroke="#b4d9e6" stroke-width="0.8" stroke-linecap="butt" stroke-linejoin="round"/>
<path d="M812.5 181.5 C814.6 181.3 820.6 181.1 825.0 180.2 C829.4 179.4 834.4 179.8 838.8 176.5 C843.1 173.2 847.7 163.3 851.2 160.2 C854.8 157.2 857.1 157.8 860.0 158.4 C862.9 159.0 866.2 162.1 868.8 164.0 C871.2 165.9 872.3 169.2 875.0 169.6 C877.7 170.0 882.1 167.9 885.0 166.5 C887.9 165.1 890.6 164.4 892.5 161.5 C894.4 158.6 894.6 151.7 896.2 149.0 C897.9 146.3 899.0 145.7 902.5 145.2 C906.0 144.8 911.6 146.9 917.5 146.5 C923.4 146.1 934.6 143.4 938.0 142.8" fill="none" stroke="#f59a78" stroke-width="1.25" stroke-linecap="butt" stroke-linejoin="round"/>
<path d="M880.0 150.2 C883.8 149.4 896.2 145.8 902.5 145.2 C908.8 144.7 913.3 147.3 917.5 147.1 C921.7 146.9 924.4 144.6 927.5 144.0 C930.6 143.4 933.8 142.3 936.2 143.4 C938.8 144.4 940.6 147.4 942.5 150.2 C944.4 153.1 945.6 156.9 947.5 160.2 C949.4 163.6 950.8 167.3 953.8 170.2 C956.7 173.2 961.9 175.5 965.0 177.8 C968.1 180.0 970.0 181.5 972.5 184.0 C975.0 186.5 978.8 191.5 980.0 193.0" fill="none" stroke="#f59a78" stroke-width="1.25" stroke-linecap="butt" stroke-linejoin="round"/>
<path d="M917.5 125.2 C917.4 128.8 917.1 140.5 916.9 146.5 C916.7 152.5 917.4 155.9 916.2 161.5 C915.1 167.1 911.9 175.0 910.0 180.2 C908.1 185.5 905.8 190.9 905.0 193.0" fill="none" stroke="#f59a78" stroke-width="1.25" stroke-linecap="butt" stroke-linejoin="round"/>
<path d="M853.8 125.2 C854.8 127.5 858.1 134.4 860.0 139.0 C861.9 143.6 862.9 148.4 865.0 152.8 C867.1 157.1 871.2 163.2 872.5 165.2" fill="none" stroke="#f59a78" stroke-width="1.25" stroke-linecap="butt" stroke-linejoin="round"/>
<path d="M812.5 142.8 C814.2 143.8 818.8 145.2 822.5 149.0 C826.2 152.8 831.9 160.7 835.0 165.2 C838.1 169.8 839.2 171.9 841.2 176.5 C843.3 181.1 846.5 190.2 847.5 193.0" fill="none" stroke="#f59a78" stroke-width="1.25" stroke-linecap="butt" stroke-linejoin="round"/>
<path d="M846.2 156.5 C846.0 158.0 844.8 161.9 845.0 165.2 C845.2 168.6 846.5 171.9 847.5 176.5 C848.5 181.1 850.6 190.2 851.2 193.0" fill="none" stroke="#f59a78" stroke-width="1.25" stroke-linecap="butt" stroke-linejoin="round"/>
<path d="M915.0 125.2 C915.4 128.8 917.3 139.4 917.5 146.5 C917.7 153.6 917.5 161.5 916.2 167.8 C915.0 174.0 911.9 179.8 910.0 184.0 C908.1 188.2 905.8 191.5 905.0 193.0" fill="none" stroke="#f59a78" stroke-width="1.25" stroke-linecap="butt" stroke-linejoin="round"/>
<path d="M812.5 218.0 C814.2 220.1 821.2 227.8 822.5 230.5 C823.8 233.2 820.4 233.6 820.0 234.2" fill="none" stroke="#f59a78" stroke-width="1.25" stroke-linecap="butt" stroke-linejoin="round"/>
<path d="M812.5 200.5 C814.6 202.4 821.2 209.2 825.0 211.8 C828.8 214.2 830.2 216.8 835.0 215.5 C839.8 214.2 847.5 206.8 853.8 204.2 C860.0 201.8 866.2 202.0 872.5 200.5 C878.8 199.0 888.1 196.3 891.2 195.5" fill="none" stroke="#f59a78" stroke-width="1.25" stroke-linecap="butt" stroke-linejoin="round"/>
<path d="M863.8 214.2 C865.6 217.0 872.9 224.9 875.0 230.5 C877.1 236.1 874.6 242.8 876.2 248.0 C877.9 253.2 883.5 259.7 885.0 262.0" fill="none" stroke="#f59a78" stroke-width="1.25" stroke-linecap="butt" stroke-linejoin="round"/>
<path d="M893.8 218.0 C894.0 220.1 895.4 226.3 895.0 230.5 C894.6 234.7 891.9 240.9 891.2 243.0" fill="none" stroke="#f59a78" stroke-width="1.25" stroke-linecap="butt" stroke-linejoin="round"/>
<path d="M911.2 196.8 C912.1 200.3 914.8 210.3 916.2 218.0 C917.7 225.7 919.2 235.7 920.0 243.0 C920.8 250.3 921.0 258.8 921.2 262.0" fill="none" stroke="#f59a78" stroke-width="1.25" stroke-linecap="butt" stroke-linejoin="round"/>
<path d="M930.0 193.0 L930.6 214.2" fill="none" stroke="#f59a78" stroke-width="1.25" stroke-linecap="butt" stroke-linejoin="round"/>
<path d="M983.8 209.2 C982.3 210.9 977.7 215.7 975.0 219.2 C972.3 222.8 970.0 226.5 967.5 230.5 C965.0 234.5 962.1 239.7 960.0 243.0 C957.9 246.3 955.8 249.2 955.0 250.5" fill="none" stroke="#f59a78" stroke-width="1.25" stroke-linecap="butt" stroke-linejoin="round"/>
<path d="M983.8 193.0 C984.8 195.7 987.1 204.7 990.0 209.2 C992.9 213.8 999.2 218.6 1001.0 220.5" fill="none" stroke="#f59a78" stroke-width="1.25" stroke-linecap="butt" stroke-linejoin="round"/>
<path d="M911.2 193.0 C911.9 197.2 913.5 209.7 915.0 218.0 C916.5 226.3 919.0 235.7 920.0 243.0 C921.0 250.3 921.0 258.8 921.2 262.0" fill="none" stroke="#f59a78" stroke-width="1.25" stroke-linecap="butt" stroke-linejoin="round"/>
<path d="M930.0 193.0 L931.2 211.8" fill="none" stroke="#f59a78" stroke-width="1.25" stroke-linecap="butt" stroke-linejoin="round"/>
<path d="M812.5 352.2 C814.2 353.5 818.1 358.7 822.5 359.8 C826.9 360.8 835.6 358.1 838.8 358.5 C841.9 358.9 840.8 361.6 841.2 362.2" fill="none" stroke="#f59a78" stroke-width="1.25" stroke-linecap="butt" stroke-linejoin="round"/>
<path d="M821.2 338.5 C822.3 340.6 824.6 347.7 827.5 351.0 C830.4 354.3 836.9 357.2 838.8 358.5" fill="none" stroke="#f59a78" stroke-width="1.25" stroke-linecap="butt" stroke-linejoin="round"/>
<path d="M857.5 347.2 C859.2 349.8 865.4 357.9 867.5 362.2 C869.6 366.6 870.4 369.5 870.0 373.5 C869.6 377.5 865.8 383.9 865.0 386.0" fill="none" stroke="#f59a78" stroke-width="1.25" stroke-linecap="butt" stroke-linejoin="round"/>
<path d="M872.5 331.0 C873.8 333.5 879.2 340.8 880.0 346.0 C880.8 351.2 878.8 357.7 877.5 362.2 C876.2 366.8 874.6 369.5 872.5 373.5 C870.4 377.5 866.2 383.9 865.0 386.0" fill="none" stroke="#f59a78" stroke-width="1.25" stroke-linecap="butt" stroke-linejoin="round"/>
<path d="M812.5 388.5 C816.2 388.9 828.5 389.1 835.0 391.0 C841.5 392.9 848.5 398.5 851.2 400.0" fill="none" stroke="#f59a78" stroke-width="1.25" stroke-linecap="butt" stroke-linejoin="round"/>
<path d="M967.5 274.5 C968.8 273.7 971.9 269.3 975.0 269.5 C978.1 269.7 981.9 274.3 986.2 275.8 C990.6 277.2 998.5 277.8 1001.0 278.2" fill="none" stroke="#f59a78" stroke-width="1.25" stroke-linecap="butt" stroke-linejoin="round"/>
<path d="M1001.0 401.0 C998.8 402.0 990.2 405.4 987.5 407.2 C984.8 409.1 985.4 411.4 985.0 412.2" fill="none" stroke="#f59a78" stroke-width="1.25" stroke-linecap="butt" stroke-linejoin="round"/>
<path d="M966.2 416.0 C966.0 418.9 965.0 427.5 965.0 433.5 C965.0 439.5 966.0 449.1 966.2 452.2" fill="none" stroke="#f59a78" stroke-width="1.25" stroke-linecap="butt" stroke-linejoin="round"/>
<path d="M975.0 427.2 C975.2 428.3 971.9 432.2 976.2 433.5 C980.6 434.8 996.9 434.5 1001.0 434.8" fill="none" stroke="#f59a78" stroke-width="1.25" stroke-linecap="butt" stroke-linejoin="round"/>
<path d="M812.5 322.0 C815.2 322.4 822.9 323.0 828.8 324.5 C834.6 326.0 844.4 329.9 847.5 331.0" fill="none" stroke="#f59a78" stroke-width="1.25" stroke-linecap="butt" stroke-linejoin="round"/>
<path d="M833.8 126.5 C835.4 128.8 840.6 134.8 843.8 140.2 C846.9 145.7 851.0 155.9 852.5 159.0" fill="none" stroke="#f4c070" stroke-width="1.15" stroke-linecap="butt" stroke-linejoin="round"/>
<path d="M878.8 136.5 C879.0 139.6 880.4 149.8 880.0 155.2 C879.6 160.7 876.9 166.7 876.2 169.0" fill="none" stroke="#f4c070" stroke-width="1.15" stroke-linecap="butt" stroke-linejoin="round"/>
<path d="M876.2 169.0 C874.6 171.3 869.0 178.8 866.2 182.8 C863.5 186.8 861.0 191.3 860.0 193.0" fill="none" stroke="#f4c070" stroke-width="1.15" stroke-linecap="butt" stroke-linejoin="round"/>
<path d="M876.2 169.0 C878.5 169.8 886.0 171.7 890.0 174.0 C894.0 176.3 896.7 181.7 900.0 182.8 C903.3 183.8 908.3 180.7 910.0 180.2" fill="none" stroke="#f4c070" stroke-width="1.15" stroke-linecap="butt" stroke-linejoin="round"/>
<path d="M960.0 126.5 C960.0 128.8 961.0 135.9 960.0 140.2 C959.0 144.6 955.2 149.4 953.8 152.8 C952.3 156.1 951.7 159.0 951.2 160.2" fill="none" stroke="#f4c070" stroke-width="1.15" stroke-linecap="butt" stroke-linejoin="round"/>
<path d="M953.8 146.5 C956.9 146.4 964.6 145.5 972.5 145.9 C980.4 146.3 996.2 148.5 1001.0 149.0" fill="none" stroke="#f4c070" stroke-width="1.15" stroke-linecap="butt" stroke-linejoin="round"/>
<path d="M972.5 145.9 C972.9 148.1 973.8 156.4 975.0 159.0 C976.2 161.6 979.2 161.1 980.0 161.5" fill="none" stroke="#f4c070" stroke-width="1.15" stroke-linecap="butt" stroke-linejoin="round"/>
<path d="M905.0 224.2 C907.7 223.2 915.6 219.7 921.2 218.0 C926.9 216.3 934.0 214.7 938.8 214.2 C943.5 213.8 948.1 215.3 950.0 215.5" fill="none" stroke="#f4c070" stroke-width="1.15" stroke-linecap="butt" stroke-linejoin="round"/>
<path d="M975.0 219.2 C975.8 221.8 977.7 232.8 980.0 234.2 C982.3 235.7 987.1 231.1 988.8 228.0 C990.4 224.9 989.8 217.6 990.0 215.5" fill="none" stroke="#f4c070" stroke-width="1.15" stroke-linecap="butt" stroke-linejoin="round"/>
<path d="M848.8 262.0 C848.5 265.1 847.9 273.5 847.5 280.8 C847.1 288.0 845.6 297.4 846.2 305.8 C846.9 314.1 850.4 326.8 851.2 331.0" fill="none" stroke="#f4c070" stroke-width="1.15" stroke-linecap="butt" stroke-linejoin="round"/>
<path d="M865.0 262.0 C864.8 266.2 863.8 279.7 863.8 287.0 C863.8 294.3 864.2 298.4 865.0 305.8 C865.8 313.1 868.1 326.8 868.8 331.0" fill="none" stroke="#f4c070" stroke-width="1.15" stroke-linecap="butt" stroke-linejoin="round"/>
<path d="M882.5 274.5 C882.1 277.6 879.6 287.0 880.0 293.2 C880.4 299.5 883.3 305.7 885.0 312.0 C886.7 318.3 889.2 327.8 890.0 331.0" fill="none" stroke="#f4c070" stroke-width="1.15" stroke-linecap="butt" stroke-linejoin="round"/>
<path d="M812.5 278.2 C816.2 278.7 827.1 280.5 835.0 280.8 C842.9 281.0 852.5 278.9 860.0 279.5 C867.5 280.1 876.7 283.7 880.0 284.5" fill="none" stroke="#f4c070" stroke-width="1.15" stroke-linecap="butt" stroke-linejoin="round"/>
<path d="M812.5 293.2 C816.2 292.8 827.1 291.0 835.0 290.8 C842.9 290.5 852.9 291.6 860.0 292.0 C867.1 292.4 874.6 293.0 877.5 293.2" fill="none" stroke="#f4c070" stroke-width="1.15" stroke-linecap="butt" stroke-linejoin="round"/>
<path d="M822.5 262.0 C822.7 266.2 824.0 278.7 823.8 287.0 C823.5 295.3 821.0 304.7 821.2 312.0 C821.5 319.3 824.4 327.8 825.0 331.0" fill="none" stroke="#f4c070" stroke-width="1.15" stroke-linecap="butt" stroke-linejoin="round"/>
<path d="M812.5 269.5 C818.3 269.9 836.2 271.2 847.5 272.0 C858.8 272.8 874.6 274.1 880.0 274.5" fill="none" stroke="#f4c070" stroke-width="1.15" stroke-linecap="butt" stroke-linejoin="round"/>
<path d="M835.0 303.2 C839.2 304.3 852.5 308.0 860.0 309.5 C867.5 311.0 876.7 311.6 880.0 312.0" fill="none" stroke="#f4c070" stroke-width="1.15" stroke-linecap="butt" stroke-linejoin="round"/>
<path d="M917.5 274.5 C920.0 274.3 927.1 273.2 932.5 273.2 C937.9 273.2 945.4 275.1 950.0 274.5 C954.6 273.9 958.3 270.3 960.0 269.5" fill="none" stroke="#f4c070" stroke-width="1.15" stroke-linecap="butt" stroke-linejoin="round"/>
<path d="M917.5 299.5 C920.0 299.3 927.9 298.2 932.5 298.2 C937.1 298.2 942.9 299.3 945.0 299.5" fill="none" stroke="#f4c070" stroke-width="1.15" stroke-linecap="butt" stroke-linejoin="round"/>
<path d="M932.5 267.0 C932.7 270.3 933.8 279.5 933.8 287.0 C933.8 294.5 932.7 307.8 932.5 312.0" fill="none" stroke="#f4c070" stroke-width="1.15" stroke-linecap="butt" stroke-linejoin="round"/>
<path d="M950.0 267.0 C950.2 271.4 951.2 285.3 951.2 293.2 C951.2 301.2 950.2 311.0 950.0 314.5" fill="none" stroke="#f4c070" stroke-width="1.15" stroke-linecap="butt" stroke-linejoin="round"/>
<path d="M841.2 414.8 C841.0 416.8 839.4 423.5 840.0 427.2 C840.6 431.0 844.2 435.6 845.0 437.2" fill="none" stroke="#f4c070" stroke-width="1.15" stroke-linecap="butt" stroke-linejoin="round"/>
<path d="M812.5 446.0 C814.8 446.0 822.5 445.0 826.2 446.0 C830.0 447.0 833.1 449.6 835.0 452.2 C836.9 454.9 837.1 460.1 837.5 461.6" fill="none" stroke="#f4c070" stroke-width="1.15" stroke-linecap="butt" stroke-linejoin="round"/>
<path d="M822.5 421.0 C824.0 422.2 828.3 427.5 831.2 428.5 C834.2 429.5 838.5 427.5 840.0 427.2" fill="none" stroke="#f4c070" stroke-width="1.15" stroke-linecap="butt" stroke-linejoin="round"/>
<path d="M822.5 368.5 C824.6 370.6 830.2 378.1 835.0 381.0 C839.8 383.9 848.5 385.2 851.2 386.0" fill="none" stroke="#f4c070" stroke-width="1.15" stroke-linecap="butt" stroke-linejoin="round"/>
<path d="M847.5 331.0 C848.1 334.1 848.8 343.5 851.2 349.8 C853.8 356.0 860.6 365.4 862.5 368.5" fill="none" stroke="#f4c070" stroke-width="1.15" stroke-linecap="butt" stroke-linejoin="round"/>
<path d="M870.0 135.2 C869.5 137.5 866.5 144.0 866.9 149.0 C867.3 154.0 870.3 160.5 872.5 165.2 C874.7 170.0 877.5 173.1 880.0 177.8 C882.5 182.4 886.2 190.5 887.5 193.0" fill="none" stroke="#e66c87" stroke-width="1.35" stroke-linecap="butt" stroke-linejoin="round"/>
<path d="M1001.0 150.2 C999.6 150.9 994.5 152.1 992.5 154.0 C990.5 155.9 990.2 158.6 988.8 161.5 C987.3 164.4 985.8 168.4 983.8 171.5 C981.7 174.6 979.0 177.3 976.2 180.2 C973.5 183.2 969.6 186.9 967.5 189.0 C965.4 191.1 964.4 192.3 963.8 193.0" fill="none" stroke="#e66c87" stroke-width="1.35" stroke-linecap="butt" stroke-linejoin="round"/>
<path d="M847.5 239.2 C848.3 237.8 850.0 233.2 852.5 230.5 C855.0 227.8 858.8 225.5 862.5 223.0 C866.2 220.5 870.8 217.4 875.0 215.5 C879.2 213.6 883.3 212.4 887.5 211.8 C891.7 211.1 895.0 211.4 900.0 211.8 C905.0 212.1 912.5 213.2 917.5 213.6 C922.5 214.0 926.6 213.9 930.0 214.2 C933.4 214.6 936.7 215.3 938.0 215.5" fill="none" stroke="#e66c87" stroke-width="1.35" stroke-linecap="butt" stroke-linejoin="round"/>
<path d="M880.0 215.5 C882.1 214.9 886.2 212.1 892.5 211.8 C898.8 211.4 910.8 213.1 917.5 213.6 C924.2 214.1 928.5 213.9 932.5 214.9 C936.5 215.8 939.0 217.5 941.2 219.2 C943.5 221.0 944.9 223.0 946.2 225.5 C947.6 228.0 948.8 231.3 949.4 234.2 C950.0 237.2 949.1 240.3 950.0 243.0 C950.9 245.7 953.3 247.3 955.0 250.5 C956.7 253.7 959.2 260.1 960.0 262.0" fill="none" stroke="#e66c87" stroke-width="1.35" stroke-linecap="butt" stroke-linejoin="round"/>
<path d="M812.5 234.2 C814.2 235.7 819.6 239.9 822.5 243.0 C825.4 246.1 826.7 250.5 830.0 253.0 C833.3 255.5 840.4 257.2 842.5 258.0" fill="none" stroke="#e66c87" stroke-width="1.35" stroke-linecap="butt" stroke-linejoin="round"/>
<path d="M890.0 193.0 C890.6 194.7 892.9 199.9 893.8 203.0 C894.6 206.1 893.8 209.2 895.0 211.8 C896.2 214.2 899.8 215.1 901.2 218.0 C902.7 220.9 903.5 225.5 903.8 229.2 C904.0 233.0 903.5 237.6 902.5 240.5 C901.5 243.4 897.9 244.9 897.5 246.8 C897.1 248.6 897.9 250.3 900.0 251.8 C902.1 253.2 906.2 254.5 910.0 255.5 C913.8 256.5 919.6 256.9 922.5 258.0 C925.4 259.1 926.7 261.3 927.5 262.0" fill="none" stroke="#e66c87" stroke-width="1.35" stroke-linecap="butt" stroke-linejoin="round"/>
<path d="M846.2 193.0 C846.9 195.1 848.8 201.5 850.0 205.5 C851.2 209.5 852.1 213.0 853.8 216.8 C855.4 220.5 858.9 224.7 860.0 228.0 C861.1 231.3 860.8 234.2 860.6 236.8 C860.4 239.2 858.2 241.3 858.8 243.0 C859.3 244.7 861.0 245.7 863.8 246.8 C866.5 247.8 871.9 247.8 875.0 249.2 C878.1 250.7 880.8 253.4 882.5 255.5 C884.2 257.6 884.6 260.9 885.0 262.0" fill="none" stroke="#e66c87" stroke-width="1.35" stroke-linecap="butt" stroke-linejoin="round"/>
<path d="M965.0 193.0 C963.3 194.2 957.7 197.4 955.0 200.5 C952.3 203.6 951.0 208.6 948.8 211.8 C946.5 214.9 943.3 216.5 941.2 219.2 C939.2 222.0 938.1 225.1 936.2 228.0 C934.4 230.9 931.2 233.2 930.0 236.8 C928.8 240.3 929.2 245.0 928.8 249.2 C928.3 253.5 927.7 259.9 927.5 262.0" fill="none" stroke="#e66c87" stroke-width="1.35" stroke-linecap="butt" stroke-linejoin="round"/>
<path d="M812.5 305.8 C814.6 304.7 820.2 301.3 825.0 299.5 C829.8 297.7 836.9 295.3 841.2 295.1 C845.6 294.9 848.1 297.3 851.2 298.2 C854.4 299.2 857.1 301.0 860.0 300.8 C862.9 300.5 865.8 298.2 868.8 297.0 C871.7 295.8 874.4 293.8 877.5 293.2 C880.6 292.7 884.2 294.1 887.5 293.9 C890.8 293.7 894.6 292.5 897.5 292.0 C900.4 291.5 903.8 291.0 905.0 290.8" fill="none" stroke="#e66c87" stroke-width="1.35" stroke-linecap="butt" stroke-linejoin="round"/>
<path d="M835.0 331.0 C836.2 329.5 839.4 323.9 842.5 322.0 C845.6 320.1 850.0 320.3 853.8 319.5 C857.5 318.7 861.2 318.9 865.0 317.0 C868.8 315.1 872.5 310.3 876.2 308.2 C880.0 306.2 884.2 305.5 887.5 304.5 C890.8 303.5 893.8 303.0 896.2 302.0 C898.8 301.0 901.5 298.9 902.5 298.2" fill="none" stroke="#e66c87" stroke-width="1.35" stroke-linecap="butt" stroke-linejoin="round"/>
<path d="M880.0 262.0 C880.8 262.8 883.3 264.9 885.0 267.0 C886.7 269.1 887.9 271.8 890.0 274.5 C892.1 277.2 895.2 280.8 897.5 283.2 C899.8 285.8 902.7 288.5 903.8 289.5" fill="none" stroke="#e66c87" stroke-width="1.35" stroke-linecap="butt" stroke-linejoin="round"/>
<path d="M927.5 262.0 C926.7 264.1 924.2 271.0 922.5 274.5 C920.8 278.0 919.2 280.8 917.5 283.2 C915.8 285.8 913.3 288.5 912.5 289.5" fill="none" stroke="#e66c87" stroke-width="1.35" stroke-linecap="butt" stroke-linejoin="round"/>
<path d="M905.0 298.2 C904.6 300.5 903.8 308.0 902.5 312.0 C901.2 316.0 898.8 318.8 897.5 322.0 C896.2 325.2 895.4 329.5 895.0 331.0" fill="none" stroke="#e66c87" stroke-width="1.35" stroke-linecap="butt" stroke-linejoin="round"/>
<path d="M913.8 292.0 C915.0 293.2 919.6 296.2 921.2 299.5 C922.9 302.8 924.8 309.1 923.8 312.0 C922.7 314.9 917.7 315.3 915.0 317.0 C912.3 318.7 909.6 319.7 907.5 322.0 C905.4 324.3 903.3 329.5 902.5 331.0" fill="none" stroke="#e66c87" stroke-width="1.35" stroke-linecap="butt" stroke-linejoin="round"/>
<path d="M900.0 290.8 C900.4 290.1 901.0 287.7 902.5 287.0 C904.0 286.3 907.0 285.9 908.8 286.4 C910.5 286.9 912.3 288.6 913.1 290.1 C914.0 291.7 914.3 294.2 913.8 295.8 C913.2 297.3 911.7 298.9 910.0 299.5 C908.3 300.1 905.4 300.1 903.8 299.5 C902.1 298.9 900.6 297.2 900.0 295.8 C899.4 294.3 900.0 291.6 900.0 290.8" fill="none" stroke="#e66c87" stroke-width="1.35" stroke-linecap="butt" stroke-linejoin="round"/>
<path d="M912.5 288.9 C915.4 288.6 925.0 287.6 930.0 287.0 C935.0 286.4 937.9 285.4 942.5 285.1 C947.1 284.8 953.5 285.9 957.5 285.1 C961.5 284.4 962.5 281.1 966.2 280.8 C970.0 280.4 975.6 281.8 980.0 283.2 C984.4 284.7 989.0 287.6 992.5 289.5 C996.0 291.4 999.6 293.7 1001.0 294.5" fill="none" stroke="#e66c87" stroke-width="1.35" stroke-linecap="butt" stroke-linejoin="round"/>
<path d="M927.5 264.5 C929.0 266.2 933.8 271.1 936.2 274.5 C938.8 277.9 941.9 281.4 942.5 285.1 C943.1 288.9 940.6 292.9 940.0 297.0 C939.4 301.1 938.3 307.0 938.8 309.5 C939.2 312.0 941.9 311.6 942.5 312.0" fill="none" stroke="#e66c87" stroke-width="1.35" stroke-linecap="butt" stroke-linejoin="round"/>
<path d="M1001.0 293.2 C998.8 292.5 991.4 289.5 987.5 288.9 C983.6 288.2 980.8 287.7 977.5 289.5 C974.2 291.3 970.4 295.8 967.5 299.5 C964.6 303.2 962.5 309.5 960.0 312.0 C957.5 314.5 955.4 314.5 952.5 314.5 C949.6 314.5 945.4 312.6 942.5 312.0 C939.6 311.4 939.2 310.3 935.0 310.8 C930.8 311.2 921.7 312.8 917.5 314.5 C913.3 316.2 912.5 318.0 910.0 320.8 C907.5 323.5 903.8 329.3 902.5 331.0" fill="none" stroke="#e66c87" stroke-width="1.35" stroke-linecap="butt" stroke-linejoin="round"/>
<path d="M927.5 264.5 C926.7 266.2 924.4 271.0 922.5 274.5 C920.6 278.0 917.9 283.0 916.2 285.8 C914.6 288.5 913.1 289.9 912.5 290.8" fill="none" stroke="#e66c87" stroke-width="1.35" stroke-linecap="butt" stroke-linejoin="round"/>
<path d="M966.2 280.8 C965.2 278.9 961.9 272.6 960.0 269.5 C958.1 266.4 955.8 263.2 955.0 262.0" fill="none" stroke="#e66c87" stroke-width="1.35" stroke-linecap="butt" stroke-linejoin="round"/>
<path d="M856.2 331.0 C854.8 333.1 849.8 338.3 847.5 343.5 C845.2 348.7 844.0 356.0 842.5 362.2 C841.0 368.5 839.2 374.7 838.8 381.0 C838.3 387.3 839.8 396.8 840.0 400.0" fill="none" stroke="#e66c87" stroke-width="1.35" stroke-linecap="butt" stroke-linejoin="round"/>
<path d="M833.8 331.0 C832.5 333.5 829.0 341.2 826.2 346.0 C823.5 350.8 819.8 356.6 817.5 359.8 C815.2 362.9 813.3 363.9 812.5 364.8" fill="none" stroke="#e66c87" stroke-width="1.35" stroke-linecap="butt" stroke-linejoin="round"/>
<path d="M902.5 331.0 C902.5 332.2 902.9 335.4 902.5 338.5 C902.1 341.6 901.0 345.8 900.0 349.8 C899.0 353.7 898.3 358.5 896.2 362.2 C894.2 366.0 890.6 369.3 887.5 372.2 C884.4 375.2 881.2 377.5 877.5 379.8 C873.8 382.0 868.5 383.9 865.0 386.0 C861.5 388.1 858.5 389.9 856.2 392.2 C854.0 394.6 852.1 398.7 851.2 400.0" fill="none" stroke="#e66c87" stroke-width="1.35" stroke-linecap="butt" stroke-linejoin="round"/>
<path d="M902.5 338.5 C904.8 341.4 913.8 351.0 916.2 356.0 C918.8 361.0 917.9 365.6 917.5 368.5 C917.1 371.4 917.1 371.4 913.8 373.5 C910.4 375.6 903.1 378.1 897.5 381.0 C891.9 383.9 884.4 387.8 880.0 391.0 C875.6 394.2 872.7 398.5 871.2 400.0" fill="none" stroke="#e66c87" stroke-width="1.35" stroke-linecap="butt" stroke-linejoin="round"/>
<path d="M891.2 363.5 C892.7 363.3 896.9 362.2 900.0 362.2 C903.1 362.2 906.9 362.0 910.0 363.5 C913.1 365.0 915.4 368.1 918.8 371.0 C922.1 373.9 926.8 378.3 930.0 381.0 C933.2 383.7 936.7 386.2 938.0 387.2" fill="none" stroke="#e66c87" stroke-width="1.35" stroke-linecap="butt" stroke-linejoin="round"/>
<path d="M871.2 386.0 C871.0 387.7 869.8 393.7 870.0 396.0 C870.2 398.3 872.1 399.3 872.5 400.0" fill="none" stroke="#e66c87" stroke-width="1.35" stroke-linecap="butt" stroke-linejoin="round"/>
<path d="M942.5 393.5 L950.0 400.0" fill="none" stroke="#e66c87" stroke-width="1.35" stroke-linecap="butt" stroke-linejoin="round"/>
<path d="M946.2 396.0 C949.6 398.7 961.7 408.5 966.2 412.2 C970.8 416.0 971.0 416.4 973.8 418.5 C976.5 420.6 980.2 421.6 982.5 424.8 C984.8 427.9 985.8 434.1 987.5 437.2 C989.2 440.4 990.2 441.6 992.5 443.5 C994.8 445.4 999.6 447.7 1001.0 448.5" fill="none" stroke="#e66c87" stroke-width="1.35" stroke-linecap="butt" stroke-linejoin="round"/>
<path d="M1001.0 424.8 C1000.4 426.2 999.5 430.8 997.5 433.5 C995.5 436.2 991.7 438.5 988.8 441.0 C985.8 443.5 983.5 446.6 980.0 448.5 C976.5 450.4 970.8 451.8 967.5 452.2 C964.2 452.7 961.2 451.2 960.0 451.0" fill="none" stroke="#e66c87" stroke-width="1.35" stroke-linecap="butt" stroke-linejoin="round"/>
<path d="M876.2 396.0 C875.2 397.2 871.5 401.0 870.0 403.5 C868.5 406.0 867.5 408.3 867.5 411.0 C867.5 413.7 870.4 418.1 870.0 419.8 C869.6 421.4 867.1 420.8 865.0 421.0 C862.9 421.2 860.0 420.0 857.5 421.0 C855.0 422.0 851.7 425.2 850.0 427.2 C848.3 429.3 847.1 431.6 847.5 433.5 C847.9 435.4 851.2 436.0 852.5 438.5 C853.8 441.0 854.8 444.6 855.0 448.5 C855.2 452.4 854.0 459.4 853.8 461.6" fill="none" stroke="#e66c87" stroke-width="1.35" stroke-linecap="butt" stroke-linejoin="round"/>
<path d="M812.5 398.5 C814.2 399.1 818.8 401.4 822.5 402.2 C826.2 403.1 830.4 403.9 835.0 403.5 C839.6 403.1 846.2 401.0 850.0 399.8 C853.8 398.5 856.2 396.6 857.5 396.0" fill="none" stroke="#e66c87" stroke-width="1.35" stroke-linecap="butt" stroke-linejoin="round"/>
<path d="M826.2 396.0 C826.2 398.1 827.3 404.3 826.2 408.5 C825.2 412.7 822.3 417.0 820.0 421.0 C817.7 425.0 813.8 430.4 812.5 432.2" fill="none" stroke="#e66c87" stroke-width="1.35" stroke-linecap="butt" stroke-linejoin="round"/>
<path d="M833.8 408.5 C833.5 411.6 831.7 422.0 832.5 427.2 C833.3 432.5 837.3 436.0 838.8 439.8 C840.2 443.5 841.2 445.8 841.2 449.8 C841.2 453.7 839.2 461.2 838.8 463.5" fill="none" stroke="#e66c87" stroke-width="1.35" stroke-linecap="butt" stroke-linejoin="round"/>
<path d="M841.2 449.8 L853.8 448.5" fill="none" stroke="#e66c87" stroke-width="1.35" stroke-linecap="butt" stroke-linejoin="round"/>
<path d="M870.0 419.8 L875.0 424.1" fill="none" stroke="#e66c87" stroke-width="1.35" stroke-linecap="butt" stroke-linejoin="round"/>
<path d="M926.2 126.5 C926.5 129.2 926.9 137.8 927.5 142.8 C928.1 147.8 928.2 153.4 930.0 156.5 C931.8 159.6 936.7 160.7 938.0 161.5" fill="none" stroke="#a080c0" stroke-width="0.6" stroke-linecap="butt" stroke-linejoin="round" opacity="0.7"/>
<path d="M925.0 126.5 C925.2 128.8 925.4 135.5 926.2 140.2 C927.1 145.0 927.9 150.9 930.0 155.2 C932.1 159.6 936.0 163.0 938.8 166.5 C941.5 170.0 944.0 172.1 946.2 176.5 C948.5 180.9 951.5 190.2 952.5 193.0" fill="none" stroke="#a080c0" stroke-width="0.6" stroke-linecap="butt" stroke-linejoin="round" opacity="0.7"/>
<path d="M940.0 126.5 C941.7 128.6 947.5 134.8 950.0 139.0 C952.5 143.2 951.7 148.4 955.0 151.5 C958.3 154.6 967.1 155.0 970.0 157.8 C972.9 160.5 970.8 165.0 972.5 167.8 C974.2 170.5 977.3 172.1 980.0 174.0 C982.7 175.9 985.2 177.3 988.8 179.0 C992.2 180.7 999.0 183.2 1001.0 184.0" fill="none" stroke="#a080c0" stroke-width="0.6" stroke-linecap="butt" stroke-linejoin="round" opacity="0.7"/>
<path d="M812.5 251.8 C815.2 250.9 822.9 247.4 828.8 246.8 C834.6 246.1 842.3 249.5 847.5 248.0 C852.7 246.5 855.4 239.9 860.0 238.0 C864.6 236.1 870.0 235.9 875.0 236.8 C880.0 237.6 885.6 242.4 890.0 243.0 C894.4 243.6 899.4 240.9 901.2 240.5" fill="none" stroke="#a080c0" stroke-width="0.6" stroke-linecap="butt" stroke-linejoin="round" opacity="0.7"/>
<path d="M907.5 229.2 C909.0 229.9 912.7 232.8 916.2 233.0 C919.8 233.2 926.7 230.9 928.8 230.5" fill="none" stroke="#a080c0" stroke-width="0.6" stroke-linecap="butt" stroke-linejoin="round" opacity="0.7"/>
<path d="M955.0 193.0 C955.4 195.1 957.5 201.3 957.5 205.5 C957.5 209.7 955.6 212.8 955.0 218.0 C954.4 223.2 954.6 232.6 953.8 236.8 C952.9 240.9 950.2 240.3 950.0 243.0 C949.8 245.7 951.7 249.8 952.5 253.0 C953.3 256.2 954.6 260.5 955.0 262.0" fill="none" stroke="#a080c0" stroke-width="0.6" stroke-linecap="butt" stroke-linejoin="round" opacity="0.7"/>
<path d="M905.0 229.2 C906.7 229.9 911.2 232.8 915.0 233.0 C918.8 233.2 925.0 229.7 927.5 230.5 C930.0 231.3 927.5 236.3 930.0 238.0 C932.5 239.7 939.6 239.7 942.5 240.5 C945.4 241.3 946.7 242.6 947.5 243.0" fill="none" stroke="#a080c0" stroke-width="0.6" stroke-linecap="butt" stroke-linejoin="round" opacity="0.7"/>
<path d="M955.0 262.0 C955.8 264.1 958.3 271.0 960.0 274.5 C961.7 278.0 965.0 279.1 965.0 283.2 C965.0 287.4 962.5 294.3 960.0 299.5 C957.5 304.7 952.5 309.2 950.0 314.5 C947.5 319.8 945.8 328.2 945.0 331.0" fill="none" stroke="#a080c0" stroke-width="0.6" stroke-linecap="butt" stroke-linejoin="round" opacity="0.7"/>
<path d="M943.8 331.0 C944.8 332.7 947.9 337.5 950.0 341.0 C952.1 344.5 953.4 348.9 956.2 352.2 C959.1 355.6 966.2 358.3 966.9 361.0 C967.5 363.7 963.2 364.8 960.0 368.5 C956.8 372.2 951.9 378.2 947.5 383.5 C943.1 388.8 936.0 397.2 933.8 400.0" fill="none" stroke="#a080c0" stroke-width="0.6" stroke-linecap="butt" stroke-linejoin="round" opacity="0.7"/>
<path d="M960.0 368.5 C957.7 368.8 951.0 369.5 946.2 370.4 C941.5 371.2 934.8 372.1 931.2 373.5 C927.7 374.9 926.0 377.7 925.0 378.5" fill="none" stroke="#a080c0" stroke-width="0.6" stroke-linecap="butt" stroke-linejoin="round" opacity="0.7"/>
<path d="M936.2 396.0 C934.0 398.7 926.9 407.7 922.5 412.2 C918.1 416.8 912.9 419.1 910.0 423.5 C907.1 427.9 907.9 434.8 905.0 438.5 C902.1 442.2 895.8 443.7 892.5 446.0 C889.2 448.3 886.2 451.2 885.0 452.2" fill="none" stroke="#a080c0" stroke-width="0.6" stroke-linecap="butt" stroke-linejoin="round" opacity="0.7"/>
<path d="M885.0 362.2 C887.5 361.9 895.8 360.4 900.0 360.4 C904.2 360.4 908.3 361.9 910.0 362.2" fill="none" stroke="#a080c0" stroke-width="0.6" stroke-linecap="butt" stroke-linejoin="round" opacity="0.7"/>
<path d="M910.0 331.0 C911.5 332.9 915.4 338.5 918.8 342.2 C922.1 346.0 927.5 350.6 930.0 353.5 C932.5 356.4 934.6 355.6 933.8 359.8 C932.9 363.9 928.3 371.8 925.0 378.5 C921.7 385.2 915.6 396.4 913.8 400.0" fill="none" stroke="#7da3e8" stroke-width="0.55" stroke-linecap="butt" stroke-linejoin="round" stroke-dasharray="1.6 1.2" opacity="0.8"/>
<path d="M930.0 331.0 C931.7 333.5 937.1 340.8 940.0 346.0 C942.9 351.2 946.0 356.4 947.5 362.2 C949.0 368.1 948.5 377.9 948.8 381.0" fill="none" stroke="#7da3e8" stroke-width="0.55" stroke-linecap="butt" stroke-linejoin="round" stroke-dasharray="1.6 1.2" opacity="0.8"/>
<path d="M916.2 338.5 C918.3 341.4 925.3 352.0 928.8 356.0 C932.2 360.0 936.7 359.5 936.9 362.2 C937.1 365.0 932.8 366.0 930.0 372.2 C927.2 378.5 921.7 395.4 920.0 400.0" fill="none" stroke="#7da3e8" stroke-width="0.55" stroke-linecap="butt" stroke-linejoin="round" stroke-dasharray="1.6 1.2" opacity="0.8"/>
<path d="M915.0 396.0 C911.2 404.3 897.1 436.4 892.5 446.0 C887.9 455.6 888.3 452.2 887.5 453.5" fill="none" stroke="#7da3e8" stroke-width="0.55" stroke-linecap="butt" stroke-linejoin="round" stroke-dasharray="1.6 1.2" opacity="0.8"/>
<path d="M920.0 396.0 C916.2 404.3 902.1 436.4 897.5 446.0 C892.9 455.6 893.3 452.2 892.5 453.5" fill="none" stroke="#7da3e8" stroke-width="0.55" stroke-linecap="butt" stroke-linejoin="round" stroke-dasharray="1.6 1.2" opacity="0.8"/>
<path d="M860.0 399.8 L868.8 397.2" fill="none" stroke="#7da3e8" stroke-width="0.55" stroke-linecap="butt" stroke-linejoin="round" stroke-dasharray="1.6 1.2" opacity="0.8"/>
<path d="M909.8 359.5 h5 M912.2 357.1 v4.4 M911.2 361.4 h2" stroke="#8461c9" stroke-width="0.9" stroke-linecap="round"/>
<rect x="832.5" y="367.7" width="14.2" height="8.6" rx="0.8" fill="#f1c6cf" stroke="#d58a9b" stroke-width="0.5"/>
<text x="839.6" y="372.2" font-size="5.2" fill="#7c3348" text-anchor="middle" dominant-baseline="central">E83</text>
<rect x="931.6" y="384.2" width="10.8" height="8.6" rx="0.8" fill="#f1c6cf" stroke="#d58a9b" stroke-width="0.5"/>
<text x="937.0" y="388.7" font-size="5.2" fill="#7c3348" text-anchor="middle" dominant-baseline="central">CA</text>
<rect x="852.5" y="434.2" width="8.0" height="8.6" rx="0.8" fill="#f1c6cf" stroke="#d58a9b" stroke-width="0.5"/>
<text x="856.5" y="438.7" font-size="5.2" fill="#7c3348" text-anchor="middle" dominant-baseline="central">B</text>
<text x="871.2" y="133.4" font-size="6.4" fill="#303030" text-anchor="middle" dominant-baseline="central" stroke="#fff" stroke-width="1.2" paint-order="stroke" stroke-linejoin="round" font-weight="500">白岡市</text>
<text x="866.2" y="145.0" font-size="6.4" fill="#303030" text-anchor="middle" dominant-baseline="central" stroke="#fff" stroke-width="1.2" paint-order="stroke" stroke-linejoin="round" font-weight="500">蓮田市</text>
<text x="900.9" y="154.0" font-size="6.6" fill="#303030" text-anchor="middle" dominant-baseline="central" stroke="#fff" stroke-width="1.2" paint-order="stroke" stroke-linejoin="round" font-weight="500">春日部市</text>
<text x="895.0" y="129.2" font-size="4.6" fill="#303030" text-anchor="middle" dominant-baseline="central" stroke="#fff" stroke-width="1.2" paint-order="stroke" stroke-linejoin="round" font-weight="500">杉戸町</text>
<text x="925.6" y="177.5" font-size="4.6" fill="#303030" text-anchor="middle" dominant-baseline="central" stroke="#fff" stroke-width="1.2" paint-order="stroke" stroke-linejoin="round" font-weight="500">松伏町</text>
<text x="839.5" y="153.0" font-size="6.4" fill="#303030" text-anchor="middle" dominant-baseline="central" stroke="#fff" stroke-width="1.2" paint-order="stroke" stroke-linejoin="round" font-weight="500">上尾市</text>
<text x="815.5" y="129.2" font-size="6.4" fill="#303030" text-anchor="middle" dominant-baseline="central" stroke="#fff" stroke-width="1.2" paint-order="stroke" stroke-linejoin="round" font-weight="500">北本市</text>
<text x="813.8" y="141.5" font-size="6.4" fill="#303030" text-anchor="middle" dominant-baseline="central" stroke="#fff" stroke-width="1.2" paint-order="stroke" stroke-linejoin="round" font-weight="500">桶川</text>
<text x="948.5" y="164.0" font-size="6.6" fill="#303030" text-anchor="middle" dominant-baseline="central" stroke="#fff" stroke-width="1.2" paint-order="stroke" stroke-linejoin="round" font-weight="500">野田市</text>
<text x="987.5" y="165.5" font-size="6.6" fill="#303030" text-anchor="middle" dominant-baseline="central" stroke="#fff" stroke-width="1.2" paint-order="stroke" stroke-linejoin="round" font-weight="500">守谷市</text>
<text x="994.4" y="130.9" font-size="6.6" fill="#303030" text-anchor="middle" dominant-baseline="central" stroke="#fff" stroke-width="1.2" paint-order="stroke" stroke-linejoin="round" font-weight="500">常総市</text>
<text x="915.6" y="195.2" font-size="6.6" fill="#303030" text-anchor="middle" dominant-baseline="central" stroke="#fff" stroke-width="1.2" paint-order="stroke" stroke-linejoin="round" font-weight="500">越谷市</text>
<text x="860.0" y="209.0" font-size="6.8" fill="#303030" text-anchor="middle" dominant-baseline="central" stroke="#fff" stroke-width="1.2" paint-order="stroke" stroke-linejoin="round" font-weight="500">さいたま市</text>
<text x="834.4" y="220.5" font-size="6.4" fill="#303030" text-anchor="middle" dominant-baseline="central" stroke="#fff" stroke-width="1.2" paint-order="stroke" stroke-linejoin="round" font-weight="500">志木市</text>
<text x="921.9" y="225.8" font-size="6.4" fill="#303030" text-anchor="middle" dominant-baseline="central" stroke="#fff" stroke-width="1.2" paint-order="stroke" stroke-linejoin="round" font-weight="500">草加市</text>
<text x="890.0" y="234.5" font-size="6.8" fill="#303030" text-anchor="middle" dominant-baseline="central" stroke="#fff" stroke-width="1.2" paint-order="stroke" stroke-linejoin="round" font-weight="500">川口市</text>
<text x="828.5" y="241.1" font-size="6.4" fill="#303030" text-anchor="middle" dominant-baseline="central" stroke="#fff" stroke-width="1.2" paint-order="stroke" stroke-linejoin="round" font-weight="500">新座市</text>
<text x="917.5" y="245.5" font-size="6.8" fill="#303030" text-anchor="middle" dominant-baseline="central" stroke="#fff" stroke-width="1.2" paint-order="stroke" stroke-linejoin="round" font-weight="500">足立区</text>
<text x="895.0" y="258.6" font-size="6.4" fill="#303030" text-anchor="middle" dominant-baseline="central" stroke="#fff" stroke-width="1.2" paint-order="stroke" stroke-linejoin="round" font-weight="500">北区</text>
<text x="811.0" y="199.9" font-size="6.4" fill="#303030" text-anchor="middle" dominant-baseline="central" stroke="#fff" stroke-width="1.2" paint-order="stroke" stroke-linejoin="round" font-weight="500">ふじみ野市</text>
<text x="959.4" y="211.5" font-size="6.4" fill="#303030" text-anchor="middle" dominant-baseline="central" stroke="#fff" stroke-width="1.2" paint-order="stroke" stroke-linejoin="round" font-weight="500">流山市</text>
<text x="988.8" y="206.1" font-size="6.8" fill="#303030" text-anchor="middle" dominant-baseline="central" stroke="#fff" stroke-width="1.2" paint-order="stroke" stroke-linejoin="round" font-weight="500">柏市</text>
<text x="959.4" y="243.9" font-size="6.6" fill="#303030" text-anchor="middle" dominant-baseline="central" stroke="#fff" stroke-width="1.2" paint-order="stroke" stroke-linejoin="round" font-weight="500">松戸市</text>
<text x="998.9" y="249.2" font-size="6.4" fill="#303030" text-anchor="middle" dominant-baseline="central" stroke="#fff" stroke-width="1.2" paint-order="stroke" stroke-linejoin="round" font-weight="500">鎌ケ谷市</text>
<text x="856.2" y="263.9" font-size="6.6" fill="#303030" text-anchor="middle" dominant-baseline="central" stroke="#fff" stroke-width="1.2" paint-order="stroke" stroke-linejoin="round" font-weight="500">練馬区</text>
<text x="822.5" y="268.9" font-size="6.4" fill="#303030" text-anchor="middle" dominant-baseline="central" stroke="#fff" stroke-width="1.2" paint-order="stroke" stroke-linejoin="round" font-weight="500">西東京市</text>
<text x="893.8" y="277.2" font-size="6.0" fill="#303030" text-anchor="middle" dominant-baseline="central" stroke="#fff" stroke-width="1.2" paint-order="stroke" stroke-linejoin="round" font-weight="500">文京</text>
<text x="855.6" y="286.4" font-size="6.6" fill="#303030" text-anchor="middle" dominant-baseline="central" stroke="#fff" stroke-width="1.2" paint-order="stroke" stroke-linejoin="round" font-weight="500">杉並区</text>
<text x="823.8" y="305.5" font-size="6.4" fill="#303030" text-anchor="middle" dominant-baseline="central" stroke="#fff" stroke-width="1.2" paint-order="stroke" stroke-linejoin="round" font-weight="500">調布市</text>
<text x="863.8" y="311.8" font-size="6.8" fill="#303030" text-anchor="middle" dominant-baseline="central" stroke="#fff" stroke-width="1.2" paint-order="stroke" stroke-linejoin="round" font-weight="500">世田谷区</text>
<text x="896.2" y="313.0" font-size="6.6" fill="#303030" text-anchor="middle" dominant-baseline="central" stroke="#fff" stroke-width="1.2" paint-order="stroke" stroke-linejoin="round" font-weight="500">港区</text>
<text x="832.5" y="317.2" font-size="6.4" fill="#303030" text-anchor="middle" dominant-baseline="central" stroke="#fff" stroke-width="1.2" paint-order="stroke" stroke-linejoin="round" font-weight="500">狛江市</text>
<text x="806.6" y="284.5" font-size="6.4" fill="#303030" text-anchor="middle" dominant-baseline="central" stroke="#fff" stroke-width="1.2" paint-order="stroke" stroke-linejoin="round" font-weight="500">武蔵野市</text>
<text x="969.4" y="271.8" font-size="6.6" fill="#303030" text-anchor="middle" dominant-baseline="central" stroke="#fff" stroke-width="1.2" paint-order="stroke" stroke-linejoin="round" font-weight="500">市川市</text>
<text x="991.9" y="286.0" font-size="6.6" fill="#303030" text-anchor="middle" dominant-baseline="central" stroke="#fff" stroke-width="1.2" paint-order="stroke" stroke-linejoin="round" font-weight="500">船橋市</text>
<text x="946.9" y="296.0" font-size="6.8" fill="#303030" text-anchor="middle" dominant-baseline="central" stroke="#fff" stroke-width="1.2" paint-order="stroke" stroke-linejoin="round" font-weight="500">江戸川区</text>
<text x="1005.9" y="299.5" font-size="6.4" fill="#303030" text-anchor="middle" dominant-baseline="central" stroke="#fff" stroke-width="1.2" paint-order="stroke" stroke-linejoin="round" font-weight="500">習志野市</text>
<text x="959.4" y="308.5" font-size="6.4" fill="#303030" text-anchor="middle" dominant-baseline="central" stroke="#fff" stroke-width="1.2" paint-order="stroke" stroke-linejoin="round" font-weight="500">浦安市</text>
<text x="924.4" y="310.5" font-size="6.8" fill="#303030" text-anchor="middle" dominant-baseline="central" stroke="#fff" stroke-width="1.2" paint-order="stroke" stroke-linejoin="round" font-weight="500">江東区</text>
<text x="896.2" y="333.8" font-size="6.6" fill="#303030" text-anchor="middle" dominant-baseline="central" stroke="#fff" stroke-width="1.2" paint-order="stroke" stroke-linejoin="round" font-weight="500">品川区</text>
<text x="886.9" y="352.9" font-size="6.8" fill="#303030" text-anchor="middle" dominant-baseline="central" stroke="#fff" stroke-width="1.2" paint-order="stroke" stroke-linejoin="round" font-weight="500">大田区</text>
<text x="882.5" y="367.2" font-size="6.8" fill="#303030" text-anchor="middle" dominant-baseline="central" stroke="#fff" stroke-width="1.2" paint-order="stroke" stroke-linejoin="round" font-weight="500">川崎市</text>
<text x="856.2" y="408.2" font-size="6.8" fill="#303030" text-anchor="middle" dominant-baseline="central" stroke="#fff" stroke-width="1.2" paint-order="stroke" stroke-linejoin="round" font-weight="500">横浜市</text>
<text x="979.4" y="415.4" font-size="6.4" fill="#303030" text-anchor="middle" dominant-baseline="central" stroke="#fff" stroke-width="1.2" paint-order="stroke" stroke-linejoin="round" font-weight="500">袖ケ浦市</text>
<text x="965.0" y="441.0" font-size="6.6" fill="#303030" text-anchor="middle" dominant-baseline="central" stroke="#fff" stroke-width="1.2" paint-order="stroke" stroke-linejoin="round" font-weight="500">木更津市</text>
<text x="820.0" y="461.6" font-size="6.2" fill="#303030" text-anchor="middle" dominant-baseline="central" stroke="#fff" stroke-width="1.2" paint-order="stroke" stroke-linejoin="round" font-weight="500">鎌倉市</text>
<text x="903.8" y="293.9" font-size="7.2" fill="#333" text-anchor="middle" dominant-baseline="central" stroke="#fff" stroke-width="1.2" paint-order="stroke" stroke-linejoin="round">東京都</text>
<defs><linearGradient id="mk2" x1="0" y1="0" x2="0" y2="1"><stop offset="0" stop-color="#8349d6"/><stop offset="1" stop-color="#5a2dcf"/></linearGradient></defs><g transform="translate(906.2 293.2)"><ellipse cx="3.5" cy="-1.2" rx="5.5" ry="1.8" fill="#000" opacity="0.18"/><path d="M0 0 C-1.2 -4.5 -6.4 -8.6 -6.4 -14 A6.4 6.4 0 1 1 6.4 -14 C6.4 -8.6 1.2 -4.5 0 0Z" fill="url(#mk2)" stroke="#5631b6" stroke-width="0.5"/><circle cx="0" cy="-14" r="2.3" fill="#fff"/></g>
<g><rect x="818.0" y="131.6" width="17" height="33.6" rx="2.2" fill="#fff" stroke="rgba(0,0,0,0.28)" stroke-width="1"/><path d="M818.0 148.4 h17" stroke="#ccc" stroke-width="0.55"/><path d="M823.8 140.2 h5.4 M826.5 137.5 v5.4" stroke="#111" stroke-width="1.15"/><path d="M824.0 156.8 h5" stroke="#111" stroke-width="1.1"/></g>
<rect x="866.4" y="454.2" width="134.6" height="7.6" fill="#fff" opacity="0.72"/><text x="868.8" y="458.2" font-size="5.9" dominant-baseline="central" textLength="129.6" lengthAdjust="spacingAndGlyphs"><tspan fill="#0078a8">Leaflet</tspan><tspan fill="#333"> | Map data © OpenStreetMap contributors</tspan></text>
</svg>
</svg>
<span id="t0" class="t" style="left:45.00px;top:8.90px;font-size:6.60px;color:#3a3a3a;transform:translateY(-50%) scaleX(0.9878)">sio-musubi</span>
<span id="t1" class="t" style="left:120.40px;top:27.30px;font-size:6.40px;color:#6a6a6a;transform:translateY(-50%) scaleX(0.8137)">ファイル</span>
<span id="t2" class="t" style="left:155.00px;top:27.30px;font-size:6.80px;color:#222;transform:translateY(-50%) scaleX(1.0960)">E:/tlv/sio-musubi_01-00.html</span>
<h1 class="banner"></h1>
<span id="t3" class="t" style="left:389.00px;top:63.20px;font-size:16.00px;color:#fff;transform:translateY(-50%) scaleX(0.9455)">旅ログ</span>
<span id="t4" class="t" style="left:435.40px;top:63.20px;font-size:16.00px;color:#fff;transform:translateY(-50%) scaleX(0.9928)">viewer</span>
<span id="t5" class="t" style="left:497.20px;top:63.20px;font-size:16.00px;color:#fff;transform:translateY(-50%) scaleX(1.0186)">sio-musubi</span>
<span id="t6" class="t" style="left:592.00px;top:63.20px;font-size:16.00px;color:#fff;transform:translateY(-50%) scaleX(1.0507)">ver 1.0</span>
<span id="t7" class="t" style="left:13.30px;top:90.90px;font-size:8.60px;color:#2a2a2a;transform:translateY(-50%) scaleX(1.0037)">タイトル :</span>
<span id="t8" class="t" style="left:124.20px;top:90.90px;font-size:8.60px;color:#2a2a2a;transform:translateY(-50%) scaleX(1.0287)">詳細 :</span>
<span id="t9" class="t" style="left:13.30px;top:110.50px;font-size:8.60px;color:#2a2a2a;transform:translateY(-50%) scaleX(1.0707)">mp4</span>
<span class="fbtn" style="left:43px;top:104px;width:58.4px;height:13.4px"></span>
<span id="t10" class="t" style="left:47.30px;top:110.70px;font-size:7.10px;color:#111;transform:translateY(-50%) scaleX(0.9807)">ファイルの選択</span>
<span id="t11" class="t" style="left:104.20px;top:110.70px;font-size:7.10px;color:#c9379c;transform:translateY(-50%) scaleX(0.9991)">ファイルが選択されていません</span>
<span id="t12" class="t" style="left:622.00px;top:110.50px;font-size:8.60px;color:#2a2a2a;transform:translateY(-50%) scaleX(1.1215)">kml</span>
<span class="fbtn" style="left:649px;top:104px;width:58.4px;height:13.4px"></span>
<span id="t13" class="t" style="left:653.30px;top:110.70px;font-size:7.10px;color:#111;transform:translateY(-50%) scaleX(0.9807)">ファイルの選択</span>
<span id="t14" class="t" style="left:710.20px;top:110.70px;font-size:7.10px;color:#c9379c;transform:translateY(-50%) scaleX(0.9991)">ファイルが選択されていません</span>
<span id="t15" class="t" style="left:32.50px;top:437.00px;font-size:7.60px;color:#fff;transform:translateY(-50%) scaleX(1.1636)">0:00</span>
<span id="t16" class="t" style="left:12.80px;top:481.30px;font-size:8.60px;color:#2a2a2a;transform:translateY(-50%) scaleX(1.0408)">再生時間[秒]</span>
<span id="t17" class="t" style="left:74.50px;top:481.30px;font-size:8.60px;color:#2a2a2a;transform:translateY(-50%) scaleX(1.0980)">: 0</span>
<span id="t18" class="t" style="left:12.80px;top:498.10px;font-size:8.60px;color:#2a2a2a;transform:translateY(-50%) scaleX(1.0408)">再生位置[秒]</span>
<span id="t19" class="t" style="left:74.50px;top:498.10px;font-size:8.60px;color:#2a2a2a;transform:translateY(-50%) scaleX(1.0980)">: 0</span>
<button class="clr" style="left:12.8px;top:511.4px;width:36.9px;height:13.6px"></button>
<span id="t20" class="t" style="left:17.50px;top:518.10px;font-size:7.10px;color:#fff;font-weight:500;transform:translateY(-50%) scaleX(0.9727)">全クリア</span>
<span class="lnkbg" style="left:4.2px;top:533.3px;width:111.6px;height:13.3px"></span>
<a id="t21" class="t" style="left:4.40px;top:540.20px;font-size:8.60px;color:#6b3fa0;text-decoration:underline;text-decoration-thickness:0.6px;text-underline-offset:1px;transform:translateY(-50%) scaleX(1.0708)">Powered by TabiLogViewer</a>
<span id="t22" class="t" style="left:622.70px;top:478.90px;font-size:8.60px;color:#2a2a2a;transform:translateY(-50%) scaleX(0.9849)">現在地　緯度</span>
<span id="t23" class="t" style="left:685.60px;top:478.90px;font-size:8.60px;color:#2a2a2a;transform:translateY(-50%) scaleX(1.0876)">:</span>
<span class="inp" style="left:691px;top:473.2px;width:94.2px;height:11.4px"></span>
<span id="t24" class="t" style="left:693.20px;top:479.80px;font-size:7.30px;color:#1a1a1a;transform:translateY(-50%) scaleX(0.9739)">35.681298</span>
<span id="t25" class="t" style="left:622.70px;top:498.30px;font-size:8.60px;color:#2a2a2a;transform:translateY(-50%) scaleX(0.9849)">現在地　経度</span>
<span id="t26" class="t" style="left:685.60px;top:498.30px;font-size:8.60px;color:#2a2a2a;transform:translateY(-50%) scaleX(1.0876)">:</span>
<span class="inp" style="left:691px;top:492.8px;width:94.2px;height:11.4px"></span>
<span id="t27" class="t" style="left:693.20px;top:499.40px;font-size:7.30px;color:#1a1a1a;transform:translateY(-50%) scaleX(0.9669)">139.7662469</span>
<span id="t28" class="t" style="left:622.70px;top:516.90px;font-size:8.60px;color:#2a2a2a;transform:translateY(-50%) scaleX(0.9905)">行程ポイント数</span>
<span id="t29" class="t" style="left:694.40px;top:516.90px;font-size:8.60px;color:#2a2a2a;transform:translateY(-50%) scaleX(1.0458)">: 0</span>
<span id="t30" class="t" style="left:622.70px;top:534.10px;font-size:8.60px;color:#2a2a2a;transform:translateY(-50%) scaleX(1.0143)">行程ポイント間隔[秒]</span>
<span id="t31" class="t" style="left:718.80px;top:534.10px;font-size:8.60px;color:#2a2a2a;transform:translateY(-50%) scaleX(1.0667)">: 0</span>
</div></body></html>
